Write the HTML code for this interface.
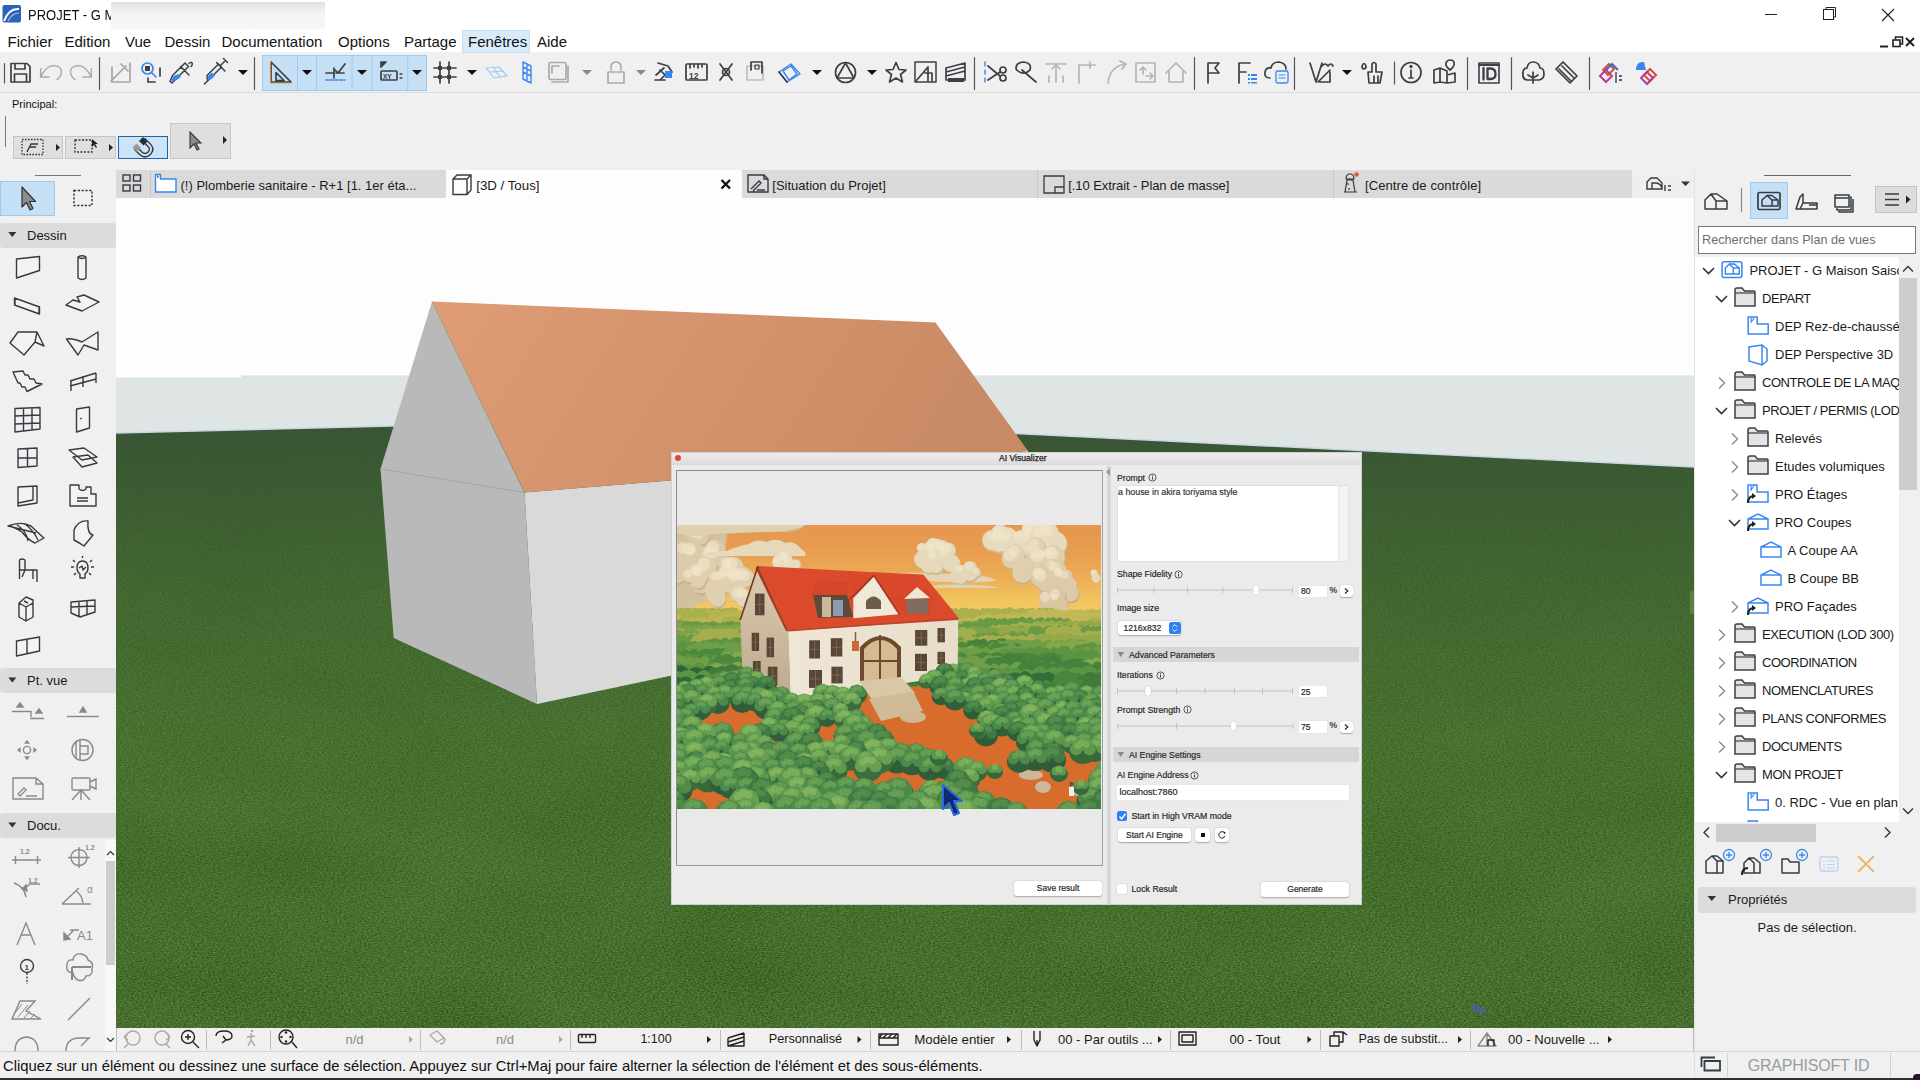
<!DOCTYPE html>
<html><head><meta charset="utf-8">
<style>
*{box-sizing:border-box}
html,body{margin:0;padding:0;width:1920px;height:1080px;overflow:hidden;background:#f0f0f0;font-family:"Liberation Sans",sans-serif;color:#1a1a1a}
.a{position:absolute}
.t{position:absolute;white-space:nowrap;line-height:1}
svg{position:absolute;overflow:visible}
#dialog .t{-webkit-text-stroke:0.18px currentColor}
</style></head><body>

<!-- title + menu -->
<div class="a" style="left:0;top:0;width:1920px;height:52px;background:#fff"></div>
<svg style="left:0;top:0" width="30" height="28"><rect x="2.5" y="5" width="18.5" height="17.5" rx="2" fill="#2d62b8"/><path d="M4 21 Q9 8 19 9" stroke="#fff" stroke-width="2" fill="none"/><path d="M8 21 Q12 13 19 13" stroke="#9cc3f0" stroke-width="1.2" fill="none"/></svg>
<div class="t" style="left:27.5px;top:7px;font-size:15.5px;color:#111;transform:scaleX(0.84);transform-origin:0 0">PROJET - G M</div>
<div class="a" style="left:111px;top:2px;width:214px;height:27px;background:linear-gradient(#e2e2e2,#f3f3f3 40%,#f6f6f6)"></div>

<div id="menu" style="font-size:15px;color:#111">
<svg style="left:1763px;top:8px" width="140" height="14"><path d="M2 6.5 H14" stroke="#222" stroke-width="1"/><rect x="60.5" y="1.5" width="10" height="10" fill="none" stroke="#222" stroke-width="1"/><path d="M63 1.5 V-0.5 H72.5 V9 H70.5" fill="none" stroke="#222" stroke-width="1"/><path d="M119 1 L131 13 M131 1 L119 13" stroke="#222" stroke-width="1.1"/></svg>
<div class="a" style="left:461.5px;top:29.5px;width:68px;height:23px;background:#d9ebf9;border:1px solid #c4e0f7"></div>
<div class="t" style="left:7.5px;top:34px">Fichier</div>
<div class="t" style="left:64.5px;top:34px">Edition</div>
<div class="t" style="left:125px;top:34px">Vue</div>
<div class="t" style="left:164.5px;top:34px">Dessin</div>
<div class="t" style="left:221.5px;top:34px">Documentation</div>
<div class="t" style="left:338px;top:34px">Options</div>
<div class="t" style="left:404px;top:34px">Partage</div>
<div class="t" style="left:468px;top:34px">Fenêtres</div>
<div class="t" style="left:537px;top:34px">Aide</div>
<svg style="left:1876px;top:34px" width="44" height="16"><path d="M4 12.5 H12" stroke="#222" stroke-width="2"/><rect x="17" y="6" width="7" height="6.5" fill="none" stroke="#222" stroke-width="1.6"/><path d="M19.5 5.5 V3 H26.5 V10 H24" fill="none" stroke="#222" stroke-width="1.6"/><path d="M30 4 L38 12 M38 4 L30 12" stroke="#222" stroke-width="2"/></svg>
</div>

<!-- toolbar -->
<div class="a" style="left:0;top:92px;width:1920px;height:1px;background:#dcdcdc"></div>
<div id="toolbar">
<div class="a" style="left:262px;top:55px;width:165px;height:35.5px;background:#c5dff5;border:1px solid #99cbf3"></div>
<svg style="left:0;top:52px" width="1920" height="41" viewBox="0 52 1920 41">
<g stroke="#3b4045" stroke-width="1.7" fill="none" stroke-linejoin="round" stroke-linecap="round">
<!-- separators -->
<path d="M4.5 63.5 V83 M99.5 57.5 V89.5 M254.5 57.5 V89.5 M974.5 57.5 V89.5 M1194.5 57.5 V89.5 M1294.5 57.5 V89.5 M1394.5 62 V84 M1467.5 57.5 V89.5 M1511.5 57.5 V89.5 M1589.5 57.5 V89.5" stroke="#555" stroke-width="1.2"/>
<!-- save -->
<path d="M11 63.5 H27 L30 66.5 V82 H11 Z M15 63.5 V69 H25 V63.5 M14.5 82 V74 H26.5 V82"/>
<!-- undo redo (gray) -->
<g stroke="#a4aaad" stroke-width="1.4" stroke-linecap="butt" stroke-linejoin="miter"><path d="M40.6 68 V77 H49.6 M41 76.5 Q46 66 53.6 65.6 Q61.5 65.8 61.5 72 Q61 77.5 56.3 79.8"/><path d="M91.4 68 V77 H82.4 M91 76.5 Q86 66 78.4 65.6 Q70.5 65.8 70.5 72 Q71 77.5 75.7 79.8"/></g>
<!-- gray select icon -->
<g stroke="#a5a5a5"><path d="M112 67 V82 H130 V63 M111 81 L126 66 M121 64 L128 71"/></g>
<!-- magnifier select -->
<circle cx="147.5" cy="68.5" r="5.5" stroke="#3a86f0"/><path d="M151.5 72.5 L156 77" stroke="#3a86f0"/><rect x="145" y="66" width="5" height="5" fill="#3b4045" stroke="none"/><path d="M160 68 V76 M148 82 H155 M148 78 V82"/>
<!-- pipette -->
<path d="M172 83 L176 79 L188.5 66.5 L185 63 L172.5 75.5 L170 81.5 Z M189 63.5 Q191 61.5 192 63 Q193 64.5 191 66.5 M180.5 66.5 L189 75" stroke-width="1.5"/><path d="M171.3 81.5 L173 76.5 L178 74 L181 77 L176 80.5 Z" fill="#3a86f0" stroke="none"/>
<!-- syringe -->
<path d="M204.5 84 L208 80.5 M207.5 81 L210 78.5 L221.5 67 L218.5 64 L207 75.5 Z M216.5 62.5 L225 71 M220 66 L225.5 60.5 M223.5 58.5 L227.5 62.5" stroke-width="1.5"/><path d="M207.5 80 L208 76 L212 72.5 L215 75.5 L211 79.5 Z" fill="#3a86f0" stroke="none"/>
<!-- dropdown -->
<path d="M238 70 H248 L243 75 Z" fill="#111" stroke="none"/>
<!-- group 1: triangle ruler -->
<path d="M271 62 L291 82 H271 Z M276 72.5 L284 80.5 H276 Z"/>
<path d="M270.5 62 V83 H291" stroke="#e68a2e" stroke-width="1.2" stroke-dasharray="2 1.5"/>
<path d="M302 70 H312 L307 75 Z" fill="#111" stroke="none"/>
<path d="M297.5 56 V90 M316.7 56 V90 M352 56 V90 M372 56 V90 M407.7 56 V90" stroke="#9ecaf0" stroke-width="1"/>
<!-- group 2: guide -->
<path d="M326 73 H333 M334 68 V78 M336 73 H344 M335 70 L338 73 L345 64"/><path d="M326 80 H345" stroke="#3a86f0" stroke-width="1.4" stroke-dasharray="3 1.5"/>
<path d="M357 70 H367 L362 75 Z" fill="#111" stroke="none"/>
<!-- group 3: XY -->
<rect x="381" y="71" width="16" height="9" rx="1"/><path d="M381 62 L381 67 M381 62 L386 62 L381 67 Z" fill="#3b4045"/><text x="383" y="78.5" font-size="6.5" font-weight="bold" fill="#3b4045" stroke="none" font-family="Liberation Sans">XY</text><path d="M400 74 H402 M400 78 H402" stroke-width="1.3"/>
<path d="M412 70 H422 L417 75 Z" fill="#111" stroke="none"/>
<!-- grid -->
<path d="M434 68 H456 M434 77 H456 M440 62 V83 M449 62 V83"/><g fill="#3b4045" stroke="none"><rect x="438" y="66" width="4" height="4"/><rect x="447" y="66" width="4" height="4"/><rect x="438" y="75" width="4" height="4"/><rect x="447" y="75" width="4" height="4"/></g>
<path d="M467 70 H477 L472 75 Z" fill="#111" stroke="none"/>
<!-- light plane -->
<path d="M486 68 L499 67 L507 76 L494 78 Z M490 72 L503 71 M493 67 L500 77" stroke="#9ccaf5" stroke-width="1.2"/>
<!-- blue grid -->
<path d="M523 62 L531 66 V83 L523 79 Z M523 67 L531 71 M523 72 L531 76 M527 64 V81" stroke="#3a86f0" stroke-width="1.4"/>
<!-- gray square -->
<g stroke="#aaa"><rect x="549" y="62.5" width="17" height="17" rx="1.5"/><path d="M568 66 V82 H552"/><path d="M552 73 V66 H559"/></g>
<path d="M582 70 H592 L587 75 Z" fill="#888" stroke="none"/>
<!-- clip -->
<g stroke="#aaa"><path d="M611 70 Q610 62 616 62 Q622 62 621 70 M608 72 H624 V83 H608 Z"/></g>
<path d="M636 70 H646 L641 75 Z" fill="#888" stroke="none"/>
<!-- hammer tool -->
<path d="M655 80 H665 M656 75 L664 68 M658 63 L668 66 L672 72 L666 76 L660 70 M660 80 L668 72"/><rect x="665" y="71" width="7" height="7" fill="#3a86f0" stroke="none"/>
<!-- 12 ruler -->
<rect x="686" y="64" width="21" height="16" rx="1"/><path d="M690 64 V68 M694 64 V67 M698 64 V68 M702 64 V67"/><text x="689" y="78.5" font-size="8.5" font-weight="bold" fill="#3b4045" stroke="none" font-family="Liberation Sans">12</text>
<!-- X -->
<path d="M720 64 L732 80 M732 64 L720 80"/><circle cx="726" cy="72" r="3.5"/>
<!-- dashed square -->
<g stroke="#aaa" stroke-width="1.2"><rect x="747" y="66" width="16" height="14"/></g><path d="M751 62 H762 V73 M751 62 V70"/><rect x="755" y="65" width="4" height="4" stroke-width="1.2"/>
<!-- blue diamond -->
<path d="M779 72 L791 64 L800 74 L787 82 Z M783 71 L791 66 L797 74 L789 80 Z" stroke="#3a86f0" stroke-width="1.4"/><path d="M779 72 L787 82" stroke="#3b4045"/>
<path d="M812 70 H822 L817 75 Z" fill="#111" stroke="none"/>
<!-- circle triangle -->
<circle cx="845.5" cy="72.5" r="10"/><path d="M845.5 63 L837 78 H854 Z"/>
<path d="M867 70 H877 L872 75 Z" fill="#111" stroke="none"/>
<!-- star -->
<path d="M896 62.5 L899 69.5 L906 70 L900.5 74.5 L902.5 82 L896 78 L889.5 82 L891.5 74.5 L886 70 L893 69.5 Z"/>
<!-- doc -->
<rect x="915" y="62" width="21" height="20" stroke-width="1.5"/><path d="M916 81 L928 67 V81 M925 73 H932 V81"/>
<!-- layers -->
<path d="M946 68 L965 63 M946 72 L965 67 M946 76 L965 71 M946 68 V80 H965 V63"/><rect x="948" y="78" width="16" height="4" fill="#3b4045" stroke="none"/>
<!-- scissors -->
<path d="M985 62 V66 M985 70 V74 M985 78 V82" stroke="#3a86f0" stroke-width="1.4"/><circle cx="1003" cy="70" r="3"/><circle cx="1003" cy="78" r="3"/><path d="M988 66 L1000 76 M988 80 L1000 72"/>
<!-- magic wand -->
<path d="M1022 70 L1036 82 M1016 69 Q1016 62 1024 62 Q1032 63 1030 70 L1026 73 Q1020 74 1016 69 Z"/>
<!-- gray tools -->
<g stroke="#b5b5b5"><path d="M1046 64 H1066 M1056 65 V82 M1052 69 L1056 65 L1060 69 M1049 76 V82 M1063 76 V82"/>
<path d="M1079 83 V65 H1095 M1090 62 V68"/>
<path d="M1108 83 Q1110 66 1126 64 M1120 61 L1126 64 L1122 69"/>
<rect x="1136" y="63" width="19" height="19"/><path d="M1140 70 L1143 67 L1146 70 M1143 67 V74 M1146 76 H1152 M1150 73 L1153 76 L1150 79"/>
<path d="M1166 73 L1176 63 L1186 73 M1169 71 V82 H1183 V71"/></g>
<!-- flag -->
<path d="M1208 83 V63 H1219 L1215 68 L1219 73 H1208"/>
<!-- F list -->
<path d="M1239 83 V63 H1250 M1239 72 H1246"/><g fill="#3a86f0" stroke="none"><rect x="1248" y="74" width="2" height="2"/><rect x="1251" y="74" width="6" height="2"/><rect x="1248" y="78" width="2" height="2"/><rect x="1251" y="78" width="6" height="2"/><rect x="1248" y="82" width="2" height="1.5"/><rect x="1251" y="82" width="6" height="1.5"/></g>
<!-- cloud -->
<path d="M1270 78 Q1264 78 1265 72 Q1266 67 1271 68 Q1272 62 1279 62 Q1286 63 1286 69"/><rect x="1276" y="71" width="12" height="12" rx="1.5" stroke="#3a86f0" stroke-width="1.3"/><path d="M1279 75 H1285 M1279 78 H1285" stroke="#3a86f0" stroke-width="1.2"/>
<!-- V check -->
<path d="M1310 63 L1316 82 L1322 63 M1318 82 L1330 70 M1320 82 H1330 V72 M1322 66 Q1325 62 1328 66 Q1331 62 1333 66"/>
<path d="M1342 70 H1352 L1347 75 Z" fill="#111" stroke="none"/>
<!-- brush -->
<path d="M1362 66 Q1364 61 1366 66 Q1366 69 1364 69 Q1362 69 1362 66 Z M1369 83 H1380 L1382 72 L1376 72 V64 Q1374 61 1372 64 V72 H1368 Z M1374 76 V83 M1378 76 V83"/>
<!-- info -->
<circle cx="1411" cy="72.5" r="10"/><path d="M1411 70 V78 M1409 78 H1413"/><circle cx="1411" cy="66.5" r="0.8" fill="#3b4045"/>
<!-- map -->
<path d="M1434 70 L1440 68 V82 L1434 83 Z M1440 68 L1447 71 V83 L1440 82 M1447 75 L1455 73 V82 L1447 83"/><path d="M1450 70 Q1445 66 1446 63 Q1447 60 1450 60 Q1454 60 1454 63 Q1455 66 1450 70 Z"/>
<!-- ID -->
<rect x="1479" y="63" width="20" height="20" stroke-width="1.6"/><path d="M1479 65 H1499" stroke-width="2"/><path d="M1483.5 68 V79.5 M1487.5 68.5 H1490.5 Q1495.5 68.5 1495.5 74 Q1495.5 79 1490.5 79 H1487.5 Z" stroke-width="2.3"/>
<!-- tree -->
<path d="M1533 83 V72 M1528 75 L1533 78 L1538 75 M1527 80 Q1522 79 1523 73 Q1523 68 1527 68 Q1528 62 1533 62 Q1539 62 1540 68 Q1544 68 1544 74 Q1544 79 1539 80 Z"/>
<!-- tag -->
<path d="M1558 67 L1563 62 L1577 76 L1570 83 L1556 69 Z M1562 66 L1574 78 M1559 69 L1571 81"/>
</g>
<!-- colorful icons -->
<g fill="none" stroke-width="2">
<path d="M1603 70 L1609 64 L1614 69 L1608 75 Z" stroke="#d9502f"/><path d="M1600 76 L1606 70 L1612 76 L1606 82 Z" stroke="#b43d9a"/><path d="M1606 70 L1612 64 L1618 70" stroke="#3a6ac8"/><path d="M1616 72 V83 M1619 76 H1622 M1619 80 H1622" stroke="#333" stroke-width="1.3"/>
<path d="M1636 70 Q1636 61 1644 62 L1646 70 Z" fill="#3a86f0" stroke="none"/><path d="M1644 75 L1650 69 L1656 75 L1650 81 Z" stroke="#d9502f"/><path d="M1641 78 L1647 72 L1653 78 L1647 84 Z" stroke="#b43d9a"/>
</g>
</svg>
</div>

<!-- info box -->
<div class="t" style="left:12px;top:99px;font-size:11px;color:#111">Principal:</div>
<div id="infobox">
<div class="a" style="left:5px;top:116px;width:1px;height:31px;background:#777"></div>
<div class="a" style="left:13px;top:136px;width:50px;height:23px;background:#dfdfdf;border:1px solid #c6c6c6"></div>
<div class="a" style="left:65px;top:136px;width:51px;height:23px;background:#dfdfdf;border:1px solid #c6c6c6"></div>
<div class="a" style="left:118px;top:136px;width:50px;height:23px;background:#cce4f7;border:1.5px solid #1f63b0"></div>
<div class="a" style="left:170px;top:123px;width:61px;height:36px;background:#dfdfdf;border:1px solid #c6c6c6"></div>
<svg style="left:0;top:120px" width="240" height="42" viewBox="0 120 240 42">
<g fill="none" stroke="#333" stroke-width="1.3">
<rect x="22" y="139.5" width="21" height="15" stroke-dasharray="1.6 1.4"/><path d="M27 152 L31 144 H38 M30 147 H36"/>
<rect x="75" y="140" width="17" height="12" stroke-dasharray="2 1.5"/>
<g transform="translate(-1,-2.5)"><path d="M144.5 142 L150.5 148 Q154 152 150 156 Q146 159.5 142 156 L136.5 150.5" stroke="#2e3438" stroke-width="4.6" stroke-linecap="butt"/><path d="M144.5 142 L150.5 148 Q154 152 150 156 Q146 159.5 142 156 L136.5 150.5" stroke="#cce4f7" stroke-width="2" stroke-linecap="butt"/></g>
</g>
<path d="M56 144 L60 147.5 L56 151 Z M109 144 L113 147.5 L109 151 Z M223 136 L227 140 L223 144 Z" fill="#222"/>
<path d="M92 139 L92 147 L94 145 L96 148 L97 147 L95 144 L98 144 Z" fill="#222"/>
<g transform="translate(-1,-0.5)"><path d="M144 137.5 L148.5 142 L144.5 146 L140 141.5 Z" fill="#2a2f33"/><path d="M137.5 144 L142 148.5 L138 152.5 L133.5 148 Z" fill="#9a9a9a"/></g>
<path d="M190 132 L190 148 L194 144 L197 150 L199 149 L196 143 L201 143 Z" fill="#8a8a8a" stroke="#333" stroke-width="1.1"/>
</svg>
</div>

<!-- left toolbox -->
<div id="left">
<div class="a" style="left:35px;top:175px;width:46px;height:1px;background:#777"></div>
<div class="a" style="left:0;top:181px;width:55px;height:35px;background:#c5dff5;border:1px solid #99cbf3"></div>
<div class="a" style="left:0;top:223px;width:116px;height:25px;background:#dcdcdc;border-radius:3px"></div>
<div class="t" style="left:27px;top:229px;font-size:13px;color:#1a1a1a">Dessin</div>
<div class="a" style="left:0;top:668.3px;width:116px;height:24.4px;background:#dcdcdc;border-radius:3px"></div>
<div class="t" style="left:27px;top:674px;font-size:13px;color:#1a1a1a">Pt. vue</div>
<div class="a" style="left:0;top:813.3px;width:116px;height:24.4px;background:#dcdcdc;border-radius:3px"></div>
<div class="t" style="left:27px;top:819px;font-size:13px;color:#1a1a1a">Docu.</div>
<div class="a" style="left:105px;top:840px;width:11px;height:211px;background:#f7f7f7"></div>
<div class="a" style="left:106px;top:860.6px;width:9px;height:104.5px;background:#cdcdcd"></div>
<svg style="left:0;top:170px" width="116" height="881" viewBox="0 170 116 881">
<path d="M8.3 232 H16.3 L12.3 237 Z M8.3 677.5 H16.3 L12.3 682.5 Z M8.3 822.5 H16.3 L12.3 827.5 Z" fill="#333"/>
<path d="M22 187 L22 207 L26.5 202.5 L30 210 L33 208.5 L29.5 201.5 L35.5 201.5 Z" fill="#8c8c8c" stroke="#333" stroke-width="1.2" stroke-linejoin="round"/>
<rect x="74" y="190.5" width="18" height="15" fill="none" stroke="#333" stroke-width="1.4" stroke-dasharray="2.2 1.6"/>
<path d="M107 855 L110.5 851.5 L114 855 M107 1038 L110.5 1041.5 L114 1038" fill="none" stroke="#333" stroke-width="1.2"/>
<g fill="#f3f3f3" stroke="#353b40" stroke-width="1.4" stroke-linejoin="round">
<!-- row1 wall, column -->
<path d="M16.5 259 L39.5 256.5 V270.5 L16.5 278 Z"/>
<path d="M78 257 Q82 254.5 86 257 V278 Q82 281 78 278 Z M78 257 Q82 260 86 257" />
<!-- row2 beam, slab -->
<path d="M14.5 298 L39.5 307 V314 L14.5 305 Z M15 298 V305 M39 307 V314"/>
<path d="M66 305 L73 300 L80 302 L77 297 L84 295 L99 302 L82 311 Z"/>
<!-- row3 roof, shell -->
<path d="M10 343 L18 332 H37 L44 346 L35 342 L24 355 Z M37 332 L35 342"/>
<path d="M66.5 339 L78 355 L84 345 L98 350 L98 332 L82 342 Q72 338 66.5 339 Z"/>
<!-- row4 stair, railing -->
<path d="M13 372 L23 371 L25 375 L28 375 L30 379 L34 379 L36 383 L42 384 L27 391.5 L25 387 L22 387 L20 383 L18 383 Z"/>
<path d="M70 381 L96 373 M70 386 L96 379 M71 391 V381 M83 387 V376 M96 383 V373" fill="none"/>
<!-- row5 curtain wall, door -->
<path d="M15 408.5 L40 407.5 V429 L15 432 Z M15 416 L40 415 M15 424 L40 423 M23.5 408 V431 M32 408 V430" fill="none"/>
<path d="M76.5 409 L89.5 407 V428 L76.5 432 Z"/><path d="M80 419 L82 418" stroke-width="1.2"/>
<!-- row6 window, skylight -->
<path d="M18 449 L37 448 V466 L18 467.5 Z M18 458 H37 M27.5 448.5 V467" fill="none"/>
<path d="M69 450 L84 448 L97 457 L82 460 Z M73 457 L88 455 L97 463 L82 467 Z"/>
<!-- row7 corner window, object-ish -->
<path d="M18 487 L37 486 V503 L18 506 Z M33 486 V500 L18 503"/>
<path d="M70 485 H79 V489 Q83 492 86 489 V487 H91 V494 H96 V506 H70 Z M77 498 H88 M77 501 H88" />
<!-- row8 mesh, morph -->
<path d="M8 526 Q18 522 25 524 L31 526 Q37 532 44 538 L35 543 Q28 540 22 532 Q15 527 8 526 Z M17 525 Q26 530 28 541 M25 524 Q33 530 38 540 M12 527 L36 533" fill="none"/>
<path d="M74 530 Q78 520 88 521 Q87 534 93 535 L84 546 Q78 542 74 540 Z"/>
<!-- row9 chair, lamp -->
<path d="M19.5 579 V560 Q22 558 25 560 V570 H37 V582 M19.5 570 L37 570 M25 570 L22 577 M33 570 V579" fill="none"/>
<path d="M77 568 Q77 561 82.5 561 Q88 561 88 568 Q88 572 85 574 V578 H80 V574 Q77 572 77 568 Z M79 568 L82 566 L83 570 L86 567"/><path d="M82.5 556 V558 M73 560 L75 562 M92 560 L90 562 M71 567 H74 M91 567 H94 M74 575 L76 573 M91 575 L89 573" fill="none"/>
<!-- row10 object, curtain wall2 -->
<path d="M19 603 L26 597 L33 600 V617 L26 621 L19 617 Z M19 603 L26 607 L33 603 M26 607 V621 M24 601 L28 603"/>
<path d="M71 602 L95 600 V612 L80 617 L71 613 Z M71 607 L95 606 M79 602 V617 M87 601 V614" fill="none"/>
<!-- row11 opening -->
<path d="M16.5 641 L39.5 637 V651 L16.5 656 Z M27 639 V654" />
</g>
<!-- Pt. vue icons (gray) -->
<g fill="none" stroke="#848b8d" stroke-width="1.4">
<path d="M12 711.5 H31 V717 M30 718.5 H44"/><path d="M17 707 L20 703 L23 707 Z M36 713 L39 709 L42 713 Z" fill="#848b8d"/>
<path d="M67 716.5 H99"/><path d="M80 712 L83 707 L86 712 Z" fill="#848b8d"/>
<circle cx="27" cy="750" r="3.6"/><path d="M25.5 743 L27 741 L28.5 743 Z M25.5 757 L27 759 L28.5 757 Z M20 748.5 L18 750 L20 751.5 Z M34 748.5 L36 750 L34 751.5 Z" fill="#848b8d"/>
<circle cx="82.5" cy="750" r="10.5"/><path d="M76 741 V759 M80 740 V760 M80 746 H88 V754 H80"/>
<path d="M13 778 H36 L43 784 V799 H13 Z M36 778 V784 H43 M18 794 L24 788 L26 790 L20 796 Z M26 796 H37"/>
<rect x="72" y="778" width="18" height="12" rx="1"/><path d="M90 782 L96 779 V789 L90 786 M81 790 V800 M81 790 L72 800 M81 790 L90 800"/>
</g>
<!-- Docu icons -->
<g fill="none" stroke="#848b8d" stroke-width="1.4">
<path d="M12 860 H41 M15.5 856 V864 M37.5 856 V864"/><text x="20" y="854" font-size="7" font-weight="bold" fill="#848b8d" stroke="none" font-family="Liberation Sans">1.2</text>
<circle cx="79" cy="857.5" r="8"/><path d="M79 847 V868 M68 857.5 H90"/><text x="85" y="850" font-size="7" font-weight="bold" fill="#848b8d" stroke="none" font-family="Liberation Sans">1.2</text>
<path d="M14 883 Q24 886 26 897 M23 890 L30 884 H40"/><path d="M22 889 L26 885 L27 891 Z" fill="#848b8d"/><text x="28" y="883" font-size="7" font-weight="bold" fill="#848b8d" stroke="none" font-family="Liberation Sans">1.2</text>
<path d="M62 904 L79 888 M62 904 H91 M76 891 Q82 895 83 903"/><text x="87" y="893" font-size="10" fill="#848b8d" stroke="none" font-family="Liberation Sans">α</text>
<path d="M17 945 L26 923 L35 945 M21 935 H31"/>
<path d="M65 939 L73 931 M79 930 H70"/><path d="M64 940 L64 933 L70 939 Z" fill="#848b8d"/><text x="77" y="940" font-size="13" fill="#848b8d" stroke="none" font-family="Liberation Sans">A1</text>
<circle cx="27" cy="966" r="6.5" stroke="#3a4045"/><path d="M27 973 V984" stroke="#3a4045" stroke-dasharray="2 1.5"/><text x="24.5" y="969.5" font-size="8" font-weight="bold" fill="#3a4045" stroke="none" font-family="Liberation Sans">1</text>
<path d="M73 973 Q65 972 67 965 Q67 959 73 960 Q74 953 81 954 Q87 955 88 960 Q94 962 92 969 Q93 976 86 976 Q84 982 78 980 Q74 978 73 973 Z"/><path d="M72 967 H91 M72 967 V980" stroke-width="2"/>
<path d="M12 1019 L20 1001 H35 L26 1011 L41 1019 Z"/><path d="M15 1013 L22 1004 M18 1017 L28 1005 M24 1018 L30 1011 M31 1018 L35 1014" stroke-width="1"/>
<path d="M68 1020 L90 998"/>
<path d="M15 1051 Q15 1038 26.5 1037 Q38 1038 38 1051"/>
<path d="M66 1051 Q66 1039 78 1038 H89 L81 1046"/>
</g>
</svg>
</div>

<!-- tabs -->
<div id="tabs" style="font-size:13px;color:#1a1a1a">
<div class="a" style="left:116px;top:169.8px;width:1516px;height:28.2px;background:#dadada"></div>
<div class="a" style="left:1631.7px;top:169.8px;width:62.3px;height:28.2px;background:#efefef"></div>
<div class="a" style="left:445.8px;top:169.8px;width:296px;height:28.2px;background:#fdfdfd"></div>
<div class="a" style="left:149.5px;top:170px;width:1px;height:28px;background:#c8c8c8"></div>
<div class="a" style="left:1037px;top:170px;width:1px;height:28px;background:#c8c8c8"></div>
<div class="a" style="left:1333px;top:170px;width:1px;height:28px;background:#c8c8c8"></div>
<div class="t" style="left:180.5px;top:178.5px">(!) Plomberie sanitaire - R+1 [1. 1er éta...</div>
<div class="t" style="left:476.2px;top:178.5px;font-size:13.3px">[3D / Tous]</div>
<div class="t" style="left:772.3px;top:178.5px">[Situation du Projet]</div>
<div class="t" style="left:1068.3px;top:178.5px;letter-spacing:-0.08px">[.10 Extrait - Plan de masse]</div>
<div class="t" style="left:1365px;top:178.5px;letter-spacing:0.1px">[Centre de contrôle]</div>
<svg style="left:116px;top:170px" width="1578" height="28" viewBox="116 170 1578 28">
<g fill="none" stroke="#353b40" stroke-width="1.4">
<rect x="123" y="175" width="7" height="6"/><rect x="133.5" y="175" width="7" height="6"/><rect x="123" y="185" width="7" height="6"/><rect x="133.5" y="185" width="7" height="6"/>
<path d="M155.5 174.5 H160.5 V179 H163 V179 H176 V192 H155.5 Z" stroke="#3a86f0" fill="#fff"/><path d="M157.5 175 V178 L159 176" stroke="#3a86f0" stroke-width="1"/>
<path d="M453 179 L457 175 H471 V190 L467 194.5 H453 Z M453 179 H467 V194.5 M467 179 L471 175"/>
<path d="M748 175 H764 L768 179 V192 H748 Z M764 175 V179 H768 M751 189 L759 181 L761 183 L753 191 M757 190 H765"/>
<path d="M1044 176 H1064 V193 H1044 Z M1055 193 V187 H1064" stroke-width="1.3"/>
<path d="M1345 192 L1347 180 H1353 L1355 192 Z M1344 192 H1357 M1346 179 H1354 Q1354 174 1350 174 Q1346 174 1346 179 M1348 183 V185 M1349 188 V190" stroke-width="1.2"/>
<path d="M1647 189 V182 L1651 178 H1657 L1662 183 V189 Z M1652 189 V183 H1657 Q1662 185 1662 189 M1665 185 V191 M1668 186 H1671 M1668 190 H1671"/>
</g>
<circle cx="1356.5" cy="174.5" r="2.3" fill="#e05a30"/>
<path d="M721.5 180 L730 188.5 M730 180 L721.5 188.5" stroke="#111" stroke-width="2.4"/>
<path d="M1681 181.5 H1690 L1685.5 186 Z" fill="#333"/>
</svg>
</div>

<!-- 3D view -->
<div id="view">
<svg style="left:116px;top:198px" width="1578" height="830" viewBox="116 198 1578 830">
<defs>
<linearGradient id="grass" x1="0" y1="0" x2="0" y2="1">
<stop offset="0" stop-color="#395436"/><stop offset="0.1" stop-color="#3c5b33"/><stop offset="0.3" stop-color="#436831"/><stop offset="0.54" stop-color="#487130"/><stop offset="1" stop-color="#466d2d"/>
</linearGradient>
<linearGradient id="roof" x1="0" y1="0" x2="1" y2="0.2">
<stop offset="0" stop-color="#df9c76"/><stop offset="1" stop-color="#c88a64"/>
</linearGradient>
<filter id="noise" x="0" y="0" width="100%" height="100%" color-interpolation-filters="sRGB">
<feTurbulence type="fractalNoise" baseFrequency="0.45 0.8" numOctaves="2" seed="3" result="n"/>
<feColorMatrix in="n" type="matrix" values="1 0 0 0 0  1 0 0 0 0  1 0 0 0 0  0 0 0 0 1" result="g"/>
<feTurbulence type="fractalNoise" baseFrequency="0.006 0.012" numOctaves="2" seed="7" result="n2"/>
<feColorMatrix in="n2" type="matrix" values="1 0 0 0 0  1 0 0 0 0  1 0 0 0 0  0 0 0 0 1" result="g2"/>
<feComposite in="SourceGraphic" in2="g" operator="arithmetic" k1="0" k2="1" k3="0.32" k4="-0.16" result="s1"/>
<feComposite in="s1" in2="g2" operator="arithmetic" k1="0" k2="1" k3="0.07" k4="-0.035" result="s2"/>
<feComposite in="s2" in2="SourceGraphic" operator="in"/>
</filter>
<linearGradient id="gm" x1="0" y1="0" x2="0" y2="1"><stop offset="0" stop-color="#000"/><stop offset="0.3" stop-color="#555"/><stop offset="1" stop-color="#fff"/></linearGradient>
<mask id="gmask" maskUnits="userSpaceOnUse" x="116" y="418" width="1578" height="610"><rect x="116" y="418" width="1578" height="610" fill="url(#gm)"/></mask>
</defs>
<rect x="116" y="198" width="1578" height="830" fill="#fdfdfd"/>
<rect x="116" y="377.5" width="125" height="60" fill="#dfe5e4"/>
<rect x="241" y="375.3" width="1453" height="100" fill="#dfe5e4"/>
<polygon points="116,433 700,418 1694,467 1694,1028 116,1028" fill="url(#grass)"/>
<g filter="url(#noise)" mask="url(#gmask)">
<polygon points="116,433 700,418 1694,467 1694,1028 116,1028" fill="url(#grass)"/>
</g>
<rect x="1690" y="591" width="5" height="23" rx="2" fill="#5f8a48" opacity=".8"/>
<rect x="1471" y="1006" width="14" height="6" rx="1" fill="#4a5fa0" transform="rotate(20 1478 1009)" opacity=".8"/>
<polyline points="116,433 700,418 1694,467" stroke="#c9d6e6" stroke-width="1.5" fill="none"/>
<!-- house -->
<polygon points="524.5,492.5 1028,451 1028,600 537,704" fill="#d9d9d9"/>
<polygon points="432,301.5 380.5,469 393.7,638 537,704 524.5,492.5" fill="#b9b9b9"/>
<line x1="380.5" y1="469" x2="524.5" y2="492.5" stroke="#9fa7a7" stroke-width="1"/>
<polygon points="432,301.5 935.5,322.5 1028,451 524.5,492.5" fill="url(#roof)"/>
<polyline points="432,301.5 524.5,492.5" stroke="#8f9a6a" stroke-width="0.8" fill="none"/>
</svg>
</div>

<!-- dialog -->
<div id="dialog" style="font-size:8.7px;color:#262626">
<div class="a" style="left:671px;top:452px;width:691px;height:453px;background:#ebebeb;border:1px solid #d0d0d0"></div>
<div class="a" style="left:672px;top:453px;width:689px;height:12px;background:linear-gradient(#ececec,#dcdcdc)"></div>
<div class="a" style="left:674.5px;top:454.7px;width:6.6px;height:6.6px;border-radius:50%;background:#e4472e"></div>
<div class="t" style="left:999px;top:454px;font-size:8.6px;color:#1a1a1a;-webkit-text-stroke:0.25px #1a1a1a">AI Visualizer</div>
<div class="a" style="left:676px;top:470px;width:427px;height:396px;background:#e9e9e9;border:1.5px solid #8c8c8c;border-right-color:#a0a0a0;border-bottom-color:#9a9a9a"></div>
<svg style="left:677px;top:525px;overflow:hidden" width="424" height="284" viewBox="0 0 424 284">
<defs>
<linearGradient id="sky" x1="0" y1="0" x2="0" y2="1"><stop offset="0" stop-color="#e6964f"/><stop offset="0.08" stop-color="#e89c50"/><stop offset="0.18" stop-color="#ecac55"/><stop offset="0.26" stop-color="#f2c25d"/><stop offset="0.32" stop-color="#f4cc66"/><stop offset="1" stop-color="#f5cf68"/></linearGradient>
<linearGradient id="forest" x1="0" y1="0" x2="0" y2="1"><stop offset="0" stop-color="#b8b250"/><stop offset="0.08" stop-color="#98aa48"/><stop offset="0.25" stop-color="#6a9a42"/><stop offset="0.5" stop-color="#4c883d"/><stop offset="1" stop-color="#3a753a"/></linearGradient>
<linearGradient id="wallL" x1="0" y1="0" x2="0" y2="1"><stop offset="0" stop-color="#dccbb0"/><stop offset="1" stop-color="#bda98c"/></linearGradient>
<linearGradient id="wallF" x1="0" y1="0" x2="1" y2="0"><stop offset="0" stop-color="#efe6d6"/><stop offset="1" stop-color="#e7ddca"/></linearGradient>
<linearGradient id="cl" x1="0" y1="0" x2="0" y2="1"><stop offset="0" stop-color="#eadfc3"/><stop offset="1" stop-color="#cdbb98"/></linearGradient>
<filter id="bl" x="-5%" y="-5%" width="110%" height="110%"><feGaussianBlur stdDeviation="0.7"/></filter><filter id="bl2" x="-5%" y="-5%" width="110%" height="110%"><feGaussianBlur stdDeviation="0.5"/></filter><filter id="bl3" x="-5%" y="-5%" width="110%" height="110%"><feGaussianBlur stdDeviation="2"/></filter>
</defs>
<rect width="424" height="284" fill="url(#sky)"/>
<g filter="url(#bl)">
<path d="M0 0 H128 Q126 5 110 7 Q80 6 50 9 L45 60 Q30 82 0 86 Z" fill="#d3c09c"/>
<circle cx="28" cy="53" r="9.8" fill="#c7b28e"/>
<circle cx="10" cy="34" r="10.8" fill="#c7b28e"/>
<circle cx="24" cy="13" r="9.0" fill="#c7b28e"/>
<circle cx="19" cy="33" r="8.2" fill="#c7b28e"/>
<circle cx="15" cy="29" r="10.8" fill="#c7b28e"/>
<circle cx="20" cy="44" r="6.3" fill="#c7b28e"/>
<circle cx="37" cy="32" r="11.3" fill="#c7b28e"/>
<circle cx="17" cy="29" r="8.0" fill="#c7b28e"/>
<circle cx="13" cy="32" r="11.7" fill="#c7b28e"/>
<circle cx="14" cy="39" r="10.9" fill="#c7b28e"/>
<circle cx="34" cy="52" r="8.7" fill="#c7b28e"/>
<circle cx="8" cy="27" r="8.9" fill="#c7b28e"/>
<circle cx="20" cy="36" r="11.2" fill="#c7b28e"/>
<circle cx="21" cy="58" r="7.3" fill="#c7b28e"/>
<circle cx="39" cy="27" r="10.5" fill="#c7b28e"/>
<circle cx="20" cy="10" r="10.4" fill="#c7b28e"/>
<circle cx="29" cy="45" r="11.0" fill="#c7b28e"/>
<circle cx="25" cy="59" r="11.3" fill="#c7b28e"/>
<circle cx="9" cy="41" r="8.7" fill="#c7b28e"/>
<circle cx="2" cy="52" r="8.3" fill="#c7b28e"/>
<circle cx="24" cy="33" r="10.3" fill="#c7b28e"/>
<circle cx="33" cy="31" r="8.9" fill="#c7b28e"/>
<circle cx="27" cy="51" r="9.8" fill="#dccbaa"/>
<circle cx="9" cy="32" r="10.8" fill="#dccbaa"/>
<circle cx="23" cy="11" r="9.0" fill="#dccbaa"/>
<circle cx="18" cy="31" r="8.2" fill="#dccbaa"/>
<circle cx="14" cy="27" r="10.8" fill="#dccbaa"/>
<circle cx="19" cy="42" r="6.3" fill="#dccbaa"/>
<circle cx="36" cy="30" r="11.3" fill="#dccbaa"/>
<circle cx="16" cy="27" r="8.0" fill="#dccbaa"/>
<circle cx="12" cy="30" r="11.7" fill="#dccbaa"/>
<circle cx="13" cy="37" r="10.9" fill="#dccbaa"/>
<circle cx="33" cy="50" r="8.7" fill="#dccbaa"/>
<circle cx="7" cy="25" r="8.9" fill="#dccbaa"/>
<circle cx="19" cy="34" r="11.2" fill="#dccbaa"/>
<circle cx="20" cy="56" r="7.3" fill="#dccbaa"/>
<circle cx="38" cy="25" r="10.5" fill="#dccbaa"/>
<circle cx="19" cy="8" r="10.4" fill="#dccbaa"/>
<circle cx="28" cy="43" r="11.0" fill="#dccbaa"/>
<circle cx="24" cy="57" r="11.3" fill="#dccbaa"/>
<circle cx="8" cy="39" r="8.7" fill="#dccbaa"/>
<circle cx="1" cy="50" r="8.3" fill="#dccbaa"/>
<circle cx="23" cy="31" r="10.3" fill="#dccbaa"/>
<circle cx="32" cy="29" r="8.9" fill="#dccbaa"/>
<circle cx="21" cy="9" r="5.4" fill="#f0e6cc" opacity=".6"/>
<circle cx="12" cy="24" r="6.5" fill="#f0e6cc" opacity=".6"/>
<circle cx="34" cy="27" r="6.8" fill="#f0e6cc" opacity=".6"/>
<circle cx="14" cy="25" r="4.8" fill="#f0e6cc" opacity=".6"/>
<circle cx="5" cy="23" r="5.3" fill="#f0e6cc" opacity=".6"/>
<circle cx="36" cy="22" r="6.3" fill="#f0e6cc" opacity=".6"/>
<circle cx="17" cy="6" r="6.2" fill="#f0e6cc" opacity=".6"/>
<circle cx="31" cy="27" r="5.4" fill="#f0e6cc" opacity=".6"/>
<circle cx="13" cy="52" r="7.1" fill="#c9b592"/>
<circle cx="22" cy="49" r="9.1" fill="#c9b592"/>
<circle cx="46" cy="63" r="7.7" fill="#c9b592"/>
<circle cx="58" cy="53" r="9.0" fill="#c9b592"/>
<circle cx="38" cy="61" r="6.3" fill="#c9b592"/>
<circle cx="53" cy="43" r="7.9" fill="#c9b592"/>
<circle cx="30" cy="44" r="10.5" fill="#c9b592"/>
<circle cx="61" cy="54" r="10.9" fill="#c9b592"/>
<circle cx="66" cy="54" r="10.4" fill="#c9b592"/>
<circle cx="22" cy="58" r="7.2" fill="#c9b592"/>
<circle cx="49" cy="53" r="6.3" fill="#c9b592"/>
<circle cx="51" cy="42" r="8.4" fill="#c9b592"/>
<circle cx="44" cy="54" r="7.3" fill="#c9b592"/>
<circle cx="36" cy="67" r="6.9" fill="#c9b592"/>
<circle cx="58" cy="61" r="10.5" fill="#c9b592"/>
<circle cx="70" cy="55" r="8.4" fill="#c9b592"/>
<circle cx="41" cy="75" r="8.6" fill="#c9b592"/>
<circle cx="40" cy="55" r="7.1" fill="#c9b592"/>
<circle cx="57" cy="44" r="10.4" fill="#c9b592"/>
<circle cx="24" cy="51" r="8.9" fill="#c9b592"/>
<circle cx="51" cy="50" r="8.7" fill="#c9b592"/>
<circle cx="36" cy="72" r="6.1" fill="#c9b592"/>
<circle cx="12" cy="50" r="7.1" fill="#e0d0b0"/>
<circle cx="21" cy="47" r="9.1" fill="#e0d0b0"/>
<circle cx="45" cy="61" r="7.7" fill="#e0d0b0"/>
<circle cx="57" cy="51" r="9.0" fill="#e0d0b0"/>
<circle cx="37" cy="59" r="6.3" fill="#e0d0b0"/>
<circle cx="52" cy="41" r="7.9" fill="#e0d0b0"/>
<circle cx="29" cy="42" r="10.5" fill="#e0d0b0"/>
<circle cx="60" cy="52" r="10.9" fill="#e0d0b0"/>
<circle cx="65" cy="52" r="10.4" fill="#e0d0b0"/>
<circle cx="21" cy="56" r="7.2" fill="#e0d0b0"/>
<circle cx="48" cy="51" r="6.3" fill="#e0d0b0"/>
<circle cx="50" cy="40" r="8.4" fill="#e0d0b0"/>
<circle cx="43" cy="52" r="7.3" fill="#e0d0b0"/>
<circle cx="35" cy="65" r="6.9" fill="#e0d0b0"/>
<circle cx="57" cy="59" r="10.5" fill="#e0d0b0"/>
<circle cx="69" cy="53" r="8.4" fill="#e0d0b0"/>
<circle cx="40" cy="73" r="8.6" fill="#e0d0b0"/>
<circle cx="39" cy="53" r="7.1" fill="#e0d0b0"/>
<circle cx="56" cy="42" r="10.4" fill="#e0d0b0"/>
<circle cx="23" cy="49" r="8.9" fill="#e0d0b0"/>
<circle cx="50" cy="48" r="8.7" fill="#e0d0b0"/>
<circle cx="35" cy="70" r="6.1" fill="#e0d0b0"/>
<circle cx="11" cy="49" r="4.3" fill="#f0e6cc" opacity=".6"/>
<circle cx="19" cy="45" r="5.5" fill="#f0e6cc" opacity=".6"/>
<circle cx="55" cy="49" r="5.4" fill="#f0e6cc" opacity=".6"/>
<circle cx="50" cy="39" r="4.7" fill="#f0e6cc" opacity=".6"/>
<circle cx="27" cy="39" r="6.3" fill="#f0e6cc" opacity=".6"/>
<circle cx="58" cy="50" r="6.6" fill="#f0e6cc" opacity=".6"/>
<circle cx="63" cy="49" r="6.2" fill="#f0e6cc" opacity=".6"/>
<circle cx="47" cy="49" r="3.8" fill="#f0e6cc" opacity=".6"/>
<circle cx="49" cy="38" r="5.0" fill="#f0e6cc" opacity=".6"/>
<circle cx="42" cy="51" r="4.4" fill="#f0e6cc" opacity=".6"/>
<circle cx="68" cy="51" r="5.0" fill="#f0e6cc" opacity=".6"/>
<circle cx="38" cy="51" r="4.2" fill="#f0e6cc" opacity=".6"/>
<circle cx="54" cy="39" r="6.2" fill="#f0e6cc" opacity=".6"/>
<circle cx="21" cy="46" r="5.3" fill="#f0e6cc" opacity=".6"/>
<circle cx="48" cy="46" r="5.2" fill="#f0e6cc" opacity=".6"/>
<circle cx="66" cy="69" r="5.1" fill="#cdb995"/>
<circle cx="62" cy="71" r="7.6" fill="#cdb995"/>
<circle cx="66" cy="73" r="6.2" fill="#cdb995"/>
<circle cx="84" cy="73" r="5.4" fill="#cdb995"/>
<circle cx="74" cy="75" r="5.1" fill="#cdb995"/>
<circle cx="67" cy="75" r="7.6" fill="#cdb995"/>
<circle cx="69" cy="73" r="6.6" fill="#cdb995"/>
<circle cx="67" cy="78" r="5.7" fill="#cdb995"/>
<circle cx="65" cy="67" r="5.1" fill="#e4d5b6"/>
<circle cx="61" cy="69" r="7.6" fill="#e4d5b6"/>
<circle cx="65" cy="71" r="6.2" fill="#e4d5b6"/>
<circle cx="83" cy="71" r="5.4" fill="#e4d5b6"/>
<circle cx="73" cy="73" r="5.1" fill="#e4d5b6"/>
<circle cx="66" cy="73" r="7.6" fill="#e4d5b6"/>
<circle cx="68" cy="71" r="6.6" fill="#e4d5b6"/>
<circle cx="66" cy="76" r="5.7" fill="#e4d5b6"/>
<circle cx="64" cy="65" r="3.0" fill="#f0e6cc" opacity=".6"/>
<circle cx="60" cy="68" r="4.5" fill="#f0e6cc" opacity=".6"/>
<circle cx="63" cy="69" r="3.7" fill="#f0e6cc" opacity=".6"/>
<circle cx="82" cy="69" r="3.2" fill="#f0e6cc" opacity=".6"/>
<circle cx="66" cy="69" r="4.0" fill="#f0e6cc" opacity=".6"/>
<path d="M23 31 H128 Q130 27 124 24 Q118 15 108 18 Q100 12 90 17 Q80 13 72 19 Q58 22 50 26 Q30 26 23 31 Z" fill="#e6d9bb"/>
<circle cx="113" cy="41" r="5.1" fill="#cdbb98"/>
<circle cx="109" cy="35" r="4.1" fill="#cdbb98"/>
<circle cx="108" cy="34" r="6.3" fill="#cdbb98"/>
<circle cx="111" cy="39" r="5.4" fill="#cdbb98"/>
<circle cx="120" cy="41" r="4.5" fill="#cdbb98"/>
<circle cx="110" cy="36" r="6.1" fill="#cdbb98"/>
<circle cx="110" cy="40" r="5.2" fill="#cdbb98"/>
<circle cx="107" cy="44" r="4.9" fill="#cdbb98"/>
<circle cx="103" cy="39" r="6.8" fill="#cdbb98"/>
<circle cx="118" cy="42" r="5.5" fill="#cdbb98"/>
<circle cx="112" cy="39" r="5.1" fill="#e8dcbf"/>
<circle cx="108" cy="33" r="4.1" fill="#e8dcbf"/>
<circle cx="107" cy="32" r="6.3" fill="#e8dcbf"/>
<circle cx="110" cy="37" r="5.4" fill="#e8dcbf"/>
<circle cx="119" cy="39" r="4.5" fill="#e8dcbf"/>
<circle cx="109" cy="34" r="6.1" fill="#e8dcbf"/>
<circle cx="109" cy="38" r="5.2" fill="#e8dcbf"/>
<circle cx="106" cy="42" r="4.9" fill="#e8dcbf"/>
<circle cx="102" cy="37" r="6.8" fill="#e8dcbf"/>
<circle cx="117" cy="40" r="5.5" fill="#e8dcbf"/>
<circle cx="107" cy="32" r="2.5" fill="#f0e6cc" opacity=".6"/>
<circle cx="106" cy="30" r="3.8" fill="#f0e6cc" opacity=".6"/>
<circle cx="109" cy="35" r="3.2" fill="#f0e6cc" opacity=".6"/>
<circle cx="108" cy="33" r="3.7" fill="#f0e6cc" opacity=".6"/>
<circle cx="100" cy="35" r="4.1" fill="#f0e6cc" opacity=".6"/>
<path d="M0 0 H128 Q118 6 90 7 Q50 7 30 10 Q10 12 0 8 Z" fill="#dfd1b0"/>
<path d="M211 49 Q230 47 250 48 L300 50 Q315 52 320 56 Q300 58 270 57 Q235 56 211 49 Z" fill="#e2d4b4"/>
<circle cx="257" cy="21" r="6.2" fill="#cdbb98"/>
<circle cx="255" cy="26" r="7.2" fill="#cdbb98"/>
<circle cx="275" cy="40" r="8.9" fill="#cdbb98"/>
<circle cx="253" cy="41" r="9.0" fill="#cdbb98"/>
<circle cx="262" cy="37" r="5.3" fill="#cdbb98"/>
<circle cx="266" cy="24" r="6.8" fill="#cdbb98"/>
<circle cx="258" cy="34" r="7.6" fill="#cdbb98"/>
<circle cx="246" cy="38" r="6.6" fill="#cdbb98"/>
<circle cx="252" cy="38" r="5.2" fill="#cdbb98"/>
<circle cx="251" cy="37" r="7.8" fill="#cdbb98"/>
<circle cx="266" cy="24" r="6.8" fill="#cdbb98"/>
<circle cx="260" cy="43" r="6.9" fill="#cdbb98"/>
<circle cx="246" cy="25" r="5.3" fill="#cdbb98"/>
<circle cx="246" cy="36" r="7.9" fill="#cdbb98"/>
<circle cx="272" cy="27" r="7.5" fill="#cdbb98"/>
<circle cx="260" cy="24" r="8.4" fill="#cdbb98"/>
<circle cx="254" cy="24" r="6.0" fill="#cdbb98"/>
<circle cx="269" cy="31" r="7.5" fill="#cdbb98"/>
<circle cx="256" cy="19" r="6.2" fill="#e6d9bb"/>
<circle cx="254" cy="24" r="7.2" fill="#e6d9bb"/>
<circle cx="274" cy="38" r="8.9" fill="#e6d9bb"/>
<circle cx="252" cy="39" r="9.0" fill="#e6d9bb"/>
<circle cx="261" cy="35" r="5.3" fill="#e6d9bb"/>
<circle cx="265" cy="22" r="6.8" fill="#e6d9bb"/>
<circle cx="257" cy="32" r="7.6" fill="#e6d9bb"/>
<circle cx="245" cy="36" r="6.6" fill="#e6d9bb"/>
<circle cx="251" cy="36" r="5.2" fill="#e6d9bb"/>
<circle cx="250" cy="35" r="7.8" fill="#e6d9bb"/>
<circle cx="265" cy="22" r="6.8" fill="#e6d9bb"/>
<circle cx="259" cy="41" r="6.9" fill="#e6d9bb"/>
<circle cx="245" cy="23" r="5.3" fill="#e6d9bb"/>
<circle cx="245" cy="34" r="7.9" fill="#e6d9bb"/>
<circle cx="271" cy="25" r="7.5" fill="#e6d9bb"/>
<circle cx="259" cy="22" r="8.4" fill="#e6d9bb"/>
<circle cx="253" cy="22" r="6.0" fill="#e6d9bb"/>
<circle cx="268" cy="29" r="7.5" fill="#e6d9bb"/>
<circle cx="255" cy="18" r="3.7" fill="#f0e6cc" opacity=".6"/>
<circle cx="252" cy="22" r="4.3" fill="#f0e6cc" opacity=".6"/>
<circle cx="263" cy="20" r="4.1" fill="#f0e6cc" opacity=".6"/>
<circle cx="255" cy="30" r="4.5" fill="#f0e6cc" opacity=".6"/>
<circle cx="263" cy="21" r="4.1" fill="#f0e6cc" opacity=".6"/>
<circle cx="244" cy="22" r="3.2" fill="#f0e6cc" opacity=".6"/>
<circle cx="270" cy="23" r="4.5" fill="#f0e6cc" opacity=".6"/>
<circle cx="257" cy="20" r="5.1" fill="#f0e6cc" opacity=".6"/>
<circle cx="252" cy="21" r="3.6" fill="#f0e6cc" opacity=".6"/>
<circle cx="266" cy="27" r="4.5" fill="#f0e6cc" opacity=".6"/>
<circle cx="294" cy="45" r="7.0" fill="#ccb995"/>
<circle cx="295" cy="50" r="4.9" fill="#ccb995"/>
<circle cx="282" cy="51" r="5.7" fill="#ccb995"/>
<circle cx="294" cy="51" r="6.8" fill="#ccb995"/>
<circle cx="285" cy="46" r="4.3" fill="#ccb995"/>
<circle cx="300" cy="49" r="4.6" fill="#ccb995"/>
<circle cx="279" cy="54" r="6.0" fill="#ccb995"/>
<circle cx="285" cy="56" r="5.0" fill="#ccb995"/>
<circle cx="286" cy="55" r="4.5" fill="#ccb995"/>
<circle cx="283" cy="48" r="5.8" fill="#ccb995"/>
<circle cx="293" cy="43" r="7.0" fill="#e4d6b8"/>
<circle cx="294" cy="48" r="4.9" fill="#e4d6b8"/>
<circle cx="281" cy="49" r="5.7" fill="#e4d6b8"/>
<circle cx="293" cy="49" r="6.8" fill="#e4d6b8"/>
<circle cx="284" cy="44" r="4.3" fill="#e4d6b8"/>
<circle cx="299" cy="47" r="4.6" fill="#e4d6b8"/>
<circle cx="278" cy="52" r="6.0" fill="#e4d6b8"/>
<circle cx="284" cy="54" r="5.0" fill="#e4d6b8"/>
<circle cx="285" cy="53" r="4.5" fill="#e4d6b8"/>
<circle cx="282" cy="46" r="5.8" fill="#e4d6b8"/>
<circle cx="292" cy="41" r="4.2" fill="#f0e6cc" opacity=".6"/>
<circle cx="284" cy="43" r="2.6" fill="#f0e6cc" opacity=".6"/>
<circle cx="298" cy="46" r="2.8" fill="#f0e6cc" opacity=".6"/>
<circle cx="281" cy="44" r="3.5" fill="#f0e6cc" opacity=".6"/>
<path d="M232 63 Q260 58 300 60 Q318 61 322 63 Z" fill="#e0d1b0"/>
<circle cx="342" cy="25" r="11.6" fill="#cebd9b"/>
<circle cx="323" cy="19" r="9.7" fill="#cebd9b"/>
<circle cx="343" cy="22" r="8.3" fill="#cebd9b"/>
<circle cx="344" cy="22" r="11.8" fill="#cebd9b"/>
<circle cx="379" cy="20" r="11.6" fill="#cebd9b"/>
<circle cx="345" cy="16" r="9.0" fill="#cebd9b"/>
<circle cx="373" cy="20" r="10.2" fill="#cebd9b"/>
<circle cx="346" cy="18" r="9.3" fill="#cebd9b"/>
<circle cx="362" cy="21" r="8.7" fill="#cebd9b"/>
<circle cx="362" cy="12" r="6.8" fill="#cebd9b"/>
<circle cx="355" cy="5" r="9.2" fill="#cebd9b"/>
<circle cx="359" cy="19" r="8.4" fill="#cebd9b"/>
<circle cx="331" cy="15" r="10.8" fill="#cebd9b"/>
<circle cx="366" cy="6" r="11.3" fill="#cebd9b"/>
<circle cx="373" cy="18" r="6.5" fill="#cebd9b"/>
<circle cx="372" cy="10" r="10.6" fill="#cebd9b"/>
<circle cx="349" cy="19" r="10.9" fill="#cebd9b"/>
<circle cx="324" cy="10" r="8.8" fill="#cebd9b"/>
<circle cx="352" cy="10" r="7.6" fill="#cebd9b"/>
<circle cx="335" cy="22" r="9.8" fill="#cebd9b"/>
<circle cx="352" cy="15" r="6.4" fill="#cebd9b"/>
<circle cx="316" cy="16" r="7.1" fill="#cebd9b"/>
<circle cx="345" cy="20" r="6.2" fill="#cebd9b"/>
<circle cx="316" cy="17" r="9.9" fill="#cebd9b"/>
<circle cx="351" cy="20" r="11.6" fill="#cebd9b"/>
<circle cx="324" cy="15" r="10.1" fill="#cebd9b"/>
<circle cx="341" cy="23" r="11.6" fill="#e7dabd"/>
<circle cx="322" cy="17" r="9.7" fill="#e7dabd"/>
<circle cx="342" cy="20" r="8.3" fill="#e7dabd"/>
<circle cx="343" cy="20" r="11.8" fill="#e7dabd"/>
<circle cx="378" cy="18" r="11.6" fill="#e7dabd"/>
<circle cx="344" cy="14" r="9.0" fill="#e7dabd"/>
<circle cx="372" cy="18" r="10.2" fill="#e7dabd"/>
<circle cx="345" cy="16" r="9.3" fill="#e7dabd"/>
<circle cx="361" cy="19" r="8.7" fill="#e7dabd"/>
<circle cx="361" cy="10" r="6.8" fill="#e7dabd"/>
<circle cx="354" cy="3" r="9.2" fill="#e7dabd"/>
<circle cx="358" cy="17" r="8.4" fill="#e7dabd"/>
<circle cx="330" cy="13" r="10.8" fill="#e7dabd"/>
<circle cx="365" cy="4" r="11.3" fill="#e7dabd"/>
<circle cx="372" cy="16" r="6.5" fill="#e7dabd"/>
<circle cx="371" cy="8" r="10.6" fill="#e7dabd"/>
<circle cx="348" cy="17" r="10.9" fill="#e7dabd"/>
<circle cx="323" cy="8" r="8.8" fill="#e7dabd"/>
<circle cx="351" cy="8" r="7.6" fill="#e7dabd"/>
<circle cx="334" cy="20" r="9.8" fill="#e7dabd"/>
<circle cx="351" cy="13" r="6.4" fill="#e7dabd"/>
<circle cx="315" cy="14" r="7.1" fill="#e7dabd"/>
<circle cx="344" cy="18" r="6.2" fill="#e7dabd"/>
<circle cx="315" cy="15" r="9.9" fill="#e7dabd"/>
<circle cx="350" cy="18" r="11.6" fill="#e7dabd"/>
<circle cx="323" cy="13" r="10.1" fill="#e7dabd"/>
<circle cx="342" cy="12" r="5.4" fill="#f0e6cc" opacity=".6"/>
<circle cx="360" cy="9" r="4.1" fill="#f0e6cc" opacity=".6"/>
<circle cx="352" cy="1" r="5.5" fill="#f0e6cc" opacity=".6"/>
<circle cx="328" cy="10" r="6.5" fill="#f0e6cc" opacity=".6"/>
<circle cx="363" cy="1" r="6.8" fill="#f0e6cc" opacity=".6"/>
<circle cx="369" cy="5" r="6.3" fill="#f0e6cc" opacity=".6"/>
<circle cx="321" cy="6" r="5.3" fill="#f0e6cc" opacity=".6"/>
<circle cx="350" cy="6" r="4.6" fill="#f0e6cc" opacity=".6"/>
<circle cx="350" cy="12" r="3.8" fill="#f0e6cc" opacity=".6"/>
<circle cx="314" cy="12" r="4.3" fill="#f0e6cc" opacity=".6"/>
<circle cx="321" cy="11" r="6.1" fill="#f0e6cc" opacity=".6"/>
<circle cx="354" cy="28" r="6.5" fill="#c6b390"/>
<circle cx="361" cy="34" r="6.2" fill="#c6b390"/>
<circle cx="346" cy="50" r="9.8" fill="#c6b390"/>
<circle cx="365" cy="53" r="9.0" fill="#c6b390"/>
<circle cx="368" cy="54" r="10.8" fill="#c6b390"/>
<circle cx="372" cy="32" r="7.3" fill="#c6b390"/>
<circle cx="360" cy="23" r="9.2" fill="#c6b390"/>
<circle cx="377" cy="30" r="8.3" fill="#c6b390"/>
<circle cx="378" cy="34" r="10.8" fill="#c6b390"/>
<circle cx="369" cy="41" r="9.7" fill="#c6b390"/>
<circle cx="339" cy="31" r="9.9" fill="#c6b390"/>
<circle cx="369" cy="55" r="9.2" fill="#c6b390"/>
<circle cx="363" cy="35" r="12.0" fill="#c6b390"/>
<circle cx="336" cy="35" r="10.4" fill="#c6b390"/>
<circle cx="366" cy="33" r="6.5" fill="#c6b390"/>
<circle cx="349" cy="44" r="9.2" fill="#c6b390"/>
<circle cx="353" cy="26" r="6.5" fill="#dfcfae"/>
<circle cx="360" cy="32" r="6.2" fill="#dfcfae"/>
<circle cx="345" cy="48" r="9.8" fill="#dfcfae"/>
<circle cx="364" cy="51" r="9.0" fill="#dfcfae"/>
<circle cx="367" cy="52" r="10.8" fill="#dfcfae"/>
<circle cx="371" cy="30" r="7.3" fill="#dfcfae"/>
<circle cx="359" cy="21" r="9.2" fill="#dfcfae"/>
<circle cx="376" cy="28" r="8.3" fill="#dfcfae"/>
<circle cx="377" cy="32" r="10.8" fill="#dfcfae"/>
<circle cx="368" cy="39" r="9.7" fill="#dfcfae"/>
<circle cx="338" cy="29" r="9.9" fill="#dfcfae"/>
<circle cx="368" cy="53" r="9.2" fill="#dfcfae"/>
<circle cx="362" cy="33" r="12.0" fill="#dfcfae"/>
<circle cx="335" cy="33" r="10.4" fill="#dfcfae"/>
<circle cx="365" cy="31" r="6.5" fill="#dfcfae"/>
<circle cx="348" cy="42" r="9.2" fill="#dfcfae"/>
<circle cx="351" cy="24" r="3.9" fill="#f0e6cc" opacity=".6"/>
<circle cx="358" cy="30" r="3.7" fill="#f0e6cc" opacity=".6"/>
<circle cx="370" cy="28" r="4.4" fill="#f0e6cc" opacity=".6"/>
<circle cx="357" cy="19" r="5.5" fill="#f0e6cc" opacity=".6"/>
<circle cx="374" cy="26" r="5.0" fill="#f0e6cc" opacity=".6"/>
<circle cx="375" cy="29" r="6.5" fill="#f0e6cc" opacity=".6"/>
<circle cx="337" cy="26" r="5.9" fill="#f0e6cc" opacity=".6"/>
<circle cx="360" cy="30" r="7.2" fill="#f0e6cc" opacity=".6"/>
<circle cx="333" cy="30" r="6.3" fill="#f0e6cc" opacity=".6"/>
<circle cx="364" cy="30" r="3.9" fill="#f0e6cc" opacity=".6"/>
<circle cx="383" cy="52" r="6.7" fill="#c4b08c"/>
<circle cx="391" cy="62" r="8.9" fill="#c4b08c"/>
<circle cx="394" cy="62" r="7.1" fill="#c4b08c"/>
<circle cx="394" cy="70" r="8.6" fill="#c4b08c"/>
<circle cx="390" cy="53" r="6.6" fill="#c4b08c"/>
<circle cx="380" cy="70" r="9.2" fill="#c4b08c"/>
<circle cx="381" cy="47" r="9.3" fill="#c4b08c"/>
<circle cx="379" cy="70" r="7.9" fill="#c4b08c"/>
<circle cx="370" cy="60" r="8.7" fill="#c4b08c"/>
<circle cx="376" cy="61" r="10.1" fill="#c4b08c"/>
<circle cx="364" cy="53" r="9.7" fill="#c4b08c"/>
<circle cx="377" cy="44" r="7.9" fill="#c4b08c"/>
<circle cx="378" cy="60" r="9.3" fill="#c4b08c"/>
<circle cx="366" cy="54" r="11.0" fill="#c4b08c"/>
<circle cx="382" cy="66" r="9.7" fill="#c4b08c"/>
<circle cx="384" cy="50" r="6.3" fill="#c4b08c"/>
<circle cx="382" cy="50" r="6.7" fill="#dccaa8"/>
<circle cx="390" cy="60" r="8.9" fill="#dccaa8"/>
<circle cx="393" cy="60" r="7.1" fill="#dccaa8"/>
<circle cx="393" cy="68" r="8.6" fill="#dccaa8"/>
<circle cx="389" cy="51" r="6.6" fill="#dccaa8"/>
<circle cx="379" cy="68" r="9.2" fill="#dccaa8"/>
<circle cx="380" cy="45" r="9.3" fill="#dccaa8"/>
<circle cx="378" cy="68" r="7.9" fill="#dccaa8"/>
<circle cx="369" cy="58" r="8.7" fill="#dccaa8"/>
<circle cx="375" cy="59" r="10.1" fill="#dccaa8"/>
<circle cx="363" cy="51" r="9.7" fill="#dccaa8"/>
<circle cx="376" cy="42" r="7.9" fill="#dccaa8"/>
<circle cx="377" cy="58" r="9.3" fill="#dccaa8"/>
<circle cx="365" cy="52" r="11.0" fill="#dccaa8"/>
<circle cx="381" cy="64" r="9.7" fill="#dccaa8"/>
<circle cx="383" cy="48" r="6.3" fill="#dccaa8"/>
<circle cx="381" cy="48" r="4.0" fill="#f0e6cc" opacity=".6"/>
<circle cx="387" cy="50" r="4.0" fill="#f0e6cc" opacity=".6"/>
<circle cx="378" cy="42" r="5.6" fill="#f0e6cc" opacity=".6"/>
<circle cx="361" cy="48" r="5.8" fill="#f0e6cc" opacity=".6"/>
<circle cx="374" cy="40" r="4.7" fill="#f0e6cc" opacity=".6"/>
<circle cx="363" cy="50" r="6.6" fill="#f0e6cc" opacity=".6"/>
<circle cx="382" cy="47" r="3.8" fill="#f0e6cc" opacity=".6"/>
<circle cx="372" cy="85" r="7.0" fill="#c2ad88"/>
<circle cx="372" cy="81" r="7.5" fill="#c2ad88"/>
<circle cx="371" cy="76" r="8.5" fill="#c2ad88"/>
<circle cx="379" cy="76" r="6.0" fill="#c2ad88"/>
<circle cx="381" cy="73" r="8.7" fill="#c2ad88"/>
<circle cx="382" cy="87" r="8.6" fill="#c2ad88"/>
<circle cx="384" cy="82" r="7.5" fill="#c2ad88"/>
<circle cx="386" cy="86" r="6.1" fill="#c2ad88"/>
<circle cx="371" cy="83" r="7.0" fill="#d9c6a3"/>
<circle cx="371" cy="79" r="7.5" fill="#d9c6a3"/>
<circle cx="370" cy="74" r="8.5" fill="#d9c6a3"/>
<circle cx="378" cy="74" r="6.0" fill="#d9c6a3"/>
<circle cx="380" cy="71" r="8.7" fill="#d9c6a3"/>
<circle cx="381" cy="85" r="8.6" fill="#d9c6a3"/>
<circle cx="383" cy="80" r="7.5" fill="#d9c6a3"/>
<circle cx="385" cy="84" r="6.1" fill="#d9c6a3"/>
<circle cx="368" cy="72" r="5.1" fill="#f0e6cc" opacity=".6"/>
<circle cx="377" cy="72" r="3.6" fill="#f0e6cc" opacity=".6"/>
<circle cx="378" cy="69" r="5.2" fill="#f0e6cc" opacity=".6"/>
<circle cx="417" cy="48" r="3.4" fill="#e6d9bb"/>
<circle cx="419" cy="53" r="4.4" fill="#e6d9bb"/>
<circle cx="419" cy="54" r="3.7" fill="#e6d9bb"/>
<circle cx="416" cy="47" r="2.1" fill="#f0e6cc" opacity=".6"/>
</g>
<g filter="url(#bl2)">
<path d="M0 84 Q30 82 64 86 L281 89 Q310 84 340 86 Q380 86 424 91 V210 H0 Z" fill="url(#forest)"/>
<path d="M-20.0 90.3 Q-16.8 81.7 -13.6 83.6 Q-10.5 82.3 -7.3 84.5 Q-4.6 81.6 -1.9 85.0 Q0.0 81.9 2.0 84.0 Q4.6 81.6 7.2 83.9 Q8.7 82.1 10.2 83.3 Q12.5 82.1 14.9 84.3 Q17.8 81.2 20.7 83.9 Q22.7 81.7 24.7 84.8 Q27.8 80.5 31.0 84.8 Q34.0 81.7 37.0 83.3 Q38.6 82.9 40.1 84.4 Q42.2 81.4 44.3 84.0 Q46.2 83.1 48.1 83.4 Q49.9 82.3 51.7 83.4 Q54.5 81.2 57.3 83.3 Q59.0 82.2 60.8 83.5 L60.8 96.5 H-20.0 Z" fill="#aab04e"/>
<path d="M24.6 92.6 Q26.3 85.3 28.0 86.6 Q31.1 83.5 34.3 86.7 Q35.8 85.3 37.3 86.0 Q40.6 83.8 44.0 87.0 Q45.5 85.0 47.1 87.2 Q50.1 83.5 53.2 85.8 Q56.5 84.5 59.9 87.3 Q62.9 83.1 66.0 86.5 Q67.8 85.0 69.6 86.7 Q72.5 84.1 75.3 87.0 Q76.9 85.2 78.5 85.6 Q80.6 84.0 82.8 86.9 Q84.6 85.1 86.4 85.6 Q89.2 84.0 92.0 85.9 Q94.3 83.7 96.5 86.2 Q99.4 83.5 102.3 86.3 Q104.9 84.3 107.5 85.8 Q110.0 84.5 112.5 86.1 Q114.4 84.1 116.2 86.2 L116.2 98.9 H24.6 Z" fill="#bab452"/>
<path d="M81.2 90.9 Q84.6 82.9 88.1 85.2 Q91.3 80.6 94.5 84.2 Q96.7 82.1 98.9 84.0 Q101.8 81.1 104.7 84.0 Q106.9 83.3 109.2 84.4 L109.2 97.2 H81.2 Z" fill="#bab452"/>
<path d="M105.2 93.0 Q108.2 83.5 111.3 87.6 Q114.5 84.4 117.8 87.7 Q120.0 85.0 122.1 87.7 Q124.0 85.2 125.8 87.0 Q127.8 85.3 129.9 87.3 Q132.6 83.7 135.3 87.3 Q138.6 82.8 141.8 87.4 Q145.3 83.6 148.7 87.1 Q151.3 83.5 153.8 87.0 Q156.1 84.3 158.5 86.3 Q160.3 85.3 162.0 86.0 Q163.5 85.9 165.0 86.6 Q168.1 85.1 171.1 87.0 Q172.8 85.2 174.5 86.3 Q176.9 84.2 179.3 86.5 Q181.6 84.2 183.9 85.9 Q186.1 84.4 188.3 87.4 L188.3 99.2 H105.2 Z" fill="#aab04e"/>
<path d="M177.0 93.9 Q180.3 85.3 183.5 87.3 Q186.1 85.0 188.6 87.9 Q190.5 86.4 192.5 86.8 Q195.5 85.7 198.6 88.6 Q200.2 85.8 201.8 88.0 Q204.3 86.3 206.8 86.7 Q209.0 85.4 211.1 87.1 Q212.9 86.3 214.6 88.1 Q217.4 85.8 220.1 87.0 Q223.0 85.2 226.0 87.3 L226.0 100.1 H177.0 Z" fill="#c2b856"/>
<path d="M214.7 93.2 Q217.6 84.9 220.6 86.6 Q222.7 85.2 224.8 87.7 Q228.3 85.0 231.8 87.9 Q235.1 84.1 238.5 87.4 Q241.5 85.0 244.6 87.2 Q248.1 82.8 251.5 87.8 Q253.2 85.2 254.9 87.0 Q258.2 84.9 261.5 87.1 Q263.3 85.0 265.0 87.4 Q266.6 85.8 268.1 86.3 Q270.9 84.2 273.7 86.1 L273.7 99.5 H214.7 Z" fill="#aab04e"/>
<path d="M265.6 90.6 Q267.9 81.4 270.2 85.1 Q273.3 81.6 276.4 83.9 Q279.0 81.7 281.6 85.3 Q283.7 81.7 285.8 83.6 Q289.2 80.9 292.5 84.5 Q295.5 81.9 298.6 84.8 Q300.8 82.3 303.0 85.2 Q305.8 81.0 308.6 84.3 Q311.1 82.1 313.5 83.8 Q316.1 82.5 318.7 83.7 Q321.4 82.4 324.0 84.5 Q326.5 82.3 328.9 83.8 Q332.2 80.4 335.5 83.8 Q337.4 82.6 339.2 85.3 Q341.1 82.1 342.9 83.7 Q346.1 81.6 349.2 84.6 Q351.3 82.5 353.3 83.5 Q356.0 81.2 358.7 85.2 Q361.9 81.3 365.1 83.5 Q368.6 82.1 372.1 83.4 Q375.1 81.6 378.2 85.0 L378.2 96.9 H265.6 Z" fill="#aab04e"/>
<path d="M348.3 91.9 Q351.2 82.7 354.1 85.2 Q356.9 83.2 359.8 84.7 Q361.9 84.0 364.0 85.1 Q366.8 82.0 369.7 86.5 Q372.4 82.4 375.2 85.7 Q377.9 82.4 380.5 84.8 Q382.8 83.9 385.0 85.4 Q387.3 84.4 389.7 86.0 Q393.1 83.3 396.5 85.1 Q398.7 83.2 400.9 85.1 Q403.9 83.7 407.0 85.9 Q409.9 82.6 412.8 84.8 Q416.2 81.7 419.7 85.6 Q422.9 82.5 426.1 85.0 Q428.4 83.0 430.7 85.6 L430.7 98.2 H348.3 Z" fill="#c2b856"/>
<path d="M393.2 94.0 Q395.4 85.5 397.7 87.1 Q400.8 85.2 403.9 87.0 Q406.7 84.9 409.6 88.4 Q411.3 85.6 413.0 86.8 Q416.4 83.8 419.8 87.4 Q422.2 85.2 424.5 87.3 Q427.6 83.9 430.7 86.9 Q433.7 84.0 436.8 87.9 L436.8 100.2 H393.2 Z" fill="#bab452"/>
<path d="M416.7 91.5 Q418.4 83.9 420.1 85.6 Q423.2 81.8 426.4 86.0 Q429.5 82.7 432.6 85.6 Q434.2 83.5 435.8 85.7 Q437.8 83.5 439.8 84.8 Q442.9 82.7 446.0 85.8 Q449.4 81.5 452.7 85.0 Q454.9 82.5 457.1 86.1 Q459.0 83.8 460.8 85.9 Q463.9 83.1 466.9 85.2 Q470.3 83.3 473.7 84.8 Q476.5 81.8 479.4 86.2 Q481.8 82.5 484.3 86.2 Q486.4 83.8 488.6 84.8 L488.6 97.8 H416.7 Z" fill="#bab452"/>
<path d="M-20.0 96.9 Q-18.2 88.8 -16.5 90.0 Q-13.7 86.7 -10.9 90.0 Q-9.1 88.5 -7.3 91.1 Q-5.5 88.4 -3.7 91.2 Q-0.6 86.3 2.6 89.5 Q5.9 87.9 9.2 90.9 Q10.8 88.5 12.4 89.6 Q14.8 88.3 17.1 90.6 L17.1 103.2 H-20.0 Z" fill="#c2b856"/>
<path d="M2.8 95.0 Q4.6 86.6 6.4 87.8 Q10.1 83.7 13.8 88.7 Q17.2 86.0 20.6 88.3 Q23.0 86.4 25.4 88.1 Q28.1 85.6 30.7 87.3 Q33.4 86.7 36.2 89.3 Q39.0 85.6 41.7 87.9 L41.7 101.3 H2.8 Z" fill="#aab04e"/>
<path d="M30.3 96.2 Q32.4 87.3 34.6 88.6 Q37.8 87.1 41.0 90.0 Q42.9 87.7 44.7 88.8 Q46.4 88.3 48.1 90.3 Q50.5 87.3 53.0 90.1 Q56.7 86.9 60.3 89.9 Q63.6 85.8 66.9 89.2 Q69.5 86.6 72.1 89.0 Q74.7 86.9 77.4 90.3 Q79.5 87.3 81.6 88.9 Q83.6 87.8 85.5 89.8 Q88.5 85.8 91.4 88.8 Q94.2 87.1 96.9 89.0 Q100.4 87.3 104.0 89.0 Q105.7 87.8 107.4 89.9 Q109.5 87.0 111.5 89.8 Q113.6 87.0 115.6 90.3 Q117.9 86.8 120.1 88.7 L120.1 102.5 H30.3 Z" fill="#bab452"/>
<path d="M87.6 95.1 Q90.0 86.8 92.4 89.1 Q94.4 86.0 96.4 88.1 Q99.2 85.1 102.0 87.9 Q104.7 85.6 107.4 88.6 Q109.9 85.9 112.4 88.0 Q114.3 87.4 116.2 88.6 Q119.1 85.2 121.9 87.7 Q124.9 85.8 128.0 88.4 Q131.3 85.3 134.7 88.3 Q137.7 86.6 140.7 89.2 Q143.4 87.0 146.1 88.4 Q149.7 83.8 153.3 88.2 L153.3 101.4 H87.6 Z" fill="#aab04e"/>
<path d="M126.5 97.5 Q128.7 89.2 130.9 91.5 Q132.9 89.3 134.9 90.7 Q137.8 88.3 140.8 91.8 Q144.2 88.1 147.6 91.5 Q149.7 88.7 151.8 90.1 Q154.7 88.8 157.6 91.0 Q161.0 88.9 164.4 90.1 Q166.8 89.3 169.1 90.7 Q172.0 88.7 174.8 91.7 Q178.2 88.0 181.7 90.4 Q183.7 89.3 185.7 91.0 Q187.8 89.7 189.9 90.4 Q192.1 88.7 194.4 90.4 Q197.3 88.9 200.3 91.3 Q202.7 88.7 205.1 91.4 Q208.5 87.2 211.9 91.3 Q213.6 89.6 215.2 91.2 Q217.7 87.6 220.3 91.2 Q222.2 89.5 224.1 90.7 Q227.0 87.6 229.8 91.2 Q232.2 89.5 234.7 90.8 L234.7 103.8 H126.5 Z" fill="#aab04e"/>
<path d="M199.8 97.0 Q203.2 85.9 206.7 90.5 Q209.6 88.0 212.6 90.9 Q214.9 88.1 217.1 90.6 Q220.8 86.1 224.6 89.5 Q226.5 88.8 228.5 90.1 Q231.6 88.1 234.8 90.4 Q237.3 88.4 239.9 90.6 Q242.4 87.1 245.0 89.5 Q248.5 86.8 252.0 90.2 Q253.8 88.5 255.5 91.0 Q257.9 87.8 260.2 90.4 Q262.0 88.2 263.8 89.9 Q266.4 87.4 269.1 91.1 Q272.5 87.6 275.9 91.1 L275.9 103.3 H199.8 Z" fill="#bab452"/>
<path d="M245.2 93.9 Q248.7 83.6 252.2 86.5 Q254.5 85.9 256.8 87.0 Q258.7 86.2 260.6 86.5 Q262.6 85.5 264.6 87.6 Q267.9 84.3 271.2 86.8 Q274.0 85.5 276.8 86.3 Q280.1 85.4 283.4 86.4 Q286.7 83.9 290.0 88.1 Q293.3 85.1 296.6 86.7 Q299.2 83.9 301.9 86.6 Q304.1 84.7 306.3 86.6 Q309.8 85.1 313.3 87.5 Q314.9 85.3 316.6 87.9 Q318.8 85.5 320.9 87.0 L320.9 100.3 H245.2 Z" fill="#aab04e"/>
<path d="M295.8 97.0 Q299.5 87.8 303.2 91.3 Q305.7 88.4 308.3 90.3 Q311.9 85.9 315.4 91.0 Q317.7 89.0 319.9 89.7 Q322.9 87.2 326.0 89.5 Q327.6 88.3 329.2 90.0 Q330.9 88.9 332.6 89.5 Q335.9 87.3 339.3 90.6 L339.3 103.4 H295.8 Z" fill="#c2b856"/>
<path d="M329.4 95.1 Q333.1 84.3 336.7 87.3 Q339.8 85.2 343.0 89.2 Q345.6 85.2 348.1 89.4 Q350.7 85.1 353.2 89.3 Q355.9 85.2 358.6 89.1 Q360.6 86.1 362.6 87.9 Q366.2 86.2 369.7 87.9 L369.7 101.4 H329.4 Z" fill="#bab452"/>
<path d="M350.9 94.6 Q353.3 85.7 355.7 88.8 Q358.9 86.0 362.1 87.4 Q365.0 86.3 367.8 87.1 Q369.7 86.3 371.7 88.8 Q374.5 84.7 377.4 88.3 Q380.0 86.4 382.7 87.0 Q384.4 86.2 386.0 88.0 Q389.6 86.1 393.2 88.6 Q395.2 85.8 397.2 87.5 Q400.1 84.8 402.9 88.8 L402.9 100.9 H350.9 Z" fill="#c2b856"/>
<path d="M391.0 95.0 Q394.0 85.0 397.0 87.2 Q398.7 86.5 400.3 89.2 Q403.4 85.6 406.5 87.5 Q409.2 86.7 411.9 87.9 Q413.6 86.8 415.3 88.2 Q417.5 86.8 419.7 87.4 Q421.4 87.3 423.0 89.3 Q424.7 86.5 426.4 88.2 Q429.2 86.2 432.1 89.3 Q435.4 85.6 438.7 88.2 Q442.3 86.1 445.8 89.1 Q448.8 85.5 451.7 88.4 Q454.6 86.7 457.4 87.8 Q459.8 86.7 462.1 87.4 Q465.2 85.7 468.4 88.8 Q470.8 85.3 473.2 87.8 Q475.9 86.0 478.6 88.9 Q480.5 86.5 482.4 88.2 Q485.3 86.3 488.3 88.4 L488.3 101.3 H391.0 Z" fill="#c2b856"/>
<path d="M-20.0 101.5 Q-17.3 92.9 -14.6 94.4 Q-10.7 92.5 -6.8 95.0 Q-3.3 92.3 0.2 94.6 Q2.2 93.2 4.3 94.4 Q6.7 92.0 9.0 94.5 Q11.3 91.6 13.5 93.3 Q17.0 91.8 20.6 95.3 L20.6 107.9 H-20.0 Z" fill="#aab04e"/>
<path d="M5.7 100.3 Q8.9 90.1 12.1 93.4 Q14.6 90.3 17.1 94.0 Q20.7 90.7 24.3 93.2 Q27.5 90.2 30.6 93.2 Q32.4 91.0 34.2 92.4 Q37.3 90.4 40.3 94.0 Q42.7 91.3 45.1 93.3 Q48.1 91.6 51.0 93.4 Q53.6 90.1 56.2 93.5 Q59.0 91.0 61.9 93.9 Q64.9 91.3 67.9 92.5 Q70.5 90.4 73.1 93.0 L73.1 106.8 H5.7 Z" fill="#bab452"/>
<path d="M42.8 100.1 Q46.4 88.8 50.0 92.8 Q52.7 89.8 55.5 92.4 Q57.9 90.1 60.3 93.8 Q63.8 90.2 67.4 92.6 Q69.4 90.7 71.3 91.9 Q73.4 91.9 75.6 92.9 Q79.5 90.7 83.5 92.4 Q85.8 90.5 88.1 92.6 Q90.2 90.7 92.3 93.9 Q94.4 91.8 96.5 92.7 Q100.3 90.9 104.2 92.1 Q107.3 89.4 110.5 92.8 Q112.3 91.3 114.1 92.0 Q116.0 91.9 117.9 94.0 Q119.8 91.3 121.7 93.7 L121.7 106.5 H42.8 Z" fill="#aab04e"/>
<path d="M91.3 99.9 Q93.4 90.8 95.6 93.9 Q99.1 88.3 102.7 91.7 Q104.5 91.1 106.4 91.7 Q110.3 89.9 114.2 92.9 Q117.9 89.7 121.6 93.4 Q123.6 91.0 125.7 93.3 Q128.4 91.0 131.2 93.6 Q133.7 89.7 136.3 92.4 Q139.8 90.6 143.4 93.2 Q147.3 88.9 151.2 92.6 L151.2 106.3 H91.3 Z" fill="#c2b856"/>
<path d="M143.2 98.5 Q145.1 89.5 147.0 90.6 Q148.9 89.7 150.7 92.4 Q153.0 88.7 155.4 92.5 Q159.2 89.3 163.0 90.6 Q166.9 86.5 170.8 90.7 Q172.9 89.2 175.0 90.5 Q177.0 90.2 178.9 91.6 Q181.5 88.4 184.0 90.6 Q187.8 87.2 191.5 91.1 Q194.6 88.2 197.7 90.6 Q201.5 88.2 205.3 91.5 Q209.0 89.5 212.6 90.9 Q214.4 89.5 216.2 90.8 Q219.5 87.8 222.8 92.6 Q224.9 89.7 227.1 92.1 Q229.8 89.7 232.5 91.8 Q236.0 88.4 239.5 91.2 Q241.5 89.8 243.5 92.2 Q246.0 88.3 248.6 91.1 Q251.3 88.3 254.1 92.4 L254.1 105.0 H143.2 Z" fill="#bab452"/>
<path d="M233.8 99.0 Q236.0 89.5 238.2 92.1 Q240.1 90.6 242.0 92.6 Q245.7 88.1 249.4 91.3 Q252.9 87.7 256.4 91.3 Q259.8 88.2 263.2 92.1 Q266.3 90.2 269.4 92.9 Q273.1 88.7 276.8 91.1 Q279.0 89.3 281.2 91.3 Q283.6 90.6 286.1 92.9 Q288.4 89.7 290.6 92.5 Q293.8 89.2 297.0 91.4 L297.0 105.4 H233.8 Z" fill="#aab04e"/>
<path d="M280.3 100.7 Q282.4 91.8 284.4 94.5 Q286.4 91.1 288.3 94.3 Q292.1 91.1 295.9 94.2 Q298.6 92.1 301.2 94.5 Q303.0 91.9 304.7 93.7 Q307.0 91.1 309.3 93.5 Q313.2 88.5 317.1 93.0 Q320.9 90.1 324.6 93.2 Q327.3 91.1 330.0 94.1 L330.0 107.1 H280.3 Z" fill="#c2b856"/>
<path d="M319.8 97.7 Q323.0 86.9 326.2 91.5 Q329.7 86.3 333.1 91.3 Q335.9 89.1 338.7 89.8 Q340.5 88.3 342.3 91.3 Q346.1 86.4 349.8 90.5 Q352.8 89.0 355.8 89.8 Q358.4 89.2 361.0 90.2 Q363.9 88.8 366.8 89.8 Q368.7 88.9 370.6 91.3 Q373.3 87.7 376.1 91.1 Q379.6 86.6 383.1 90.6 Q384.9 89.4 386.7 90.1 Q389.2 88.2 391.7 90.6 Q394.0 89.1 396.4 91.1 Q400.4 86.4 404.3 89.8 Q407.6 86.8 410.9 90.7 Q414.1 86.8 417.2 90.5 Q420.5 88.5 423.8 91.3 Q426.8 88.6 429.8 90.9 L429.8 104.1 H319.8 Z" fill="#c2b856"/>
<path d="M408.7 100.4 Q410.6 91.8 412.4 94.3 Q415.0 90.7 417.7 92.7 Q420.0 90.8 422.3 93.8 Q424.3 92.0 426.3 93.3 Q428.3 91.8 430.3 92.2 Q433.1 90.1 435.9 93.5 Q439.6 91.2 443.2 93.9 Q446.0 90.7 448.7 92.6 Q451.0 90.4 453.4 93.3 Q455.3 91.5 457.2 92.5 Q459.6 91.3 462.0 94.1 Q464.3 90.8 466.5 92.4 Q468.8 91.8 471.0 93.1 Q473.6 91.5 476.3 93.0 L476.3 106.8 H408.7 Z" fill="#aab04e"/>
<path d="M-20.0 104.4 Q-16.3 92.6 -12.7 96.3 Q-10.2 94.3 -7.7 98.0 Q-4.2 94.2 -0.7 96.0 Q3.3 93.4 7.3 96.7 Q9.4 95.1 11.5 96.6 Q14.1 95.2 16.8 96.8 L16.8 110.9 H-20.0 Z" fill="#7ea246"/>
<path d="M2.1 105.5 Q5.6 94.1 9.0 97.0 Q12.5 95.6 16.0 97.9 Q18.9 94.3 21.8 96.9 Q23.6 96.1 25.5 98.0 Q28.8 96.0 32.2 97.6 Q35.8 94.4 39.3 97.4 Q41.1 96.9 43.0 98.8 Q45.5 96.5 47.9 97.4 Q50.3 95.7 52.6 96.8 Q55.7 94.7 58.8 98.0 Q62.1 95.6 65.3 97.6 Q69.0 95.3 72.6 98.7 Q74.9 95.9 77.1 98.9 Q80.6 95.4 84.0 97.6 Q86.5 95.1 89.0 97.6 Q92.8 93.8 96.7 98.7 Q99.8 95.6 102.9 98.3 L102.9 112.0 H2.1 Z" fill="#6a9a44"/>
<path d="M69.2 104.5 Q73.2 93.9 77.2 97.6 Q80.1 93.6 83.1 98.0 Q85.1 95.2 87.1 96.5 Q90.7 92.5 94.2 98.1 Q98.0 93.7 101.7 96.1 L101.7 111.0 H69.2 Z" fill="#6a9a44"/>
<path d="M95.3 103.9 Q98.7 91.8 102.2 97.4 Q105.2 94.7 108.1 95.6 Q111.6 92.1 115.1 95.7 Q117.6 94.9 120.1 96.0 Q124.1 93.4 128.1 96.5 L128.1 110.4 H95.3 Z" fill="#94aa4a"/>
<path d="M111.3 104.0 Q115.5 92.9 119.6 95.5 Q121.7 95.2 123.7 96.4 Q125.8 94.3 127.8 95.7 Q129.7 94.4 131.6 96.4 Q135.3 92.9 138.9 96.2 Q140.9 94.1 142.9 96.9 Q145.3 95.1 147.8 96.8 Q151.9 92.0 155.9 97.5 Q160.1 93.9 164.4 95.7 Q167.3 94.7 170.3 96.4 Q174.0 93.8 177.8 97.2 Q180.3 93.6 182.7 95.4 Q184.8 95.3 186.9 96.6 Q188.8 94.5 190.6 96.2 Q194.6 93.2 198.6 97.2 L198.6 110.5 H111.3 Z" fill="#6a9a44"/>
<path d="M182.0 103.3 Q184.2 93.7 186.3 95.8 Q189.2 92.0 192.1 94.9 Q196.1 91.9 200.1 94.7 Q203.3 93.6 206.5 95.7 Q209.4 92.4 212.4 96.7 Q214.4 93.3 216.4 96.8 Q218.6 94.5 220.7 95.6 Q222.6 94.6 224.5 95.7 Q226.9 93.4 229.2 95.0 Q232.6 92.3 236.0 94.7 Q239.5 91.4 243.0 96.9 L243.0 109.8 H182.0 Z" fill="#a4ae4e"/>
<path d="M214.1 104.5 Q217.1 94.1 220.2 97.1 Q222.9 94.6 225.6 96.6 Q228.7 93.0 231.9 96.6 Q235.6 92.4 239.4 96.3 Q242.1 95.1 244.7 96.4 Q248.1 94.0 251.5 96.8 Q255.2 92.8 258.9 96.6 Q260.9 95.5 262.9 97.4 Q265.8 95.0 268.8 97.4 Q271.2 94.2 273.6 97.6 Q276.6 94.7 279.6 98.0 Q281.8 95.1 284.0 97.3 Q286.3 95.3 288.6 98.0 Q291.4 93.6 294.2 97.7 Q297.5 93.2 300.8 97.5 L300.8 111.0 H214.1 Z" fill="#a4ae4e"/>
<path d="M280.9 104.2 Q285.0 92.5 289.2 96.2 Q293.0 94.5 296.8 97.4 Q298.7 94.2 300.7 97.3 Q304.9 92.9 309.1 97.0 L309.1 110.7 H280.9 Z" fill="#7ea246"/>
<path d="M298.8 101.6 Q300.8 92.3 302.8 93.8 Q304.6 92.7 306.5 95.2 Q309.3 91.4 312.1 93.2 Q314.0 91.8 315.9 93.7 Q318.2 91.2 320.6 95.2 Q322.6 91.6 324.6 94.5 Q327.6 90.2 330.6 95.0 Q333.3 92.1 335.9 93.6 Q339.0 92.3 342.0 93.2 Q345.7 89.5 349.4 94.1 Q353.2 89.3 357.1 95.2 Q359.2 92.2 361.4 93.3 Q364.8 90.7 368.3 94.7 Q370.6 91.1 373.0 93.7 Q376.2 90.0 379.5 93.9 Q383.1 90.8 386.8 94.7 Q390.2 92.1 393.7 94.8 L393.7 108.1 H298.8 Z" fill="#6a9a44"/>
<path d="M351.5 104.4 Q354.2 95.3 356.9 97.6 Q360.0 93.7 363.1 97.1 Q367.3 93.7 371.5 97.0 Q375.1 93.0 378.7 97.8 Q380.6 94.6 382.5 95.7 Q385.1 94.8 387.7 97.5 Q391.6 93.1 395.6 96.9 Q399.0 95.0 402.5 96.5 Q405.4 95.2 408.3 96.3 Q410.8 95.3 413.3 96.1 Q416.0 94.0 418.7 97.7 Q421.3 93.9 423.8 97.3 Q425.9 95.4 428.0 97.7 Q430.1 94.7 432.3 97.0 Q436.1 92.6 439.8 97.6 Q442.0 94.5 444.1 97.8 Q447.5 92.5 451.0 95.8 Q453.9 93.1 456.8 96.3 Q459.5 94.9 462.1 96.5 L462.1 110.9 H351.5 Z" fill="#94aa4a"/>
<path d="M426.6 105.5 Q430.0 96.2 433.3 97.6 Q436.0 96.5 438.8 98.0 Q442.1 96.0 445.5 97.1 Q449.1 94.8 452.8 99.1 Q454.7 96.6 456.7 99.0 Q460.5 95.7 464.3 97.8 Q467.1 94.7 470.0 97.1 Q472.1 96.8 474.2 97.9 Q478.1 93.2 482.0 97.6 Q484.9 94.4 487.8 99.0 Q491.4 94.1 495.0 96.8 L495.0 112.0 H426.6 Z" fill="#a4ae4e"/>
<path d="M-20.0 109.4 Q-15.9 97.8 -11.8 102.0 Q-9.1 98.1 -6.5 100.1 Q-3.1 97.6 0.3 102.4 Q3.6 98.3 6.9 101.6 Q10.8 98.3 14.7 101.7 Q17.3 99.9 19.9 100.3 Q22.2 99.4 24.6 100.4 Q28.6 97.2 32.5 101.1 Q34.9 99.4 37.3 102.3 Q41.4 97.1 45.4 101.1 Q49.5 97.7 53.6 101.0 Q57.8 97.0 62.1 100.2 Q64.2 99.5 66.3 102.1 Q69.4 98.5 72.4 100.4 Q75.9 98.5 79.4 101.0 Q81.8 99.0 84.3 102.2 L84.3 116.0 H-20.0 Z" fill="#7ea246"/>
<path d="M56.5 108.5 Q60.2 98.6 63.9 101.7 Q67.1 98.7 70.3 101.0 Q74.2 97.4 78.1 100.7 Q80.1 98.3 82.1 100.9 Q86.1 96.9 90.1 101.5 Q93.1 99.0 96.1 99.4 Q98.9 98.6 101.7 99.8 Q103.8 98.3 106.0 101.5 Q110.3 97.1 114.6 100.5 Q117.9 97.2 121.2 101.1 Q124.2 98.9 127.3 100.0 Q129.2 98.4 131.2 101.7 Q134.6 96.9 138.0 100.6 L138.0 115.1 H56.5 Z" fill="#94aa4a"/>
<path d="M124.6 108.4 Q129.0 97.2 133.4 99.6 Q136.5 98.1 139.7 99.5 Q142.3 97.7 144.8 99.1 Q148.7 96.9 152.6 100.1 Q155.1 97.9 157.6 100.3 Q161.4 98.3 165.2 101.5 L165.2 115.0 H124.6 Z" fill="#a4ae4e"/>
<path d="M152.8 106.5 Q157.0 94.3 161.3 99.7 Q165.7 94.9 170.2 98.3 Q173.6 94.6 177.0 97.3 Q180.9 93.4 184.8 98.7 L184.8 113.1 H152.8 Z" fill="#94aa4a"/>
<path d="M171.2 108.7 Q174.3 97.9 177.4 99.8 Q180.8 96.7 184.1 101.0 Q187.6 97.7 191.0 101.9 Q195.2 96.9 199.3 101.1 Q203.3 97.8 207.3 101.0 Q209.9 97.7 212.6 100.2 Q217.0 96.0 221.4 100.7 Q224.8 97.4 228.2 100.1 Q230.2 98.9 232.2 100.1 Q235.3 98.6 238.5 99.9 Q242.9 97.1 247.4 101.3 Q249.6 99.4 251.9 101.2 Q255.0 97.2 258.0 99.4 Q261.2 97.5 264.4 99.9 Q268.2 98.2 272.0 99.7 Q274.3 99.4 276.6 100.4 Q280.6 98.1 284.5 100.1 L284.5 115.3 H171.2 Z" fill="#6a9a44"/>
<path d="M241.9 106.1 Q245.5 93.7 249.1 96.9 Q252.1 96.6 255.1 97.6 Q257.3 96.2 259.6 97.3 Q263.4 95.0 267.2 97.0 Q270.5 95.2 273.9 98.7 Q277.7 95.4 281.6 97.8 Q285.4 93.3 289.1 98.2 L289.1 112.7 H241.9 Z" fill="#a4ae4e"/>
<path d="M275.3 106.4 Q279.5 93.7 283.7 99.6 Q286.2 96.0 288.8 97.4 Q291.4 96.0 293.9 97.7 Q297.4 96.1 301.0 97.5 Q304.2 95.0 307.4 99.5 Q310.3 94.8 313.2 98.1 Q316.1 95.9 319.1 98.7 Q322.0 94.7 324.9 98.7 Q328.4 95.7 332.0 97.6 L332.0 113.0 H275.3 Z" fill="#6a9a44"/>
<path d="M310.9 108.7 Q314.8 96.0 318.7 101.4 Q321.7 97.5 324.7 100.3 Q328.6 98.5 332.5 101.0 Q334.5 98.8 336.5 101.5 Q339.0 99.4 341.5 100.2 L341.5 115.4 H310.9 Z" fill="#a4ae4e"/>
<path d="M330.8 107.6 Q333.4 96.9 335.9 98.9 Q337.9 98.5 339.9 99.0 Q343.7 94.8 347.5 98.4 Q350.9 96.5 354.3 99.5 Q357.8 97.7 361.3 98.3 Q364.4 97.6 367.5 100.3 Q370.6 97.5 373.6 99.3 Q376.0 97.9 378.3 100.1 Q380.4 96.8 382.6 98.7 Q385.0 98.3 387.4 100.7 Q391.1 97.1 394.9 100.2 Q398.1 96.8 401.4 98.3 L401.4 114.2 H330.8 Z" fill="#a4ae4e"/>
<path d="M369.1 109.2 Q371.9 98.8 374.6 102.1 Q377.0 99.2 379.3 102.4 Q382.3 98.7 385.2 101.0 Q388.4 97.6 391.5 100.2 Q394.7 98.6 397.8 102.4 Q401.9 98.1 406.0 100.7 Q410.5 98.9 415.0 101.7 Q416.9 99.7 418.9 101.5 Q422.6 97.5 426.3 100.5 Q429.2 97.7 432.2 100.6 Q435.5 98.0 438.8 102.1 Q442.8 96.6 446.8 100.8 Q450.6 96.5 454.4 100.1 Q458.2 97.9 462.0 100.9 L462.0 115.8 H369.1 Z" fill="#6a9a44"/>
<path d="M-20.0 113.7 Q-15.6 101.1 -11.2 105.7 Q-6.7 100.7 -2.1 104.0 Q1.0 101.8 4.2 103.8 Q6.5 102.4 8.9 105.6 Q11.0 102.8 13.1 105.4 Q16.1 102.0 19.2 104.0 Q21.7 102.6 24.1 105.6 Q27.8 102.0 31.6 104.3 Q34.0 102.1 36.4 104.6 Q39.5 102.2 42.7 103.8 Q45.6 103.2 48.6 104.0 Q53.2 102.2 57.7 104.6 Q60.5 102.0 63.3 106.1 Q67.1 101.3 70.9 105.4 Q73.0 102.9 75.1 106.4 L75.1 120.4 H-20.0 Z" fill="#a4ae4e"/>
<path d="M60.5 110.5 Q62.8 99.9 65.2 101.8 Q70.0 96.3 74.7 101.2 Q76.9 100.8 79.0 101.6 Q83.4 97.6 87.9 100.7 Q91.2 99.1 94.6 101.1 Q98.5 98.3 102.5 100.9 Q105.9 99.9 109.3 101.9 Q113.4 98.6 117.5 102.8 Q120.0 100.2 122.5 101.9 Q125.6 98.5 128.7 102.6 Q130.8 99.7 132.9 103.0 Q135.5 99.7 138.2 103.3 Q142.7 97.9 147.3 101.3 Q151.5 97.0 155.8 100.7 Q158.1 99.3 160.4 103.1 Q165.0 99.4 169.5 102.5 L169.5 117.2 H60.5 Z" fill="#7ea246"/>
<path d="M147.2 112.2 Q150.1 101.4 152.9 102.6 Q156.1 100.7 159.2 102.6 Q161.4 101.4 163.6 104.0 Q167.8 100.0 171.9 102.5 Q175.4 101.1 178.9 104.7 Q181.5 100.6 184.2 104.0 Q187.0 100.8 189.9 102.4 Q192.7 100.7 195.4 102.4 Q199.0 99.3 202.6 104.9 Q206.7 98.8 210.9 103.1 Q213.9 101.5 216.9 102.4 Q219.2 102.4 221.5 102.9 Q224.4 101.3 227.4 103.6 Q231.7 100.2 236.1 103.5 Q240.3 100.0 244.5 104.2 L244.5 118.9 H147.2 Z" fill="#94aa4a"/>
<path d="M228.9 112.8 Q232.2 101.4 235.4 103.0 Q239.3 101.0 243.2 103.4 Q245.8 102.4 248.4 104.7 Q250.5 102.2 252.6 105.0 Q255.2 101.6 257.9 103.0 Q261.7 100.2 265.5 103.7 Q269.2 101.4 272.9 104.5 Q276.9 101.1 281.0 105.2 Q285.2 98.9 289.4 104.0 Q293.5 100.1 297.6 104.5 Q301.2 100.5 304.7 104.9 Q308.3 102.0 312.0 103.6 Q314.4 102.9 316.8 104.6 Q319.0 102.3 321.2 103.8 Q325.6 100.7 330.1 105.0 Q333.8 101.7 337.5 104.9 L337.5 119.5 H228.9 Z" fill="#a4ae4e"/>
<path d="M288.3 111.4 Q290.7 100.7 293.2 102.3 Q297.0 99.8 300.9 103.2 Q304.5 99.3 308.2 102.6 Q311.4 100.9 314.5 103.2 Q317.5 100.7 320.4 103.9 Q323.6 101.0 326.8 103.2 Q329.9 100.3 333.0 103.1 Q336.5 98.7 339.9 102.3 Q344.2 97.8 348.4 102.2 L348.4 118.1 H288.3 Z" fill="#7ea246"/>
<path d="M319.5 111.8 Q322.2 100.6 324.9 104.1 Q329.4 98.9 334.0 102.4 Q337.6 100.1 341.1 102.5 Q343.5 100.5 345.8 102.7 Q350.2 99.0 354.6 101.9 Q359.1 97.5 363.7 102.4 L363.7 118.5 H319.5 Z" fill="#94aa4a"/>
<path d="M349.7 110.5 Q353.5 97.9 357.2 102.2 Q361.7 99.1 366.1 103.3 Q369.9 99.7 373.8 100.7 Q376.4 100.4 379.0 101.6 L379.0 117.2 H349.7 Z" fill="#6a9a44"/>
<path d="M366.7 110.1 Q370.0 99.6 373.4 102.2 Q377.4 97.8 381.5 102.8 Q384.4 99.3 387.4 101.2 Q390.4 97.9 393.5 102.6 Q395.8 99.5 398.0 101.0 Q401.2 99.2 404.3 102.2 Q407.7 97.4 411.0 102.3 Q413.4 99.2 415.8 102.2 Q420.5 97.4 425.2 100.9 L425.2 116.8 H366.7 Z" fill="#a4ae4e"/>
<path d="M401.4 110.5 Q404.9 99.4 408.4 100.9 Q411.1 99.9 413.8 102.6 Q416.0 100.0 418.1 102.2 Q422.5 99.3 426.9 102.7 Q429.8 100.2 432.8 102.4 Q436.8 96.8 440.8 101.3 Q444.8 97.0 448.7 102.1 Q452.7 99.6 456.6 101.4 Q459.7 99.9 462.9 100.9 Q465.9 98.9 469.0 102.0 Q472.4 98.8 475.9 102.7 Q479.9 98.9 484.0 100.9 Q486.4 100.1 488.8 101.8 L488.8 117.2 H401.4 Z" fill="#6a9a44"/>
<path d="M-20.0 114.9 Q-15.2 101.5 -10.3 106.9 Q-7.0 102.0 -3.6 105.4 Q1.1 102.3 5.9 106.8 Q9.1 101.9 12.2 106.0 Q17.1 101.3 21.9 106.8 L21.9 121.7 H-20.0 Z" fill="#7ea246"/>
<path d="M6.8 118.1 Q10.3 106.0 13.8 110.2 Q17.2 105.8 20.7 109.7 Q24.6 106.3 28.5 109.3 Q32.5 105.6 36.5 110.0 Q39.7 105.5 43.0 110.2 Q46.7 107.0 50.4 108.9 Q55.0 103.6 59.7 110.3 Q62.1 107.2 64.6 108.7 Q67.0 107.0 69.5 109.2 Q72.7 106.3 75.9 108.9 Q78.3 107.5 80.6 108.0 Q84.3 106.4 88.1 107.8 Q90.7 106.2 93.3 107.9 L93.3 124.9 H6.8 Z" fill="#a4ae4e"/>
<path d="M80.4 117.7 Q84.1 104.7 87.8 109.5 Q90.6 107.2 93.4 109.2 Q96.1 107.1 98.7 107.5 Q103.5 102.9 108.2 108.6 Q112.5 105.5 116.8 107.5 L116.8 124.5 H80.4 Z" fill="#6a9a44"/>
<path d="M106.2 116.4 Q111.1 104.8 115.9 106.6 Q118.6 105.3 121.2 108.4 Q126.2 102.7 131.2 106.1 Q134.5 105.1 137.9 107.5 Q140.3 104.3 142.7 108.5 Q146.9 103.8 151.1 106.5 Q154.7 103.7 158.3 107.0 L158.3 123.2 H106.2 Z" fill="#94aa4a"/>
<path d="M142.0 116.7 Q147.1 101.6 152.1 106.5 Q156.9 104.9 161.8 106.3 Q166.8 102.6 171.7 107.1 Q174.4 106.0 177.1 108.7 Q181.8 104.3 186.5 107.0 Q190.1 105.8 193.8 108.1 Q196.3 106.3 198.8 107.2 Q202.1 105.6 205.5 108.9 Q210.5 104.0 215.5 107.8 Q218.3 106.1 221.1 109.0 Q225.2 105.0 229.2 108.0 Q231.7 104.8 234.1 107.8 L234.1 123.5 H142.0 Z" fill="#7ea246"/>
<path d="M197.5 117.5 Q201.4 104.1 205.4 109.1 Q209.6 104.1 213.9 108.3 Q217.0 104.8 220.2 107.9 Q223.1 105.6 226.1 108.0 Q229.1 105.2 232.2 109.5 Q236.4 105.0 240.6 109.9 Q242.8 105.9 245.1 108.8 Q247.9 106.5 250.6 109.6 Q255.0 103.3 259.4 108.2 Q262.6 105.6 265.9 108.2 Q269.7 105.4 273.4 109.2 Q276.5 105.6 279.5 108.0 Q283.0 106.2 286.5 107.9 Q289.7 104.3 292.9 107.2 Q297.5 102.6 302.1 109.4 L302.1 124.3 H197.5 Z" fill="#94aa4a"/>
<path d="M256.1 115.2 Q260.5 102.2 264.9 104.9 Q269.4 101.9 273.8 105.0 Q278.9 100.2 284.0 106.5 Q286.4 103.3 288.8 104.8 Q293.7 100.6 298.7 107.0 L298.7 122.0 H256.1 Z" fill="#a4ae4e"/>
<path d="M292.3 118.2 Q295.0 106.6 297.7 110.5 Q300.5 106.7 303.2 109.6 Q307.6 106.1 311.9 110.1 Q316.0 104.4 320.1 108.7 Q322.8 107.7 325.4 110.5 Q328.6 106.8 331.8 108.4 Q336.3 103.6 340.9 108.7 Q345.3 103.6 349.7 109.4 Q352.5 107.2 355.3 108.3 Q358.9 105.1 362.5 110.6 Q366.0 104.6 369.6 109.6 Q373.0 105.3 376.3 108.8 L376.3 125.0 H292.3 Z" fill="#6a9a44"/>
<path d="M363.8 116.4 Q367.9 103.5 372.0 108.1 Q376.7 102.1 381.3 107.1 Q385.3 103.4 389.4 107.9 Q393.8 102.2 398.2 107.2 Q402.6 103.5 407.1 108.3 Q410.5 103.2 414.0 106.2 Q418.9 104.6 423.8 108.7 L423.8 123.2 H363.8 Z" fill="#a4ae4e"/>
<path d="M410.7 115.9 Q414.8 102.0 418.8 107.2 Q422.7 104.7 426.6 105.7 Q429.9 103.7 433.2 107.0 Q435.7 104.3 438.1 105.7 Q440.6 103.9 443.2 105.6 Q446.3 104.4 449.4 107.8 L449.4 122.7 H410.7 Z" fill="#a4ae4e"/>
<path d="M-20.0 120.6 Q-16.5 107.7 -13.1 112.0 Q-9.0 108.5 -4.9 109.7 Q-0.5 107.3 3.9 111.0 Q6.5 109.2 9.2 112.3 Q14.4 107.0 19.7 110.8 L19.7 127.5 H-20.0 Z" fill="#6a9a44"/>
<path d="M11.4 120.0 Q16.2 107.4 20.9 111.4 Q24.9 106.4 28.9 109.2 Q33.9 107.0 38.8 110.2 Q44.2 103.7 49.5 109.0 Q53.2 107.0 56.9 111.5 Q62.2 105.1 67.5 109.7 Q71.8 106.6 76.1 111.5 Q80.7 106.1 85.3 109.5 Q88.4 107.5 91.4 110.6 Q96.2 104.6 100.9 109.2 Q105.8 104.7 110.8 110.9 L110.8 127.0 H11.4 Z" fill="#a4ae4e"/>
<path d="M86.1 120.5 Q88.7 108.8 91.3 110.5 Q95.8 105.7 100.3 109.7 Q104.2 107.3 108.1 110.6 Q111.8 106.3 115.4 110.6 L115.4 127.4 H86.1 Z" fill="#6a9a44"/>
<path d="M104.6 119.6 Q108.5 106.2 112.3 111.5 Q115.7 105.8 119.1 109.8 Q123.0 106.7 126.9 110.9 Q130.5 107.3 134.2 111.4 Q138.1 106.0 142.1 109.1 Q144.8 107.5 147.6 109.4 Q151.3 106.3 155.0 109.2 Q158.1 108.5 161.2 111.5 Q166.4 106.0 171.7 110.4 Q176.4 104.0 181.2 110.7 L181.2 126.5 H104.6 Z" fill="#a4ae4e"/>
<path d="M152.8 120.8 Q157.2 106.2 161.5 111.8 Q165.4 108.9 169.2 110.4 Q173.2 107.6 177.2 110.6 Q182.5 105.4 187.8 112.5 Q190.8 107.5 193.8 112.6 Q197.7 106.3 201.6 112.7 Q206.8 107.7 211.9 110.3 Q214.4 108.3 216.9 110.1 Q220.7 109.2 224.6 112.1 Q229.5 105.1 234.5 110.5 Q237.4 108.2 240.3 111.3 Q242.9 108.6 245.6 110.9 L245.6 127.7 H152.8 Z" fill="#94aa4a"/>
<path d="M223.2 122.0 Q227.7 109.7 232.3 113.0 Q236.0 108.0 239.7 111.6 Q242.7 110.3 245.6 112.8 Q250.2 108.7 254.8 111.2 Q260.0 107.4 265.2 113.8 Q269.1 109.3 273.1 111.0 Q277.5 109.0 282.0 112.0 Q286.6 107.9 291.3 113.1 Q293.8 109.7 296.3 111.7 Q298.8 110.5 301.3 113.8 Q305.7 108.4 310.0 112.8 L310.0 128.9 H223.2 Z" fill="#a4ae4e"/>
<path d="M298.1 120.5 Q301.9 108.0 305.7 111.6 Q308.8 108.2 311.9 110.9 Q315.6 108.8 319.2 111.8 Q322.4 108.6 325.5 111.8 Q330.4 106.0 335.4 112.0 Q337.8 109.5 340.3 112.1 Q344.8 107.6 349.3 112.3 Q353.9 105.4 358.5 110.5 Q363.3 108.3 368.0 110.6 L368.0 127.4 H298.1 Z" fill="#a4ae4e"/>
<path d="M355.9 120.2 Q358.4 109.4 360.9 110.7 Q364.3 106.4 367.7 110.6 Q372.4 106.4 377.0 110.7 Q382.3 104.4 387.7 110.4 Q391.5 106.6 395.4 110.0 Q400.4 107.6 405.4 112.2 Q408.1 107.4 410.8 111.1 Q415.5 106.7 420.3 109.5 Q424.5 108.4 428.7 111.4 Q431.9 108.4 435.1 110.0 Q437.9 108.6 440.8 111.4 Q444.8 105.7 448.8 109.3 Q453.3 107.0 457.8 110.0 Q462.9 106.3 467.9 110.3 L467.9 127.1 H355.9 Z" fill="#94aa4a"/>
<path d="M423.5 120.5 Q426.8 107.1 430.1 109.7 Q433.1 107.3 436.2 110.3 Q440.4 106.8 444.7 111.5 Q447.6 108.7 450.6 110.5 Q455.8 107.7 461.0 111.5 Q465.7 104.9 470.4 109.8 Q473.1 108.4 475.8 111.8 Q480.0 106.4 484.3 110.7 Q489.3 106.4 494.3 111.3 L494.3 127.4 H423.5 Z" fill="#7ea246"/>
<path d="M-20.0 127.3 Q-15.3 111.1 -10.6 116.1 Q-6.8 114.2 -3.1 118.0 Q-0.6 114.1 1.8 118.1 Q5.5 113.6 9.2 118.1 Q12.2 115.7 15.2 116.9 Q18.7 114.5 22.1 118.5 Q26.8 112.4 31.6 117.8 Q34.5 115.1 37.5 118.4 Q40.9 113.1 44.3 117.5 Q49.0 112.4 53.7 116.2 Q57.5 112.5 61.3 118.6 L61.3 134.4 H-20.0 Z" fill="#5c9442"/>
<path d="M25.4 124.8 Q29.1 111.5 32.8 114.9 Q38.2 111.5 43.6 114.9 Q48.1 110.4 52.6 115.2 Q58.0 110.0 63.4 113.1 Q67.5 111.2 71.7 113.3 Q76.8 110.5 81.9 113.1 Q86.3 110.7 90.6 114.0 L90.6 131.9 H25.4 Z" fill="#5c9442"/>
<path d="M75.3 124.7 Q79.2 111.1 83.0 114.3 Q87.3 110.3 91.6 115.6 Q95.2 110.6 98.8 114.2 Q102.7 112.6 106.5 114.3 Q111.3 109.1 116.1 114.7 Q121.5 109.3 126.9 114.6 Q130.9 110.6 134.8 114.1 L134.8 131.8 H75.3 Z" fill="#6e9e46"/>
<path d="M108.2 127.4 Q112.9 112.4 117.6 115.9 Q120.8 114.3 124.1 118.3 Q128.3 112.5 132.5 118.1 Q135.2 114.2 137.9 115.9 Q140.7 115.6 143.5 117.5 Q148.8 111.8 154.1 117.6 Q157.4 113.9 160.6 117.4 Q165.2 113.3 169.7 116.7 Q173.8 113.6 177.9 118.1 Q182.8 111.5 187.7 116.7 Q191.6 114.7 195.5 117.2 Q198.8 114.4 202.1 117.2 L202.1 134.4 H108.2 Z" fill="#4d883e"/>
<path d="M173.4 127.7 Q177.6 112.5 181.9 116.9 Q186.4 112.8 190.9 117.9 Q196.3 114.1 201.6 118.7 Q205.2 113.8 208.8 117.9 Q211.5 114.6 214.2 116.8 L214.2 134.7 H173.4 Z" fill="#4d883e"/>
<path d="M199.2 124.4 Q204.5 110.6 209.8 115.1 Q213.7 110.7 217.7 115.3 Q221.5 111.8 225.3 113.7 Q230.6 110.8 235.9 113.2 Q239.1 112.4 242.2 114.9 Q245.2 111.9 248.1 113.4 Q251.8 111.7 255.4 115.7 Q258.8 109.9 262.3 114.0 Q267.3 108.9 272.3 112.6 Q275.4 112.4 278.6 115.5 Q282.7 109.4 286.8 113.4 L286.8 131.4 H199.2 Z" fill="#6e9e46"/>
<path d="M268.0 126.2 Q271.5 112.5 275.1 115.4 Q278.0 113.3 281.0 116.6 Q284.5 113.2 288.1 116.1 Q293.4 113.2 298.8 117.1 Q302.5 111.6 306.2 117.3 L306.2 133.3 H268.0 Z" fill="#86a84a"/>
<path d="M286.2 125.5 Q290.5 112.3 294.8 116.1 Q299.4 112.6 303.9 115.1 Q307.5 111.9 311.0 116.9 Q314.5 113.5 318.1 115.5 Q323.4 112.3 328.8 113.8 L328.8 132.5 H286.2 Z" fill="#45823c"/>
<path d="M308.5 126.7 Q313.4 113.2 318.4 117.9 Q322.3 112.7 326.1 116.8 Q331.7 113.1 337.2 115.0 Q340.4 112.6 343.7 115.0 Q348.1 114.1 352.6 116.0 Q355.2 113.7 357.9 115.5 Q362.0 111.8 366.2 117.8 Q371.3 111.6 376.4 117.6 Q379.2 113.3 382.0 116.3 Q385.6 113.0 389.1 116.7 Q394.2 112.0 399.3 115.0 Q404.1 113.9 408.9 115.6 L408.9 133.7 H308.5 Z" fill="#6e9e46"/>
<path d="M366.7 127.4 Q369.7 114.6 372.8 118.2 Q375.4 114.7 378.0 118.2 Q380.8 114.0 383.5 117.7 Q387.2 112.7 390.8 117.6 Q396.1 111.0 401.5 116.5 Q404.4 115.7 407.4 116.0 Q410.1 114.2 412.8 116.3 Q417.4 114.9 421.9 116.1 Q424.6 115.5 427.4 117.2 Q431.4 114.5 435.4 118.7 Q440.6 114.1 445.7 117.6 Q449.3 113.3 453.0 116.3 Q456.4 115.1 459.7 117.5 Q463.5 114.1 467.3 118.3 L467.3 134.4 H366.7 Z" fill="#86a84a"/>
<path d="M-20.0 132.1 Q-15.9 118.6 -11.8 121.0 Q-8.5 119.6 -5.2 119.7 Q-1.9 117.3 1.5 123.0 Q4.7 118.3 8.0 123.0 Q11.6 117.4 15.1 120.2 L15.1 139.3 H-20.0 Z" fill="#5c9442"/>
<path d="M6.1 130.0 Q10.4 116.6 14.6 119.4 Q19.7 115.7 24.7 118.2 Q30.1 115.2 35.5 118.8 Q40.1 114.0 44.7 120.5 Q49.5 113.6 54.3 117.9 Q57.9 115.2 61.5 118.8 Q65.1 114.7 68.8 118.8 Q72.3 117.4 75.9 119.2 Q79.1 115.2 82.3 120.6 Q86.6 115.6 90.8 118.4 Q96.6 116.4 102.4 117.7 Q105.3 117.3 108.2 118.4 L108.2 137.2 H6.1 Z" fill="#6e9e46"/>
<path d="M91.8 131.8 Q94.4 117.8 97.1 120.9 Q99.9 117.8 102.8 121.6 Q106.6 116.9 110.4 120.8 Q114.7 117.2 119.1 122.0 Q124.5 116.8 129.9 122.4 Q135.3 115.3 140.7 121.7 L140.7 138.9 H91.8 Z" fill="#6e9e46"/>
<path d="M122.1 130.6 Q124.8 117.4 127.4 119.3 Q131.1 117.0 134.8 119.8 Q139.2 114.9 143.5 120.7 Q147.4 115.1 151.4 119.1 Q156.1 114.8 160.9 119.6 Q165.9 113.7 171.0 120.6 Q175.0 117.5 179.0 120.6 Q183.7 115.6 188.3 118.3 Q191.0 118.3 193.7 118.4 Q199.7 114.9 205.7 121.2 L205.7 137.8 H122.1 Z" fill="#86a84a"/>
<path d="M173.9 128.9 Q179.7 113.7 185.5 116.7 Q189.9 113.0 194.3 118.6 Q197.0 115.2 199.8 117.5 Q204.3 114.5 208.7 118.5 Q212.9 115.1 217.2 118.2 Q220.4 115.9 223.6 118.3 Q227.6 115.9 231.6 117.1 Q234.7 115.2 237.8 116.9 Q241.3 115.3 244.8 116.8 Q248.6 113.6 252.3 119.0 Q256.5 115.8 260.7 117.4 Q265.4 114.6 270.0 116.5 Q275.6 114.0 281.3 119.8 L281.3 136.0 H173.9 Z" fill="#5c9442"/>
<path d="M229.0 129.4 Q233.3 115.6 237.7 117.4 Q240.8 117.0 244.0 117.9 Q248.0 114.7 252.0 117.2 Q257.5 112.5 262.9 119.5 Q267.0 116.3 271.2 117.6 L271.2 136.6 H229.0 Z" fill="#4d883e"/>
<path d="M254.9 131.2 Q259.2 117.0 263.6 121.1 Q268.5 118.0 273.3 118.8 Q276.2 117.4 279.1 119.3 Q284.9 113.5 290.6 120.4 Q295.8 117.9 301.0 119.9 Q306.9 117.3 312.8 121.2 Q318.3 113.9 323.8 118.9 Q328.8 117.7 333.9 121.0 Q338.7 116.4 343.6 119.4 L343.6 138.3 H254.9 Z" fill="#4d883e"/>
<path d="M321.0 132.6 Q325.1 118.0 329.2 121.3 Q334.9 115.5 340.6 122.3 Q344.1 118.2 347.7 123.1 Q351.9 119.5 356.1 121.3 Q359.8 119.9 363.5 120.6 Q367.1 118.0 370.8 123.5 Q376.7 116.4 382.6 123.3 L382.6 139.7 H321.0 Z" fill="#6e9e46"/>
<path d="M365.1 130.9 Q370.5 116.6 375.9 121.5 Q380.6 114.2 385.3 119.1 Q387.9 117.0 390.6 121.6 Q394.0 116.3 397.4 120.2 Q402.2 117.5 406.9 121.6 Q412.3 115.9 417.7 121.2 L417.7 138.1 H365.1 Z" fill="#86a84a"/>
<path d="M391.8 131.2 Q397.5 117.4 403.2 120.3 Q406.8 117.3 410.4 119.0 Q415.6 115.0 420.7 120.7 Q423.5 118.9 426.2 119.7 Q429.0 118.5 431.8 120.8 Q437.6 117.3 443.3 119.3 Q447.4 116.0 451.5 119.3 Q455.5 118.1 459.6 122.1 Q463.7 116.7 467.9 119.3 Q471.2 117.3 474.6 119.4 Q477.7 118.8 480.9 119.3 Q485.5 116.8 490.0 119.7 Q493.9 118.3 497.7 119.7 L497.7 138.3 H391.8 Z" fill="#5c9442"/>
<path d="M-20.0 136.9 Q-15.9 122.0 -11.9 124.2 Q-7.8 121.5 -3.8 125.5 Q0.3 123.5 4.4 127.2 Q8.4 122.2 12.4 126.6 Q16.9 120.2 21.3 126.7 Q27.6 122.3 34.0 124.6 Q39.1 122.0 44.2 123.9 Q47.6 121.5 50.9 125.1 L50.9 144.1 H-20.0 Z" fill="#4d883e"/>
<path d="M40.5 136.6 Q46.1 120.9 51.6 124.1 Q55.9 121.7 60.3 124.6 Q65.2 120.8 70.2 124.1 Q76.2 118.7 82.2 125.8 Q85.1 122.4 88.0 127.0 Q91.1 121.3 94.2 123.9 Q98.8 122.4 103.3 126.7 Q107.4 120.3 111.6 125.1 Q114.6 122.5 117.6 124.0 Q121.5 122.3 125.5 124.0 Q129.4 120.9 133.3 124.7 Q139.6 117.4 145.8 123.6 L145.8 143.9 H40.5 Z" fill="#6e9e46"/>
<path d="M118.1 134.1 Q123.7 115.8 129.2 121.4 Q135.3 116.5 141.3 122.8 Q147.2 117.0 153.0 121.2 Q156.2 119.5 159.3 123.5 Q165.2 116.1 171.1 124.2 Q175.4 119.5 179.8 122.4 Q184.7 120.2 189.6 124.4 Q194.9 119.7 200.2 121.4 Q204.5 119.0 208.8 122.2 L208.8 141.4 H118.1 Z" fill="#4d883e"/>
<path d="M173.1 137.9 Q178.6 119.5 184.2 127.3 Q188.4 123.6 192.5 126.7 Q198.7 121.9 204.9 125.4 Q211.1 120.2 217.4 127.5 Q222.3 120.5 227.1 124.8 L227.1 145.2 H173.1 Z" fill="#6e9e46"/>
<path d="M207.2 134.8 Q211.2 121.4 215.1 123.8 Q217.9 121.9 220.8 123.2 Q223.9 121.6 227.0 121.7 Q229.9 121.7 232.8 123.5 Q238.9 116.8 244.9 122.3 Q249.3 119.8 253.6 124.5 Q256.5 120.2 259.4 122.7 Q262.7 121.7 266.0 124.3 Q271.1 119.3 276.2 124.2 Q282.1 119.5 288.1 125.2 Q293.0 118.1 298.0 122.0 Q301.1 120.9 304.2 124.3 Q307.9 121.6 311.6 123.8 L311.6 142.0 H207.2 Z" fill="#86a84a"/>
<path d="M274.7 136.1 Q278.1 121.9 281.5 125.3 Q287.1 119.2 292.7 124.2 Q298.6 118.8 304.6 124.3 Q309.0 119.5 313.4 124.8 Q317.8 122.2 322.1 122.9 Q326.1 120.4 330.0 124.1 L330.0 143.3 H274.7 Z" fill="#6e9e46"/>
<path d="M319.1 136.2 Q323.0 121.5 326.9 124.2 Q329.8 122.6 332.7 126.3 Q335.8 121.5 338.8 123.7 Q343.9 121.8 349.0 124.6 Q353.0 120.8 357.0 123.4 Q362.1 119.5 367.2 123.9 Q370.1 121.2 373.0 124.7 Q376.9 120.5 380.8 123.7 Q387.0 118.1 393.2 123.2 L393.2 143.4 H319.1 Z" fill="#5c9442"/>
<path d="M356.4 137.8 Q359.4 124.4 362.4 124.9 Q368.2 122.0 374.0 127.2 Q377.9 123.2 381.9 126.2 Q388.1 122.1 394.2 125.7 Q397.1 123.9 399.9 125.5 Q406.2 118.5 412.6 127.8 Q415.3 124.5 418.1 124.7 L418.1 145.1 H356.4 Z" fill="#5c9442"/>
<path d="M391.0 135.3 Q394.0 120.5 397.1 124.7 Q400.8 122.2 404.4 124.4 Q409.6 118.2 414.8 125.1 Q419.0 118.8 423.2 122.7 Q428.2 120.8 433.3 125.5 Q436.6 120.0 439.8 125.0 Q443.0 120.7 446.2 125.0 Q451.6 118.8 456.9 122.3 Q462.7 119.9 468.5 122.9 L468.5 142.6 H391.0 Z" fill="#6e9e46"/>
<path d="M-20.0 142.4 Q-16.3 127.4 -12.6 129.3 Q-9.7 128.5 -6.8 130.6 Q-0.1 122.2 6.6 131.5 Q11.4 126.2 16.2 130.4 Q20.2 127.7 24.1 131.6 Q30.0 127.2 35.8 130.3 L35.8 149.8 H-20.0 Z" fill="#5c9442"/>
<path d="M11.8 143.2 Q16.5 127.9 21.1 130.8 Q24.6 128.1 28.1 132.2 Q31.4 128.6 34.8 130.9 Q38.7 128.6 42.6 131.7 Q46.4 129.1 50.1 132.9 Q55.7 124.4 61.3 129.5 L61.3 150.6 H11.8 Z" fill="#4d883e"/>
<path d="M42.0 139.7 Q48.0 122.1 54.0 129.6 Q58.7 125.3 63.5 127.2 Q69.3 122.8 75.1 127.9 Q80.1 123.2 85.1 126.2 Q88.7 123.4 92.3 128.2 Q96.7 125.2 101.0 129.0 Q104.2 125.7 107.4 128.4 Q111.5 124.8 115.6 127.0 L115.6 147.1 H42.0 Z" fill="#86a84a"/>
<path d="M89.4 143.5 Q93.9 129.1 98.3 131.4 Q102.7 127.4 107.1 132.0 Q113.2 126.2 119.4 129.9 Q124.6 125.5 129.8 130.2 Q134.7 126.2 139.6 130.3 Q144.2 127.5 148.8 131.0 Q152.2 129.3 155.5 131.7 Q159.0 129.6 162.4 133.4 Q168.0 127.9 173.5 132.9 Q179.5 124.3 185.5 133.1 Q190.4 128.3 195.2 131.6 Q199.5 127.3 203.9 131.0 L203.9 150.9 H89.4 Z" fill="#5c9442"/>
<path d="M175.4 142.7 Q180.2 126.9 185.1 129.1 Q191.2 126.2 197.4 130.7 Q202.6 124.6 207.7 130.1 Q211.7 125.9 215.6 129.3 Q220.4 125.7 225.2 132.1 Q229.6 125.4 234.0 129.6 Q237.8 126.2 241.5 131.1 Q247.9 125.6 254.2 131.5 L254.2 150.1 H175.4 Z" fill="#4d883e"/>
<path d="M225.2 139.7 Q231.3 124.4 237.5 128.0 Q240.5 124.5 243.5 127.0 Q247.3 124.9 251.1 127.3 Q257.2 120.4 263.4 126.6 Q267.2 123.2 271.1 128.2 Q274.3 125.0 277.4 125.9 Q281.3 125.2 285.2 126.7 L285.2 147.1 H225.2 Z" fill="#6e9e46"/>
<path d="M257.8 142.4 Q262.4 124.8 267.0 131.4 Q270.3 126.7 273.6 130.8 Q276.6 127.6 279.6 129.7 Q285.4 124.0 291.2 132.2 Q296.6 127.6 302.0 128.8 Q307.6 124.1 313.1 129.6 Q318.9 125.1 324.6 131.3 L324.6 149.8 H257.8 Z" fill="#4d883e"/>
<path d="M301.5 142.1 Q307.5 124.0 313.5 130.8 Q319.6 123.4 325.7 130.2 Q330.7 125.3 335.7 128.7 Q339.6 128.0 343.4 128.8 Q348.4 127.1 353.3 129.3 Q357.6 127.6 361.9 130.8 Q368.4 124.8 374.9 129.4 L374.9 149.5 H301.5 Z" fill="#45823c"/>
<path d="M341.4 142.9 Q347.1 128.0 352.7 130.6 Q356.9 127.9 361.1 132.4 Q366.6 124.7 372.2 129.5 Q377.1 125.1 382.0 130.5 Q387.1 128.2 392.2 131.3 Q396.7 126.5 401.3 131.5 L401.3 150.3 H341.4 Z" fill="#4d883e"/>
<path d="M383.1 139.6 Q386.1 125.8 389.1 126.4 Q393.5 124.0 397.9 126.4 Q404.3 121.3 410.6 126.4 Q416.9 121.7 423.2 129.1 Q426.9 123.8 430.7 127.0 Q436.4 120.6 442.0 129.5 Q447.1 124.7 452.1 128.8 L452.1 147.0 H383.1 Z" fill="#5c9442"/>
<path d="M-20.0 146.1 Q-15.1 129.4 -10.3 134.8 Q-6.8 131.4 -3.3 134.3 Q2.6 126.5 8.5 133.9 Q11.9 130.0 15.2 133.5 Q19.0 130.4 22.8 133.9 Q28.1 127.7 33.3 134.5 Q39.7 125.8 46.0 132.3 L46.0 153.6 H-20.0 Z" fill="#6e9e46"/>
<path d="M29.5 145.5 Q32.5 130.0 35.5 134.7 Q40.4 126.8 45.2 131.0 Q51.4 125.6 57.6 132.9 Q61.1 129.6 64.6 133.1 Q70.8 129.1 77.0 131.6 Q83.3 127.6 89.5 134.8 Q92.7 130.1 95.8 133.3 Q101.4 126.4 107.0 132.0 Q113.8 129.1 120.5 133.5 Q125.2 127.8 129.8 133.0 L129.8 153.1 H29.5 Z" fill="#4d883e"/>
<path d="M92.2 147.7 Q96.5 130.9 100.7 135.7 Q103.8 132.9 106.8 133.6 Q111.2 130.7 115.7 134.0 Q122.2 130.6 128.8 133.7 Q135.7 128.3 142.5 136.6 Q148.9 130.0 155.3 135.5 Q162.1 127.9 168.8 133.5 Q172.4 131.5 175.9 134.4 Q181.3 131.9 186.7 133.5 L186.7 155.2 H92.2 Z" fill="#4d883e"/>
<path d="M142.1 148.2 Q148.5 129.8 154.9 136.1 Q159.9 132.8 165.0 134.5 Q170.8 128.2 176.6 136.8 Q180.7 131.5 184.8 134.0 Q189.2 133.2 193.6 137.2 Q197.2 132.8 200.9 137.4 Q205.3 132.7 209.8 135.5 Q214.7 132.5 219.6 136.6 L219.6 155.7 H142.1 Z" fill="#45823c"/>
<path d="M187.4 148.1 Q192.3 132.1 197.2 137.1 Q201.7 130.4 206.3 136.7 Q210.4 132.4 214.5 133.9 Q220.6 128.8 226.7 135.6 L226.7 155.6 H187.4 Z" fill="#45823c"/>
<path d="M208.1 145.5 Q211.5 129.4 214.8 133.8 Q218.1 129.8 221.4 131.4 Q225.0 129.4 228.6 133.2 Q235.1 128.8 241.6 133.7 Q245.7 128.1 249.8 132.7 Q254.6 130.1 259.3 134.8 Q264.3 128.4 269.2 132.1 Q274.1 129.6 279.1 132.7 Q283.4 129.8 287.6 133.7 Q290.7 129.9 293.8 130.9 Q299.0 128.5 304.2 134.4 Q310.2 127.7 316.1 131.4 Q321.2 129.1 326.4 132.7 L326.4 153.0 H208.1 Z" fill="#6e9e46"/>
<path d="M303.6 146.7 Q308.8 130.9 314.1 133.3 Q319.1 131.2 324.1 132.3 Q327.9 130.5 331.7 132.3 Q336.1 130.7 340.5 133.1 Q345.7 129.0 350.9 134.7 Q357.7 129.9 364.5 132.7 Q368.2 129.4 371.9 132.6 Q377.2 127.1 382.5 133.5 L382.5 154.2 H303.6 Z" fill="#45823c"/>
<path d="M356.1 148.5 Q360.7 131.5 365.3 135.2 Q370.0 132.2 374.6 137.1 Q380.9 132.2 387.1 136.5 Q393.8 131.6 400.4 134.5 Q404.3 131.8 408.2 136.8 Q412.5 132.3 416.8 137.1 Q421.5 130.1 426.2 134.8 L426.2 156.1 H356.1 Z" fill="#45823c"/>
<path d="M396.8 148.8 Q402.2 133.2 407.6 136.1 Q411.0 132.8 414.4 135.0 Q421.0 128.2 427.7 137.6 Q432.6 131.2 437.5 135.7 Q441.1 131.8 444.7 137.3 L444.7 156.3 H396.8 Z" fill="#86a84a"/>
<path d="M-20.0 153.3 Q-13.4 134.4 -6.8 138.2 Q0.1 135.0 7.1 141.1 Q11.8 137.0 16.4 141.5 Q22.4 132.9 28.3 141.9 Q35.6 132.1 42.8 140.8 Q47.8 134.5 52.7 141.5 L52.7 160.9 H-20.0 Z" fill="#5c9442"/>
<path d="M23.2 154.4 Q29.7 136.9 36.3 139.5 Q41.4 136.2 46.4 140.8 Q50.3 139.0 54.2 139.2 Q59.9 134.3 65.6 139.0 Q70.6 136.6 75.6 141.2 Q79.6 137.1 83.6 139.9 L83.6 162.0 H23.2 Z" fill="#86a84a"/>
<path d="M58.4 151.3 Q62.7 134.9 67.0 139.2 Q73.8 130.0 80.6 139.8 Q85.1 132.6 89.5 138.7 L89.5 159.0 H58.4 Z" fill="#6e9e46"/>
<path d="M84.0 154.1 Q88.2 137.7 92.4 140.8 Q98.9 135.6 105.4 142.0 Q111.3 136.9 117.3 140.5 Q122.3 136.0 127.4 139.1 Q132.0 138.4 136.7 138.7 Q141.1 136.8 145.5 141.7 L145.5 161.7 H84.0 Z" fill="#45823c"/>
<path d="M115.7 153.9 Q119.6 137.1 123.6 138.9 Q128.7 134.9 133.8 141.4 Q140.2 133.2 146.6 140.9 Q150.4 135.8 154.2 140.1 Q157.8 138.3 161.5 138.8 Q166.5 134.7 171.6 142.3 L171.6 161.5 H115.7 Z" fill="#45823c"/>
<path d="M157.0 153.1 Q161.9 136.6 166.9 138.2 Q172.7 135.6 178.5 139.0 Q183.0 134.4 187.5 141.4 Q192.3 135.5 197.0 138.6 Q203.1 133.7 209.3 137.8 Q216.3 134.2 223.2 138.4 Q227.5 134.5 231.8 140.3 Q236.3 135.5 240.7 141.0 L240.7 160.7 H157.0 Z" fill="#86a84a"/>
<path d="M214.0 153.1 Q220.7 133.2 227.4 140.9 Q232.8 132.9 238.3 138.5 Q242.3 136.3 246.2 140.3 Q250.0 137.4 253.9 140.8 Q261.2 131.2 268.6 141.6 Q273.6 136.0 278.5 140.6 Q282.3 135.4 286.2 139.3 Q293.2 134.7 300.3 141.2 L300.3 160.8 H214.0 Z" fill="#4d883e"/>
<path d="M283.1 153.4 Q287.6 135.9 292.1 138.3 Q297.3 134.4 302.6 141.8 Q307.8 134.6 313.1 141.0 Q317.1 135.6 321.1 141.1 Q327.0 134.5 333.0 141.6 Q340.4 131.7 347.7 141.6 Q352.4 137.4 357.2 141.4 Q363.4 132.7 369.7 138.7 Q376.6 135.0 383.4 140.5 L383.4 161.0 H283.1 Z" fill="#6e9e46"/>
<path d="M335.2 152.3 Q342.3 133.8 349.5 140.0 Q356.9 133.7 364.3 136.9 Q370.1 135.0 376.0 139.1 Q381.8 135.6 387.7 140.5 Q391.5 134.3 395.4 139.1 Q401.6 131.3 407.8 138.3 L407.8 160.0 H335.2 Z" fill="#45823c"/>
<path d="M384.1 153.1 Q389.5 135.6 394.9 138.2 Q398.5 135.5 402.0 141.0 Q408.2 132.9 414.4 140.2 Q420.4 132.8 426.5 140.7 Q430.8 135.0 435.1 140.8 Q439.5 136.0 443.8 139.8 Q450.8 132.5 457.7 141.0 Q462.1 134.2 466.5 141.3 Q472.4 133.3 478.3 141.3 L478.3 160.8 H384.1 Z" fill="#45823c"/>
<path d="M-20.0 157.6 Q-16.6 140.4 -13.2 141.9 Q-7.2 136.1 -1.2 141.8 Q5.3 137.6 11.9 145.2 Q18.8 138.9 25.6 144.6 Q32.5 136.5 39.3 145.0 Q44.0 139.9 48.7 145.7 L48.7 165.4 H-20.0 Z" fill="#2f6636"/>
<path d="M25.5 157.9 Q32.7 138.1 39.8 143.0 Q43.9 139.6 48.0 141.7 Q54.8 136.1 61.7 142.0 Q66.0 139.3 70.2 143.5 L70.2 165.7 H25.5 Z" fill="#3f7b3a"/>
<path d="M50.8 158.8 Q54.7 142.7 58.7 145.7 Q66.1 141.0 73.5 144.7 Q78.5 141.1 83.4 143.1 Q90.6 138.4 97.7 145.9 Q105.5 139.0 113.2 147.0 Q119.8 137.3 126.4 146.0 Q131.9 140.0 137.3 145.7 Q141.9 141.1 146.5 146.5 Q150.6 141.2 154.7 144.2 L154.7 166.6 H50.8 Z" fill="#68a048"/>
<path d="M114.1 159.8 Q120.9 141.9 127.7 146.0 Q132.8 141.5 138.0 144.1 Q144.9 139.7 151.8 147.7 Q157.6 142.5 163.4 147.1 Q171.1 139.2 178.8 145.0 Q185.0 139.1 191.1 146.2 Q195.3 143.4 199.5 144.9 Q205.3 142.4 211.2 146.1 Q215.0 141.9 218.8 144.4 L218.8 167.6 H114.1 Z" fill="#4a873e"/>
<path d="M173.5 159.4 Q181.2 136.3 188.8 147.5 Q196.0 136.7 203.2 144.2 Q208.1 139.1 213.0 146.4 Q216.4 143.2 219.8 146.3 Q224.8 140.5 229.8 146.0 Q235.4 138.5 241.0 143.8 Q246.7 141.6 252.3 145.7 Q256.9 142.2 261.6 146.6 Q265.9 142.6 270.3 145.2 L270.3 167.2 H173.5 Z" fill="#5a9444"/>
<path d="M229.2 160.5 Q235.2 138.8 241.2 144.8 Q248.2 138.5 255.2 147.1 Q260.5 141.4 265.8 144.3 L265.8 168.3 H229.2 Z" fill="#68a048"/>
<path d="M245.8 161.1 Q252.6 142.2 259.4 147.1 Q264.0 142.3 268.6 148.1 Q273.1 142.6 277.6 144.8 Q281.2 144.0 284.8 148.2 Q289.7 143.8 294.6 148.4 Q301.8 142.7 308.9 147.8 Q316.2 137.6 323.5 149.1 Q329.5 143.3 335.4 147.4 L335.4 168.9 H245.8 Z" fill="#336e38"/>
<path d="M289.0 159.3 Q294.2 138.8 299.3 144.7 Q306.9 140.7 314.5 145.6 Q320.1 142.3 325.8 143.7 Q330.4 140.9 334.9 143.7 Q339.2 141.9 343.4 145.4 Q349.4 141.7 355.4 146.4 Q362.7 137.2 370.0 144.6 Q374.4 141.7 378.8 143.1 L378.8 167.1 H289.0 Z" fill="#5a9444"/>
<path d="M348.2 158.9 Q352.0 141.0 355.8 146.4 Q363.2 135.9 370.5 146.5 Q375.2 139.0 379.8 143.1 Q385.1 139.5 390.5 145.1 Q398.0 140.4 405.6 143.0 Q413.0 137.7 420.3 145.4 Q426.7 140.8 433.1 146.9 Q439.9 138.9 446.6 144.8 Q453.9 137.3 461.2 146.7 L461.2 166.7 H348.2 Z" fill="#5a9444"/>
<path d="M418.2 157.8 Q425.5 139.1 432.7 143.2 Q437.7 138.0 442.7 143.9 Q447.7 138.5 452.6 143.3 Q456.7 140.6 460.8 142.3 Q466.6 139.1 472.3 145.6 Q480.1 135.8 487.9 143.1 L487.9 165.6 H418.2 Z" fill="#336e38"/>
<path d="M-20.0 164.2 Q-14.2 143.4 -8.3 148.1 Q-2.2 143.8 4.0 147.3 Q12.2 141.9 20.3 148.9 Q27.6 140.1 35.0 150.8 Q40.5 144.6 46.0 149.7 Q53.0 142.3 60.0 150.2 Q66.1 142.2 72.3 149.7 L72.3 172.2 H-20.0 Z" fill="#5a9444"/>
<path d="M47.8 167.5 Q53.2 148.7 58.5 151.7 Q66.0 144.9 73.5 154.8 Q77.8 149.2 82.0 152.2 Q87.8 148.4 93.6 154.5 Q97.6 148.8 101.6 154.8 Q109.0 143.6 116.4 152.0 L116.4 175.5 H47.8 Z" fill="#3f7b3a"/>
<path d="M100.8 167.2 Q106.8 147.5 112.8 152.0 Q116.7 148.5 120.6 150.6 Q126.8 148.2 133.1 152.2 Q140.5 145.7 147.9 151.5 L147.9 175.2 H100.8 Z" fill="#5a9444"/>
<path d="M126.1 167.7 Q130.3 148.8 134.4 151.6 Q138.5 148.8 142.6 155.2 Q150.7 148.6 158.8 153.0 Q163.3 148.5 167.8 153.2 Q175.2 143.3 182.7 152.1 Q186.4 148.3 190.1 152.8 Q194.2 148.3 198.4 152.2 Q202.5 149.8 206.6 150.8 L206.6 175.6 H126.1 Z" fill="#4a873e"/>
<path d="M178.4 164.0 Q183.4 144.2 188.5 147.0 Q196.1 139.4 203.7 150.1 Q211.2 143.9 218.8 148.0 Q225.4 143.4 232.0 150.9 Q238.8 144.3 245.6 150.3 L245.6 172.0 H178.4 Z" fill="#336e38"/>
<path d="M218.9 164.9 Q227.0 144.5 235.2 147.9 Q239.6 146.6 244.0 149.7 Q247.6 146.5 251.3 150.5 Q256.3 146.4 261.4 151.6 Q269.0 145.0 276.6 149.2 Q281.3 146.5 286.0 150.5 Q292.1 146.7 298.2 150.8 Q304.3 146.6 310.4 150.1 Q315.2 144.0 320.1 149.1 Q325.2 145.8 330.2 150.9 L330.2 172.8 H218.9 Z" fill="#336e38"/>
<path d="M285.6 165.4 Q289.5 147.8 293.3 150.5 Q300.1 145.0 306.8 148.3 Q310.6 147.3 314.3 148.9 Q320.1 145.0 325.8 151.3 L325.8 173.3 H285.6 Z" fill="#3f7b3a"/>
<path d="M321.1 164.4 Q324.8 146.0 328.5 150.8 Q335.9 145.9 343.2 148.5 Q348.7 143.0 354.2 150.1 Q360.3 146.2 366.3 148.6 Q372.7 144.3 379.1 151.6 Q383.0 147.4 386.8 152.0 Q392.9 145.4 398.9 150.1 L398.9 172.4 H321.1 Z" fill="#336e38"/>
<path d="M373.2 164.2 Q378.3 145.3 383.4 147.5 Q390.2 142.4 397.1 149.8 Q401.6 144.8 406.1 151.5 L406.1 172.1 H373.2 Z" fill="#4a873e"/>
<path d="M397.3 165.1 Q401.1 146.9 404.8 151.0 Q411.6 144.7 418.3 148.5 Q424.2 145.6 430.1 150.1 Q434.2 145.3 438.4 149.1 Q446.4 141.7 454.5 150.8 Q460.4 147.4 466.2 149.5 Q471.3 144.3 476.3 151.9 L476.3 173.0 H397.3 Z" fill="#3f7b3a"/>
<path d="M-20.0 170.5 Q-13.9 148.2 -7.8 154.4 Q-1.9 148.5 3.9 153.3 Q9.9 148.9 16.0 155.2 Q23.6 145.0 31.2 154.3 Q37.5 148.5 43.9 156.9 Q48.4 152.4 52.8 156.9 L52.8 178.6 H-20.0 Z" fill="#2f6636"/>
<path d="M35.1 172.0 Q41.5 150.7 47.8 155.6 Q53.5 153.1 59.2 154.3 Q66.2 147.6 73.2 157.7 L73.2 180.1 H35.1 Z" fill="#2f6636"/>
<path d="M60.0 171.2 Q63.7 152.8 67.5 157.9 Q74.9 151.3 82.3 157.8 Q88.0 149.2 93.7 154.3 Q98.1 153.1 102.6 156.2 Q107.7 149.5 112.8 153.7 Q119.6 148.2 126.4 155.4 L126.4 179.3 H60.0 Z" fill="#336e38"/>
<path d="M115.9 174.2 Q124.4 152.7 133.0 158.7 Q141.5 150.2 150.0 157.8 Q154.3 153.2 158.6 156.6 Q164.1 152.2 169.7 160.9 Q177.7 152.0 185.7 159.5 Q194.3 149.2 202.9 157.7 Q208.3 152.8 213.6 159.2 L213.6 182.3 H115.9 Z" fill="#336e38"/>
<path d="M189.2 173.2 Q197.0 152.5 204.9 159.5 Q210.8 154.5 216.8 159.6 Q221.5 153.2 226.2 157.8 L226.2 181.4 H189.2 Z" fill="#68a048"/>
<path d="M206.0 170.5 Q210.9 149.8 215.8 154.2 Q219.8 152.9 223.7 155.6 Q229.5 148.2 235.3 157.4 Q242.1 147.1 248.8 156.9 Q257.2 147.7 265.7 155.6 L265.7 178.7 H206.0 Z" fill="#3f7b3a"/>
<path d="M249.0 173.3 Q257.3 150.9 265.6 159.4 Q272.3 152.7 279.0 155.6 Q286.4 153.5 293.8 157.6 Q299.8 154.4 305.7 159.9 Q311.4 150.8 317.0 159.8 Q321.1 154.6 325.2 158.3 Q331.4 150.7 337.5 157.0 Q342.1 152.4 346.6 156.8 Q351.2 155.4 355.8 155.5 L355.8 181.4 H249.0 Z" fill="#336e38"/>
<path d="M318.4 173.9 Q322.3 154.4 326.2 158.2 Q332.3 151.6 338.4 156.7 Q344.7 153.3 351.1 158.9 Q358.2 153.3 365.3 156.7 Q371.3 152.6 377.2 160.3 Q382.3 154.0 387.5 160.1 Q392.5 151.9 397.5 157.6 Q403.3 151.2 409.1 158.3 Q417.1 152.9 425.1 157.0 L425.1 182.0 H318.4 Z" fill="#4a873e"/>
<path d="M399.2 171.2 Q405.8 152.2 412.4 156.0 Q420.4 149.2 428.4 153.4 Q434.1 150.1 439.7 157.3 L439.7 179.3 H399.2 Z" fill="#3f7b3a"/>
<path d="M420.1 172.9 Q426.0 150.5 431.8 156.8 Q437.4 152.3 443.0 156.7 Q448.5 151.1 454.0 158.6 Q461.3 151.4 468.6 159.0 Q476.1 151.3 483.7 156.5 Q490.1 151.0 496.5 159.8 Q500.9 154.6 505.2 159.7 Q510.2 152.0 515.1 156.2 L515.1 181.0 H420.1 Z" fill="#4a873e"/>
<path d="M-20.0 178.9 Q-12.0 155.9 -4.0 164.1 Q4.4 155.3 12.7 163.6 L12.7 187.2 H-20.0 Z" fill="#2f6636"/>
<path d="M2.6 177.9 Q7.3 158.0 12.1 161.9 Q17.2 156.4 22.2 160.6 Q26.6 157.4 31.0 159.6 L31.0 186.1 H2.6 Z" fill="#3f7b3a"/>
<path d="M19.8 179.3 Q24.3 160.3 28.8 161.0 Q34.9 158.5 41.0 164.7 Q48.5 157.0 55.9 163.9 Q60.0 160.1 64.1 163.7 Q68.5 159.8 73.0 160.9 Q81.9 157.9 90.8 164.2 Q97.9 156.8 105.1 162.9 Q112.0 156.1 119.0 162.6 Q125.5 156.1 132.0 162.3 L132.0 187.6 H19.8 Z" fill="#68a048"/>
<path d="M91.1 178.4 Q97.6 155.9 104.1 162.7 Q112.7 155.6 121.4 162.3 Q126.6 159.4 131.9 161.4 Q136.6 156.0 141.3 161.2 Q145.9 158.8 150.5 162.7 Q155.1 159.7 159.6 160.2 Q165.4 157.6 171.3 160.1 Q175.7 157.9 180.2 163.3 Q184.7 158.7 189.2 161.5 L189.2 186.6 H91.1 Z" fill="#3f7b3a"/>
<path d="M142.8 180.3 Q148.5 156.8 154.2 164.1 Q162.5 153.7 170.8 163.7 Q175.2 159.7 179.6 164.6 Q187.4 155.4 195.1 162.7 Q202.1 156.4 209.1 161.4 Q217.9 153.7 226.6 165.0 Q230.6 161.7 234.6 164.1 Q239.4 161.5 244.2 162.1 L244.2 188.6 H142.8 Z" fill="#68a048"/>
<path d="M217.7 177.7 Q223.0 156.2 228.3 161.7 Q232.2 156.6 236.1 163.7 Q240.2 159.1 244.3 160.2 Q250.3 154.8 256.2 160.7 Q262.1 156.3 268.0 163.8 Q273.9 154.9 279.7 161.2 Q288.4 155.4 297.1 163.6 L297.1 186.0 H217.7 Z" fill="#5a9444"/>
<path d="M263.0 180.0 Q267.1 160.1 271.3 161.0 Q276.3 157.9 281.3 162.3 Q289.5 154.0 297.7 165.9 Q304.2 156.6 310.8 163.3 Q318.6 159.3 326.4 162.7 Q335.3 155.2 344.2 165.3 L344.2 188.2 H263.0 Z" fill="#5a9444"/>
<path d="M310.7 181.0 Q315.9 160.5 321.2 163.0 Q330.0 158.1 338.8 162.5 Q343.5 158.7 348.2 164.6 L348.2 189.2 H310.7 Z" fill="#4a873e"/>
<path d="M330.2 177.6 Q336.9 152.8 343.6 163.3 Q350.5 154.7 357.4 160.5 Q363.5 155.7 369.7 159.5 Q375.1 157.1 380.5 162.1 Q387.3 154.0 394.2 162.9 Q398.7 156.5 403.2 159.8 Q411.9 153.8 420.5 158.8 Q426.6 155.8 432.7 163.0 L432.7 185.8 H330.2 Z" fill="#3f7b3a"/>
<path d="M387.9 180.8 Q395.4 156.0 402.8 167.0 Q410.4 160.4 418.0 166.4 Q424.0 159.3 430.0 165.6 Q437.2 159.6 444.5 164.7 L444.5 189.0 H387.9 Z" fill="#5a9444"/>
<path d="M426.8 180.9 Q432.6 161.4 438.4 167.0 Q446.6 158.0 454.8 165.7 Q460.0 161.1 465.2 166.4 Q472.5 155.7 479.8 163.4 Q486.6 160.1 493.4 164.6 Q499.5 160.6 505.7 163.6 Q511.1 159.1 516.5 165.6 Q521.8 158.1 527.2 162.8 Q534.6 155.4 542.0 166.0 L542.0 189.2 H426.8 Z" fill="#2f6636"/>
<path d="M-20.0 188.6 Q-15.1 165.2 -10.2 171.2 Q-3.4 163.5 3.4 171.6 Q11.8 162.2 20.2 169.7 Q26.5 165.9 32.8 172.9 Q41.2 163.4 49.5 171.8 Q57.0 165.5 64.5 170.8 L64.5 197.1 H-20.0 Z" fill="#336e38"/>
<path d="M25.1 186.2 Q32.5 160.6 39.8 169.6 Q46.1 163.5 52.4 170.0 Q58.6 164.9 64.8 169.2 Q73.0 162.2 81.3 170.0 L81.3 194.6 H25.1 Z" fill="#68a048"/>
<path d="M68.0 185.2 Q74.0 161.5 80.0 167.0 Q88.2 160.5 96.5 165.8 Q104.3 161.5 112.2 170.5 Q120.9 158.8 129.6 167.4 Q138.3 160.9 147.0 168.5 L147.0 193.6 H68.0 Z" fill="#5a9444"/>
<path d="M131.0 186.1 Q138.0 161.9 145.0 170.8 Q153.9 159.7 162.8 171.4 Q170.0 162.8 177.1 169.5 Q182.4 165.4 187.6 169.4 Q194.2 165.2 200.9 170.5 Q207.9 163.8 214.9 167.4 Q222.2 162.8 229.5 170.5 L229.5 194.6 H131.0 Z" fill="#68a048"/>
<path d="M211.7 186.2 Q216.6 164.0 221.4 169.9 Q228.1 160.8 234.7 167.6 Q239.4 165.3 244.1 167.5 Q249.4 165.4 254.6 166.9 Q260.2 161.7 265.9 168.8 Q274.9 157.8 283.8 169.8 L283.8 194.7 H211.7 Z" fill="#3f7b3a"/>
<path d="M261.5 187.4 Q266.0 165.1 270.6 167.5 Q276.8 167.0 282.9 171.8 Q288.9 163.2 294.9 171.5 Q303.8 159.5 312.8 169.8 Q318.2 166.9 323.7 171.6 Q333.2 159.4 342.8 171.9 L342.8 195.8 H261.5 Z" fill="#4a873e"/>
<path d="M310.8 185.4 Q315.3 165.8 319.8 166.9 Q326.6 160.6 333.3 169.7 Q338.1 162.7 342.9 170.1 Q347.1 164.6 351.3 170.0 Q360.9 158.1 370.4 169.0 Q376.2 164.6 382.0 166.3 Q387.3 163.3 392.6 169.7 Q398.2 162.1 403.9 168.7 Q413.0 162.2 422.1 167.4 L422.1 193.8 H310.8 Z" fill="#3f7b3a"/>
<path d="M374.4 188.4 Q379.2 166.1 384.0 168.6 Q391.7 164.5 399.4 173.4 Q404.3 165.0 409.3 171.6 Q413.7 168.3 418.1 169.2 Q423.9 164.5 429.6 171.7 Q435.9 164.7 442.2 168.4 Q446.8 167.4 451.4 171.8 Q458.9 166.6 466.3 170.0 Q471.0 166.4 475.7 170.2 L475.7 196.8 H374.4 Z" fill="#2f6636"/>
<path d="M-20.0 192.3 Q-13.6 170.5 -7.3 175.9 Q2.1 163.7 11.5 176.2 Q16.8 171.3 22.2 173.1 Q29.0 168.6 35.8 175.2 Q42.8 170.8 49.8 175.2 Q57.2 169.1 64.5 174.2 Q71.8 166.4 79.0 175.7 L79.0 201.0 H-20.0 Z" fill="#2f6636"/>
<path d="M36.4 193.4 Q42.4 171.2 48.4 177.5 Q55.3 171.5 62.3 176.2 Q69.5 169.4 76.8 173.9 Q86.2 169.4 95.7 173.7 Q102.0 170.7 108.2 173.7 Q116.5 170.6 124.8 176.5 Q130.3 169.7 135.8 173.2 Q143.5 167.4 151.1 173.6 L151.1 202.0 H36.4 Z" fill="#5a9444"/>
<path d="M124.6 193.8 Q129.8 170.7 135.1 174.2 Q140.0 170.1 144.9 173.8 Q154.4 163.6 163.9 175.2 Q171.2 171.2 178.5 173.1 Q185.8 168.6 193.1 175.1 Q199.1 171.3 205.1 176.0 Q210.9 169.3 216.7 173.2 Q226.2 170.7 235.7 173.2 L235.7 202.4 H124.6 Z" fill="#4a873e"/>
<path d="M216.1 193.7 Q221.2 170.0 226.2 173.5 Q236.1 167.3 245.9 175.2 Q250.3 172.9 254.8 175.0 Q261.8 167.8 268.8 173.2 Q273.3 173.1 277.9 176.6 Q283.1 171.0 288.4 173.2 Q296.1 170.0 303.9 175.0 L303.9 202.4 H216.1 Z" fill="#5a9444"/>
<path d="M269.5 194.4 Q276.9 168.9 284.3 177.3 Q289.8 173.5 295.2 179.1 Q305.0 166.3 314.8 175.1 L314.8 203.0 H269.5 Z" fill="#2f6636"/>
<path d="M293.9 195.9 Q301.4 169.1 309.0 175.9 Q317.4 173.6 325.9 177.0 Q335.2 172.8 344.6 175.6 Q354.5 172.0 364.5 178.9 Q374.1 171.3 383.7 180.0 L383.7 204.5 H293.9 Z" fill="#5a9444"/>
<path d="M338.6 192.9 Q347.3 168.9 355.9 176.6 Q364.6 165.2 373.4 176.7 Q378.4 172.0 383.5 173.9 Q392.7 167.7 401.8 174.6 L401.8 201.5 H338.6 Z" fill="#336e38"/>
<path d="M391.9 192.9 Q397.9 169.6 403.9 175.7 Q412.7 164.2 421.4 172.2 Q430.7 163.2 440.0 174.4 Q446.4 167.4 452.8 174.5 Q461.4 164.1 470.0 176.5 Q477.2 169.7 484.4 172.2 L484.4 201.5 H391.9 Z" fill="#5a9444"/>
<path d="M-20.0 202.9 Q-10.5 179.2 -1.1 186.2 Q7.9 174.7 16.8 181.6 Q27.1 172.1 37.4 186.4 Q43.4 176.8 49.3 182.9 Q56.2 176.7 63.1 181.6 Q71.6 174.8 80.1 183.2 Q89.7 172.9 99.2 183.3 L99.2 211.7 H-20.0 Z" fill="#5a9444"/>
<path d="M41.0 202.0 Q47.5 175.3 54.0 180.1 Q63.4 172.3 72.7 184.2 Q77.9 177.7 83.0 182.6 Q93.6 172.0 104.1 182.7 Q112.3 172.6 120.5 185.0 Q129.5 173.7 138.4 184.0 Q148.4 172.5 158.5 183.2 L158.5 210.8 H41.0 Z" fill="#2f6636"/>
<path d="M128.5 203.0 Q137.6 172.0 146.8 186.6 Q153.0 178.9 159.2 183.4 Q165.2 179.6 171.2 184.2 Q176.7 179.8 182.2 186.0 Q187.0 180.6 191.8 183.0 L191.8 211.8 H128.5 Z" fill="#5a9444"/>
<path d="M167.0 203.8 Q176.0 176.6 185.0 184.3 Q194.8 174.7 204.6 182.0 Q211.9 175.8 219.1 185.3 Q228.8 172.6 238.5 187.3 L238.5 212.6 H167.0 Z" fill="#2f6636"/>
<path d="M213.5 203.7 Q219.0 180.5 224.4 185.0 Q230.8 177.5 237.1 183.4 Q245.6 176.5 254.2 185.0 L254.2 212.5 H213.5 Z" fill="#3f7b3a"/>
<path d="M232.1 203.0 Q237.0 180.1 241.9 185.2 Q248.5 177.6 255.1 181.7 Q264.4 174.6 273.7 181.5 Q283.3 173.8 293.0 185.9 L293.0 211.8 H232.1 Z" fill="#68a048"/>
<path d="M277.8 203.6 Q285.0 177.4 292.2 185.1 Q299.2 180.1 306.2 181.6 Q313.6 180.3 321.0 182.7 Q326.4 179.4 331.8 184.5 Q340.0 174.4 348.3 187.5 Q357.6 172.6 367.0 186.2 Q374.3 176.2 381.7 187.0 Q387.5 181.3 393.3 184.5 L393.3 212.4 H277.8 Z" fill="#336e38"/>
<path d="M351.9 203.9 Q356.5 180.0 361.1 184.1 Q366.5 177.8 372.0 183.7 Q377.8 179.0 383.7 181.9 Q392.4 178.3 401.1 182.0 Q411.0 178.4 420.9 186.9 Q429.4 176.4 437.9 185.9 Q444.3 178.3 450.7 185.3 Q455.4 181.4 460.1 182.3 L460.1 212.7 H351.9 Z" fill="#5a9444"/>
<path d="M-20.0 209.6 Q-15.1 186.3 -10.3 187.6 Q0.6 181.6 11.5 186.7 Q20.9 178.5 30.3 186.7 L30.3 218.6 H-20.0 Z" fill="#5a9444"/>
<path d="M2.6 211.2 Q13.6 183.6 24.5 189.9 Q30.7 186.1 37.0 192.0 Q43.4 184.3 49.9 192.4 Q59.6 183.8 69.3 189.6 Q80.2 182.5 91.0 193.0 L91.0 220.2 H2.6 Z" fill="#4a873e"/>
<path d="M50.9 210.8 Q58.2 186.4 65.4 190.0 Q76.0 179.5 86.5 190.4 Q94.8 185.0 103.1 191.6 Q108.8 185.8 114.5 188.1 Q121.3 187.1 128.1 189.0 Q135.2 185.7 142.3 192.3 Q151.8 181.1 161.3 190.4 L161.3 219.8 H50.9 Z" fill="#3f7b3a"/>
<path d="M134.5 211.6 Q140.2 185.3 145.9 188.7 Q154.1 186.7 162.3 192.3 Q167.7 188.7 173.1 193.8 Q183.6 178.5 194.1 192.7 Q198.9 185.9 203.7 189.2 Q212.2 185.7 220.7 189.3 L220.7 220.6 H134.5 Z" fill="#336e38"/>
<path d="M186.2 209.1 Q197.3 181.4 208.3 191.6 Q214.1 184.1 219.8 186.1 Q230.2 183.5 240.6 187.9 Q248.9 182.2 257.2 186.8 Q262.1 185.9 267.1 187.2 Q274.6 180.4 282.1 187.2 L282.1 218.1 H186.2 Z" fill="#2f6636"/>
<path d="M245.8 210.3 Q255.5 181.9 265.2 190.7 Q275.8 182.7 286.4 191.8 Q293.8 184.1 301.2 188.4 Q308.1 186.4 314.9 191.4 Q320.2 187.3 325.4 191.1 L325.4 219.3 H245.8 Z" fill="#68a048"/>
<path d="M297.5 209.2 Q305.0 184.5 312.4 191.9 Q319.1 185.6 325.7 190.9 Q330.8 186.4 335.9 186.2 Q343.1 185.0 350.2 186.0 Q360.5 179.6 370.7 189.0 Q378.9 178.8 387.0 189.0 Q394.4 183.0 401.8 189.7 L401.8 218.2 H297.5 Z" fill="#336e38"/>
<path d="M381.7 209.9 Q386.6 184.0 391.6 191.7 Q402.7 182.3 413.7 189.2 Q422.0 184.4 430.2 189.9 Q437.0 185.6 443.8 192.2 Q451.5 181.6 459.3 188.8 Q467.5 180.7 475.8 189.2 Q480.8 186.1 485.7 189.0 L485.7 218.9 H381.7 Z" fill="#3f7b3a"/>
<path d="M-20.0 220.0 Q-13.9 191.8 -7.9 197.8 Q-1.6 194.9 4.6 196.5 Q13.6 193.2 22.7 201.1 Q27.9 192.6 33.0 201.8 Q44.7 189.1 56.4 198.8 L56.4 229.2 H-20.0 Z" fill="#68a048"/>
<path d="M32.6 217.0 Q39.3 189.3 45.9 192.9 Q56.4 187.7 66.9 198.2 Q75.8 187.7 84.7 198.7 Q95.6 189.7 106.5 199.0 Q117.0 187.3 127.4 195.5 L127.4 226.2 H32.6 Z" fill="#2f6636"/>
<path d="M93.5 220.6 Q105.2 188.0 116.9 201.2 Q123.4 191.7 129.9 199.7 Q137.3 193.0 144.8 198.5 Q150.8 193.7 156.7 200.0 Q166.8 191.6 177.0 197.4 Q182.2 193.9 187.5 198.5 Q195.8 190.0 204.1 203.0 L204.1 229.8 H93.5 Z" fill="#4a873e"/>
<path d="M177.2 220.8 Q188.7 192.1 200.2 199.0 Q206.5 194.7 212.8 201.4 Q222.5 190.0 232.3 197.6 Q239.8 192.4 247.4 198.3 Q256.8 192.0 266.2 202.4 L266.2 230.0 H177.2 Z" fill="#5a9444"/>
<path d="M235.2 217.6 Q241.7 190.7 248.3 198.4 Q256.0 187.5 263.8 193.9 Q274.6 186.2 285.4 196.2 Q294.7 185.7 304.1 199.7 Q314.6 189.4 325.1 197.2 L325.1 226.8 H235.2 Z" fill="#3f7b3a"/>
<path d="M296.2 218.2 Q304.6 187.8 312.9 198.3 Q322.7 185.7 332.4 195.9 Q341.8 187.1 351.2 194.2 Q356.3 193.2 361.5 194.3 Q372.2 190.7 382.9 199.5 L382.9 227.4 H296.2 Z" fill="#336e38"/>
<path d="M352.0 217.8 Q360.0 187.7 368.0 195.9 Q376.4 190.7 384.7 198.8 L384.7 227.0 H352.0 Z" fill="#68a048"/>
<path d="M370.2 218.8 Q380.5 186.9 390.8 196.2 Q396.3 192.2 401.8 196.0 Q411.8 189.0 421.8 200.8 Q429.7 190.5 437.5 195.1 Q449.1 192.0 460.7 197.7 L460.7 228.0 H370.2 Z" fill="#3f7b3a"/>
<path d="M-20.0 229.2 Q-10.0 199.1 0.0 210.2 Q6.3 201.9 12.5 208.4 Q20.4 199.8 28.2 204.4 Q37.4 195.4 46.5 206.3 L46.5 238.6 H-20.0 Z" fill="#68a048"/>
<path d="M11.2 226.4 Q18.2 197.1 25.2 207.2 Q35.8 196.7 46.4 206.6 Q54.9 198.5 63.3 207.3 L63.3 235.8 H11.2 Z" fill="#4a873e"/>
<path d="M43.4 226.0 Q52.3 192.7 61.2 201.6 Q71.0 198.2 80.9 206.4 Q88.5 194.6 96.1 206.8 L96.1 235.4 H43.4 Z" fill="#3f7b3a"/>
<path d="M68.9 229.0 Q80.3 194.4 91.6 207.3 Q100.2 199.9 108.8 206.0 Q120.6 197.7 132.4 210.5 Q140.0 200.2 147.6 203.6 Q154.1 203.6 160.6 204.4 Q168.6 200.6 176.6 204.2 L176.6 238.4 H68.9 Z" fill="#68a048"/>
<path d="M135.0 229.8 Q141.5 201.6 148.0 210.0 Q155.2 201.1 162.4 209.5 Q171.3 199.0 180.1 207.1 Q186.7 201.6 193.3 204.5 Q201.2 202.7 209.0 210.5 Q214.5 202.3 220.1 205.4 L220.1 239.2 H135.0 Z" fill="#68a048"/>
<path d="M183.9 226.1 Q194.5 198.0 205.0 201.2 Q211.2 196.1 217.5 206.7 Q225.7 196.4 233.9 207.5 Q243.9 197.7 253.9 201.9 Q260.9 195.0 268.0 201.3 Q276.3 195.3 284.6 201.4 L284.6 235.5 H183.9 Z" fill="#68a048"/>
<path d="M257.6 227.3 Q265.7 201.1 273.9 202.3 Q281.1 197.2 288.4 204.4 Q297.6 193.5 306.8 204.6 Q316.0 193.4 325.3 203.9 L325.3 236.6 H257.6 Z" fill="#68a048"/>
<path d="M307.7 228.8 Q319.4 195.9 331.2 204.7 Q341.4 194.5 351.7 207.3 L351.7 238.2 H307.7 Z" fill="#336e38"/>
<path d="M335.4 226.3 Q345.7 194.3 356.0 207.5 Q364.4 194.2 372.9 201.0 Q383.0 192.1 393.1 206.3 Q399.9 198.1 406.7 204.7 Q418.1 191.2 429.4 202.7 L429.4 235.7 H335.4 Z" fill="#5a9444"/>
<path d="M416.0 229.8 Q427.5 200.8 439.1 207.3 Q448.8 200.9 458.5 210.0 Q469.7 201.2 480.9 207.5 Q488.7 203.4 496.5 210.3 Q504.4 200.0 512.4 204.7 L512.4 239.2 H416.0 Z" fill="#68a048"/>
</g>
<path d="M0 176 L65 158 L113.6 180 L280 155 L424 180 V284 H0 Z" fill="#d76c2c"/>
<polygon points="81,41 63.3,95 65.7,152.2 113.6,176.1 111.2,105.8" fill="url(#wallL)"/>
<polygon points="111.2,105.8 281.3,93.3 280.6,150 113.6,176.1" fill="url(#wallF)"/>
<polygon points="81,41 188,46.7 246.3,49.6 281.3,92.5 281.3,95 111.2,105.8" fill="#dc4a2c"/>
<polygon points="81,41 111.2,105.8 109,106 78.5,43" fill="#a5391f"/>
<polyline points="81,41 63.3,95" stroke="#6d3a20" stroke-width="1.6" fill="none"/>
<polyline points="111.2,105.8 281.3,93.3" stroke="#b0472a" stroke-width="1.2" fill="none"/>
<polygon points="171,49 197,50 246,50 221,89 176.3,93.3 176.3,73" fill="#d9482b"/>
<polygon points="176.3,73.3 196.75,51.7 221.3,89.2 176.3,93.3" fill="#f0e8d8"/>
<polyline points="170,77 196.75,50.5 223,90" stroke="#8a3a20" stroke-width="1.2" fill="none"/>
<path d="M189 84 V76 Q196.5 67 204 76 V84 Z" fill="#6e5c4a"/>
<polygon points="136,70 170,70 176,92 141,93" fill="#5e4a3a"/>
<rect x="145" y="72" width="9" height="20" fill="#c9b89a"/><rect x="156" y="75" width="10" height="16" fill="#8a9ab0"/>
<polygon points="134,70 139,58 170,57 171,70" fill="#d5452a"/>
<polygon points="216,73 250,64 256,74 252,90 228,90" fill="#d5452a"/>
<rect x="229.7" y="74.2" width="21.6" height="14.1" fill="#7e6e60"/>
<polygon points="240,62 253,73 227,74" fill="#eee6d6"/>
<rect x="78" y="68.6" width="9.5" height="21.7" fill="#5a4636"/>
<path d="M82.8 69.6 V89.3 M79 79.4 H86.5" stroke="#8a7664" stroke-width="0.7"/>
<rect x="74.7" y="107.8" width="7.4" height="18.2" fill="#5a4636"/>
<path d="M78.4 108.8 V125 M75.7 116.9 H81.1" stroke="#8a7664" stroke-width="0.7"/>
<rect x="89.6" y="112.6" width="7.4" height="19.6" fill="#5a4636"/>
<path d="M93.3 113.6 V131.2 M90.6 122.4 H96" stroke="#8a7664" stroke-width="0.7"/>
<rect x="75.9" y="136" width="7.8" height="16.8" fill="#5a4636"/>
<path d="M79.8 137 V151.8 M76.9 144.4 H82.7" stroke="#8a7664" stroke-width="0.7"/>
<rect x="90.8" y="141.7" width="9.6" height="18.9" fill="#5a4636"/>
<path d="M95.6 142.7 V159.6 M91.8 151.1 H99.4" stroke="#8a7664" stroke-width="0.7"/>
<rect x="132.2" y="115.3" width="10.8" height="18.2" fill="#5a4636"/>
<path d="M137.6 116.3 V132.5 M133.2 124.4 H142" stroke="#8a7664" stroke-width="0.7"/>
<rect x="153.8" y="113.2" width="11.5" height="18.3" fill="#5a4636"/>
<path d="M159.6 114.2 V130.5 M154.8 122.3 H164.3" stroke="#8a7664" stroke-width="0.7"/>
<rect x="132" y="145" width="13.0" height="17.9" fill="#5a4636"/>
<path d="M138.5 146 V161.9 M133 153.9 H144" stroke="#8a7664" stroke-width="0.7"/>
<rect x="154.4" y="141.7" width="11.3" height="16.7" fill="#5a4636"/>
<path d="M160.1 142.7 V157.4 M155.4 150.1 H164.7" stroke="#8a7664" stroke-width="0.7"/>
<rect x="238.1" y="105" width="12.2" height="15.7" fill="#5a4636"/>
<path d="M244.2 106 V119.7 M239.1 112.8 H249.3" stroke="#8a7664" stroke-width="0.7"/>
<rect x="260.5" y="103" width="7.4" height="14.3" fill="#5a4636"/>
<path d="M264.2 104 V116.3 M261.5 110.2 H266.9" stroke="#8a7664" stroke-width="0.7"/>
<rect x="238" y="128.8" width="12.0" height="17.2" fill="#5a4636"/>
<path d="M244.0 129.8 V145 M239 137.4 H249" stroke="#8a7664" stroke-width="0.7"/>
<rect x="260.5" y="126.8" width="7.5" height="12.2" fill="#5a4636"/>
<path d="M264.2 127.8 V138 M261.5 132.9 H267" stroke="#8a7664" stroke-width="0.7"/>
<path d="M183 157 V122 Q203.5 100 224 122 V153 Z" fill="#6b4a2e"/>
<path d="M187 156 V124 Q203.5 106 220 124 V153 Z" fill="#d4bb94"/>
<path d="M203 110 V155 M187 136 H220" stroke="#6b4a2e" stroke-width="2"/>
<rect x="175" y="116" width="7" height="10" fill="#c96a30"/><path d="M178.5 107 V116" stroke="#7a6050" stroke-width="1.5"/>
<polygon points="182,156 224,152 238,168 196,176" fill="#dac7a6"/>
<polygon points="192,174 236,166 246,186 204,196" fill="#d0bb98"/>
<ellipse cx="236" cy="192" rx="13" ry="6" fill="#cdb893"/>
<ellipse cx="354" cy="250" rx="12" ry="5" fill="#cbb79a"/>
<ellipse cx="366" cy="262" rx="8" ry="6" fill="#cbb79a"/>
<ellipse cx="402" cy="265" rx="9" ry="6" fill="#cbb79a"/>
<ellipse cx="410" cy="278" rx="9" ry="5" fill="#cbb79a"/>
<g filter="url(#bl2)">
<ellipse cx="276" cy="147" rx="7.5" ry="6.6" fill="#3c6c3c"/>
<circle cx="272.4" cy="144.5" r="3.4" fill="#68a052"/>
<circle cx="273.6" cy="142.6" r="3.4" fill="#68a052"/>
<circle cx="276.1" cy="141.9" r="3.4" fill="#68a052"/>
<circle cx="278.5" cy="142.6" r="3.4" fill="#68a052"/>
<circle cx="279.8" cy="144.5" r="3.4" fill="#68a052"/>
<circle cx="273.3" cy="142.3" r="1.9" fill="#8cb862" opacity=".7"/>
<circle cx="275.5" cy="140.8" r="1.9" fill="#8cb862" opacity=".7"/>
<circle cx="278.0" cy="141.5" r="1.9" fill="#8cb862" opacity=".7"/>
<ellipse cx="290" cy="148" rx="9.8" ry="8.6" fill="#335f3a"/>
<circle cx="285.0" cy="145.2" r="4.4" fill="#4c8a4a"/>
<circle cx="286.6" cy="142.7" r="4.4" fill="#4c8a4a"/>
<circle cx="289.8" cy="141.7" r="4.4" fill="#4c8a4a"/>
<circle cx="293.0" cy="142.7" r="4.4" fill="#4c8a4a"/>
<circle cx="294.7" cy="145.2" r="4.4" fill="#4c8a4a"/>
<circle cx="286.3" cy="142.4" r="2.5" fill="#6ea458" opacity=".7"/>
<circle cx="289.1" cy="140.5" r="2.5" fill="#6ea458" opacity=".7"/>
<circle cx="292.4" cy="141.4" r="2.5" fill="#6ea458" opacity=".7"/>
<ellipse cx="268" cy="148" rx="9.5" ry="8.4" fill="#2f5b38"/>
<circle cx="263.0" cy="145.4" r="4.3" fill="#3f7a42"/>
<circle cx="264.6" cy="143.0" r="4.3" fill="#3f7a42"/>
<circle cx="267.7" cy="142.0" r="4.3" fill="#3f7a42"/>
<circle cx="270.8" cy="143.0" r="4.3" fill="#3f7a42"/>
<circle cx="272.4" cy="145.4" r="4.3" fill="#3f7a42"/>
<circle cx="264.2" cy="142.7" r="2.5" fill="#5a924e" opacity=".7"/>
<circle cx="267.0" cy="140.8" r="2.5" fill="#5a924e" opacity=".7"/>
<circle cx="270.2" cy="141.7" r="2.5" fill="#5a924e" opacity=".7"/>
<ellipse cx="297" cy="150" rx="7.7" ry="6.8" fill="#3c6c3c"/>
<circle cx="293.1" cy="147.3" r="3.5" fill="#68a052"/>
<circle cx="294.4" cy="145.4" r="3.5" fill="#68a052"/>
<circle cx="296.9" cy="144.6" r="3.5" fill="#68a052"/>
<circle cx="299.4" cy="145.4" r="3.5" fill="#68a052"/>
<circle cx="300.7" cy="147.3" r="3.5" fill="#68a052"/>
<circle cx="294.1" cy="145.1" r="2.0" fill="#8cb862" opacity=".7"/>
<circle cx="296.3" cy="143.5" r="2.0" fill="#8cb862" opacity=".7"/>
<circle cx="298.9" cy="144.2" r="2.0" fill="#8cb862" opacity=".7"/>
<ellipse cx="69" cy="151" rx="8.8" ry="7.7" fill="#305c38"/>
<circle cx="65.1" cy="148.6" r="4.0" fill="#508c4a"/>
<circle cx="66.6" cy="146.3" r="4.0" fill="#508c4a"/>
<circle cx="69.5" cy="145.5" r="4.0" fill="#508c4a"/>
<circle cx="72.3" cy="146.3" r="4.0" fill="#508c4a"/>
<circle cx="73.8" cy="148.6" r="4.0" fill="#508c4a"/>
<circle cx="66.3" cy="146.1" r="2.3" fill="#72a85a" opacity=".7"/>
<circle cx="68.9" cy="144.3" r="2.3" fill="#72a85a" opacity=".7"/>
<circle cx="71.8" cy="145.1" r="2.3" fill="#72a85a" opacity=".7"/>
<ellipse cx="318" cy="154" rx="9.4" ry="8.2" fill="#305c38"/>
<circle cx="313.0" cy="151.3" r="4.2" fill="#508c4a"/>
<circle cx="314.6" cy="148.9" r="4.2" fill="#508c4a"/>
<circle cx="317.7" cy="148.0" r="4.2" fill="#508c4a"/>
<circle cx="320.7" cy="148.9" r="4.2" fill="#508c4a"/>
<circle cx="322.3" cy="151.3" r="4.2" fill="#508c4a"/>
<circle cx="314.2" cy="148.6" r="2.4" fill="#72a85a" opacity=".7"/>
<circle cx="317.0" cy="146.8" r="2.4" fill="#72a85a" opacity=".7"/>
<circle cx="320.1" cy="147.6" r="2.4" fill="#72a85a" opacity=".7"/>
<ellipse cx="47" cy="154" rx="7.5" ry="6.6" fill="#305c38"/>
<circle cx="43.5" cy="151.8" r="3.4" fill="#508c4a"/>
<circle cx="44.7" cy="149.9" r="3.4" fill="#508c4a"/>
<circle cx="47.1" cy="149.1" r="3.4" fill="#508c4a"/>
<circle cx="49.6" cy="149.9" r="3.4" fill="#508c4a"/>
<circle cx="50.8" cy="151.8" r="3.4" fill="#508c4a"/>
<circle cx="44.4" cy="149.6" r="1.9" fill="#72a85a" opacity=".7"/>
<circle cx="46.6" cy="148.1" r="1.9" fill="#72a85a" opacity=".7"/>
<circle cx="49.1" cy="148.7" r="1.9" fill="#72a85a" opacity=".7"/>
<ellipse cx="257" cy="155" rx="9.6" ry="8.5" fill="#376839"/>
<circle cx="252.7" cy="152.1" r="4.3" fill="#5c984e"/>
<circle cx="254.3" cy="149.7" r="4.3" fill="#5c984e"/>
<circle cx="257.4" cy="148.7" r="4.3" fill="#5c984e"/>
<circle cx="260.6" cy="149.7" r="4.3" fill="#5c984e"/>
<circle cx="262.2" cy="152.1" r="4.3" fill="#5c984e"/>
<circle cx="253.9" cy="149.4" r="2.5" fill="#82b45e" opacity=".7"/>
<circle cx="256.8" cy="147.5" r="2.5" fill="#82b45e" opacity=".7"/>
<circle cx="260.0" cy="148.4" r="2.5" fill="#82b45e" opacity=".7"/>
<ellipse cx="285" cy="155" rx="8.0" ry="7.1" fill="#2f5b38"/>
<circle cx="281.5" cy="152.3" r="3.6" fill="#3f7a42"/>
<circle cx="282.8" cy="150.2" r="3.6" fill="#3f7a42"/>
<circle cx="285.4" cy="149.4" r="3.6" fill="#3f7a42"/>
<circle cx="288.0" cy="150.2" r="3.6" fill="#3f7a42"/>
<circle cx="289.4" cy="152.3" r="3.6" fill="#3f7a42"/>
<circle cx="282.5" cy="149.9" r="2.1" fill="#5a924e" opacity=".7"/>
<circle cx="284.9" cy="148.3" r="2.1" fill="#5a924e" opacity=".7"/>
<circle cx="287.6" cy="149.1" r="2.1" fill="#5a924e" opacity=".7"/>
<ellipse cx="274" cy="156" rx="9.5" ry="8.3" fill="#305c38"/>
<circle cx="269.4" cy="153.2" r="4.3" fill="#508c4a"/>
<circle cx="271.0" cy="150.8" r="4.3" fill="#508c4a"/>
<circle cx="274.1" cy="149.9" r="4.3" fill="#508c4a"/>
<circle cx="277.2" cy="150.8" r="4.3" fill="#508c4a"/>
<circle cx="278.8" cy="153.2" r="4.3" fill="#508c4a"/>
<circle cx="270.7" cy="150.6" r="2.5" fill="#72a85a" opacity=".7"/>
<circle cx="273.4" cy="148.7" r="2.5" fill="#72a85a" opacity=".7"/>
<circle cx="276.6" cy="149.5" r="2.5" fill="#72a85a" opacity=".7"/>
<ellipse cx="296" cy="156" rx="7.9" ry="6.9" fill="#3c6c3c"/>
<circle cx="292.5" cy="153.5" r="3.5" fill="#68a052"/>
<circle cx="293.8" cy="151.5" r="3.5" fill="#68a052"/>
<circle cx="296.4" cy="150.7" r="3.5" fill="#68a052"/>
<circle cx="298.9" cy="151.5" r="3.5" fill="#68a052"/>
<circle cx="300.3" cy="153.5" r="3.5" fill="#68a052"/>
<circle cx="293.5" cy="151.2" r="2.0" fill="#8cb862" opacity=".7"/>
<circle cx="295.8" cy="149.6" r="2.0" fill="#8cb862" opacity=".7"/>
<circle cx="298.5" cy="150.3" r="2.0" fill="#8cb862" opacity=".7"/>
<ellipse cx="79" cy="157" rx="10.3" ry="9.1" fill="#376839"/>
<circle cx="73.7" cy="154.0" r="4.6" fill="#5c984e"/>
<circle cx="75.4" cy="151.4" r="4.6" fill="#5c984e"/>
<circle cx="78.8" cy="150.3" r="4.6" fill="#5c984e"/>
<circle cx="82.1" cy="151.4" r="4.6" fill="#5c984e"/>
<circle cx="83.9" cy="154.0" r="4.6" fill="#5c984e"/>
<circle cx="75.0" cy="151.1" r="2.7" fill="#82b45e" opacity=".7"/>
<circle cx="78.1" cy="149.1" r="2.7" fill="#82b45e" opacity=".7"/>
<circle cx="81.5" cy="150.0" r="2.7" fill="#82b45e" opacity=".7"/>
<ellipse cx="249" cy="157" rx="7.5" ry="6.6" fill="#3c6c3c"/>
<circle cx="245.7" cy="154.7" r="3.4" fill="#68a052"/>
<circle cx="247.0" cy="152.8" r="3.4" fill="#68a052"/>
<circle cx="249.4" cy="152.0" r="3.4" fill="#68a052"/>
<circle cx="251.9" cy="152.8" r="3.4" fill="#68a052"/>
<circle cx="253.1" cy="154.7" r="3.4" fill="#68a052"/>
<circle cx="246.7" cy="152.5" r="1.9" fill="#8cb862" opacity=".7"/>
<circle cx="248.9" cy="151.0" r="1.9" fill="#8cb862" opacity=".7"/>
<circle cx="251.4" cy="151.6" r="1.9" fill="#8cb862" opacity=".7"/>
<ellipse cx="68" cy="157" rx="9.2" ry="8.1" fill="#335f3a"/>
<circle cx="63.6" cy="154.6" r="4.2" fill="#4c8a4a"/>
<circle cx="65.2" cy="152.3" r="4.2" fill="#4c8a4a"/>
<circle cx="68.2" cy="151.3" r="4.2" fill="#4c8a4a"/>
<circle cx="71.2" cy="152.3" r="4.2" fill="#4c8a4a"/>
<circle cx="72.7" cy="154.6" r="4.2" fill="#4c8a4a"/>
<circle cx="64.8" cy="152.0" r="2.4" fill="#6ea458" opacity=".7"/>
<circle cx="67.5" cy="150.1" r="2.4" fill="#6ea458" opacity=".7"/>
<circle cx="70.6" cy="151.0" r="2.4" fill="#6ea458" opacity=".7"/>
<ellipse cx="55" cy="158" rx="9.6" ry="8.4" fill="#2f5b38"/>
<circle cx="50.1" cy="155.0" r="4.3" fill="#3f7a42"/>
<circle cx="51.8" cy="152.6" r="4.3" fill="#3f7a42"/>
<circle cx="54.9" cy="151.6" r="4.3" fill="#3f7a42"/>
<circle cx="58.0" cy="152.6" r="4.3" fill="#3f7a42"/>
<circle cx="59.6" cy="155.0" r="4.3" fill="#3f7a42"/>
<circle cx="51.4" cy="152.3" r="2.5" fill="#5a924e" opacity=".7"/>
<circle cx="54.2" cy="150.4" r="2.5" fill="#5a924e" opacity=".7"/>
<circle cx="57.4" cy="151.2" r="2.5" fill="#5a924e" opacity=".7"/>
<ellipse cx="308" cy="158" rx="9.5" ry="8.3" fill="#305c38"/>
<circle cx="303.5" cy="155.1" r="4.3" fill="#508c4a"/>
<circle cx="305.1" cy="152.7" r="4.3" fill="#508c4a"/>
<circle cx="308.2" cy="151.7" r="4.3" fill="#508c4a"/>
<circle cx="311.3" cy="152.7" r="4.3" fill="#508c4a"/>
<circle cx="312.9" cy="155.1" r="4.3" fill="#508c4a"/>
<circle cx="304.8" cy="152.4" r="2.5" fill="#72a85a" opacity=".7"/>
<circle cx="307.5" cy="150.5" r="2.5" fill="#72a85a" opacity=".7"/>
<circle cx="310.7" cy="151.4" r="2.5" fill="#72a85a" opacity=".7"/>
<ellipse cx="331" cy="158" rx="7.7" ry="6.7" fill="#2f5b38"/>
<circle cx="326.8" cy="155.3" r="3.5" fill="#3f7a42"/>
<circle cx="328.1" cy="153.3" r="3.5" fill="#3f7a42"/>
<circle cx="330.6" cy="152.5" r="3.5" fill="#3f7a42"/>
<circle cx="333.0" cy="153.3" r="3.5" fill="#3f7a42"/>
<circle cx="334.3" cy="155.3" r="3.5" fill="#3f7a42"/>
<circle cx="327.8" cy="153.0" r="2.0" fill="#5a924e" opacity=".7"/>
<circle cx="330.0" cy="151.5" r="2.0" fill="#5a924e" opacity=".7"/>
<circle cx="332.6" cy="152.2" r="2.0" fill="#5a924e" opacity=".7"/>
<ellipse cx="76" cy="160" rx="8.4" ry="7.4" fill="#2f5b38"/>
<circle cx="71.6" cy="157.8" r="3.8" fill="#3f7a42"/>
<circle cx="73.0" cy="155.7" r="3.8" fill="#3f7a42"/>
<circle cx="75.7" cy="154.9" r="3.8" fill="#3f7a42"/>
<circle cx="78.4" cy="155.7" r="3.8" fill="#3f7a42"/>
<circle cx="79.8" cy="157.8" r="3.8" fill="#3f7a42"/>
<circle cx="72.7" cy="155.4" r="2.2" fill="#5a924e" opacity=".7"/>
<circle cx="75.1" cy="153.8" r="2.2" fill="#5a924e" opacity=".7"/>
<circle cx="77.9" cy="154.5" r="2.2" fill="#5a924e" opacity=".7"/>
<ellipse cx="347" cy="161" rx="10.2" ry="9.0" fill="#3c6c3c"/>
<circle cx="342.3" cy="158.0" r="4.6" fill="#68a052"/>
<circle cx="344.0" cy="155.4" r="4.6" fill="#68a052"/>
<circle cx="347.3" cy="154.4" r="4.6" fill="#68a052"/>
<circle cx="350.6" cy="155.4" r="4.6" fill="#68a052"/>
<circle cx="352.4" cy="158.0" r="4.6" fill="#68a052"/>
<circle cx="343.6" cy="155.2" r="2.6" fill="#8cb862" opacity=".7"/>
<circle cx="346.6" cy="153.1" r="2.6" fill="#8cb862" opacity=".7"/>
<circle cx="350.0" cy="154.0" r="2.6" fill="#8cb862" opacity=".7"/>
<ellipse cx="42" cy="161" rx="9.5" ry="8.3" fill="#335f3a"/>
<circle cx="37.0" cy="158.1" r="4.3" fill="#4c8a4a"/>
<circle cx="38.6" cy="155.7" r="4.3" fill="#4c8a4a"/>
<circle cx="41.7" cy="154.7" r="4.3" fill="#4c8a4a"/>
<circle cx="44.7" cy="155.7" r="4.3" fill="#4c8a4a"/>
<circle cx="46.3" cy="158.1" r="4.3" fill="#4c8a4a"/>
<circle cx="38.2" cy="155.4" r="2.5" fill="#6ea458" opacity=".7"/>
<circle cx="41.0" cy="153.5" r="2.5" fill="#6ea458" opacity=".7"/>
<circle cx="44.2" cy="154.4" r="2.5" fill="#6ea458" opacity=".7"/>
<ellipse cx="90" cy="161" rx="9.4" ry="8.3" fill="#2f5b38"/>
<circle cx="85.2" cy="158.2" r="4.2" fill="#3f7a42"/>
<circle cx="86.8" cy="155.8" r="4.2" fill="#3f7a42"/>
<circle cx="89.9" cy="154.9" r="4.2" fill="#3f7a42"/>
<circle cx="93.0" cy="155.8" r="4.2" fill="#3f7a42"/>
<circle cx="94.5" cy="158.2" r="4.2" fill="#3f7a42"/>
<circle cx="86.4" cy="155.6" r="2.5" fill="#5a924e" opacity=".7"/>
<circle cx="89.2" cy="153.7" r="2.5" fill="#5a924e" opacity=".7"/>
<circle cx="92.4" cy="154.5" r="2.5" fill="#5a924e" opacity=".7"/>
<ellipse cx="29" cy="161" rx="8.8" ry="7.8" fill="#3c6c3c"/>
<circle cx="24.9" cy="158.7" r="4.0" fill="#68a052"/>
<circle cx="26.4" cy="156.5" r="4.0" fill="#68a052"/>
<circle cx="29.3" cy="155.6" r="4.0" fill="#68a052"/>
<circle cx="32.2" cy="156.5" r="4.0" fill="#68a052"/>
<circle cx="33.7" cy="158.7" r="4.0" fill="#68a052"/>
<circle cx="26.1" cy="156.2" r="2.3" fill="#8cb862" opacity=".7"/>
<circle cx="28.7" cy="154.4" r="2.3" fill="#8cb862" opacity=".7"/>
<circle cx="31.6" cy="155.2" r="2.3" fill="#8cb862" opacity=".7"/>
<ellipse cx="263" cy="162" rx="10.5" ry="9.2" fill="#2f5b38"/>
<circle cx="257.8" cy="159.3" r="4.7" fill="#3f7a42"/>
<circle cx="259.6" cy="156.6" r="4.7" fill="#3f7a42"/>
<circle cx="263.0" cy="155.6" r="4.7" fill="#3f7a42"/>
<circle cx="266.4" cy="156.6" r="4.7" fill="#3f7a42"/>
<circle cx="268.2" cy="159.3" r="4.7" fill="#3f7a42"/>
<circle cx="259.2" cy="156.4" r="2.7" fill="#5a924e" opacity=".7"/>
<circle cx="262.3" cy="154.3" r="2.7" fill="#5a924e" opacity=".7"/>
<circle cx="265.8" cy="155.3" r="2.7" fill="#5a924e" opacity=".7"/>
<ellipse cx="290" cy="162" rx="8.5" ry="7.5" fill="#3c6c3c"/>
<circle cx="286.3" cy="159.6" r="3.8" fill="#68a052"/>
<circle cx="287.7" cy="157.4" r="3.8" fill="#68a052"/>
<circle cx="290.5" cy="156.5" r="3.8" fill="#68a052"/>
<circle cx="293.2" cy="157.4" r="3.8" fill="#68a052"/>
<circle cx="294.7" cy="159.6" r="3.8" fill="#68a052"/>
<circle cx="287.4" cy="157.1" r="2.2" fill="#8cb862" opacity=".7"/>
<circle cx="289.9" cy="155.4" r="2.2" fill="#8cb862" opacity=".7"/>
<circle cx="292.7" cy="156.2" r="2.2" fill="#8cb862" opacity=".7"/>
<ellipse cx="68" cy="162" rx="8.9" ry="7.8" fill="#335f3a"/>
<circle cx="63.8" cy="159.6" r="4.0" fill="#4c8a4a"/>
<circle cx="65.3" cy="157.3" r="4.0" fill="#4c8a4a"/>
<circle cx="68.1" cy="156.4" r="4.0" fill="#4c8a4a"/>
<circle cx="71.0" cy="157.3" r="4.0" fill="#4c8a4a"/>
<circle cx="72.5" cy="159.6" r="4.0" fill="#4c8a4a"/>
<circle cx="64.9" cy="157.1" r="2.3" fill="#6ea458" opacity=".7"/>
<circle cx="67.5" cy="155.3" r="2.3" fill="#6ea458" opacity=".7"/>
<circle cx="70.5" cy="156.1" r="2.3" fill="#6ea458" opacity=".7"/>
<ellipse cx="278" cy="162" rx="9.7" ry="8.5" fill="#305c38"/>
<circle cx="273.4" cy="159.8" r="4.4" fill="#508c4a"/>
<circle cx="275.0" cy="157.3" r="4.4" fill="#508c4a"/>
<circle cx="278.2" cy="156.3" r="4.4" fill="#508c4a"/>
<circle cx="281.3" cy="157.3" r="4.4" fill="#508c4a"/>
<circle cx="283.0" cy="159.8" r="4.4" fill="#508c4a"/>
<circle cx="274.6" cy="157.1" r="2.5" fill="#72a85a" opacity=".7"/>
<circle cx="277.5" cy="155.1" r="2.5" fill="#72a85a" opacity=".7"/>
<circle cx="280.7" cy="156.0" r="2.5" fill="#72a85a" opacity=".7"/>
<ellipse cx="311" cy="162" rx="10.2" ry="8.9" fill="#2f5b38"/>
<circle cx="306.0" cy="159.7" r="4.6" fill="#3f7a42"/>
<circle cx="307.7" cy="157.2" r="4.6" fill="#3f7a42"/>
<circle cx="311.0" cy="156.2" r="4.6" fill="#3f7a42"/>
<circle cx="314.3" cy="157.2" r="4.6" fill="#3f7a42"/>
<circle cx="316.0" cy="159.7" r="4.6" fill="#3f7a42"/>
<circle cx="307.3" cy="156.9" r="2.6" fill="#5a924e" opacity=".7"/>
<circle cx="310.3" cy="154.9" r="2.6" fill="#5a924e" opacity=".7"/>
<circle cx="313.7" cy="155.8" r="2.6" fill="#5a924e" opacity=".7"/>
<ellipse cx="298" cy="163" rx="10.3" ry="9.0" fill="#2f5b38"/>
<circle cx="292.7" cy="160.5" r="4.6" fill="#3f7a42"/>
<circle cx="294.5" cy="157.9" r="4.6" fill="#3f7a42"/>
<circle cx="297.8" cy="156.8" r="4.6" fill="#3f7a42"/>
<circle cx="301.1" cy="157.9" r="4.6" fill="#3f7a42"/>
<circle cx="302.9" cy="160.5" r="4.6" fill="#3f7a42"/>
<circle cx="294.1" cy="157.6" r="2.7" fill="#5a924e" opacity=".7"/>
<circle cx="297.1" cy="155.6" r="2.7" fill="#5a924e" opacity=".7"/>
<circle cx="300.5" cy="156.5" r="2.7" fill="#5a924e" opacity=".7"/>
<ellipse cx="20" cy="163" rx="8.9" ry="7.9" fill="#376839"/>
<circle cx="15.3" cy="160.8" r="4.0" fill="#5c984e"/>
<circle cx="16.9" cy="158.6" r="4.0" fill="#5c984e"/>
<circle cx="19.8" cy="157.7" r="4.0" fill="#5c984e"/>
<circle cx="22.7" cy="158.6" r="4.0" fill="#5c984e"/>
<circle cx="24.2" cy="160.8" r="4.0" fill="#5c984e"/>
<circle cx="16.5" cy="158.3" r="2.3" fill="#82b45e" opacity=".7"/>
<circle cx="19.1" cy="156.5" r="2.3" fill="#82b45e" opacity=".7"/>
<circle cx="22.1" cy="157.3" r="2.3" fill="#82b45e" opacity=".7"/>
<ellipse cx="324" cy="164" rx="10.4" ry="9.1" fill="#3c6c3c"/>
<circle cx="318.4" cy="160.9" r="4.7" fill="#68a052"/>
<circle cx="320.2" cy="158.2" r="4.7" fill="#68a052"/>
<circle cx="323.5" cy="157.2" r="4.7" fill="#68a052"/>
<circle cx="326.9" cy="158.2" r="4.7" fill="#68a052"/>
<circle cx="328.6" cy="160.9" r="4.7" fill="#68a052"/>
<circle cx="319.8" cy="158.0" r="2.7" fill="#8cb862" opacity=".7"/>
<circle cx="322.8" cy="155.9" r="2.7" fill="#8cb862" opacity=".7"/>
<circle cx="326.3" cy="156.9" r="2.7" fill="#8cb862" opacity=".7"/>
<ellipse cx="361" cy="164" rx="7.8" ry="6.9" fill="#2f5b38"/>
<circle cx="357.4" cy="161.3" r="3.5" fill="#3f7a42"/>
<circle cx="358.7" cy="159.3" r="3.5" fill="#3f7a42"/>
<circle cx="361.3" cy="158.6" r="3.5" fill="#3f7a42"/>
<circle cx="363.8" cy="159.3" r="3.5" fill="#3f7a42"/>
<circle cx="365.1" cy="161.3" r="3.5" fill="#3f7a42"/>
<circle cx="358.4" cy="159.0" r="2.0" fill="#5a924e" opacity=".7"/>
<circle cx="360.7" cy="157.5" r="2.0" fill="#5a924e" opacity=".7"/>
<circle cx="363.3" cy="158.2" r="2.0" fill="#5a924e" opacity=".7"/>
<ellipse cx="8" cy="164" rx="7.7" ry="6.7" fill="#376839"/>
<circle cx="3.9" cy="161.9" r="3.4" fill="#5c984e"/>
<circle cx="5.2" cy="160.0" r="3.4" fill="#5c984e"/>
<circle cx="7.7" cy="159.2" r="3.4" fill="#5c984e"/>
<circle cx="10.2" cy="160.0" r="3.4" fill="#5c984e"/>
<circle cx="11.5" cy="161.9" r="3.4" fill="#5c984e"/>
<circle cx="4.9" cy="159.7" r="2.0" fill="#82b45e" opacity=".7"/>
<circle cx="7.2" cy="158.1" r="2.0" fill="#82b45e" opacity=".7"/>
<circle cx="9.7" cy="158.8" r="2.0" fill="#82b45e" opacity=".7"/>
<ellipse cx="334" cy="165" rx="10.0" ry="8.8" fill="#335f3a"/>
<circle cx="329.4" cy="162.1" r="4.5" fill="#4c8a4a"/>
<circle cx="331.1" cy="159.5" r="4.5" fill="#4c8a4a"/>
<circle cx="334.4" cy="158.5" r="4.5" fill="#4c8a4a"/>
<circle cx="337.6" cy="159.5" r="4.5" fill="#4c8a4a"/>
<circle cx="339.3" cy="162.1" r="4.5" fill="#4c8a4a"/>
<circle cx="330.7" cy="159.3" r="2.6" fill="#6ea458" opacity=".7"/>
<circle cx="333.7" cy="157.3" r="2.6" fill="#6ea458" opacity=".7"/>
<circle cx="337.0" cy="158.2" r="2.6" fill="#6ea458" opacity=".7"/>
<ellipse cx="53" cy="165" rx="9.0" ry="7.9" fill="#2f5b38"/>
<circle cx="48.4" cy="162.1" r="4.0" fill="#3f7a42"/>
<circle cx="50.0" cy="159.9" r="4.0" fill="#3f7a42"/>
<circle cx="52.9" cy="159.0" r="4.0" fill="#3f7a42"/>
<circle cx="55.8" cy="159.9" r="4.0" fill="#3f7a42"/>
<circle cx="57.3" cy="162.1" r="4.0" fill="#3f7a42"/>
<circle cx="49.6" cy="159.6" r="2.3" fill="#5a924e" opacity=".7"/>
<circle cx="52.2" cy="157.8" r="2.3" fill="#5a924e" opacity=".7"/>
<circle cx="55.2" cy="158.6" r="2.3" fill="#5a924e" opacity=".7"/>
<ellipse cx="395" cy="168" rx="10.7" ry="9.4" fill="#335f3a"/>
<circle cx="389.4" cy="165.2" r="4.8" fill="#4c8a4a"/>
<circle cx="391.2" cy="162.5" r="4.8" fill="#4c8a4a"/>
<circle cx="394.7" cy="161.4" r="4.8" fill="#4c8a4a"/>
<circle cx="398.2" cy="162.5" r="4.8" fill="#4c8a4a"/>
<circle cx="400.0" cy="165.2" r="4.8" fill="#4c8a4a"/>
<circle cx="390.8" cy="162.3" r="2.8" fill="#6ea458" opacity=".7"/>
<circle cx="393.9" cy="160.1" r="2.8" fill="#6ea458" opacity=".7"/>
<circle cx="397.5" cy="161.1" r="2.8" fill="#6ea458" opacity=".7"/>
<ellipse cx="359" cy="168" rx="9.5" ry="8.4" fill="#376839"/>
<circle cx="354.8" cy="165.7" r="4.3" fill="#5c984e"/>
<circle cx="356.4" cy="163.3" r="4.3" fill="#5c984e"/>
<circle cx="359.5" cy="162.4" r="4.3" fill="#5c984e"/>
<circle cx="362.6" cy="163.3" r="4.3" fill="#5c984e"/>
<circle cx="364.2" cy="165.7" r="4.3" fill="#5c984e"/>
<circle cx="356.0" cy="163.1" r="2.5" fill="#82b45e" opacity=".7"/>
<circle cx="358.8" cy="161.2" r="2.5" fill="#82b45e" opacity=".7"/>
<circle cx="362.0" cy="162.0" r="2.5" fill="#82b45e" opacity=".7"/>
<ellipse cx="25" cy="169" rx="8.7" ry="7.6" fill="#335f3a"/>
<circle cx="21.0" cy="166.3" r="3.9" fill="#4c8a4a"/>
<circle cx="22.5" cy="164.1" r="3.9" fill="#4c8a4a"/>
<circle cx="25.3" cy="163.2" r="3.9" fill="#4c8a4a"/>
<circle cx="28.1" cy="164.1" r="3.9" fill="#4c8a4a"/>
<circle cx="29.6" cy="166.3" r="3.9" fill="#4c8a4a"/>
<circle cx="22.2" cy="163.8" r="2.3" fill="#6ea458" opacity=".7"/>
<circle cx="24.7" cy="162.1" r="2.3" fill="#6ea458" opacity=".7"/>
<circle cx="27.6" cy="162.8" r="2.3" fill="#6ea458" opacity=".7"/>
<ellipse cx="312" cy="169" rx="9.7" ry="8.5" fill="#335f3a"/>
<circle cx="307.6" cy="166.2" r="4.3" fill="#4c8a4a"/>
<circle cx="309.2" cy="163.8" r="4.3" fill="#4c8a4a"/>
<circle cx="312.3" cy="162.8" r="4.3" fill="#4c8a4a"/>
<circle cx="315.5" cy="163.8" r="4.3" fill="#4c8a4a"/>
<circle cx="317.1" cy="166.2" r="4.3" fill="#4c8a4a"/>
<circle cx="308.8" cy="163.5" r="2.5" fill="#6ea458" opacity=".7"/>
<circle cx="311.6" cy="161.6" r="2.5" fill="#6ea458" opacity=".7"/>
<circle cx="314.9" cy="162.4" r="2.5" fill="#6ea458" opacity=".7"/>
<ellipse cx="274" cy="169" rx="8.5" ry="7.5" fill="#305c38"/>
<circle cx="270.0" cy="166.3" r="3.8" fill="#508c4a"/>
<circle cx="271.5" cy="164.2" r="3.8" fill="#508c4a"/>
<circle cx="274.2" cy="163.3" r="3.8" fill="#508c4a"/>
<circle cx="277.0" cy="164.2" r="3.8" fill="#508c4a"/>
<circle cx="278.4" cy="166.3" r="3.8" fill="#508c4a"/>
<circle cx="271.1" cy="163.9" r="2.2" fill="#72a85a" opacity=".7"/>
<circle cx="273.6" cy="162.2" r="2.2" fill="#72a85a" opacity=".7"/>
<circle cx="276.5" cy="163.0" r="2.2" fill="#72a85a" opacity=".7"/>
<ellipse cx="410" cy="169" rx="7.9" ry="6.9" fill="#3c6c3c"/>
<circle cx="405.7" cy="166.6" r="3.5" fill="#68a052"/>
<circle cx="407.0" cy="164.6" r="3.5" fill="#68a052"/>
<circle cx="409.6" cy="163.8" r="3.5" fill="#68a052"/>
<circle cx="412.2" cy="164.6" r="3.5" fill="#68a052"/>
<circle cx="413.5" cy="166.6" r="3.5" fill="#68a052"/>
<circle cx="406.7" cy="164.3" r="2.0" fill="#8cb862" opacity=".7"/>
<circle cx="409.0" cy="162.7" r="2.0" fill="#8cb862" opacity=".7"/>
<circle cx="411.7" cy="163.4" r="2.0" fill="#8cb862" opacity=".7"/>
<ellipse cx="11" cy="169" rx="10.1" ry="8.9" fill="#2f5b38"/>
<circle cx="6.4" cy="166.6" r="4.5" fill="#3f7a42"/>
<circle cx="8.1" cy="164.0" r="4.5" fill="#3f7a42"/>
<circle cx="11.4" cy="163.0" r="4.5" fill="#3f7a42"/>
<circle cx="14.7" cy="164.0" r="4.5" fill="#3f7a42"/>
<circle cx="16.4" cy="166.6" r="4.5" fill="#3f7a42"/>
<circle cx="7.7" cy="163.8" r="2.6" fill="#5a924e" opacity=".7"/>
<circle cx="10.7" cy="161.8" r="2.6" fill="#5a924e" opacity=".7"/>
<circle cx="14.1" cy="162.7" r="2.6" fill="#5a924e" opacity=".7"/>
<ellipse cx="-2" cy="170" rx="10.1" ry="8.9" fill="#3c6c3c"/>
<circle cx="-6.7" cy="167.0" r="4.5" fill="#68a052"/>
<circle cx="-5.0" cy="164.5" r="4.5" fill="#68a052"/>
<circle cx="-1.7" cy="163.5" r="4.5" fill="#68a052"/>
<circle cx="1.6" cy="164.5" r="4.5" fill="#68a052"/>
<circle cx="3.3" cy="167.0" r="4.5" fill="#68a052"/>
<circle cx="-5.4" cy="164.2" r="2.6" fill="#8cb862" opacity=".7"/>
<circle cx="-2.4" cy="162.2" r="2.6" fill="#8cb862" opacity=".7"/>
<circle cx="1.0" cy="163.1" r="2.6" fill="#8cb862" opacity=".7"/>
<ellipse cx="146" cy="170" rx="10.5" ry="9.2" fill="#376839"/>
<circle cx="140.4" cy="167.2" r="4.7" fill="#5c984e"/>
<circle cx="142.2" cy="164.6" r="4.7" fill="#5c984e"/>
<circle cx="145.6" cy="163.5" r="4.7" fill="#5c984e"/>
<circle cx="149.0" cy="164.6" r="4.7" fill="#5c984e"/>
<circle cx="150.8" cy="167.2" r="4.7" fill="#5c984e"/>
<circle cx="141.8" cy="164.3" r="2.7" fill="#82b45e" opacity=".7"/>
<circle cx="144.9" cy="162.2" r="2.7" fill="#82b45e" opacity=".7"/>
<circle cx="148.4" cy="163.2" r="2.7" fill="#82b45e" opacity=".7"/>
<ellipse cx="382" cy="170" rx="9.0" ry="7.9" fill="#376839"/>
<circle cx="377.9" cy="167.3" r="4.1" fill="#5c984e"/>
<circle cx="379.4" cy="165.1" r="4.1" fill="#5c984e"/>
<circle cx="382.4" cy="164.2" r="4.1" fill="#5c984e"/>
<circle cx="385.3" cy="165.1" r="4.1" fill="#5c984e"/>
<circle cx="386.8" cy="167.3" r="4.1" fill="#5c984e"/>
<circle cx="379.1" cy="164.8" r="2.3" fill="#82b45e" opacity=".7"/>
<circle cx="381.7" cy="163.0" r="2.3" fill="#82b45e" opacity=".7"/>
<circle cx="384.7" cy="163.8" r="2.3" fill="#82b45e" opacity=".7"/>
<ellipse cx="155" cy="170" rx="9.4" ry="8.3" fill="#376839"/>
<circle cx="150.8" cy="167.5" r="4.3" fill="#5c984e"/>
<circle cx="152.4" cy="165.1" r="4.3" fill="#5c984e"/>
<circle cx="155.5" cy="164.2" r="4.3" fill="#5c984e"/>
<circle cx="158.6" cy="165.1" r="4.3" fill="#5c984e"/>
<circle cx="160.2" cy="167.5" r="4.3" fill="#5c984e"/>
<circle cx="152.0" cy="164.8" r="2.5" fill="#82b45e" opacity=".7"/>
<circle cx="154.8" cy="163.0" r="2.5" fill="#82b45e" opacity=".7"/>
<circle cx="158.0" cy="163.8" r="2.5" fill="#82b45e" opacity=".7"/>
<ellipse cx="290" cy="170" rx="8.7" ry="7.7" fill="#2f5b38"/>
<circle cx="285.8" cy="167.7" r="3.9" fill="#3f7a42"/>
<circle cx="287.3" cy="165.5" r="3.9" fill="#3f7a42"/>
<circle cx="290.1" cy="164.6" r="3.9" fill="#3f7a42"/>
<circle cx="293.0" cy="165.5" r="3.9" fill="#3f7a42"/>
<circle cx="294.4" cy="167.7" r="3.9" fill="#3f7a42"/>
<circle cx="287.0" cy="165.2" r="2.3" fill="#5a924e" opacity=".7"/>
<circle cx="289.5" cy="163.5" r="2.3" fill="#5a924e" opacity=".7"/>
<circle cx="292.4" cy="164.3" r="2.3" fill="#5a924e" opacity=".7"/>
<ellipse cx="180" cy="170" rx="10.0" ry="8.8" fill="#335f3a"/>
<circle cx="175.0" cy="167.7" r="4.5" fill="#4c8a4a"/>
<circle cx="176.7" cy="165.1" r="4.5" fill="#4c8a4a"/>
<circle cx="180.0" cy="164.1" r="4.5" fill="#4c8a4a"/>
<circle cx="183.2" cy="165.1" r="4.5" fill="#4c8a4a"/>
<circle cx="184.9" cy="167.7" r="4.5" fill="#4c8a4a"/>
<circle cx="176.3" cy="164.9" r="2.6" fill="#6ea458" opacity=".7"/>
<circle cx="179.3" cy="162.9" r="2.6" fill="#6ea458" opacity=".7"/>
<circle cx="182.6" cy="163.8" r="2.6" fill="#6ea458" opacity=".7"/>
<ellipse cx="61" cy="170" rx="8.6" ry="7.5" fill="#335f3a"/>
<circle cx="56.4" cy="167.9" r="3.9" fill="#4c8a4a"/>
<circle cx="57.9" cy="165.7" r="3.9" fill="#4c8a4a"/>
<circle cx="60.6" cy="164.9" r="3.9" fill="#4c8a4a"/>
<circle cx="63.4" cy="165.7" r="3.9" fill="#4c8a4a"/>
<circle cx="64.9" cy="167.9" r="3.9" fill="#4c8a4a"/>
<circle cx="57.5" cy="165.5" r="2.2" fill="#6ea458" opacity=".7"/>
<circle cx="60.0" cy="163.7" r="2.2" fill="#6ea458" opacity=".7"/>
<circle cx="62.9" cy="164.5" r="2.2" fill="#6ea458" opacity=".7"/>
<ellipse cx="326" cy="171" rx="10.2" ry="9.0" fill="#305c38"/>
<circle cx="320.6" cy="167.9" r="4.6" fill="#508c4a"/>
<circle cx="322.4" cy="165.3" r="4.6" fill="#508c4a"/>
<circle cx="325.7" cy="164.3" r="4.6" fill="#508c4a"/>
<circle cx="329.0" cy="165.3" r="4.6" fill="#508c4a"/>
<circle cx="330.7" cy="167.9" r="4.6" fill="#508c4a"/>
<circle cx="322.0" cy="165.1" r="2.7" fill="#72a85a" opacity=".7"/>
<circle cx="325.0" cy="163.0" r="2.7" fill="#72a85a" opacity=".7"/>
<circle cx="328.4" cy="163.9" r="2.7" fill="#72a85a" opacity=".7"/>
<ellipse cx="47" cy="171" rx="10.2" ry="8.9" fill="#376839"/>
<circle cx="42.2" cy="167.9" r="4.6" fill="#5c984e"/>
<circle cx="43.9" cy="165.4" r="4.6" fill="#5c984e"/>
<circle cx="47.2" cy="164.3" r="4.6" fill="#5c984e"/>
<circle cx="50.5" cy="165.4" r="4.6" fill="#5c984e"/>
<circle cx="52.2" cy="167.9" r="4.6" fill="#5c984e"/>
<circle cx="43.5" cy="165.1" r="2.6" fill="#82b45e" opacity=".7"/>
<circle cx="46.5" cy="163.1" r="2.6" fill="#82b45e" opacity=".7"/>
<circle cx="49.9" cy="164.0" r="2.6" fill="#82b45e" opacity=".7"/>
<ellipse cx="70" cy="171" rx="9.0" ry="7.9" fill="#305c38"/>
<circle cx="65.3" cy="168.2" r="4.1" fill="#508c4a"/>
<circle cx="66.9" cy="165.9" r="4.1" fill="#508c4a"/>
<circle cx="69.8" cy="165.0" r="4.1" fill="#508c4a"/>
<circle cx="72.7" cy="165.9" r="4.1" fill="#508c4a"/>
<circle cx="74.3" cy="168.2" r="4.1" fill="#508c4a"/>
<circle cx="66.5" cy="165.6" r="2.3" fill="#72a85a" opacity=".7"/>
<circle cx="69.2" cy="163.8" r="2.3" fill="#72a85a" opacity=".7"/>
<circle cx="72.2" cy="164.6" r="2.3" fill="#72a85a" opacity=".7"/>
<ellipse cx="37" cy="171" rx="8.7" ry="7.7" fill="#376839"/>
<circle cx="32.9" cy="168.2" r="3.9" fill="#5c984e"/>
<circle cx="34.4" cy="166.0" r="3.9" fill="#5c984e"/>
<circle cx="37.3" cy="165.1" r="3.9" fill="#5c984e"/>
<circle cx="40.1" cy="166.0" r="3.9" fill="#5c984e"/>
<circle cx="41.6" cy="168.2" r="3.9" fill="#5c984e"/>
<circle cx="34.1" cy="165.7" r="2.3" fill="#82b45e" opacity=".7"/>
<circle cx="36.6" cy="164.0" r="2.3" fill="#82b45e" opacity=".7"/>
<circle cx="39.6" cy="164.8" r="2.3" fill="#82b45e" opacity=".7"/>
<ellipse cx="166" cy="171" rx="8.5" ry="7.5" fill="#3c6c3c"/>
<circle cx="161.3" cy="168.2" r="3.8" fill="#68a052"/>
<circle cx="162.8" cy="166.1" r="3.8" fill="#68a052"/>
<circle cx="165.5" cy="165.2" r="3.8" fill="#68a052"/>
<circle cx="168.3" cy="166.1" r="3.8" fill="#68a052"/>
<circle cx="169.7" cy="168.2" r="3.8" fill="#68a052"/>
<circle cx="162.5" cy="165.8" r="2.2" fill="#8cb862" opacity=".7"/>
<circle cx="164.9" cy="164.1" r="2.2" fill="#8cb862" opacity=".7"/>
<circle cx="167.8" cy="164.9" r="2.2" fill="#8cb862" opacity=".7"/>
<ellipse cx="301" cy="171" rx="10.9" ry="9.6" fill="#305c38"/>
<circle cx="295.9" cy="168.2" r="4.9" fill="#508c4a"/>
<circle cx="297.7" cy="165.4" r="4.9" fill="#508c4a"/>
<circle cx="301.3" cy="164.3" r="4.9" fill="#508c4a"/>
<circle cx="304.8" cy="165.4" r="4.9" fill="#508c4a"/>
<circle cx="306.7" cy="168.2" r="4.9" fill="#508c4a"/>
<circle cx="297.3" cy="165.2" r="2.8" fill="#72a85a" opacity=".7"/>
<circle cx="300.5" cy="163.0" r="2.8" fill="#72a85a" opacity=".7"/>
<circle cx="304.2" cy="164.0" r="2.8" fill="#72a85a" opacity=".7"/>
<ellipse cx="374" cy="171" rx="8.4" ry="7.4" fill="#376839"/>
<circle cx="370.2" cy="168.4" r="3.8" fill="#5c984e"/>
<circle cx="371.7" cy="166.2" r="3.8" fill="#5c984e"/>
<circle cx="374.4" cy="165.4" r="3.8" fill="#5c984e"/>
<circle cx="377.1" cy="166.2" r="3.8" fill="#5c984e"/>
<circle cx="378.5" cy="168.4" r="3.8" fill="#5c984e"/>
<circle cx="371.3" cy="166.0" r="2.2" fill="#82b45e" opacity=".7"/>
<circle cx="373.8" cy="164.3" r="2.2" fill="#82b45e" opacity=".7"/>
<circle cx="376.6" cy="165.0" r="2.2" fill="#82b45e" opacity=".7"/>
<ellipse cx="337" cy="171" rx="9.9" ry="8.7" fill="#376839"/>
<circle cx="332.0" cy="168.5" r="4.5" fill="#5c984e"/>
<circle cx="333.7" cy="165.9" r="4.5" fill="#5c984e"/>
<circle cx="336.9" cy="164.9" r="4.5" fill="#5c984e"/>
<circle cx="340.1" cy="165.9" r="4.5" fill="#5c984e"/>
<circle cx="341.8" cy="168.5" r="4.5" fill="#5c984e"/>
<circle cx="333.3" cy="165.7" r="2.6" fill="#82b45e" opacity=".7"/>
<circle cx="336.2" cy="163.7" r="2.6" fill="#82b45e" opacity=".7"/>
<circle cx="339.5" cy="164.6" r="2.6" fill="#82b45e" opacity=".7"/>
<ellipse cx="98" cy="171" rx="8.7" ry="7.7" fill="#2f5b38"/>
<circle cx="93.3" cy="168.5" r="3.9" fill="#3f7a42"/>
<circle cx="94.8" cy="166.3" r="3.9" fill="#3f7a42"/>
<circle cx="97.6" cy="165.4" r="3.9" fill="#3f7a42"/>
<circle cx="100.5" cy="166.3" r="3.9" fill="#3f7a42"/>
<circle cx="101.9" cy="168.5" r="3.9" fill="#3f7a42"/>
<circle cx="94.4" cy="166.0" r="2.3" fill="#5a924e" opacity=".7"/>
<circle cx="97.0" cy="164.3" r="2.3" fill="#5a924e" opacity=".7"/>
<circle cx="99.9" cy="165.1" r="2.3" fill="#5a924e" opacity=".7"/>
<ellipse cx="105" cy="171" rx="8.8" ry="7.7" fill="#305c38"/>
<circle cx="100.6" cy="168.7" r="4.0" fill="#508c4a"/>
<circle cx="102.1" cy="166.5" r="4.0" fill="#508c4a"/>
<circle cx="104.9" cy="165.6" r="4.0" fill="#508c4a"/>
<circle cx="107.8" cy="166.5" r="4.0" fill="#508c4a"/>
<circle cx="109.3" cy="168.7" r="4.0" fill="#508c4a"/>
<circle cx="101.7" cy="166.2" r="2.3" fill="#72a85a" opacity=".7"/>
<circle cx="104.3" cy="164.4" r="2.3" fill="#72a85a" opacity=".7"/>
<circle cx="107.2" cy="165.2" r="2.3" fill="#72a85a" opacity=".7"/>
<ellipse cx="423" cy="171" rx="10.1" ry="8.8" fill="#335f3a"/>
<circle cx="417.9" cy="168.7" r="4.5" fill="#4c8a4a"/>
<circle cx="419.6" cy="166.1" r="4.5" fill="#4c8a4a"/>
<circle cx="422.9" cy="165.1" r="4.5" fill="#4c8a4a"/>
<circle cx="426.1" cy="166.1" r="4.5" fill="#4c8a4a"/>
<circle cx="427.8" cy="168.7" r="4.5" fill="#4c8a4a"/>
<circle cx="419.2" cy="165.9" r="2.6" fill="#6ea458" opacity=".7"/>
<circle cx="422.2" cy="163.9" r="2.6" fill="#6ea458" opacity=".7"/>
<circle cx="425.5" cy="164.8" r="2.6" fill="#6ea458" opacity=".7"/>
<ellipse cx="348" cy="172" rx="9.8" ry="8.6" fill="#2f5b38"/>
<circle cx="343.2" cy="169.2" r="4.4" fill="#3f7a42"/>
<circle cx="344.8" cy="166.8" r="4.4" fill="#3f7a42"/>
<circle cx="348.0" cy="165.8" r="4.4" fill="#3f7a42"/>
<circle cx="351.2" cy="166.8" r="4.4" fill="#3f7a42"/>
<circle cx="352.8" cy="169.2" r="4.4" fill="#3f7a42"/>
<circle cx="344.4" cy="166.5" r="2.5" fill="#5a924e" opacity=".7"/>
<circle cx="347.3" cy="164.6" r="2.5" fill="#5a924e" opacity=".7"/>
<circle cx="350.6" cy="165.4" r="2.5" fill="#5a924e" opacity=".7"/>
<ellipse cx="264" cy="172" rx="9.3" ry="8.2" fill="#305c38"/>
<circle cx="259.5" cy="169.7" r="4.2" fill="#508c4a"/>
<circle cx="261.1" cy="167.4" r="4.2" fill="#508c4a"/>
<circle cx="264.1" cy="166.5" r="4.2" fill="#508c4a"/>
<circle cx="267.1" cy="167.4" r="4.2" fill="#508c4a"/>
<circle cx="268.7" cy="169.7" r="4.2" fill="#508c4a"/>
<circle cx="260.7" cy="167.1" r="2.4" fill="#72a85a" opacity=".7"/>
<circle cx="263.5" cy="165.3" r="2.4" fill="#72a85a" opacity=".7"/>
<circle cx="266.6" cy="166.1" r="2.4" fill="#72a85a" opacity=".7"/>
<ellipse cx="82" cy="173" rx="10.8" ry="9.5" fill="#305c38"/>
<circle cx="76.2" cy="169.9" r="4.8" fill="#508c4a"/>
<circle cx="78.1" cy="167.2" r="4.8" fill="#508c4a"/>
<circle cx="81.6" cy="166.1" r="4.8" fill="#508c4a"/>
<circle cx="85.1" cy="167.2" r="4.8" fill="#508c4a"/>
<circle cx="86.9" cy="169.9" r="4.8" fill="#508c4a"/>
<circle cx="77.6" cy="166.9" r="2.8" fill="#72a85a" opacity=".7"/>
<circle cx="80.8" cy="164.8" r="2.8" fill="#72a85a" opacity=".7"/>
<circle cx="84.4" cy="165.7" r="2.8" fill="#72a85a" opacity=".7"/>
<ellipse cx="403" cy="175" rx="10.3" ry="9.1" fill="#2f5b38"/>
<circle cx="397.5" cy="172.6" r="4.6" fill="#3f7a42"/>
<circle cx="399.2" cy="169.9" r="4.6" fill="#3f7a42"/>
<circle cx="402.6" cy="168.9" r="4.6" fill="#3f7a42"/>
<circle cx="405.9" cy="169.9" r="4.6" fill="#3f7a42"/>
<circle cx="407.6" cy="172.6" r="4.6" fill="#3f7a42"/>
<circle cx="398.8" cy="169.7" r="2.7" fill="#5a924e" opacity=".7"/>
<circle cx="401.8" cy="167.7" r="2.7" fill="#5a924e" opacity=".7"/>
<circle cx="405.3" cy="168.6" r="2.7" fill="#5a924e" opacity=".7"/>
<ellipse cx="100" cy="175" rx="10.2" ry="8.9" fill="#335f3a"/>
<circle cx="95.3" cy="172.8" r="4.6" fill="#4c8a4a"/>
<circle cx="97.0" cy="170.2" r="4.6" fill="#4c8a4a"/>
<circle cx="100.3" cy="169.2" r="4.6" fill="#4c8a4a"/>
<circle cx="103.6" cy="170.2" r="4.6" fill="#4c8a4a"/>
<circle cx="105.3" cy="172.8" r="4.6" fill="#4c8a4a"/>
<circle cx="96.6" cy="170.0" r="2.6" fill="#6ea458" opacity=".7"/>
<circle cx="99.6" cy="168.0" r="2.6" fill="#6ea458" opacity=".7"/>
<circle cx="103.0" cy="168.9" r="2.6" fill="#6ea458" opacity=".7"/>
<ellipse cx="287" cy="176" rx="8.2" ry="7.2" fill="#376839"/>
<circle cx="283.4" cy="173.0" r="3.7" fill="#5c984e"/>
<circle cx="284.8" cy="170.9" r="3.7" fill="#5c984e"/>
<circle cx="287.4" cy="170.1" r="3.7" fill="#5c984e"/>
<circle cx="290.1" cy="170.9" r="3.7" fill="#5c984e"/>
<circle cx="291.5" cy="173.0" r="3.7" fill="#5c984e"/>
<circle cx="284.4" cy="170.7" r="2.1" fill="#82b45e" opacity=".7"/>
<circle cx="286.9" cy="169.0" r="2.1" fill="#82b45e" opacity=".7"/>
<circle cx="289.6" cy="169.7" r="2.1" fill="#82b45e" opacity=".7"/>
<ellipse cx="390" cy="176" rx="11.3" ry="10.0" fill="#305c38"/>
<circle cx="384.8" cy="172.9" r="5.1" fill="#508c4a"/>
<circle cx="386.7" cy="170.0" r="5.1" fill="#508c4a"/>
<circle cx="390.4" cy="168.9" r="5.1" fill="#508c4a"/>
<circle cx="394.1" cy="170.0" r="5.1" fill="#508c4a"/>
<circle cx="396.0" cy="172.9" r="5.1" fill="#508c4a"/>
<circle cx="386.3" cy="169.8" r="2.9" fill="#72a85a" opacity=".7"/>
<circle cx="389.6" cy="167.6" r="2.9" fill="#72a85a" opacity=".7"/>
<circle cx="393.4" cy="168.6" r="2.9" fill="#72a85a" opacity=".7"/>
<ellipse cx="278" cy="176" rx="10.8" ry="9.5" fill="#335f3a"/>
<circle cx="272.5" cy="173.0" r="4.9" fill="#4c8a4a"/>
<circle cx="274.3" cy="170.2" r="4.9" fill="#4c8a4a"/>
<circle cx="277.8" cy="169.1" r="4.9" fill="#4c8a4a"/>
<circle cx="281.3" cy="170.2" r="4.9" fill="#4c8a4a"/>
<circle cx="283.1" cy="173.0" r="4.9" fill="#4c8a4a"/>
<circle cx="273.9" cy="170.0" r="2.8" fill="#6ea458" opacity=".7"/>
<circle cx="277.1" cy="167.8" r="2.8" fill="#6ea458" opacity=".7"/>
<circle cx="280.7" cy="168.8" r="2.8" fill="#6ea458" opacity=".7"/>
<ellipse cx="14" cy="176" rx="10.9" ry="9.6" fill="#376839"/>
<circle cx="8.9" cy="173.2" r="4.9" fill="#5c984e"/>
<circle cx="10.8" cy="170.4" r="4.9" fill="#5c984e"/>
<circle cx="14.3" cy="169.3" r="4.9" fill="#5c984e"/>
<circle cx="17.9" cy="170.4" r="4.9" fill="#5c984e"/>
<circle cx="19.7" cy="173.2" r="4.9" fill="#5c984e"/>
<circle cx="10.3" cy="170.2" r="2.8" fill="#82b45e" opacity=".7"/>
<circle cx="13.5" cy="168.0" r="2.8" fill="#82b45e" opacity=".7"/>
<circle cx="17.2" cy="169.0" r="2.8" fill="#82b45e" opacity=".7"/>
<ellipse cx="89" cy="176" rx="11.4" ry="10.1" fill="#3c6c3c"/>
<circle cx="83.0" cy="173.5" r="5.1" fill="#68a052"/>
<circle cx="84.9" cy="170.6" r="5.1" fill="#68a052"/>
<circle cx="88.6" cy="169.4" r="5.1" fill="#68a052"/>
<circle cx="92.4" cy="170.6" r="5.1" fill="#68a052"/>
<circle cx="94.3" cy="173.5" r="5.1" fill="#68a052"/>
<circle cx="84.5" cy="170.4" r="3.0" fill="#8cb862" opacity=".7"/>
<circle cx="87.8" cy="168.1" r="3.0" fill="#8cb862" opacity=".7"/>
<circle cx="91.7" cy="169.1" r="3.0" fill="#8cb862" opacity=".7"/>
<ellipse cx="166" cy="176" rx="8.8" ry="7.7" fill="#376839"/>
<circle cx="161.5" cy="173.9" r="4.0" fill="#5c984e"/>
<circle cx="162.9" cy="171.7" r="4.0" fill="#5c984e"/>
<circle cx="165.8" cy="170.8" r="4.0" fill="#5c984e"/>
<circle cx="168.7" cy="171.7" r="4.0" fill="#5c984e"/>
<circle cx="170.1" cy="173.9" r="4.0" fill="#5c984e"/>
<circle cx="162.6" cy="171.4" r="2.3" fill="#82b45e" opacity=".7"/>
<circle cx="165.2" cy="169.6" r="2.3" fill="#82b45e" opacity=".7"/>
<circle cx="168.1" cy="170.4" r="2.3" fill="#82b45e" opacity=".7"/>
<ellipse cx="365" cy="176" rx="8.4" ry="7.4" fill="#2f5b38"/>
<circle cx="361.3" cy="173.9" r="3.8" fill="#3f7a42"/>
<circle cx="362.7" cy="171.8" r="3.8" fill="#3f7a42"/>
<circle cx="365.5" cy="171.0" r="3.8" fill="#3f7a42"/>
<circle cx="368.2" cy="171.8" r="3.8" fill="#3f7a42"/>
<circle cx="369.6" cy="173.9" r="3.8" fill="#3f7a42"/>
<circle cx="362.4" cy="171.5" r="2.2" fill="#5a924e" opacity=".7"/>
<circle cx="364.9" cy="169.8" r="2.2" fill="#5a924e" opacity=".7"/>
<circle cx="367.7" cy="170.6" r="2.2" fill="#5a924e" opacity=".7"/>
<ellipse cx="327" cy="177" rx="9.7" ry="8.6" fill="#335f3a"/>
<circle cx="322.1" cy="174.3" r="4.4" fill="#4c8a4a"/>
<circle cx="323.7" cy="171.8" r="4.4" fill="#4c8a4a"/>
<circle cx="326.9" cy="170.8" r="4.4" fill="#4c8a4a"/>
<circle cx="330.1" cy="171.8" r="4.4" fill="#4c8a4a"/>
<circle cx="331.7" cy="174.3" r="4.4" fill="#4c8a4a"/>
<circle cx="323.4" cy="171.5" r="2.5" fill="#6ea458" opacity=".7"/>
<circle cx="326.2" cy="169.6" r="2.5" fill="#6ea458" opacity=".7"/>
<circle cx="329.5" cy="170.5" r="2.5" fill="#6ea458" opacity=".7"/>
<ellipse cx="115" cy="177" rx="8.5" ry="7.5" fill="#376839"/>
<circle cx="110.3" cy="174.5" r="3.8" fill="#5c984e"/>
<circle cx="111.8" cy="172.3" r="3.8" fill="#5c984e"/>
<circle cx="114.5" cy="171.4" r="3.8" fill="#5c984e"/>
<circle cx="117.3" cy="172.3" r="3.8" fill="#5c984e"/>
<circle cx="118.7" cy="174.5" r="3.8" fill="#5c984e"/>
<circle cx="111.4" cy="172.0" r="2.2" fill="#82b45e" opacity=".7"/>
<circle cx="113.9" cy="170.3" r="2.2" fill="#82b45e" opacity=".7"/>
<circle cx="116.8" cy="171.1" r="2.2" fill="#82b45e" opacity=".7"/>
<ellipse cx="350" cy="177" rx="9.6" ry="8.4" fill="#376839"/>
<circle cx="345.0" cy="174.7" r="4.3" fill="#5c984e"/>
<circle cx="346.6" cy="172.3" r="4.3" fill="#5c984e"/>
<circle cx="349.7" cy="171.3" r="4.3" fill="#5c984e"/>
<circle cx="352.8" cy="172.3" r="4.3" fill="#5c984e"/>
<circle cx="354.4" cy="174.7" r="4.3" fill="#5c984e"/>
<circle cx="346.2" cy="172.0" r="2.5" fill="#82b45e" opacity=".7"/>
<circle cx="349.0" cy="170.1" r="2.5" fill="#82b45e" opacity=".7"/>
<circle cx="352.2" cy="171.0" r="2.5" fill="#82b45e" opacity=".7"/>
<ellipse cx="301" cy="177" rx="8.4" ry="7.4" fill="#376839"/>
<circle cx="296.4" cy="174.9" r="3.8" fill="#5c984e"/>
<circle cx="297.8" cy="172.7" r="3.8" fill="#5c984e"/>
<circle cx="300.5" cy="171.9" r="3.8" fill="#5c984e"/>
<circle cx="303.3" cy="172.7" r="3.8" fill="#5c984e"/>
<circle cx="304.7" cy="174.9" r="3.8" fill="#5c984e"/>
<circle cx="297.5" cy="172.4" r="2.2" fill="#82b45e" opacity=".7"/>
<circle cx="300.0" cy="170.7" r="2.2" fill="#82b45e" opacity=".7"/>
<circle cx="302.8" cy="171.5" r="2.2" fill="#82b45e" opacity=".7"/>
<ellipse cx="175" cy="178" rx="9.9" ry="8.7" fill="#3c6c3c"/>
<circle cx="169.9" cy="175.0" r="4.4" fill="#68a052"/>
<circle cx="171.6" cy="172.5" r="4.4" fill="#68a052"/>
<circle cx="174.8" cy="171.5" r="4.4" fill="#68a052"/>
<circle cx="178.0" cy="172.5" r="4.4" fill="#68a052"/>
<circle cx="179.6" cy="175.0" r="4.4" fill="#68a052"/>
<circle cx="171.2" cy="172.3" r="2.6" fill="#8cb862" opacity=".7"/>
<circle cx="174.1" cy="170.3" r="2.6" fill="#8cb862" opacity=".7"/>
<circle cx="177.4" cy="171.2" r="2.6" fill="#8cb862" opacity=".7"/>
<ellipse cx="65" cy="178" rx="11.3" ry="9.9" fill="#305c38"/>
<circle cx="59.9" cy="175.0" r="5.1" fill="#508c4a"/>
<circle cx="61.8" cy="172.2" r="5.1" fill="#508c4a"/>
<circle cx="65.5" cy="171.0" r="5.1" fill="#508c4a"/>
<circle cx="69.1" cy="172.2" r="5.1" fill="#508c4a"/>
<circle cx="71.0" cy="175.0" r="5.1" fill="#508c4a"/>
<circle cx="61.4" cy="172.0" r="2.9" fill="#72a85a" opacity=".7"/>
<circle cx="64.7" cy="169.7" r="2.9" fill="#72a85a" opacity=".7"/>
<circle cx="68.4" cy="170.7" r="2.9" fill="#72a85a" opacity=".7"/>
<ellipse cx="-0" cy="178" rx="9.8" ry="8.6" fill="#305c38"/>
<circle cx="-5.1" cy="175.2" r="4.4" fill="#508c4a"/>
<circle cx="-3.5" cy="172.7" r="4.4" fill="#508c4a"/>
<circle cx="-0.3" cy="171.7" r="4.4" fill="#508c4a"/>
<circle cx="2.9" cy="172.7" r="4.4" fill="#508c4a"/>
<circle cx="4.5" cy="175.2" r="4.4" fill="#508c4a"/>
<circle cx="-3.9" cy="172.4" r="2.5" fill="#72a85a" opacity=".7"/>
<circle cx="-1.0" cy="170.5" r="2.5" fill="#72a85a" opacity=".7"/>
<circle cx="2.3" cy="171.4" r="2.5" fill="#72a85a" opacity=".7"/>
<ellipse cx="78" cy="178" rx="9.7" ry="8.5" fill="#335f3a"/>
<circle cx="73.2" cy="175.4" r="4.4" fill="#4c8a4a"/>
<circle cx="74.8" cy="172.9" r="4.4" fill="#4c8a4a"/>
<circle cx="78.0" cy="172.0" r="4.4" fill="#4c8a4a"/>
<circle cx="81.1" cy="172.9" r="4.4" fill="#4c8a4a"/>
<circle cx="82.8" cy="175.4" r="4.4" fill="#4c8a4a"/>
<circle cx="74.5" cy="172.7" r="2.5" fill="#6ea458" opacity=".7"/>
<circle cx="77.3" cy="170.7" r="2.5" fill="#6ea458" opacity=".7"/>
<circle cx="80.5" cy="171.6" r="2.5" fill="#6ea458" opacity=".7"/>
<ellipse cx="377" cy="178" rx="11.2" ry="9.9" fill="#305c38"/>
<circle cx="371.9" cy="175.3" r="5.0" fill="#508c4a"/>
<circle cx="373.8" cy="172.5" r="5.0" fill="#508c4a"/>
<circle cx="377.4" cy="171.4" r="5.0" fill="#508c4a"/>
<circle cx="381.1" cy="172.5" r="5.0" fill="#508c4a"/>
<circle cx="383.0" cy="175.3" r="5.0" fill="#508c4a"/>
<circle cx="373.4" cy="172.3" r="2.9" fill="#72a85a" opacity=".7"/>
<circle cx="376.7" cy="170.0" r="2.9" fill="#72a85a" opacity=".7"/>
<circle cx="380.4" cy="171.0" r="2.9" fill="#72a85a" opacity=".7"/>
<ellipse cx="150" cy="178" rx="8.9" ry="7.8" fill="#3c6c3c"/>
<circle cx="146.0" cy="175.8" r="4.0" fill="#68a052"/>
<circle cx="147.5" cy="173.5" r="4.0" fill="#68a052"/>
<circle cx="150.4" cy="172.6" r="4.0" fill="#68a052"/>
<circle cx="153.3" cy="173.5" r="4.0" fill="#68a052"/>
<circle cx="154.8" cy="175.8" r="4.0" fill="#68a052"/>
<circle cx="147.2" cy="173.2" r="2.3" fill="#8cb862" opacity=".7"/>
<circle cx="149.8" cy="171.5" r="2.3" fill="#8cb862" opacity=".7"/>
<circle cx="152.7" cy="172.3" r="2.3" fill="#8cb862" opacity=".7"/>
<ellipse cx="141" cy="179" rx="10.0" ry="8.8" fill="#376839"/>
<circle cx="135.7" cy="176.1" r="4.5" fill="#5c984e"/>
<circle cx="137.4" cy="173.5" r="4.5" fill="#5c984e"/>
<circle cx="140.7" cy="172.5" r="4.5" fill="#5c984e"/>
<circle cx="143.9" cy="173.5" r="4.5" fill="#5c984e"/>
<circle cx="145.6" cy="176.1" r="4.5" fill="#5c984e"/>
<circle cx="137.0" cy="173.3" r="2.6" fill="#82b45e" opacity=".7"/>
<circle cx="140.0" cy="171.3" r="2.6" fill="#82b45e" opacity=".7"/>
<circle cx="143.3" cy="172.2" r="2.6" fill="#82b45e" opacity=".7"/>
<ellipse cx="41" cy="179" rx="11.3" ry="10.0" fill="#335f3a"/>
<circle cx="35.4" cy="176.0" r="5.1" fill="#4c8a4a"/>
<circle cx="37.3" cy="173.1" r="5.1" fill="#4c8a4a"/>
<circle cx="41.0" cy="172.0" r="5.1" fill="#4c8a4a"/>
<circle cx="44.7" cy="173.1" r="5.1" fill="#4c8a4a"/>
<circle cx="46.6" cy="176.0" r="5.1" fill="#4c8a4a"/>
<circle cx="36.9" cy="172.9" r="2.9" fill="#6ea458" opacity=".7"/>
<circle cx="40.2" cy="170.7" r="2.9" fill="#6ea458" opacity=".7"/>
<circle cx="44.0" cy="171.7" r="2.9" fill="#6ea458" opacity=".7"/>
<ellipse cx="423" cy="179" rx="9.8" ry="8.6" fill="#3c6c3c"/>
<circle cx="418.6" cy="176.2" r="4.4" fill="#68a052"/>
<circle cx="420.2" cy="173.8" r="4.4" fill="#68a052"/>
<circle cx="423.4" cy="172.8" r="4.4" fill="#68a052"/>
<circle cx="426.6" cy="173.8" r="4.4" fill="#68a052"/>
<circle cx="428.2" cy="176.2" r="4.4" fill="#68a052"/>
<circle cx="419.8" cy="173.5" r="2.5" fill="#8cb862" opacity=".7"/>
<circle cx="422.7" cy="171.6" r="2.5" fill="#8cb862" opacity=".7"/>
<circle cx="426.0" cy="172.4" r="2.5" fill="#8cb862" opacity=".7"/>
<ellipse cx="336" cy="179" rx="9.6" ry="8.4" fill="#335f3a"/>
<circle cx="331.0" cy="176.3" r="4.3" fill="#4c8a4a"/>
<circle cx="332.7" cy="173.9" r="4.3" fill="#4c8a4a"/>
<circle cx="335.8" cy="172.9" r="4.3" fill="#4c8a4a"/>
<circle cx="338.9" cy="173.9" r="4.3" fill="#4c8a4a"/>
<circle cx="340.5" cy="176.3" r="4.3" fill="#4c8a4a"/>
<circle cx="332.3" cy="173.6" r="2.5" fill="#6ea458" opacity=".7"/>
<circle cx="335.1" cy="171.7" r="2.5" fill="#6ea458" opacity=".7"/>
<circle cx="338.3" cy="172.6" r="2.5" fill="#6ea458" opacity=".7"/>
<ellipse cx="127" cy="179" rx="10.0" ry="8.8" fill="#3c6c3c"/>
<circle cx="122.4" cy="176.5" r="4.5" fill="#68a052"/>
<circle cx="124.1" cy="174.0" r="4.5" fill="#68a052"/>
<circle cx="127.3" cy="173.0" r="4.5" fill="#68a052"/>
<circle cx="130.6" cy="174.0" r="4.5" fill="#68a052"/>
<circle cx="132.3" cy="176.5" r="4.5" fill="#68a052"/>
<circle cx="123.7" cy="173.7" r="2.6" fill="#8cb862" opacity=".7"/>
<circle cx="126.6" cy="171.7" r="2.6" fill="#8cb862" opacity=".7"/>
<circle cx="130.0" cy="172.6" r="2.6" fill="#8cb862" opacity=".7"/>
<ellipse cx="315" cy="179" rx="9.6" ry="8.4" fill="#3c6c3c"/>
<circle cx="310.4" cy="176.6" r="4.3" fill="#68a052"/>
<circle cx="312.0" cy="174.1" r="4.3" fill="#68a052"/>
<circle cx="315.1" cy="173.2" r="4.3" fill="#68a052"/>
<circle cx="318.3" cy="174.1" r="4.3" fill="#68a052"/>
<circle cx="319.9" cy="176.6" r="4.3" fill="#68a052"/>
<circle cx="311.7" cy="173.9" r="2.5" fill="#8cb862" opacity=".7"/>
<circle cx="314.5" cy="172.0" r="2.5" fill="#8cb862" opacity=".7"/>
<circle cx="317.7" cy="172.8" r="2.5" fill="#8cb862" opacity=".7"/>
<ellipse cx="414" cy="180" rx="11.2" ry="9.9" fill="#305c38"/>
<circle cx="408.7" cy="176.8" r="5.0" fill="#508c4a"/>
<circle cx="410.6" cy="173.9" r="5.0" fill="#508c4a"/>
<circle cx="414.3" cy="172.8" r="5.0" fill="#508c4a"/>
<circle cx="417.9" cy="173.9" r="5.0" fill="#508c4a"/>
<circle cx="419.8" cy="176.8" r="5.0" fill="#508c4a"/>
<circle cx="410.2" cy="173.7" r="2.9" fill="#72a85a" opacity=".7"/>
<circle cx="413.5" cy="171.5" r="2.9" fill="#72a85a" opacity=".7"/>
<circle cx="417.2" cy="172.5" r="2.9" fill="#72a85a" opacity=".7"/>
<ellipse cx="30" cy="180" rx="10.6" ry="9.3" fill="#3c6c3c"/>
<circle cx="24.5" cy="177.2" r="4.8" fill="#68a052"/>
<circle cx="26.3" cy="174.5" r="4.8" fill="#68a052"/>
<circle cx="29.8" cy="173.4" r="4.8" fill="#68a052"/>
<circle cx="33.2" cy="174.5" r="4.8" fill="#68a052"/>
<circle cx="35.0" cy="177.2" r="4.8" fill="#68a052"/>
<circle cx="25.9" cy="174.3" r="2.8" fill="#8cb862" opacity=".7"/>
<circle cx="29.0" cy="172.1" r="2.8" fill="#8cb862" opacity=".7"/>
<circle cx="32.6" cy="173.1" r="2.8" fill="#8cb862" opacity=".7"/>
<ellipse cx="357" cy="183" rx="10.3" ry="9.1" fill="#305c38"/>
<circle cx="351.8" cy="180.3" r="4.6" fill="#508c4a"/>
<circle cx="353.5" cy="177.7" r="4.6" fill="#508c4a"/>
<circle cx="356.9" cy="176.7" r="4.6" fill="#508c4a"/>
<circle cx="360.2" cy="177.7" r="4.6" fill="#508c4a"/>
<circle cx="361.9" cy="180.3" r="4.6" fill="#508c4a"/>
<circle cx="353.1" cy="177.5" r="2.7" fill="#72a85a" opacity=".7"/>
<circle cx="356.1" cy="175.4" r="2.7" fill="#72a85a" opacity=".7"/>
<circle cx="359.6" cy="176.3" r="2.7" fill="#72a85a" opacity=".7"/>
<ellipse cx="420" cy="183" rx="10.4" ry="9.2" fill="#2f5b38"/>
<circle cx="415.0" cy="180.4" r="4.7" fill="#3f7a42"/>
<circle cx="416.8" cy="177.7" r="4.7" fill="#3f7a42"/>
<circle cx="420.2" cy="176.7" r="4.7" fill="#3f7a42"/>
<circle cx="423.6" cy="177.7" r="4.7" fill="#3f7a42"/>
<circle cx="425.3" cy="180.4" r="4.7" fill="#3f7a42"/>
<circle cx="416.4" cy="177.5" r="2.7" fill="#5a924e" opacity=".7"/>
<circle cx="419.4" cy="175.4" r="2.7" fill="#5a924e" opacity=".7"/>
<circle cx="422.9" cy="176.3" r="2.7" fill="#5a924e" opacity=".7"/>
<ellipse cx="308" cy="183" rx="10.2" ry="9.0" fill="#376839"/>
<circle cx="303.4" cy="180.8" r="4.6" fill="#5c984e"/>
<circle cx="305.1" cy="178.2" r="4.6" fill="#5c984e"/>
<circle cx="308.4" cy="177.2" r="4.6" fill="#5c984e"/>
<circle cx="311.8" cy="178.2" r="4.6" fill="#5c984e"/>
<circle cx="313.5" cy="180.8" r="4.6" fill="#5c984e"/>
<circle cx="304.7" cy="178.0" r="2.7" fill="#82b45e" opacity=".7"/>
<circle cx="307.7" cy="175.9" r="2.7" fill="#82b45e" opacity=".7"/>
<circle cx="311.1" cy="176.8" r="2.7" fill="#82b45e" opacity=".7"/>
<ellipse cx="89" cy="184" rx="11.7" ry="10.3" fill="#305c38"/>
<circle cx="82.7" cy="180.9" r="5.3" fill="#508c4a"/>
<circle cx="84.7" cy="177.9" r="5.3" fill="#508c4a"/>
<circle cx="88.5" cy="176.7" r="5.3" fill="#508c4a"/>
<circle cx="92.3" cy="177.9" r="5.3" fill="#508c4a"/>
<circle cx="94.3" cy="180.9" r="5.3" fill="#508c4a"/>
<circle cx="84.3" cy="177.7" r="3.0" fill="#72a85a" opacity=".7"/>
<circle cx="87.7" cy="175.4" r="3.0" fill="#72a85a" opacity=".7"/>
<circle cx="91.6" cy="176.4" r="3.0" fill="#72a85a" opacity=".7"/>
<ellipse cx="155" cy="184" rx="11.1" ry="9.7" fill="#335f3a"/>
<circle cx="149.3" cy="181.5" r="5.0" fill="#4c8a4a"/>
<circle cx="151.1" cy="178.7" r="5.0" fill="#4c8a4a"/>
<circle cx="154.7" cy="177.6" r="5.0" fill="#4c8a4a"/>
<circle cx="158.3" cy="178.7" r="5.0" fill="#4c8a4a"/>
<circle cx="160.2" cy="181.5" r="5.0" fill="#4c8a4a"/>
<circle cx="150.7" cy="178.5" r="2.9" fill="#6ea458" opacity=".7"/>
<circle cx="154.0" cy="176.3" r="2.9" fill="#6ea458" opacity=".7"/>
<circle cx="157.7" cy="177.2" r="2.9" fill="#6ea458" opacity=".7"/>
<ellipse cx="368" cy="185" rx="11.1" ry="9.8" fill="#305c38"/>
<circle cx="362.9" cy="181.9" r="5.0" fill="#508c4a"/>
<circle cx="364.8" cy="179.1" r="5.0" fill="#508c4a"/>
<circle cx="368.4" cy="178.0" r="5.0" fill="#508c4a"/>
<circle cx="372.0" cy="179.1" r="5.0" fill="#508c4a"/>
<circle cx="373.9" cy="181.9" r="5.0" fill="#508c4a"/>
<circle cx="364.4" cy="178.9" r="2.9" fill="#72a85a" opacity=".7"/>
<circle cx="367.6" cy="176.7" r="2.9" fill="#72a85a" opacity=".7"/>
<circle cx="371.3" cy="177.7" r="2.9" fill="#72a85a" opacity=".7"/>
<ellipse cx="410" cy="185" rx="10.6" ry="9.4" fill="#305c38"/>
<circle cx="404.8" cy="182.2" r="4.8" fill="#508c4a"/>
<circle cx="406.6" cy="179.5" r="4.8" fill="#508c4a"/>
<circle cx="410.0" cy="178.4" r="4.8" fill="#508c4a"/>
<circle cx="413.5" cy="179.5" r="4.8" fill="#508c4a"/>
<circle cx="415.3" cy="182.2" r="4.8" fill="#508c4a"/>
<circle cx="406.1" cy="179.3" r="2.8" fill="#72a85a" opacity=".7"/>
<circle cx="409.3" cy="177.1" r="2.8" fill="#72a85a" opacity=".7"/>
<circle cx="412.8" cy="178.1" r="2.8" fill="#72a85a" opacity=".7"/>
<ellipse cx="139" cy="185" rx="9.6" ry="8.5" fill="#2f5b38"/>
<circle cx="134.6" cy="182.3" r="4.3" fill="#3f7a42"/>
<circle cx="136.2" cy="179.8" r="4.3" fill="#3f7a42"/>
<circle cx="139.3" cy="178.9" r="4.3" fill="#3f7a42"/>
<circle cx="142.4" cy="179.8" r="4.3" fill="#3f7a42"/>
<circle cx="144.1" cy="182.3" r="4.3" fill="#3f7a42"/>
<circle cx="135.8" cy="179.6" r="2.5" fill="#5a924e" opacity=".7"/>
<circle cx="138.6" cy="177.6" r="2.5" fill="#5a924e" opacity=".7"/>
<circle cx="141.8" cy="178.5" r="2.5" fill="#5a924e" opacity=".7"/>
<ellipse cx="1" cy="185" rx="10.9" ry="9.6" fill="#2f5b38"/>
<circle cx="-4.8" cy="182.7" r="4.9" fill="#3f7a42"/>
<circle cx="-3.0" cy="179.9" r="4.9" fill="#3f7a42"/>
<circle cx="0.6" cy="178.8" r="4.9" fill="#3f7a42"/>
<circle cx="4.1" cy="179.9" r="4.9" fill="#3f7a42"/>
<circle cx="6.0" cy="182.7" r="4.9" fill="#3f7a42"/>
<circle cx="-3.4" cy="179.7" r="2.8" fill="#5a924e" opacity=".7"/>
<circle cx="-0.2" cy="177.5" r="2.8" fill="#5a924e" opacity=".7"/>
<circle cx="3.5" cy="178.5" r="2.8" fill="#5a924e" opacity=".7"/>
<ellipse cx="116" cy="186" rx="9.1" ry="8.0" fill="#305c38"/>
<circle cx="111.8" cy="183.3" r="4.1" fill="#508c4a"/>
<circle cx="113.3" cy="181.0" r="4.1" fill="#508c4a"/>
<circle cx="116.3" cy="180.1" r="4.1" fill="#508c4a"/>
<circle cx="119.2" cy="181.0" r="4.1" fill="#508c4a"/>
<circle cx="120.8" cy="183.3" r="4.1" fill="#508c4a"/>
<circle cx="113.0" cy="180.8" r="2.4" fill="#72a85a" opacity=".7"/>
<circle cx="115.6" cy="179.0" r="2.4" fill="#72a85a" opacity=".7"/>
<circle cx="118.7" cy="179.8" r="2.4" fill="#72a85a" opacity=".7"/>
<ellipse cx="296" cy="186" rx="9.7" ry="8.6" fill="#2f5b38"/>
<circle cx="291.6" cy="183.3" r="4.4" fill="#3f7a42"/>
<circle cx="293.3" cy="180.9" r="4.4" fill="#3f7a42"/>
<circle cx="296.4" cy="179.9" r="4.4" fill="#3f7a42"/>
<circle cx="299.6" cy="180.9" r="4.4" fill="#3f7a42"/>
<circle cx="301.2" cy="183.3" r="4.4" fill="#3f7a42"/>
<circle cx="292.9" cy="180.6" r="2.5" fill="#5a924e" opacity=".7"/>
<circle cx="295.8" cy="178.7" r="2.5" fill="#5a924e" opacity=".7"/>
<circle cx="299.0" cy="179.5" r="2.5" fill="#5a924e" opacity=".7"/>
<ellipse cx="386" cy="186" rx="9.7" ry="8.5" fill="#3c6c3c"/>
<circle cx="380.9" cy="183.5" r="4.4" fill="#68a052"/>
<circle cx="382.5" cy="181.0" r="4.4" fill="#68a052"/>
<circle cx="385.6" cy="180.0" r="4.4" fill="#68a052"/>
<circle cx="388.8" cy="181.0" r="4.4" fill="#68a052"/>
<circle cx="390.4" cy="183.5" r="4.4" fill="#68a052"/>
<circle cx="382.1" cy="180.8" r="2.5" fill="#8cb862" opacity=".7"/>
<circle cx="385.0" cy="178.8" r="2.5" fill="#8cb862" opacity=".7"/>
<circle cx="388.2" cy="179.7" r="2.5" fill="#8cb862" opacity=".7"/>
<ellipse cx="23" cy="186" rx="10.6" ry="9.3" fill="#335f3a"/>
<circle cx="18.2" cy="183.6" r="4.8" fill="#4c8a4a"/>
<circle cx="20.0" cy="181.0" r="4.8" fill="#4c8a4a"/>
<circle cx="23.4" cy="179.9" r="4.8" fill="#4c8a4a"/>
<circle cx="26.8" cy="181.0" r="4.8" fill="#4c8a4a"/>
<circle cx="28.6" cy="183.6" r="4.8" fill="#4c8a4a"/>
<circle cx="19.6" cy="180.7" r="2.7" fill="#6ea458" opacity=".7"/>
<circle cx="22.7" cy="178.6" r="2.7" fill="#6ea458" opacity=".7"/>
<circle cx="26.2" cy="179.6" r="2.7" fill="#6ea458" opacity=".7"/>
<ellipse cx="396" cy="187" rx="10.7" ry="9.4" fill="#335f3a"/>
<circle cx="390.8" cy="183.9" r="4.8" fill="#4c8a4a"/>
<circle cx="392.6" cy="181.2" r="4.8" fill="#4c8a4a"/>
<circle cx="396.1" cy="180.1" r="4.8" fill="#4c8a4a"/>
<circle cx="399.6" cy="181.2" r="4.8" fill="#4c8a4a"/>
<circle cx="401.4" cy="183.9" r="4.8" fill="#4c8a4a"/>
<circle cx="392.2" cy="180.9" r="2.8" fill="#6ea458" opacity=".7"/>
<circle cx="395.3" cy="178.8" r="2.8" fill="#6ea458" opacity=".7"/>
<circle cx="398.9" cy="179.7" r="2.8" fill="#6ea458" opacity=".7"/>
<ellipse cx="101" cy="187" rx="10.3" ry="9.1" fill="#376839"/>
<circle cx="95.6" cy="184.0" r="4.6" fill="#5c984e"/>
<circle cx="97.4" cy="181.4" r="4.6" fill="#5c984e"/>
<circle cx="100.7" cy="180.4" r="4.6" fill="#5c984e"/>
<circle cx="104.1" cy="181.4" r="4.6" fill="#5c984e"/>
<circle cx="105.8" cy="184.0" r="4.6" fill="#5c984e"/>
<circle cx="97.0" cy="181.2" r="2.7" fill="#82b45e" opacity=".7"/>
<circle cx="100.0" cy="179.1" r="2.7" fill="#82b45e" opacity=".7"/>
<circle cx="103.4" cy="180.0" r="2.7" fill="#82b45e" opacity=".7"/>
<ellipse cx="163" cy="187" rx="8.3" ry="7.3" fill="#3c6c3c"/>
<circle cx="159.4" cy="184.4" r="3.7" fill="#68a052"/>
<circle cx="160.8" cy="182.2" r="3.7" fill="#68a052"/>
<circle cx="163.5" cy="181.4" r="3.7" fill="#68a052"/>
<circle cx="166.2" cy="182.2" r="3.7" fill="#68a052"/>
<circle cx="167.6" cy="184.4" r="3.7" fill="#68a052"/>
<circle cx="160.5" cy="182.0" r="2.2" fill="#8cb862" opacity=".7"/>
<circle cx="162.9" cy="180.3" r="2.2" fill="#8cb862" opacity=".7"/>
<circle cx="165.7" cy="181.0" r="2.2" fill="#8cb862" opacity=".7"/>
<ellipse cx="345" cy="187" rx="11.6" ry="10.2" fill="#2f5b38"/>
<circle cx="338.9" cy="184.3" r="5.2" fill="#3f7a42"/>
<circle cx="340.8" cy="181.3" r="5.2" fill="#3f7a42"/>
<circle cx="344.6" cy="180.2" r="5.2" fill="#3f7a42"/>
<circle cx="348.4" cy="181.3" r="5.2" fill="#3f7a42"/>
<circle cx="350.4" cy="184.3" r="5.2" fill="#3f7a42"/>
<circle cx="340.4" cy="181.1" r="3.0" fill="#5a924e" opacity=".7"/>
<circle cx="343.8" cy="178.8" r="3.0" fill="#5a924e" opacity=".7"/>
<circle cx="347.7" cy="179.8" r="3.0" fill="#5a924e" opacity=".7"/>
<ellipse cx="130" cy="187" rx="11.2" ry="9.8" fill="#305c38"/>
<circle cx="124.6" cy="184.7" r="5.0" fill="#508c4a"/>
<circle cx="126.5" cy="181.9" r="5.0" fill="#508c4a"/>
<circle cx="130.1" cy="180.7" r="5.0" fill="#508c4a"/>
<circle cx="133.8" cy="181.9" r="5.0" fill="#508c4a"/>
<circle cx="135.7" cy="184.7" r="5.0" fill="#508c4a"/>
<circle cx="126.1" cy="181.6" r="2.9" fill="#72a85a" opacity=".7"/>
<circle cx="129.4" cy="179.4" r="2.9" fill="#72a85a" opacity=".7"/>
<circle cx="133.1" cy="180.4" r="2.9" fill="#72a85a" opacity=".7"/>
<ellipse cx="334" cy="188" rx="10.1" ry="8.9" fill="#2f5b38"/>
<circle cx="329.0" cy="184.9" r="4.5" fill="#3f7a42"/>
<circle cx="330.7" cy="182.4" r="4.5" fill="#3f7a42"/>
<circle cx="333.9" cy="181.3" r="4.5" fill="#3f7a42"/>
<circle cx="337.2" cy="182.4" r="4.5" fill="#3f7a42"/>
<circle cx="338.9" cy="184.9" r="4.5" fill="#3f7a42"/>
<circle cx="330.3" cy="182.1" r="2.6" fill="#5a924e" opacity=".7"/>
<circle cx="333.2" cy="180.1" r="2.6" fill="#5a924e" opacity=".7"/>
<circle cx="336.6" cy="181.0" r="2.6" fill="#5a924e" opacity=".7"/>
<ellipse cx="322" cy="188" rx="9.1" ry="8.0" fill="#305c38"/>
<circle cx="317.9" cy="185.1" r="4.1" fill="#508c4a"/>
<circle cx="319.5" cy="182.8" r="4.1" fill="#508c4a"/>
<circle cx="322.4" cy="181.9" r="4.1" fill="#508c4a"/>
<circle cx="325.3" cy="182.8" r="4.1" fill="#508c4a"/>
<circle cx="326.9" cy="185.1" r="4.1" fill="#508c4a"/>
<circle cx="319.1" cy="182.5" r="2.4" fill="#72a85a" opacity=".7"/>
<circle cx="321.8" cy="180.7" r="2.4" fill="#72a85a" opacity=".7"/>
<circle cx="324.8" cy="181.5" r="2.4" fill="#72a85a" opacity=".7"/>
<ellipse cx="14" cy="188" rx="8.5" ry="7.5" fill="#335f3a"/>
<circle cx="10.2" cy="185.1" r="3.8" fill="#4c8a4a"/>
<circle cx="11.7" cy="183.0" r="3.8" fill="#4c8a4a"/>
<circle cx="14.4" cy="182.1" r="3.8" fill="#4c8a4a"/>
<circle cx="17.2" cy="183.0" r="3.8" fill="#4c8a4a"/>
<circle cx="18.6" cy="185.1" r="3.8" fill="#4c8a4a"/>
<circle cx="11.3" cy="182.7" r="2.2" fill="#6ea458" opacity=".7"/>
<circle cx="13.8" cy="181.0" r="2.2" fill="#6ea458" opacity=".7"/>
<circle cx="16.7" cy="181.8" r="2.2" fill="#6ea458" opacity=".7"/>
<ellipse cx="353" cy="191" rx="11.9" ry="10.4" fill="#3c6c3c"/>
<circle cx="347.5" cy="188.0" r="5.3" fill="#68a052"/>
<circle cx="349.5" cy="184.9" r="5.3" fill="#68a052"/>
<circle cx="353.3" cy="183.8" r="5.3" fill="#68a052"/>
<circle cx="357.2" cy="184.9" r="5.3" fill="#68a052"/>
<circle cx="359.2" cy="188.0" r="5.3" fill="#68a052"/>
<circle cx="349.0" cy="184.8" r="3.1" fill="#8cb862" opacity=".7"/>
<circle cx="352.5" cy="182.4" r="3.1" fill="#8cb862" opacity=".7"/>
<circle cx="356.5" cy="183.4" r="3.1" fill="#8cb862" opacity=".7"/>
<ellipse cx="325" cy="191" rx="9.5" ry="8.4" fill="#2f5b38"/>
<circle cx="320.6" cy="188.4" r="4.3" fill="#3f7a42"/>
<circle cx="322.2" cy="185.9" r="4.3" fill="#3f7a42"/>
<circle cx="325.3" cy="185.0" r="4.3" fill="#3f7a42"/>
<circle cx="328.4" cy="185.9" r="4.3" fill="#3f7a42"/>
<circle cx="330.1" cy="188.4" r="4.3" fill="#3f7a42"/>
<circle cx="321.9" cy="185.7" r="2.5" fill="#5a924e" opacity=".7"/>
<circle cx="324.7" cy="183.8" r="2.5" fill="#5a924e" opacity=".7"/>
<circle cx="327.9" cy="184.6" r="2.5" fill="#5a924e" opacity=".7"/>
<ellipse cx="377" cy="191" rx="9.8" ry="8.6" fill="#376839"/>
<circle cx="372.4" cy="188.7" r="4.4" fill="#5c984e"/>
<circle cx="374.0" cy="186.2" r="4.4" fill="#5c984e"/>
<circle cx="377.2" cy="185.3" r="4.4" fill="#5c984e"/>
<circle cx="380.4" cy="186.2" r="4.4" fill="#5c984e"/>
<circle cx="382.1" cy="188.7" r="4.4" fill="#5c984e"/>
<circle cx="373.6" cy="186.0" r="2.6" fill="#82b45e" opacity=".7"/>
<circle cx="376.5" cy="184.0" r="2.6" fill="#82b45e" opacity=".7"/>
<circle cx="379.8" cy="184.9" r="2.6" fill="#82b45e" opacity=".7"/>
<ellipse cx="124" cy="191" rx="11.8" ry="10.4" fill="#2f5b38"/>
<circle cx="118.0" cy="188.7" r="5.3" fill="#3f7a42"/>
<circle cx="120.0" cy="185.7" r="5.3" fill="#3f7a42"/>
<circle cx="123.8" cy="184.5" r="5.3" fill="#3f7a42"/>
<circle cx="127.6" cy="185.7" r="5.3" fill="#3f7a42"/>
<circle cx="129.6" cy="188.7" r="5.3" fill="#3f7a42"/>
<circle cx="119.5" cy="185.5" r="3.1" fill="#5a924e" opacity=".7"/>
<circle cx="123.0" cy="183.1" r="3.1" fill="#5a924e" opacity=".7"/>
<circle cx="126.9" cy="184.2" r="3.1" fill="#5a924e" opacity=".7"/>
<ellipse cx="418" cy="192" rx="10.6" ry="9.3" fill="#376839"/>
<circle cx="412.5" cy="188.8" r="4.8" fill="#5c984e"/>
<circle cx="414.3" cy="186.1" r="4.8" fill="#5c984e"/>
<circle cx="417.7" cy="185.1" r="4.8" fill="#5c984e"/>
<circle cx="421.2" cy="186.1" r="4.8" fill="#5c984e"/>
<circle cx="423.0" cy="188.8" r="4.8" fill="#5c984e"/>
<circle cx="413.9" cy="185.9" r="2.8" fill="#82b45e" opacity=".7"/>
<circle cx="417.0" cy="183.8" r="2.8" fill="#82b45e" opacity=".7"/>
<circle cx="420.5" cy="184.7" r="2.8" fill="#82b45e" opacity=".7"/>
<ellipse cx="139" cy="192" rx="12.1" ry="10.7" fill="#3c6c3c"/>
<circle cx="133.2" cy="189.6" r="5.5" fill="#68a052"/>
<circle cx="135.3" cy="186.5" r="5.5" fill="#68a052"/>
<circle cx="139.2" cy="185.3" r="5.5" fill="#68a052"/>
<circle cx="143.2" cy="186.5" r="5.5" fill="#68a052"/>
<circle cx="145.2" cy="189.6" r="5.5" fill="#68a052"/>
<circle cx="134.8" cy="186.3" r="3.2" fill="#8cb862" opacity=".7"/>
<circle cx="138.4" cy="183.9" r="3.2" fill="#8cb862" opacity=".7"/>
<circle cx="142.4" cy="184.9" r="3.2" fill="#8cb862" opacity=".7"/>
<ellipse cx="401" cy="193" rx="9.3" ry="8.2" fill="#335f3a"/>
<circle cx="396.4" cy="190.6" r="4.2" fill="#4c8a4a"/>
<circle cx="398.0" cy="188.2" r="4.2" fill="#4c8a4a"/>
<circle cx="401.0" cy="187.3" r="4.2" fill="#4c8a4a"/>
<circle cx="404.0" cy="188.2" r="4.2" fill="#4c8a4a"/>
<circle cx="405.6" cy="190.6" r="4.2" fill="#4c8a4a"/>
<circle cx="397.7" cy="188.0" r="2.4" fill="#6ea458" opacity=".7"/>
<circle cx="400.4" cy="186.1" r="2.4" fill="#6ea458" opacity=".7"/>
<circle cx="403.5" cy="186.9" r="2.4" fill="#6ea458" opacity=".7"/>
<ellipse cx="387" cy="193" rx="9.8" ry="8.6" fill="#305c38"/>
<circle cx="382.2" cy="190.7" r="4.4" fill="#508c4a"/>
<circle cx="383.8" cy="188.2" r="4.4" fill="#508c4a"/>
<circle cx="387.0" cy="187.3" r="4.4" fill="#508c4a"/>
<circle cx="390.2" cy="188.2" r="4.4" fill="#508c4a"/>
<circle cx="391.9" cy="190.7" r="4.4" fill="#508c4a"/>
<circle cx="383.4" cy="188.0" r="2.6" fill="#72a85a" opacity=".7"/>
<circle cx="386.3" cy="186.0" r="2.6" fill="#72a85a" opacity=".7"/>
<circle cx="389.6" cy="186.9" r="2.6" fill="#72a85a" opacity=".7"/>
<ellipse cx="9" cy="193" rx="10.0" ry="8.8" fill="#305c38"/>
<circle cx="3.5" cy="190.8" r="4.5" fill="#508c4a"/>
<circle cx="5.2" cy="188.3" r="4.5" fill="#508c4a"/>
<circle cx="8.5" cy="187.3" r="4.5" fill="#508c4a"/>
<circle cx="11.8" cy="188.3" r="4.5" fill="#508c4a"/>
<circle cx="13.5" cy="190.8" r="4.5" fill="#508c4a"/>
<circle cx="4.9" cy="188.0" r="2.6" fill="#72a85a" opacity=".7"/>
<circle cx="7.8" cy="186.0" r="2.6" fill="#72a85a" opacity=".7"/>
<circle cx="11.2" cy="186.9" r="2.6" fill="#72a85a" opacity=".7"/>
<ellipse cx="180" cy="194" rx="8.9" ry="7.8" fill="#335f3a"/>
<circle cx="175.1" cy="191.2" r="4.0" fill="#4c8a4a"/>
<circle cx="176.6" cy="188.9" r="4.0" fill="#4c8a4a"/>
<circle cx="179.5" cy="188.0" r="4.0" fill="#4c8a4a"/>
<circle cx="182.4" cy="188.9" r="4.0" fill="#4c8a4a"/>
<circle cx="183.9" cy="191.2" r="4.0" fill="#4c8a4a"/>
<circle cx="176.3" cy="188.6" r="2.3" fill="#6ea458" opacity=".7"/>
<circle cx="178.9" cy="186.9" r="2.3" fill="#6ea458" opacity=".7"/>
<circle cx="181.9" cy="187.7" r="2.3" fill="#6ea458" opacity=".7"/>
<ellipse cx="150" cy="194" rx="9.0" ry="7.9" fill="#335f3a"/>
<circle cx="145.9" cy="191.2" r="4.0" fill="#4c8a4a"/>
<circle cx="147.4" cy="188.9" r="4.0" fill="#4c8a4a"/>
<circle cx="150.3" cy="188.0" r="4.0" fill="#4c8a4a"/>
<circle cx="153.3" cy="188.9" r="4.0" fill="#4c8a4a"/>
<circle cx="154.8" cy="191.2" r="4.0" fill="#4c8a4a"/>
<circle cx="147.1" cy="188.6" r="2.3" fill="#6ea458" opacity=".7"/>
<circle cx="149.7" cy="186.8" r="2.3" fill="#6ea458" opacity=".7"/>
<circle cx="152.7" cy="187.7" r="2.3" fill="#6ea458" opacity=".7"/>
<ellipse cx="97" cy="194" rx="10.6" ry="9.4" fill="#305c38"/>
<circle cx="92.2" cy="191.4" r="4.8" fill="#508c4a"/>
<circle cx="94.0" cy="188.7" r="4.8" fill="#508c4a"/>
<circle cx="97.4" cy="187.6" r="4.8" fill="#508c4a"/>
<circle cx="100.9" cy="188.7" r="4.8" fill="#508c4a"/>
<circle cx="102.7" cy="191.4" r="4.8" fill="#508c4a"/>
<circle cx="93.5" cy="188.4" r="2.8" fill="#72a85a" opacity=".7"/>
<circle cx="96.7" cy="186.3" r="2.8" fill="#72a85a" opacity=".7"/>
<circle cx="100.2" cy="187.3" r="2.8" fill="#72a85a" opacity=".7"/>
<ellipse cx="115" cy="194" rx="12.2" ry="10.7" fill="#2f5b38"/>
<circle cx="108.8" cy="191.5" r="5.5" fill="#3f7a42"/>
<circle cx="110.9" cy="188.4" r="5.5" fill="#3f7a42"/>
<circle cx="114.8" cy="187.2" r="5.5" fill="#3f7a42"/>
<circle cx="118.8" cy="188.4" r="5.5" fill="#3f7a42"/>
<circle cx="120.8" cy="191.5" r="5.5" fill="#3f7a42"/>
<circle cx="110.4" cy="188.2" r="3.2" fill="#5a924e" opacity=".7"/>
<circle cx="114.0" cy="185.8" r="3.2" fill="#5a924e" opacity=".7"/>
<circle cx="118.0" cy="186.9" r="3.2" fill="#5a924e" opacity=".7"/>
<ellipse cx="-3" cy="194" rx="11.4" ry="10.0" fill="#376839"/>
<circle cx="-9.1" cy="191.6" r="5.1" fill="#5c984e"/>
<circle cx="-7.2" cy="188.7" r="5.1" fill="#5c984e"/>
<circle cx="-3.5" cy="187.6" r="5.1" fill="#5c984e"/>
<circle cx="0.2" cy="188.7" r="5.1" fill="#5c984e"/>
<circle cx="2.1" cy="191.6" r="5.1" fill="#5c984e"/>
<circle cx="-7.6" cy="188.5" r="3.0" fill="#82b45e" opacity=".7"/>
<circle cx="-4.3" cy="186.3" r="3.0" fill="#82b45e" opacity=".7"/>
<circle cx="-0.5" cy="187.3" r="3.0" fill="#82b45e" opacity=".7"/>
<ellipse cx="427" cy="194" rx="8.8" ry="7.8" fill="#335f3a"/>
<circle cx="422.7" cy="191.9" r="4.0" fill="#4c8a4a"/>
<circle cx="424.2" cy="189.6" r="4.0" fill="#4c8a4a"/>
<circle cx="427.1" cy="188.8" r="4.0" fill="#4c8a4a"/>
<circle cx="430.0" cy="189.6" r="4.0" fill="#4c8a4a"/>
<circle cx="431.5" cy="191.9" r="4.0" fill="#4c8a4a"/>
<circle cx="423.9" cy="189.4" r="2.3" fill="#6ea458" opacity=".7"/>
<circle cx="426.5" cy="187.6" r="2.3" fill="#6ea458" opacity=".7"/>
<circle cx="429.4" cy="188.4" r="2.3" fill="#6ea458" opacity=".7"/>
<ellipse cx="363" cy="195" rx="9.9" ry="8.7" fill="#335f3a"/>
<circle cx="358.2" cy="192.4" r="4.5" fill="#4c8a4a"/>
<circle cx="359.9" cy="189.9" r="4.5" fill="#4c8a4a"/>
<circle cx="363.1" cy="188.9" r="4.5" fill="#4c8a4a"/>
<circle cx="366.3" cy="189.9" r="4.5" fill="#4c8a4a"/>
<circle cx="368.0" cy="192.4" r="4.5" fill="#4c8a4a"/>
<circle cx="359.5" cy="189.7" r="2.6" fill="#6ea458" opacity=".7"/>
<circle cx="362.4" cy="187.7" r="2.6" fill="#6ea458" opacity=".7"/>
<circle cx="365.7" cy="188.6" r="2.6" fill="#6ea458" opacity=".7"/>
<ellipse cx="167" cy="195" rx="10.2" ry="9.0" fill="#3c6c3c"/>
<circle cx="162.0" cy="192.7" r="4.6" fill="#68a052"/>
<circle cx="163.7" cy="190.1" r="4.6" fill="#68a052"/>
<circle cx="167.0" cy="189.1" r="4.6" fill="#68a052"/>
<circle cx="170.3" cy="190.1" r="4.6" fill="#68a052"/>
<circle cx="172.0" cy="192.7" r="4.6" fill="#68a052"/>
<circle cx="163.3" cy="189.9" r="2.7" fill="#8cb862" opacity=".7"/>
<circle cx="166.3" cy="187.8" r="2.7" fill="#8cb862" opacity=".7"/>
<circle cx="169.7" cy="188.7" r="2.7" fill="#8cb862" opacity=".7"/>
<ellipse cx="310" cy="196" rx="9.9" ry="8.7" fill="#3c6c3c"/>
<circle cx="305.0" cy="193.0" r="4.5" fill="#68a052"/>
<circle cx="306.7" cy="190.5" r="4.5" fill="#68a052"/>
<circle cx="309.9" cy="189.5" r="4.5" fill="#68a052"/>
<circle cx="313.1" cy="190.5" r="4.5" fill="#68a052"/>
<circle cx="314.8" cy="193.0" r="4.5" fill="#68a052"/>
<circle cx="306.3" cy="190.3" r="2.6" fill="#8cb862" opacity=".7"/>
<circle cx="309.2" cy="188.3" r="2.6" fill="#8cb862" opacity=".7"/>
<circle cx="312.5" cy="189.2" r="2.6" fill="#8cb862" opacity=".7"/>
<ellipse cx="337" cy="196" rx="8.8" ry="7.8" fill="#335f3a"/>
<circle cx="332.7" cy="193.1" r="4.0" fill="#4c8a4a"/>
<circle cx="334.2" cy="190.9" r="4.0" fill="#4c8a4a"/>
<circle cx="337.1" cy="190.0" r="4.0" fill="#4c8a4a"/>
<circle cx="340.0" cy="190.9" r="4.0" fill="#4c8a4a"/>
<circle cx="341.4" cy="193.1" r="4.0" fill="#4c8a4a"/>
<circle cx="333.9" cy="190.6" r="2.3" fill="#6ea458" opacity=".7"/>
<circle cx="336.5" cy="188.8" r="2.3" fill="#6ea458" opacity=".7"/>
<circle cx="339.4" cy="189.6" r="2.3" fill="#6ea458" opacity=".7"/>
<ellipse cx="368" cy="199" rx="10.8" ry="9.5" fill="#3c6c3c"/>
<circle cx="362.4" cy="196.4" r="4.9" fill="#68a052"/>
<circle cx="364.2" cy="193.7" r="4.9" fill="#68a052"/>
<circle cx="367.8" cy="192.6" r="4.9" fill="#68a052"/>
<circle cx="371.3" cy="193.7" r="4.9" fill="#68a052"/>
<circle cx="373.1" cy="196.4" r="4.9" fill="#68a052"/>
<circle cx="363.8" cy="193.5" r="2.8" fill="#8cb862" opacity=".7"/>
<circle cx="367.0" cy="191.3" r="2.8" fill="#8cb862" opacity=".7"/>
<circle cx="370.6" cy="192.3" r="2.8" fill="#8cb862" opacity=".7"/>
<ellipse cx="314" cy="201" rx="12.4" ry="10.9" fill="#376839"/>
<circle cx="308.3" cy="197.8" r="5.6" fill="#5c984e"/>
<circle cx="310.4" cy="194.7" r="5.6" fill="#5c984e"/>
<circle cx="314.4" cy="193.4" r="5.6" fill="#5c984e"/>
<circle cx="318.5" cy="194.7" r="5.6" fill="#5c984e"/>
<circle cx="320.5" cy="197.8" r="5.6" fill="#5c984e"/>
<circle cx="309.9" cy="194.5" r="3.2" fill="#82b45e" opacity=".7"/>
<circle cx="313.6" cy="192.0" r="3.2" fill="#82b45e" opacity=".7"/>
<circle cx="317.7" cy="193.1" r="3.2" fill="#82b45e" opacity=".7"/>
<ellipse cx="187" cy="201" rx="9.3" ry="8.2" fill="#376839"/>
<circle cx="182.1" cy="198.4" r="4.2" fill="#5c984e"/>
<circle cx="183.7" cy="196.0" r="4.2" fill="#5c984e"/>
<circle cx="186.7" cy="195.1" r="4.2" fill="#5c984e"/>
<circle cx="189.8" cy="196.0" r="4.2" fill="#5c984e"/>
<circle cx="191.3" cy="198.4" r="4.2" fill="#5c984e"/>
<circle cx="183.3" cy="195.7" r="2.4" fill="#82b45e" opacity=".7"/>
<circle cx="186.1" cy="193.9" r="2.4" fill="#82b45e" opacity=".7"/>
<circle cx="189.2" cy="194.7" r="2.4" fill="#82b45e" opacity=".7"/>
<ellipse cx="124" cy="201" rx="11.5" ry="10.1" fill="#376839"/>
<circle cx="118.1" cy="198.4" r="5.2" fill="#5c984e"/>
<circle cx="120.0" cy="195.5" r="5.2" fill="#5c984e"/>
<circle cx="123.8" cy="194.3" r="5.2" fill="#5c984e"/>
<circle cx="127.5" cy="195.5" r="5.2" fill="#5c984e"/>
<circle cx="129.4" cy="198.4" r="5.2" fill="#5c984e"/>
<circle cx="119.6" cy="195.3" r="3.0" fill="#82b45e" opacity=".7"/>
<circle cx="123.0" cy="193.0" r="3.0" fill="#82b45e" opacity=".7"/>
<circle cx="126.8" cy="194.0" r="3.0" fill="#82b45e" opacity=".7"/>
<ellipse cx="177" cy="201" rx="11.9" ry="10.5" fill="#376839"/>
<circle cx="171.4" cy="198.4" r="5.4" fill="#5c984e"/>
<circle cx="173.4" cy="195.3" r="5.4" fill="#5c984e"/>
<circle cx="177.3" cy="194.1" r="5.4" fill="#5c984e"/>
<circle cx="181.2" cy="195.3" r="5.4" fill="#5c984e"/>
<circle cx="183.2" cy="198.4" r="5.4" fill="#5c984e"/>
<circle cx="173.0" cy="195.1" r="3.1" fill="#82b45e" opacity=".7"/>
<circle cx="176.5" cy="192.8" r="3.1" fill="#82b45e" opacity=".7"/>
<circle cx="180.4" cy="193.8" r="3.1" fill="#82b45e" opacity=".7"/>
<ellipse cx="393" cy="201" rx="9.0" ry="7.9" fill="#335f3a"/>
<circle cx="388.6" cy="198.9" r="4.0" fill="#4c8a4a"/>
<circle cx="390.1" cy="196.6" r="4.0" fill="#4c8a4a"/>
<circle cx="393.0" cy="195.7" r="4.0" fill="#4c8a4a"/>
<circle cx="395.9" cy="196.6" r="4.0" fill="#4c8a4a"/>
<circle cx="397.5" cy="198.9" r="4.0" fill="#4c8a4a"/>
<circle cx="389.8" cy="196.3" r="2.3" fill="#6ea458" opacity=".7"/>
<circle cx="392.4" cy="194.5" r="2.3" fill="#6ea458" opacity=".7"/>
<circle cx="395.4" cy="195.3" r="2.3" fill="#6ea458" opacity=".7"/>
<ellipse cx="379" cy="202" rx="11.7" ry="10.3" fill="#2f5b38"/>
<circle cx="373.1" cy="199.0" r="5.3" fill="#3f7a42"/>
<circle cx="375.0" cy="196.0" r="5.3" fill="#3f7a42"/>
<circle cx="378.8" cy="194.9" r="5.3" fill="#3f7a42"/>
<circle cx="382.6" cy="196.0" r="5.3" fill="#3f7a42"/>
<circle cx="384.6" cy="199.0" r="5.3" fill="#3f7a42"/>
<circle cx="374.6" cy="195.8" r="3.0" fill="#5a924e" opacity=".7"/>
<circle cx="378.0" cy="193.5" r="3.0" fill="#5a924e" opacity=".7"/>
<circle cx="381.9" cy="194.5" r="3.0" fill="#5a924e" opacity=".7"/>
<ellipse cx="-2" cy="202" rx="12.6" ry="11.1" fill="#335f3a"/>
<circle cx="-8.3" cy="199.1" r="5.7" fill="#4c8a4a"/>
<circle cx="-6.2" cy="196.0" r="5.7" fill="#4c8a4a"/>
<circle cx="-2.1" cy="194.7" r="5.7" fill="#4c8a4a"/>
<circle cx="2.0" cy="196.0" r="5.7" fill="#4c8a4a"/>
<circle cx="4.1" cy="199.1" r="5.7" fill="#4c8a4a"/>
<circle cx="-6.7" cy="195.8" r="3.3" fill="#6ea458" opacity=".7"/>
<circle cx="-3.0" cy="193.3" r="3.3" fill="#6ea458" opacity=".7"/>
<circle cx="1.2" cy="194.4" r="3.3" fill="#6ea458" opacity=".7"/>
<ellipse cx="342" cy="202" rx="9.3" ry="8.2" fill="#376839"/>
<circle cx="337.6" cy="199.4" r="4.2" fill="#5c984e"/>
<circle cx="339.2" cy="197.0" r="4.2" fill="#5c984e"/>
<circle cx="342.2" cy="196.1" r="4.2" fill="#5c984e"/>
<circle cx="345.2" cy="197.0" r="4.2" fill="#5c984e"/>
<circle cx="346.8" cy="199.4" r="4.2" fill="#5c984e"/>
<circle cx="338.8" cy="196.7" r="2.4" fill="#82b45e" opacity=".7"/>
<circle cx="341.6" cy="194.9" r="2.4" fill="#82b45e" opacity=".7"/>
<circle cx="344.7" cy="195.7" r="2.4" fill="#82b45e" opacity=".7"/>
<ellipse cx="133" cy="202" rx="10.5" ry="9.2" fill="#335f3a"/>
<circle cx="127.6" cy="199.7" r="4.7" fill="#4c8a4a"/>
<circle cx="129.3" cy="197.0" r="4.7" fill="#4c8a4a"/>
<circle cx="132.8" cy="196.0" r="4.7" fill="#4c8a4a"/>
<circle cx="136.2" cy="197.0" r="4.7" fill="#4c8a4a"/>
<circle cx="137.9" cy="199.7" r="4.7" fill="#4c8a4a"/>
<circle cx="128.9" cy="196.8" r="2.7" fill="#6ea458" opacity=".7"/>
<circle cx="132.0" cy="194.7" r="2.7" fill="#6ea458" opacity=".7"/>
<circle cx="135.5" cy="195.6" r="2.7" fill="#6ea458" opacity=".7"/>
<ellipse cx="325" cy="202" rx="10.9" ry="9.6" fill="#335f3a"/>
<circle cx="320.0" cy="199.7" r="4.9" fill="#4c8a4a"/>
<circle cx="321.8" cy="196.9" r="4.9" fill="#4c8a4a"/>
<circle cx="325.4" cy="195.8" r="4.9" fill="#4c8a4a"/>
<circle cx="328.9" cy="196.9" r="4.9" fill="#4c8a4a"/>
<circle cx="330.8" cy="199.7" r="4.9" fill="#4c8a4a"/>
<circle cx="321.4" cy="196.7" r="2.8" fill="#6ea458" opacity=".7"/>
<circle cx="324.6" cy="194.5" r="2.8" fill="#6ea458" opacity=".7"/>
<circle cx="328.3" cy="195.5" r="2.8" fill="#6ea458" opacity=".7"/>
<ellipse cx="409" cy="203" rx="10.4" ry="9.1" fill="#3c6c3c"/>
<circle cx="403.6" cy="199.9" r="4.7" fill="#68a052"/>
<circle cx="405.3" cy="197.3" r="4.7" fill="#68a052"/>
<circle cx="408.7" cy="196.3" r="4.7" fill="#68a052"/>
<circle cx="412.1" cy="197.3" r="4.7" fill="#68a052"/>
<circle cx="413.8" cy="199.9" r="4.7" fill="#68a052"/>
<circle cx="404.9" cy="197.1" r="2.7" fill="#8cb862" opacity=".7"/>
<circle cx="408.0" cy="195.0" r="2.7" fill="#8cb862" opacity=".7"/>
<circle cx="411.4" cy="195.9" r="2.7" fill="#8cb862" opacity=".7"/>
<ellipse cx="418" cy="203" rx="9.8" ry="8.6" fill="#305c38"/>
<circle cx="413.6" cy="200.1" r="4.4" fill="#508c4a"/>
<circle cx="415.3" cy="197.6" r="4.4" fill="#508c4a"/>
<circle cx="418.4" cy="196.6" r="4.4" fill="#508c4a"/>
<circle cx="421.6" cy="197.6" r="4.4" fill="#508c4a"/>
<circle cx="423.3" cy="200.1" r="4.4" fill="#508c4a"/>
<circle cx="414.9" cy="197.3" r="2.6" fill="#72a85a" opacity=".7"/>
<circle cx="417.8" cy="195.4" r="2.6" fill="#72a85a" opacity=".7"/>
<circle cx="421.0" cy="196.2" r="2.6" fill="#72a85a" opacity=".7"/>
<ellipse cx="15" cy="203" rx="12.4" ry="10.9" fill="#376839"/>
<circle cx="8.8" cy="200.3" r="5.6" fill="#5c984e"/>
<circle cx="10.9" cy="197.2" r="5.6" fill="#5c984e"/>
<circle cx="14.9" cy="196.0" r="5.6" fill="#5c984e"/>
<circle cx="18.9" cy="197.2" r="5.6" fill="#5c984e"/>
<circle cx="21.0" cy="200.3" r="5.6" fill="#5c984e"/>
<circle cx="10.4" cy="197.0" r="3.2" fill="#82b45e" opacity=".7"/>
<circle cx="14.0" cy="194.6" r="3.2" fill="#82b45e" opacity=".7"/>
<circle cx="18.2" cy="195.7" r="3.2" fill="#82b45e" opacity=".7"/>
<ellipse cx="351" cy="203" rx="11.6" ry="10.2" fill="#305c38"/>
<circle cx="345.3" cy="200.6" r="5.2" fill="#508c4a"/>
<circle cx="347.3" cy="197.7" r="5.2" fill="#508c4a"/>
<circle cx="351.0" cy="196.5" r="5.2" fill="#508c4a"/>
<circle cx="354.8" cy="197.7" r="5.2" fill="#508c4a"/>
<circle cx="356.7" cy="200.6" r="5.2" fill="#508c4a"/>
<circle cx="346.8" cy="197.5" r="3.0" fill="#72a85a" opacity=".7"/>
<circle cx="350.2" cy="195.2" r="3.0" fill="#72a85a" opacity=".7"/>
<circle cx="354.1" cy="196.2" r="3.0" fill="#72a85a" opacity=".7"/>
<ellipse cx="92" cy="203" rx="10.9" ry="9.6" fill="#3c6c3c"/>
<circle cx="86.8" cy="200.7" r="4.9" fill="#68a052"/>
<circle cx="88.7" cy="197.9" r="4.9" fill="#68a052"/>
<circle cx="92.2" cy="196.8" r="4.9" fill="#68a052"/>
<circle cx="95.8" cy="197.9" r="4.9" fill="#68a052"/>
<circle cx="97.6" cy="200.7" r="4.9" fill="#68a052"/>
<circle cx="88.2" cy="197.7" r="2.8" fill="#8cb862" opacity=".7"/>
<circle cx="91.4" cy="195.5" r="2.8" fill="#8cb862" opacity=".7"/>
<circle cx="95.1" cy="196.5" r="2.8" fill="#8cb862" opacity=".7"/>
<ellipse cx="107" cy="204" rx="8.9" ry="7.8" fill="#335f3a"/>
<circle cx="102.3" cy="201.0" r="4.0" fill="#4c8a4a"/>
<circle cx="103.8" cy="198.8" r="4.0" fill="#4c8a4a"/>
<circle cx="106.7" cy="197.9" r="4.0" fill="#4c8a4a"/>
<circle cx="109.5" cy="198.8" r="4.0" fill="#4c8a4a"/>
<circle cx="111.0" cy="201.0" r="4.0" fill="#4c8a4a"/>
<circle cx="103.4" cy="198.5" r="2.3" fill="#6ea458" opacity=".7"/>
<circle cx="106.0" cy="196.7" r="2.3" fill="#6ea458" opacity=".7"/>
<circle cx="109.0" cy="197.5" r="2.3" fill="#6ea458" opacity=".7"/>
<ellipse cx="341" cy="207" rx="10.8" ry="9.5" fill="#2f5b38"/>
<circle cx="335.8" cy="204.7" r="4.9" fill="#3f7a42"/>
<circle cx="337.6" cy="201.9" r="4.9" fill="#3f7a42"/>
<circle cx="341.1" cy="200.9" r="4.9" fill="#3f7a42"/>
<circle cx="344.6" cy="201.9" r="4.9" fill="#3f7a42"/>
<circle cx="346.4" cy="204.7" r="4.9" fill="#3f7a42"/>
<circle cx="337.2" cy="201.7" r="2.8" fill="#5a924e" opacity=".7"/>
<circle cx="340.4" cy="199.6" r="2.8" fill="#5a924e" opacity=".7"/>
<circle cx="344.0" cy="200.5" r="2.8" fill="#5a924e" opacity=".7"/>
<ellipse cx="116" cy="208" rx="12.3" ry="10.8" fill="#376839"/>
<circle cx="109.5" cy="204.7" r="5.5" fill="#5c984e"/>
<circle cx="111.6" cy="201.6" r="5.5" fill="#5c984e"/>
<circle cx="115.6" cy="200.3" r="5.5" fill="#5c984e"/>
<circle cx="119.6" cy="201.6" r="5.5" fill="#5c984e"/>
<circle cx="121.7" cy="204.7" r="5.5" fill="#5c984e"/>
<circle cx="111.1" cy="201.4" r="3.2" fill="#82b45e" opacity=".7"/>
<circle cx="114.7" cy="198.9" r="3.2" fill="#82b45e" opacity=".7"/>
<circle cx="118.8" cy="200.0" r="3.2" fill="#82b45e" opacity=".7"/>
<ellipse cx="183" cy="208" rx="10.9" ry="9.6" fill="#305c38"/>
<circle cx="178.0" cy="205.6" r="4.9" fill="#508c4a"/>
<circle cx="179.9" cy="202.9" r="4.9" fill="#508c4a"/>
<circle cx="183.4" cy="201.8" r="4.9" fill="#508c4a"/>
<circle cx="186.9" cy="202.9" r="4.9" fill="#508c4a"/>
<circle cx="188.8" cy="205.6" r="4.9" fill="#508c4a"/>
<circle cx="179.4" cy="202.7" r="2.8" fill="#72a85a" opacity=".7"/>
<circle cx="182.6" cy="200.5" r="2.8" fill="#72a85a" opacity=".7"/>
<circle cx="186.3" cy="201.5" r="2.8" fill="#72a85a" opacity=".7"/>
<ellipse cx="102" cy="208" rx="10.2" ry="8.9" fill="#335f3a"/>
<circle cx="96.5" cy="205.8" r="4.6" fill="#4c8a4a"/>
<circle cx="98.2" cy="203.3" r="4.6" fill="#4c8a4a"/>
<circle cx="101.5" cy="202.2" r="4.6" fill="#4c8a4a"/>
<circle cx="104.8" cy="203.3" r="4.6" fill="#4c8a4a"/>
<circle cx="106.5" cy="205.8" r="4.6" fill="#4c8a4a"/>
<circle cx="97.8" cy="203.0" r="2.6" fill="#6ea458" opacity=".7"/>
<circle cx="100.8" cy="201.0" r="2.6" fill="#6ea458" opacity=".7"/>
<circle cx="104.2" cy="201.9" r="2.6" fill="#6ea458" opacity=".7"/>
<ellipse cx="128" cy="209" rx="10.3" ry="9.1" fill="#376839"/>
<circle cx="122.8" cy="206.1" r="4.6" fill="#5c984e"/>
<circle cx="124.5" cy="203.5" r="4.6" fill="#5c984e"/>
<circle cx="127.9" cy="202.4" r="4.6" fill="#5c984e"/>
<circle cx="131.2" cy="203.5" r="4.6" fill="#5c984e"/>
<circle cx="133.0" cy="206.1" r="4.6" fill="#5c984e"/>
<circle cx="124.1" cy="203.2" r="2.7" fill="#82b45e" opacity=".7"/>
<circle cx="127.1" cy="201.2" r="2.7" fill="#82b45e" opacity=".7"/>
<circle cx="130.6" cy="202.1" r="2.7" fill="#82b45e" opacity=".7"/>
<ellipse cx="380" cy="209" rx="11.1" ry="9.8" fill="#2f5b38"/>
<circle cx="374.1" cy="206.6" r="5.0" fill="#3f7a42"/>
<circle cx="376.0" cy="203.7" r="5.0" fill="#3f7a42"/>
<circle cx="379.6" cy="202.6" r="5.0" fill="#3f7a42"/>
<circle cx="383.3" cy="203.7" r="5.0" fill="#3f7a42"/>
<circle cx="385.1" cy="206.6" r="5.0" fill="#3f7a42"/>
<circle cx="375.6" cy="203.5" r="2.9" fill="#5a924e" opacity=".7"/>
<circle cx="378.9" cy="201.3" r="2.9" fill="#5a924e" opacity=".7"/>
<circle cx="382.6" cy="202.3" r="2.9" fill="#5a924e" opacity=".7"/>
<ellipse cx="365" cy="210" rx="10.8" ry="9.5" fill="#305c38"/>
<circle cx="360.0" cy="206.8" r="4.8" fill="#508c4a"/>
<circle cx="361.8" cy="204.1" r="4.8" fill="#508c4a"/>
<circle cx="365.3" cy="203.0" r="4.8" fill="#508c4a"/>
<circle cx="368.8" cy="204.1" r="4.8" fill="#508c4a"/>
<circle cx="370.6" cy="206.8" r="4.8" fill="#508c4a"/>
<circle cx="361.4" cy="203.9" r="2.8" fill="#72a85a" opacity=".7"/>
<circle cx="364.5" cy="201.7" r="2.8" fill="#72a85a" opacity=".7"/>
<circle cx="368.1" cy="202.7" r="2.8" fill="#72a85a" opacity=".7"/>
<ellipse cx="45" cy="210" rx="12.4" ry="10.9" fill="#335f3a"/>
<circle cx="39.2" cy="206.8" r="5.6" fill="#4c8a4a"/>
<circle cx="41.3" cy="203.6" r="5.6" fill="#4c8a4a"/>
<circle cx="45.3" cy="202.4" r="5.6" fill="#4c8a4a"/>
<circle cx="49.3" cy="203.6" r="5.6" fill="#4c8a4a"/>
<circle cx="51.4" cy="206.8" r="5.6" fill="#4c8a4a"/>
<circle cx="40.8" cy="203.4" r="3.2" fill="#6ea458" opacity=".7"/>
<circle cx="44.4" cy="200.9" r="3.2" fill="#6ea458" opacity=".7"/>
<circle cx="48.6" cy="202.0" r="3.2" fill="#6ea458" opacity=".7"/>
<ellipse cx="393" cy="210" rx="11.1" ry="9.8" fill="#2f5b38"/>
<circle cx="387.3" cy="206.9" r="5.0" fill="#3f7a42"/>
<circle cx="389.2" cy="204.1" r="5.0" fill="#3f7a42"/>
<circle cx="392.8" cy="202.9" r="5.0" fill="#3f7a42"/>
<circle cx="396.4" cy="204.1" r="5.0" fill="#3f7a42"/>
<circle cx="398.3" cy="206.9" r="5.0" fill="#3f7a42"/>
<circle cx="388.7" cy="203.8" r="2.9" fill="#5a924e" opacity=".7"/>
<circle cx="392.0" cy="201.6" r="2.9" fill="#5a924e" opacity=".7"/>
<circle cx="395.7" cy="202.6" r="2.9" fill="#5a924e" opacity=".7"/>
<ellipse cx="407" cy="210" rx="12.4" ry="10.9" fill="#335f3a"/>
<circle cx="401.0" cy="206.8" r="5.6" fill="#4c8a4a"/>
<circle cx="403.1" cy="203.7" r="5.6" fill="#4c8a4a"/>
<circle cx="407.1" cy="202.5" r="5.6" fill="#4c8a4a"/>
<circle cx="411.1" cy="203.7" r="5.6" fill="#4c8a4a"/>
<circle cx="413.2" cy="206.8" r="5.6" fill="#4c8a4a"/>
<circle cx="402.6" cy="203.5" r="3.2" fill="#6ea458" opacity=".7"/>
<circle cx="406.2" cy="201.0" r="3.2" fill="#6ea458" opacity=".7"/>
<circle cx="410.3" cy="202.1" r="3.2" fill="#6ea458" opacity=".7"/>
<ellipse cx="200" cy="210" rx="10.9" ry="9.6" fill="#2f5b38"/>
<circle cx="194.9" cy="207.1" r="4.9" fill="#3f7a42"/>
<circle cx="196.7" cy="204.3" r="4.9" fill="#3f7a42"/>
<circle cx="200.3" cy="203.2" r="4.9" fill="#3f7a42"/>
<circle cx="203.8" cy="204.3" r="4.9" fill="#3f7a42"/>
<circle cx="205.7" cy="207.1" r="4.9" fill="#3f7a42"/>
<circle cx="196.3" cy="204.1" r="2.8" fill="#5a924e" opacity=".7"/>
<circle cx="199.5" cy="201.9" r="2.8" fill="#5a924e" opacity=".7"/>
<circle cx="203.2" cy="202.9" r="2.8" fill="#5a924e" opacity=".7"/>
<ellipse cx="83" cy="210" rx="11.8" ry="10.4" fill="#2f5b38"/>
<circle cx="77.2" cy="207.3" r="5.3" fill="#3f7a42"/>
<circle cx="79.2" cy="204.3" r="5.3" fill="#3f7a42"/>
<circle cx="83.1" cy="203.1" r="5.3" fill="#3f7a42"/>
<circle cx="86.9" cy="204.3" r="5.3" fill="#3f7a42"/>
<circle cx="88.9" cy="207.3" r="5.3" fill="#3f7a42"/>
<circle cx="78.8" cy="204.1" r="3.1" fill="#5a924e" opacity=".7"/>
<circle cx="82.2" cy="201.8" r="3.1" fill="#5a924e" opacity=".7"/>
<circle cx="86.2" cy="202.8" r="3.1" fill="#5a924e" opacity=".7"/>
<ellipse cx="28" cy="210" rx="12.3" ry="10.9" fill="#3c6c3c"/>
<circle cx="22.1" cy="207.6" r="5.6" fill="#68a052"/>
<circle cx="24.2" cy="204.5" r="5.6" fill="#68a052"/>
<circle cx="28.2" cy="203.2" r="5.6" fill="#68a052"/>
<circle cx="32.3" cy="204.5" r="5.6" fill="#68a052"/>
<circle cx="34.3" cy="207.6" r="5.6" fill="#68a052"/>
<circle cx="23.8" cy="204.3" r="3.2" fill="#8cb862" opacity=".7"/>
<circle cx="27.4" cy="201.8" r="3.2" fill="#8cb862" opacity=".7"/>
<circle cx="31.5" cy="202.9" r="3.2" fill="#8cb862" opacity=".7"/>
<ellipse cx="422" cy="211" rx="12.8" ry="11.3" fill="#305c38"/>
<circle cx="415.5" cy="207.9" r="5.8" fill="#508c4a"/>
<circle cx="417.6" cy="204.7" r="5.8" fill="#508c4a"/>
<circle cx="421.8" cy="203.4" r="5.8" fill="#508c4a"/>
<circle cx="426.0" cy="204.7" r="5.8" fill="#508c4a"/>
<circle cx="428.1" cy="207.9" r="5.8" fill="#508c4a"/>
<circle cx="417.1" cy="204.5" r="3.3" fill="#72a85a" opacity=".7"/>
<circle cx="420.9" cy="201.9" r="3.3" fill="#72a85a" opacity=".7"/>
<circle cx="425.2" cy="203.1" r="3.3" fill="#72a85a" opacity=".7"/>
<ellipse cx="309" cy="211" rx="11.8" ry="10.4" fill="#2f5b38"/>
<circle cx="302.8" cy="208.5" r="5.3" fill="#3f7a42"/>
<circle cx="304.8" cy="205.5" r="5.3" fill="#3f7a42"/>
<circle cx="308.7" cy="204.3" r="5.3" fill="#3f7a42"/>
<circle cx="312.5" cy="205.5" r="5.3" fill="#3f7a42"/>
<circle cx="314.5" cy="208.5" r="5.3" fill="#3f7a42"/>
<circle cx="304.4" cy="205.3" r="3.1" fill="#5a924e" opacity=".7"/>
<circle cx="307.8" cy="202.9" r="3.1" fill="#5a924e" opacity=".7"/>
<circle cx="311.8" cy="204.0" r="3.1" fill="#5a924e" opacity=".7"/>
<ellipse cx="13" cy="211" rx="11.2" ry="9.8" fill="#2f5b38"/>
<circle cx="7.2" cy="208.6" r="5.0" fill="#3f7a42"/>
<circle cx="9.1" cy="205.8" r="5.0" fill="#3f7a42"/>
<circle cx="12.8" cy="204.7" r="5.0" fill="#3f7a42"/>
<circle cx="16.4" cy="205.8" r="5.0" fill="#3f7a42"/>
<circle cx="18.3" cy="208.6" r="5.0" fill="#3f7a42"/>
<circle cx="8.7" cy="205.6" r="2.9" fill="#5a924e" opacity=".7"/>
<circle cx="12.0" cy="203.3" r="2.9" fill="#5a924e" opacity=".7"/>
<circle cx="15.7" cy="204.3" r="2.9" fill="#5a924e" opacity=".7"/>
<ellipse cx="73" cy="211" rx="12.3" ry="10.8" fill="#3c6c3c"/>
<circle cx="66.9" cy="208.7" r="5.5" fill="#68a052"/>
<circle cx="69.0" cy="205.5" r="5.5" fill="#68a052"/>
<circle cx="73.0" cy="204.3" r="5.5" fill="#68a052"/>
<circle cx="77.0" cy="205.5" r="5.5" fill="#68a052"/>
<circle cx="79.1" cy="208.7" r="5.5" fill="#68a052"/>
<circle cx="68.5" cy="205.4" r="3.2" fill="#8cb862" opacity=".7"/>
<circle cx="72.1" cy="202.9" r="3.2" fill="#8cb862" opacity=".7"/>
<circle cx="76.2" cy="204.0" r="3.2" fill="#8cb862" opacity=".7"/>
<ellipse cx="168" cy="211" rx="11.4" ry="10.0" fill="#305c38"/>
<circle cx="162.0" cy="208.7" r="5.1" fill="#508c4a"/>
<circle cx="164.0" cy="205.8" r="5.1" fill="#508c4a"/>
<circle cx="167.7" cy="204.7" r="5.1" fill="#508c4a"/>
<circle cx="171.4" cy="205.8" r="5.1" fill="#508c4a"/>
<circle cx="173.3" cy="208.7" r="5.1" fill="#508c4a"/>
<circle cx="163.5" cy="205.6" r="3.0" fill="#72a85a" opacity=".7"/>
<circle cx="166.9" cy="203.3" r="3.0" fill="#72a85a" opacity=".7"/>
<circle cx="170.7" cy="204.4" r="3.0" fill="#72a85a" opacity=".7"/>
<ellipse cx="3" cy="212" rx="9.3" ry="8.2" fill="#3c6c3c"/>
<circle cx="-2.0" cy="209.3" r="4.2" fill="#68a052"/>
<circle cx="-0.4" cy="206.9" r="4.2" fill="#68a052"/>
<circle cx="2.6" cy="206.0" r="4.2" fill="#68a052"/>
<circle cx="5.6" cy="206.9" r="4.2" fill="#68a052"/>
<circle cx="7.2" cy="209.3" r="4.2" fill="#68a052"/>
<circle cx="-0.8" cy="206.6" r="2.4" fill="#8cb862" opacity=".7"/>
<circle cx="2.0" cy="204.8" r="2.4" fill="#8cb862" opacity=".7"/>
<circle cx="5.1" cy="205.6" r="2.4" fill="#8cb862" opacity=".7"/>
<ellipse cx="355" cy="212" rx="12.9" ry="11.3" fill="#376839"/>
<circle cx="348.4" cy="209.4" r="5.8" fill="#5c984e"/>
<circle cx="350.5" cy="206.1" r="5.8" fill="#5c984e"/>
<circle cx="354.7" cy="204.8" r="5.8" fill="#5c984e"/>
<circle cx="358.9" cy="206.1" r="5.8" fill="#5c984e"/>
<circle cx="361.1" cy="209.4" r="5.8" fill="#5c984e"/>
<circle cx="350.0" cy="205.9" r="3.3" fill="#82b45e" opacity=".7"/>
<circle cx="353.8" cy="203.4" r="3.3" fill="#82b45e" opacity=".7"/>
<circle cx="358.1" cy="204.5" r="3.3" fill="#82b45e" opacity=".7"/>
<ellipse cx="363" cy="216" rx="10.3" ry="9.1" fill="#305c38"/>
<circle cx="357.8" cy="213.8" r="4.7" fill="#508c4a"/>
<circle cx="359.5" cy="211.2" r="4.7" fill="#508c4a"/>
<circle cx="362.9" cy="210.1" r="4.7" fill="#508c4a"/>
<circle cx="366.2" cy="211.2" r="4.7" fill="#508c4a"/>
<circle cx="368.0" cy="213.8" r="4.7" fill="#508c4a"/>
<circle cx="359.1" cy="210.9" r="2.7" fill="#72a85a" opacity=".7"/>
<circle cx="362.1" cy="208.9" r="2.7" fill="#72a85a" opacity=".7"/>
<circle cx="365.6" cy="209.8" r="2.7" fill="#72a85a" opacity=".7"/>
<ellipse cx="351" cy="217" rx="12.1" ry="10.6" fill="#335f3a"/>
<circle cx="345.0" cy="213.7" r="5.4" fill="#4c8a4a"/>
<circle cx="347.1" cy="210.7" r="5.4" fill="#4c8a4a"/>
<circle cx="351.0" cy="209.4" r="5.4" fill="#4c8a4a"/>
<circle cx="354.9" cy="210.7" r="5.4" fill="#4c8a4a"/>
<circle cx="357.0" cy="213.7" r="5.4" fill="#4c8a4a"/>
<circle cx="346.6" cy="210.5" r="3.1" fill="#6ea458" opacity=".7"/>
<circle cx="350.1" cy="208.0" r="3.1" fill="#6ea458" opacity=".7"/>
<circle cx="354.2" cy="209.1" r="3.1" fill="#6ea458" opacity=".7"/>
<ellipse cx="5" cy="217" rx="11.2" ry="9.8" fill="#335f3a"/>
<circle cx="-1.0" cy="214.2" r="5.0" fill="#4c8a4a"/>
<circle cx="0.9" cy="211.4" r="5.0" fill="#4c8a4a"/>
<circle cx="4.6" cy="210.3" r="5.0" fill="#4c8a4a"/>
<circle cx="8.2" cy="211.4" r="5.0" fill="#4c8a4a"/>
<circle cx="10.1" cy="214.2" r="5.0" fill="#4c8a4a"/>
<circle cx="0.5" cy="211.2" r="2.9" fill="#6ea458" opacity=".7"/>
<circle cx="3.8" cy="209.0" r="2.9" fill="#6ea458" opacity=".7"/>
<circle cx="7.5" cy="209.9" r="2.9" fill="#6ea458" opacity=".7"/>
<ellipse cx="18" cy="217" rx="13.3" ry="11.7" fill="#376839"/>
<circle cx="11.2" cy="214.2" r="6.0" fill="#5c984e"/>
<circle cx="13.4" cy="210.8" r="6.0" fill="#5c984e"/>
<circle cx="17.8" cy="209.4" r="6.0" fill="#5c984e"/>
<circle cx="22.1" cy="210.8" r="6.0" fill="#5c984e"/>
<circle cx="24.4" cy="214.2" r="6.0" fill="#5c984e"/>
<circle cx="12.9" cy="210.6" r="3.5" fill="#82b45e" opacity=".7"/>
<circle cx="16.8" cy="208.0" r="3.5" fill="#82b45e" opacity=".7"/>
<circle cx="21.3" cy="209.1" r="3.5" fill="#82b45e" opacity=".7"/>
<ellipse cx="377" cy="217" rx="12.2" ry="10.8" fill="#376839"/>
<circle cx="371.0" cy="214.3" r="5.5" fill="#5c984e"/>
<circle cx="373.1" cy="211.1" r="5.5" fill="#5c984e"/>
<circle cx="377.1" cy="209.9" r="5.5" fill="#5c984e"/>
<circle cx="381.1" cy="211.1" r="5.5" fill="#5c984e"/>
<circle cx="383.1" cy="214.3" r="5.5" fill="#5c984e"/>
<circle cx="372.6" cy="211.0" r="3.2" fill="#82b45e" opacity=".7"/>
<circle cx="376.2" cy="208.5" r="3.2" fill="#82b45e" opacity=".7"/>
<circle cx="380.3" cy="209.6" r="3.2" fill="#82b45e" opacity=".7"/>
<ellipse cx="47" cy="217" rx="9.6" ry="8.4" fill="#3c6c3c"/>
<circle cx="42.3" cy="214.6" r="4.3" fill="#68a052"/>
<circle cx="44.0" cy="212.1" r="4.3" fill="#68a052"/>
<circle cx="47.1" cy="211.2" r="4.3" fill="#68a052"/>
<circle cx="50.2" cy="212.1" r="4.3" fill="#68a052"/>
<circle cx="51.8" cy="214.6" r="4.3" fill="#68a052"/>
<circle cx="43.6" cy="211.9" r="2.5" fill="#8cb862" opacity=".7"/>
<circle cx="46.4" cy="210.0" r="2.5" fill="#8cb862" opacity=".7"/>
<circle cx="49.6" cy="210.8" r="2.5" fill="#8cb862" opacity=".7"/>
<ellipse cx="205" cy="217" rx="12.7" ry="11.2" fill="#2f5b38"/>
<circle cx="198.9" cy="214.4" r="5.7" fill="#3f7a42"/>
<circle cx="201.1" cy="211.2" r="5.7" fill="#3f7a42"/>
<circle cx="205.2" cy="209.9" r="5.7" fill="#3f7a42"/>
<circle cx="209.4" cy="211.2" r="5.7" fill="#3f7a42"/>
<circle cx="211.5" cy="214.4" r="5.7" fill="#3f7a42"/>
<circle cx="200.6" cy="211.0" r="3.3" fill="#5a924e" opacity=".7"/>
<circle cx="204.3" cy="208.5" r="3.3" fill="#5a924e" opacity=".7"/>
<circle cx="208.6" cy="209.6" r="3.3" fill="#5a924e" opacity=".7"/>
<ellipse cx="177" cy="218" rx="11.1" ry="9.8" fill="#2f5b38"/>
<circle cx="171.4" cy="214.8" r="5.0" fill="#3f7a42"/>
<circle cx="173.2" cy="212.0" r="5.0" fill="#3f7a42"/>
<circle cx="176.8" cy="210.9" r="5.0" fill="#3f7a42"/>
<circle cx="180.4" cy="212.0" r="5.0" fill="#3f7a42"/>
<circle cx="182.3" cy="214.8" r="5.0" fill="#3f7a42"/>
<circle cx="172.8" cy="211.8" r="2.9" fill="#5a924e" opacity=".7"/>
<circle cx="176.1" cy="209.6" r="2.9" fill="#5a924e" opacity=".7"/>
<circle cx="179.8" cy="210.6" r="2.9" fill="#5a924e" opacity=".7"/>
<ellipse cx="62" cy="218" rx="9.5" ry="8.3" fill="#335f3a"/>
<circle cx="57.7" cy="215.7" r="4.3" fill="#4c8a4a"/>
<circle cx="59.3" cy="213.3" r="4.3" fill="#4c8a4a"/>
<circle cx="62.4" cy="212.3" r="4.3" fill="#4c8a4a"/>
<circle cx="65.4" cy="213.3" r="4.3" fill="#4c8a4a"/>
<circle cx="67.0" cy="215.7" r="4.3" fill="#4c8a4a"/>
<circle cx="58.9" cy="213.0" r="2.5" fill="#6ea458" opacity=".7"/>
<circle cx="61.7" cy="211.1" r="2.5" fill="#6ea458" opacity=".7"/>
<circle cx="64.9" cy="212.0" r="2.5" fill="#6ea458" opacity=".7"/>
<ellipse cx="77" cy="219" rx="9.5" ry="8.4" fill="#376839"/>
<circle cx="72.7" cy="215.9" r="4.3" fill="#5c984e"/>
<circle cx="74.3" cy="213.5" r="4.3" fill="#5c984e"/>
<circle cx="77.4" cy="212.5" r="4.3" fill="#5c984e"/>
<circle cx="80.5" cy="213.5" r="4.3" fill="#5c984e"/>
<circle cx="82.1" cy="215.9" r="4.3" fill="#5c984e"/>
<circle cx="73.9" cy="213.2" r="2.5" fill="#82b45e" opacity=".7"/>
<circle cx="76.7" cy="211.3" r="2.5" fill="#82b45e" opacity=".7"/>
<circle cx="79.9" cy="212.1" r="2.5" fill="#82b45e" opacity=".7"/>
<ellipse cx="190" cy="219" rx="13.3" ry="11.7" fill="#335f3a"/>
<circle cx="183.2" cy="215.7" r="6.0" fill="#4c8a4a"/>
<circle cx="185.4" cy="212.4" r="6.0" fill="#4c8a4a"/>
<circle cx="189.7" cy="211.0" r="6.0" fill="#4c8a4a"/>
<circle cx="194.0" cy="212.4" r="6.0" fill="#4c8a4a"/>
<circle cx="196.3" cy="215.7" r="6.0" fill="#4c8a4a"/>
<circle cx="184.9" cy="212.2" r="3.5" fill="#6ea458" opacity=".7"/>
<circle cx="188.8" cy="209.6" r="3.5" fill="#6ea458" opacity=".7"/>
<circle cx="193.2" cy="210.7" r="3.5" fill="#6ea458" opacity=".7"/>
<ellipse cx="423" cy="219" rx="10.3" ry="9.1" fill="#376839"/>
<circle cx="418.3" cy="216.7" r="4.6" fill="#5c984e"/>
<circle cx="420.0" cy="214.1" r="4.6" fill="#5c984e"/>
<circle cx="423.3" cy="213.1" r="4.6" fill="#5c984e"/>
<circle cx="426.7" cy="214.1" r="4.6" fill="#5c984e"/>
<circle cx="428.4" cy="216.7" r="4.6" fill="#5c984e"/>
<circle cx="419.6" cy="213.9" r="2.7" fill="#82b45e" opacity=".7"/>
<circle cx="422.6" cy="211.8" r="2.7" fill="#82b45e" opacity=".7"/>
<circle cx="426.1" cy="212.7" r="2.7" fill="#82b45e" opacity=".7"/>
<ellipse cx="118" cy="220" rx="12.0" ry="10.5" fill="#305c38"/>
<circle cx="112.3" cy="216.8" r="5.4" fill="#508c4a"/>
<circle cx="114.4" cy="213.8" r="5.4" fill="#508c4a"/>
<circle cx="118.2" cy="212.6" r="5.4" fill="#508c4a"/>
<circle cx="122.1" cy="213.8" r="5.4" fill="#508c4a"/>
<circle cx="124.1" cy="216.8" r="5.4" fill="#508c4a"/>
<circle cx="113.9" cy="213.6" r="3.1" fill="#72a85a" opacity=".7"/>
<circle cx="117.4" cy="211.2" r="3.1" fill="#72a85a" opacity=".7"/>
<circle cx="121.4" cy="212.2" r="3.1" fill="#72a85a" opacity=".7"/>
<ellipse cx="407" cy="220" rx="11.8" ry="10.4" fill="#305c38"/>
<circle cx="400.7" cy="217.2" r="5.3" fill="#508c4a"/>
<circle cx="402.7" cy="214.2" r="5.3" fill="#508c4a"/>
<circle cx="406.6" cy="213.1" r="5.3" fill="#508c4a"/>
<circle cx="410.4" cy="214.2" r="5.3" fill="#508c4a"/>
<circle cx="412.4" cy="217.2" r="5.3" fill="#508c4a"/>
<circle cx="402.3" cy="214.0" r="3.1" fill="#72a85a" opacity=".7"/>
<circle cx="405.7" cy="211.7" r="3.1" fill="#72a85a" opacity=".7"/>
<circle cx="409.7" cy="212.7" r="3.1" fill="#72a85a" opacity=".7"/>
<ellipse cx="164" cy="220" rx="9.9" ry="8.7" fill="#376839"/>
<circle cx="159.5" cy="217.5" r="4.5" fill="#5c984e"/>
<circle cx="161.2" cy="215.0" r="4.5" fill="#5c984e"/>
<circle cx="164.4" cy="214.0" r="4.5" fill="#5c984e"/>
<circle cx="167.6" cy="215.0" r="4.5" fill="#5c984e"/>
<circle cx="169.3" cy="217.5" r="4.5" fill="#5c984e"/>
<circle cx="160.8" cy="214.7" r="2.6" fill="#82b45e" opacity=".7"/>
<circle cx="163.7" cy="212.7" r="2.6" fill="#82b45e" opacity=".7"/>
<circle cx="167.0" cy="213.6" r="2.6" fill="#82b45e" opacity=".7"/>
<ellipse cx="395" cy="220" rx="10.2" ry="8.9" fill="#376839"/>
<circle cx="389.7" cy="217.8" r="4.6" fill="#5c984e"/>
<circle cx="391.4" cy="215.2" r="4.6" fill="#5c984e"/>
<circle cx="394.7" cy="214.2" r="4.6" fill="#5c984e"/>
<circle cx="398.0" cy="215.2" r="4.6" fill="#5c984e"/>
<circle cx="399.7" cy="217.8" r="4.6" fill="#5c984e"/>
<circle cx="391.0" cy="214.9" r="2.6" fill="#82b45e" opacity=".7"/>
<circle cx="394.0" cy="212.9" r="2.6" fill="#82b45e" opacity=".7"/>
<circle cx="397.4" cy="213.8" r="2.6" fill="#82b45e" opacity=".7"/>
<ellipse cx="87" cy="221" rx="9.9" ry="8.7" fill="#376839"/>
<circle cx="82.6" cy="217.9" r="4.4" fill="#5c984e"/>
<circle cx="84.2" cy="215.4" r="4.4" fill="#5c984e"/>
<circle cx="87.4" cy="214.4" r="4.4" fill="#5c984e"/>
<circle cx="90.6" cy="215.4" r="4.4" fill="#5c984e"/>
<circle cx="92.3" cy="217.9" r="4.4" fill="#5c984e"/>
<circle cx="83.8" cy="215.1" r="2.6" fill="#82b45e" opacity=".7"/>
<circle cx="86.7" cy="213.2" r="2.6" fill="#82b45e" opacity=".7"/>
<circle cx="90.0" cy="214.0" r="2.6" fill="#82b45e" opacity=".7"/>
<ellipse cx="134" cy="221" rx="13.3" ry="11.7" fill="#2f5b38"/>
<circle cx="127.6" cy="217.7" r="6.0" fill="#3f7a42"/>
<circle cx="129.9" cy="214.4" r="6.0" fill="#3f7a42"/>
<circle cx="134.2" cy="213.0" r="6.0" fill="#3f7a42"/>
<circle cx="138.5" cy="214.4" r="6.0" fill="#3f7a42"/>
<circle cx="140.7" cy="217.7" r="6.0" fill="#3f7a42"/>
<circle cx="129.3" cy="214.2" r="3.5" fill="#5a924e" opacity=".7"/>
<circle cx="133.2" cy="211.5" r="3.5" fill="#5a924e" opacity=".7"/>
<circle cx="137.7" cy="212.7" r="3.5" fill="#5a924e" opacity=".7"/>
<ellipse cx="33" cy="221" rx="9.9" ry="8.7" fill="#2f5b38"/>
<circle cx="27.8" cy="218.0" r="4.4" fill="#3f7a42"/>
<circle cx="29.4" cy="215.5" r="4.4" fill="#3f7a42"/>
<circle cx="32.6" cy="214.5" r="4.4" fill="#3f7a42"/>
<circle cx="35.8" cy="215.5" r="4.4" fill="#3f7a42"/>
<circle cx="37.5" cy="218.0" r="4.4" fill="#3f7a42"/>
<circle cx="29.0" cy="215.3" r="2.6" fill="#5a924e" opacity=".7"/>
<circle cx="31.9" cy="213.3" r="2.6" fill="#5a924e" opacity=".7"/>
<circle cx="35.2" cy="214.2" r="2.6" fill="#5a924e" opacity=".7"/>
<ellipse cx="33" cy="225" rx="11.7" ry="10.3" fill="#335f3a"/>
<circle cx="26.9" cy="222.6" r="5.3" fill="#4c8a4a"/>
<circle cx="28.9" cy="219.7" r="5.3" fill="#4c8a4a"/>
<circle cx="32.7" cy="218.5" r="5.3" fill="#4c8a4a"/>
<circle cx="36.5" cy="219.7" r="5.3" fill="#4c8a4a"/>
<circle cx="38.5" cy="222.6" r="5.3" fill="#4c8a4a"/>
<circle cx="28.4" cy="219.5" r="3.1" fill="#6ea458" opacity=".7"/>
<circle cx="31.8" cy="217.1" r="3.1" fill="#6ea458" opacity=".7"/>
<circle cx="35.8" cy="218.2" r="3.1" fill="#6ea458" opacity=".7"/>
<ellipse cx="418" cy="226" rx="12.3" ry="10.9" fill="#376839"/>
<circle cx="412.3" cy="223.1" r="5.6" fill="#5c984e"/>
<circle cx="414.4" cy="220.0" r="5.6" fill="#5c984e"/>
<circle cx="418.4" cy="218.7" r="5.6" fill="#5c984e"/>
<circle cx="422.4" cy="220.0" r="5.6" fill="#5c984e"/>
<circle cx="424.5" cy="223.1" r="5.6" fill="#5c984e"/>
<circle cx="413.9" cy="219.8" r="3.2" fill="#82b45e" opacity=".7"/>
<circle cx="417.5" cy="217.3" r="3.2" fill="#82b45e" opacity=".7"/>
<circle cx="421.6" cy="218.4" r="3.2" fill="#82b45e" opacity=".7"/>
<ellipse cx="44" cy="226" rx="10.1" ry="8.9" fill="#335f3a"/>
<circle cx="39.4" cy="223.3" r="4.5" fill="#4c8a4a"/>
<circle cx="41.2" cy="220.7" r="4.5" fill="#4c8a4a"/>
<circle cx="44.4" cy="219.7" r="4.5" fill="#4c8a4a"/>
<circle cx="47.7" cy="220.7" r="4.5" fill="#4c8a4a"/>
<circle cx="49.4" cy="223.3" r="4.5" fill="#4c8a4a"/>
<circle cx="40.8" cy="220.5" r="2.6" fill="#6ea458" opacity=".7"/>
<circle cx="43.7" cy="218.4" r="2.6" fill="#6ea458" opacity=".7"/>
<circle cx="47.1" cy="219.3" r="2.6" fill="#6ea458" opacity=".7"/>
<ellipse cx="211" cy="226" rx="13.4" ry="11.8" fill="#376839"/>
<circle cx="204.3" cy="223.1" r="6.0" fill="#5c984e"/>
<circle cx="206.6" cy="219.7" r="6.0" fill="#5c984e"/>
<circle cx="210.9" cy="218.4" r="6.0" fill="#5c984e"/>
<circle cx="215.3" cy="219.7" r="6.0" fill="#5c984e"/>
<circle cx="217.6" cy="223.1" r="6.0" fill="#5c984e"/>
<circle cx="206.1" cy="219.6" r="3.5" fill="#82b45e" opacity=".7"/>
<circle cx="210.0" cy="216.9" r="3.5" fill="#82b45e" opacity=".7"/>
<circle cx="214.5" cy="218.1" r="3.5" fill="#82b45e" opacity=".7"/>
<ellipse cx="359" cy="226" rx="11.1" ry="9.7" fill="#335f3a"/>
<circle cx="353.6" cy="223.3" r="5.0" fill="#4c8a4a"/>
<circle cx="355.4" cy="220.5" r="5.0" fill="#4c8a4a"/>
<circle cx="359.0" cy="219.4" r="5.0" fill="#4c8a4a"/>
<circle cx="362.6" cy="220.5" r="5.0" fill="#4c8a4a"/>
<circle cx="364.5" cy="223.3" r="5.0" fill="#4c8a4a"/>
<circle cx="355.0" cy="220.3" r="2.9" fill="#6ea458" opacity=".7"/>
<circle cx="358.3" cy="218.1" r="2.9" fill="#6ea458" opacity=".7"/>
<circle cx="362.0" cy="219.1" r="2.9" fill="#6ea458" opacity=".7"/>
<ellipse cx="196" cy="226" rx="13.0" ry="11.4" fill="#3c6c3c"/>
<circle cx="189.6" cy="223.6" r="5.8" fill="#68a052"/>
<circle cx="191.8" cy="220.3" r="5.8" fill="#68a052"/>
<circle cx="196.0" cy="219.0" r="5.8" fill="#68a052"/>
<circle cx="200.2" cy="220.3" r="5.8" fill="#68a052"/>
<circle cx="202.4" cy="223.6" r="5.8" fill="#68a052"/>
<circle cx="191.3" cy="220.1" r="3.4" fill="#8cb862" opacity=".7"/>
<circle cx="195.1" cy="217.5" r="3.4" fill="#8cb862" opacity=".7"/>
<circle cx="199.5" cy="218.7" r="3.4" fill="#8cb862" opacity=".7"/>
<ellipse cx="151" cy="227" rx="11.7" ry="10.3" fill="#3c6c3c"/>
<circle cx="145.0" cy="224.0" r="5.2" fill="#68a052"/>
<circle cx="147.0" cy="221.1" r="5.2" fill="#68a052"/>
<circle cx="150.8" cy="219.9" r="5.2" fill="#68a052"/>
<circle cx="154.6" cy="221.1" r="5.2" fill="#68a052"/>
<circle cx="156.5" cy="224.0" r="5.2" fill="#68a052"/>
<circle cx="146.5" cy="220.9" r="3.0" fill="#8cb862" opacity=".7"/>
<circle cx="150.0" cy="218.6" r="3.0" fill="#8cb862" opacity=".7"/>
<circle cx="153.9" cy="219.6" r="3.0" fill="#8cb862" opacity=".7"/>
<ellipse cx="406" cy="227" rx="13.7" ry="12.1" fill="#376839"/>
<circle cx="399.1" cy="224.2" r="6.2" fill="#5c984e"/>
<circle cx="401.4" cy="220.7" r="6.2" fill="#5c984e"/>
<circle cx="405.9" cy="219.4" r="6.2" fill="#5c984e"/>
<circle cx="410.3" cy="220.7" r="6.2" fill="#5c984e"/>
<circle cx="412.6" cy="224.2" r="6.2" fill="#5c984e"/>
<circle cx="400.9" cy="220.6" r="3.6" fill="#82b45e" opacity=".7"/>
<circle cx="404.9" cy="217.8" r="3.6" fill="#82b45e" opacity=".7"/>
<circle cx="409.5" cy="219.1" r="3.6" fill="#82b45e" opacity=".7"/>
<ellipse cx="91" cy="228" rx="11.0" ry="9.7" fill="#2f5b38"/>
<circle cx="86.1" cy="225.1" r="4.9" fill="#3f7a42"/>
<circle cx="87.9" cy="222.3" r="4.9" fill="#3f7a42"/>
<circle cx="91.5" cy="221.2" r="4.9" fill="#3f7a42"/>
<circle cx="95.0" cy="222.3" r="4.9" fill="#3f7a42"/>
<circle cx="96.9" cy="225.1" r="4.9" fill="#3f7a42"/>
<circle cx="87.5" cy="222.1" r="2.9" fill="#5a924e" opacity=".7"/>
<circle cx="90.7" cy="219.9" r="2.9" fill="#5a924e" opacity=".7"/>
<circle cx="94.4" cy="220.9" r="2.9" fill="#5a924e" opacity=".7"/>
<ellipse cx="179" cy="228" rx="11.3" ry="9.9" fill="#2f5b38"/>
<circle cx="173.3" cy="225.1" r="5.1" fill="#3f7a42"/>
<circle cx="175.2" cy="222.2" r="5.1" fill="#3f7a42"/>
<circle cx="178.9" cy="221.1" r="5.1" fill="#3f7a42"/>
<circle cx="182.5" cy="222.2" r="5.1" fill="#3f7a42"/>
<circle cx="184.4" cy="225.1" r="5.1" fill="#3f7a42"/>
<circle cx="174.8" cy="222.0" r="2.9" fill="#5a924e" opacity=".7"/>
<circle cx="178.1" cy="219.8" r="2.9" fill="#5a924e" opacity=".7"/>
<circle cx="181.8" cy="220.8" r="2.9" fill="#5a924e" opacity=".7"/>
<ellipse cx="74" cy="228" rx="11.7" ry="10.3" fill="#376839"/>
<circle cx="68.1" cy="225.4" r="5.3" fill="#5c984e"/>
<circle cx="70.0" cy="222.4" r="5.3" fill="#5c984e"/>
<circle cx="73.8" cy="221.3" r="5.3" fill="#5c984e"/>
<circle cx="77.6" cy="222.4" r="5.3" fill="#5c984e"/>
<circle cx="79.6" cy="225.4" r="5.3" fill="#5c984e"/>
<circle cx="69.6" cy="222.2" r="3.0" fill="#82b45e" opacity=".7"/>
<circle cx="73.0" cy="219.9" r="3.0" fill="#82b45e" opacity=".7"/>
<circle cx="76.9" cy="220.9" r="3.0" fill="#82b45e" opacity=".7"/>
<ellipse cx="2" cy="229" rx="10.3" ry="9.1" fill="#305c38"/>
<circle cx="-2.7" cy="225.9" r="4.6" fill="#508c4a"/>
<circle cx="-1.0" cy="223.3" r="4.6" fill="#508c4a"/>
<circle cx="2.4" cy="222.3" r="4.6" fill="#508c4a"/>
<circle cx="5.7" cy="223.3" r="4.6" fill="#508c4a"/>
<circle cx="7.4" cy="225.9" r="4.6" fill="#508c4a"/>
<circle cx="-1.4" cy="223.1" r="2.7" fill="#72a85a" opacity=".7"/>
<circle cx="1.6" cy="221.0" r="2.7" fill="#72a85a" opacity=".7"/>
<circle cx="5.1" cy="221.9" r="2.7" fill="#72a85a" opacity=".7"/>
<ellipse cx="139" cy="229" rx="11.7" ry="10.3" fill="#3c6c3c"/>
<circle cx="133.0" cy="226.0" r="5.3" fill="#68a052"/>
<circle cx="134.9" cy="223.0" r="5.3" fill="#68a052"/>
<circle cx="138.7" cy="221.9" r="5.3" fill="#68a052"/>
<circle cx="142.5" cy="223.0" r="5.3" fill="#68a052"/>
<circle cx="144.5" cy="226.0" r="5.3" fill="#68a052"/>
<circle cx="134.5" cy="222.8" r="3.0" fill="#8cb862" opacity=".7"/>
<circle cx="137.9" cy="220.5" r="3.0" fill="#8cb862" opacity=".7"/>
<circle cx="141.8" cy="221.5" r="3.0" fill="#8cb862" opacity=".7"/>
<ellipse cx="104" cy="229" rx="12.5" ry="11.0" fill="#335f3a"/>
<circle cx="97.4" cy="226.1" r="5.6" fill="#4c8a4a"/>
<circle cx="99.5" cy="223.0" r="5.6" fill="#4c8a4a"/>
<circle cx="103.6" cy="221.7" r="5.6" fill="#4c8a4a"/>
<circle cx="107.6" cy="223.0" r="5.6" fill="#4c8a4a"/>
<circle cx="109.7" cy="226.1" r="5.6" fill="#4c8a4a"/>
<circle cx="99.0" cy="222.8" r="3.2" fill="#6ea458" opacity=".7"/>
<circle cx="102.7" cy="220.3" r="3.2" fill="#6ea458" opacity=".7"/>
<circle cx="106.9" cy="221.4" r="3.2" fill="#6ea458" opacity=".7"/>
<ellipse cx="239" cy="229" rx="10.4" ry="9.2" fill="#305c38"/>
<circle cx="234.0" cy="226.4" r="4.7" fill="#508c4a"/>
<circle cx="235.7" cy="223.7" r="4.7" fill="#508c4a"/>
<circle cx="239.1" cy="222.7" r="4.7" fill="#508c4a"/>
<circle cx="242.5" cy="223.7" r="4.7" fill="#508c4a"/>
<circle cx="244.3" cy="226.4" r="4.7" fill="#508c4a"/>
<circle cx="235.3" cy="223.5" r="2.7" fill="#72a85a" opacity=".7"/>
<circle cx="238.4" cy="221.4" r="2.7" fill="#72a85a" opacity=".7"/>
<circle cx="241.9" cy="222.3" r="2.7" fill="#72a85a" opacity=".7"/>
<ellipse cx="18" cy="229" rx="12.5" ry="11.0" fill="#3c6c3c"/>
<circle cx="11.5" cy="226.4" r="5.6" fill="#68a052"/>
<circle cx="13.6" cy="223.2" r="5.6" fill="#68a052"/>
<circle cx="17.6" cy="221.9" r="5.6" fill="#68a052"/>
<circle cx="21.7" cy="223.2" r="5.6" fill="#68a052"/>
<circle cx="23.8" cy="226.4" r="5.6" fill="#68a052"/>
<circle cx="13.1" cy="223.0" r="3.3" fill="#8cb862" opacity=".7"/>
<circle cx="16.8" cy="220.5" r="3.3" fill="#8cb862" opacity=".7"/>
<circle cx="21.0" cy="221.6" r="3.3" fill="#8cb862" opacity=".7"/>
<ellipse cx="64" cy="229" rx="13.2" ry="11.6" fill="#376839"/>
<circle cx="57.3" cy="226.3" r="6.0" fill="#5c984e"/>
<circle cx="59.5" cy="223.0" r="6.0" fill="#5c984e"/>
<circle cx="63.8" cy="221.6" r="6.0" fill="#5c984e"/>
<circle cx="68.1" cy="223.0" r="6.0" fill="#5c984e"/>
<circle cx="70.4" cy="226.3" r="6.0" fill="#5c984e"/>
<circle cx="59.0" cy="222.8" r="3.4" fill="#82b45e" opacity=".7"/>
<circle cx="62.9" cy="220.2" r="3.4" fill="#82b45e" opacity=".7"/>
<circle cx="67.3" cy="221.3" r="3.4" fill="#82b45e" opacity=".7"/>
<ellipse cx="225" cy="229" rx="10.7" ry="9.4" fill="#335f3a"/>
<circle cx="219.5" cy="226.5" r="4.8" fill="#4c8a4a"/>
<circle cx="221.3" cy="223.8" r="4.8" fill="#4c8a4a"/>
<circle cx="224.8" cy="222.7" r="4.8" fill="#4c8a4a"/>
<circle cx="228.3" cy="223.8" r="4.8" fill="#4c8a4a"/>
<circle cx="230.1" cy="226.5" r="4.8" fill="#4c8a4a"/>
<circle cx="220.9" cy="223.6" r="2.8" fill="#6ea458" opacity=".7"/>
<circle cx="224.0" cy="221.4" r="2.8" fill="#6ea458" opacity=".7"/>
<circle cx="227.6" cy="222.4" r="2.8" fill="#6ea458" opacity=".7"/>
<ellipse cx="375" cy="229" rx="12.0" ry="10.6" fill="#2f5b38"/>
<circle cx="369.4" cy="226.5" r="5.4" fill="#3f7a42"/>
<circle cx="371.5" cy="223.4" r="5.4" fill="#3f7a42"/>
<circle cx="375.4" cy="222.2" r="5.4" fill="#3f7a42"/>
<circle cx="379.3" cy="223.4" r="5.4" fill="#3f7a42"/>
<circle cx="381.3" cy="226.5" r="5.4" fill="#3f7a42"/>
<circle cx="371.0" cy="223.2" r="3.1" fill="#5a924e" opacity=".7"/>
<circle cx="374.5" cy="220.8" r="3.1" fill="#5a924e" opacity=".7"/>
<circle cx="378.5" cy="221.9" r="3.1" fill="#5a924e" opacity=".7"/>
<ellipse cx="165" cy="230" rx="10.7" ry="9.4" fill="#3c6c3c"/>
<circle cx="159.7" cy="226.9" r="4.8" fill="#68a052"/>
<circle cx="161.5" cy="224.2" r="4.8" fill="#68a052"/>
<circle cx="164.9" cy="223.1" r="4.8" fill="#68a052"/>
<circle cx="168.4" cy="224.2" r="4.8" fill="#68a052"/>
<circle cx="170.2" cy="226.9" r="4.8" fill="#68a052"/>
<circle cx="161.0" cy="224.0" r="2.8" fill="#8cb862" opacity=".7"/>
<circle cx="164.2" cy="221.8" r="2.8" fill="#8cb862" opacity=".7"/>
<circle cx="167.8" cy="222.8" r="2.8" fill="#8cb862" opacity=".7"/>
<ellipse cx="122" cy="230" rx="11.7" ry="10.3" fill="#305c38"/>
<circle cx="116.0" cy="227.2" r="5.2" fill="#508c4a"/>
<circle cx="118.0" cy="224.3" r="5.2" fill="#508c4a"/>
<circle cx="121.8" cy="223.1" r="5.2" fill="#508c4a"/>
<circle cx="125.6" cy="224.3" r="5.2" fill="#508c4a"/>
<circle cx="127.5" cy="227.2" r="5.2" fill="#508c4a"/>
<circle cx="117.5" cy="224.1" r="3.0" fill="#72a85a" opacity=".7"/>
<circle cx="121.0" cy="221.7" r="3.0" fill="#72a85a" opacity=".7"/>
<circle cx="124.9" cy="222.8" r="3.0" fill="#72a85a" opacity=".7"/>
<ellipse cx="174" cy="234" rx="13.3" ry="11.7" fill="#376839"/>
<circle cx="167.8" cy="231.5" r="6.0" fill="#5c984e"/>
<circle cx="170.0" cy="228.1" r="6.0" fill="#5c984e"/>
<circle cx="174.4" cy="226.7" r="6.0" fill="#5c984e"/>
<circle cx="178.7" cy="228.1" r="6.0" fill="#5c984e"/>
<circle cx="181.0" cy="231.5" r="6.0" fill="#5c984e"/>
<circle cx="169.5" cy="227.9" r="3.5" fill="#82b45e" opacity=".7"/>
<circle cx="173.4" cy="225.2" r="3.5" fill="#82b45e" opacity=".7"/>
<circle cx="177.9" cy="226.4" r="3.5" fill="#82b45e" opacity=".7"/>
<ellipse cx="250" cy="234" rx="11.2" ry="9.9" fill="#335f3a"/>
<circle cx="244.5" cy="231.8" r="5.0" fill="#4c8a4a"/>
<circle cx="246.4" cy="228.9" r="5.0" fill="#4c8a4a"/>
<circle cx="250.0" cy="227.8" r="5.0" fill="#4c8a4a"/>
<circle cx="253.7" cy="228.9" r="5.0" fill="#4c8a4a"/>
<circle cx="255.6" cy="231.8" r="5.0" fill="#4c8a4a"/>
<circle cx="245.9" cy="228.7" r="2.9" fill="#6ea458" opacity=".7"/>
<circle cx="249.2" cy="226.5" r="2.9" fill="#6ea458" opacity=".7"/>
<circle cx="253.0" cy="227.5" r="2.9" fill="#6ea458" opacity=".7"/>
<ellipse cx="93" cy="235" rx="11.2" ry="9.9" fill="#305c38"/>
<circle cx="87.1" cy="232.0" r="5.1" fill="#508c4a"/>
<circle cx="89.0" cy="229.2" r="5.1" fill="#508c4a"/>
<circle cx="92.6" cy="228.0" r="5.1" fill="#508c4a"/>
<circle cx="96.2" cy="229.2" r="5.1" fill="#508c4a"/>
<circle cx="98.1" cy="232.0" r="5.1" fill="#508c4a"/>
<circle cx="88.5" cy="229.0" r="2.9" fill="#72a85a" opacity=".7"/>
<circle cx="91.8" cy="226.7" r="2.9" fill="#72a85a" opacity=".7"/>
<circle cx="95.6" cy="227.7" r="2.9" fill="#72a85a" opacity=".7"/>
<ellipse cx="375" cy="235" rx="14.1" ry="12.4" fill="#2f5b38"/>
<circle cx="368.1" cy="231.9" r="6.3" fill="#3f7a42"/>
<circle cx="370.5" cy="228.4" r="6.3" fill="#3f7a42"/>
<circle cx="375.1" cy="227.0" r="6.3" fill="#3f7a42"/>
<circle cx="379.6" cy="228.4" r="6.3" fill="#3f7a42"/>
<circle cx="382.0" cy="231.9" r="6.3" fill="#3f7a42"/>
<circle cx="369.9" cy="228.2" r="3.7" fill="#5a924e" opacity=".7"/>
<circle cx="374.1" cy="225.4" r="3.7" fill="#5a924e" opacity=".7"/>
<circle cx="378.8" cy="226.7" r="3.7" fill="#5a924e" opacity=".7"/>
<ellipse cx="358" cy="235" rx="12.4" ry="10.9" fill="#305c38"/>
<circle cx="352.1" cy="232.5" r="5.6" fill="#508c4a"/>
<circle cx="354.2" cy="229.4" r="5.6" fill="#508c4a"/>
<circle cx="358.3" cy="228.1" r="5.6" fill="#508c4a"/>
<circle cx="362.3" cy="229.4" r="5.6" fill="#508c4a"/>
<circle cx="364.4" cy="232.5" r="5.6" fill="#508c4a"/>
<circle cx="353.7" cy="229.2" r="3.2" fill="#72a85a" opacity=".7"/>
<circle cx="357.4" cy="226.7" r="3.2" fill="#72a85a" opacity=".7"/>
<circle cx="361.5" cy="227.8" r="3.2" fill="#72a85a" opacity=".7"/>
<ellipse cx="142" cy="235" rx="11.1" ry="9.8" fill="#376839"/>
<circle cx="136.4" cy="232.7" r="5.0" fill="#5c984e"/>
<circle cx="138.3" cy="229.9" r="5.0" fill="#5c984e"/>
<circle cx="141.9" cy="228.8" r="5.0" fill="#5c984e"/>
<circle cx="145.5" cy="229.9" r="5.0" fill="#5c984e"/>
<circle cx="147.4" cy="232.7" r="5.0" fill="#5c984e"/>
<circle cx="137.8" cy="229.7" r="2.9" fill="#82b45e" opacity=".7"/>
<circle cx="141.1" cy="227.5" r="2.9" fill="#82b45e" opacity=".7"/>
<circle cx="144.8" cy="228.5" r="2.9" fill="#82b45e" opacity=".7"/>
<ellipse cx="80" cy="236" rx="13.6" ry="12.0" fill="#3c6c3c"/>
<circle cx="73.0" cy="232.9" r="6.1" fill="#68a052"/>
<circle cx="75.3" cy="229.4" r="6.1" fill="#68a052"/>
<circle cx="79.7" cy="228.1" r="6.1" fill="#68a052"/>
<circle cx="84.2" cy="229.4" r="6.1" fill="#68a052"/>
<circle cx="86.5" cy="232.9" r="6.1" fill="#68a052"/>
<circle cx="74.8" cy="229.3" r="3.5" fill="#8cb862" opacity=".7"/>
<circle cx="78.8" cy="226.6" r="3.5" fill="#8cb862" opacity=".7"/>
<circle cx="83.3" cy="227.8" r="3.5" fill="#8cb862" opacity=".7"/>
<ellipse cx="220" cy="236" rx="14.2" ry="12.5" fill="#305c38"/>
<circle cx="213.0" cy="233.1" r="6.4" fill="#508c4a"/>
<circle cx="215.4" cy="229.5" r="6.4" fill="#508c4a"/>
<circle cx="220.0" cy="228.1" r="6.4" fill="#508c4a"/>
<circle cx="224.7" cy="229.5" r="6.4" fill="#508c4a"/>
<circle cx="227.1" cy="233.1" r="6.4" fill="#508c4a"/>
<circle cx="214.9" cy="229.4" r="3.7" fill="#72a85a" opacity=".7"/>
<circle cx="219.0" cy="226.6" r="3.7" fill="#72a85a" opacity=".7"/>
<circle cx="223.8" cy="227.8" r="3.7" fill="#72a85a" opacity=".7"/>
<ellipse cx="202" cy="236" rx="14.3" ry="12.6" fill="#3c6c3c"/>
<circle cx="195.0" cy="233.3" r="6.4" fill="#68a052"/>
<circle cx="197.4" cy="229.7" r="6.4" fill="#68a052"/>
<circle cx="202.1" cy="228.3" r="6.4" fill="#68a052"/>
<circle cx="206.7" cy="229.7" r="6.4" fill="#68a052"/>
<circle cx="209.1" cy="233.3" r="6.4" fill="#68a052"/>
<circle cx="196.9" cy="229.6" r="3.7" fill="#8cb862" opacity=".7"/>
<circle cx="201.1" cy="226.7" r="3.7" fill="#8cb862" opacity=".7"/>
<circle cx="205.9" cy="228.0" r="3.7" fill="#8cb862" opacity=".7"/>
<ellipse cx="0" cy="236" rx="13.1" ry="11.5" fill="#305c38"/>
<circle cx="-6.1" cy="233.6" r="5.9" fill="#508c4a"/>
<circle cx="-3.9" cy="230.2" r="5.9" fill="#508c4a"/>
<circle cx="0.3" cy="228.9" r="5.9" fill="#508c4a"/>
<circle cx="4.6" cy="230.2" r="5.9" fill="#508c4a"/>
<circle cx="6.8" cy="233.6" r="5.9" fill="#508c4a"/>
<circle cx="-4.4" cy="230.1" r="3.4" fill="#72a85a" opacity=".7"/>
<circle cx="-0.6" cy="227.4" r="3.4" fill="#72a85a" opacity=".7"/>
<circle cx="3.8" cy="228.6" r="3.4" fill="#72a85a" opacity=".7"/>
<ellipse cx="342" cy="237" rx="12.1" ry="10.6" fill="#335f3a"/>
<circle cx="336.1" cy="234.1" r="5.4" fill="#4c8a4a"/>
<circle cx="338.1" cy="231.0" r="5.4" fill="#4c8a4a"/>
<circle cx="342.1" cy="229.8" r="5.4" fill="#4c8a4a"/>
<circle cx="346.0" cy="231.0" r="5.4" fill="#4c8a4a"/>
<circle cx="348.0" cy="234.1" r="5.4" fill="#4c8a4a"/>
<circle cx="337.6" cy="230.8" r="3.1" fill="#6ea458" opacity=".7"/>
<circle cx="341.2" cy="228.4" r="3.1" fill="#6ea458" opacity=".7"/>
<circle cx="345.3" cy="229.5" r="3.1" fill="#6ea458" opacity=".7"/>
<ellipse cx="64" cy="237" rx="10.2" ry="9.0" fill="#305c38"/>
<circle cx="58.5" cy="234.3" r="4.6" fill="#508c4a"/>
<circle cx="60.2" cy="231.8" r="4.6" fill="#508c4a"/>
<circle cx="63.5" cy="230.7" r="4.6" fill="#508c4a"/>
<circle cx="66.8" cy="231.8" r="4.6" fill="#508c4a"/>
<circle cx="68.6" cy="234.3" r="4.6" fill="#508c4a"/>
<circle cx="59.8" cy="231.5" r="2.7" fill="#72a85a" opacity=".7"/>
<circle cx="62.8" cy="229.5" r="2.7" fill="#72a85a" opacity=".7"/>
<circle cx="66.2" cy="230.4" r="2.7" fill="#72a85a" opacity=".7"/>
<ellipse cx="189" cy="237" rx="11.2" ry="9.9" fill="#376839"/>
<circle cx="183.3" cy="234.6" r="5.0" fill="#5c984e"/>
<circle cx="185.2" cy="231.8" r="5.0" fill="#5c984e"/>
<circle cx="188.8" cy="230.7" r="5.0" fill="#5c984e"/>
<circle cx="192.5" cy="231.8" r="5.0" fill="#5c984e"/>
<circle cx="194.4" cy="234.6" r="5.0" fill="#5c984e"/>
<circle cx="184.7" cy="231.6" r="2.9" fill="#82b45e" opacity=".7"/>
<circle cx="188.0" cy="229.4" r="2.9" fill="#82b45e" opacity=".7"/>
<circle cx="191.8" cy="230.4" r="2.9" fill="#82b45e" opacity=".7"/>
<ellipse cx="47" cy="239" rx="10.5" ry="9.2" fill="#3c6c3c"/>
<circle cx="41.5" cy="235.9" r="4.7" fill="#68a052"/>
<circle cx="43.3" cy="233.2" r="4.7" fill="#68a052"/>
<circle cx="46.7" cy="232.1" r="4.7" fill="#68a052"/>
<circle cx="50.1" cy="233.2" r="4.7" fill="#68a052"/>
<circle cx="51.9" cy="235.9" r="4.7" fill="#68a052"/>
<circle cx="42.9" cy="233.0" r="2.7" fill="#8cb862" opacity=".7"/>
<circle cx="46.0" cy="230.9" r="2.7" fill="#8cb862" opacity=".7"/>
<circle cx="49.5" cy="231.8" r="2.7" fill="#8cb862" opacity=".7"/>
<ellipse cx="19" cy="239" rx="12.7" ry="11.2" fill="#2f5b38"/>
<circle cx="13.1" cy="236.1" r="5.7" fill="#3f7a42"/>
<circle cx="15.3" cy="232.9" r="5.7" fill="#3f7a42"/>
<circle cx="19.4" cy="231.6" r="5.7" fill="#3f7a42"/>
<circle cx="23.5" cy="232.9" r="5.7" fill="#3f7a42"/>
<circle cx="25.7" cy="236.1" r="5.7" fill="#3f7a42"/>
<circle cx="14.8" cy="232.7" r="3.3" fill="#5a924e" opacity=".7"/>
<circle cx="18.5" cy="230.2" r="3.3" fill="#5a924e" opacity=".7"/>
<circle cx="22.8" cy="231.3" r="3.3" fill="#5a924e" opacity=".7"/>
<ellipse cx="111" cy="239" rx="13.9" ry="12.2" fill="#2f5b38"/>
<circle cx="104.4" cy="236.1" r="6.2" fill="#3f7a42"/>
<circle cx="106.8" cy="232.6" r="6.2" fill="#3f7a42"/>
<circle cx="111.3" cy="231.2" r="6.2" fill="#3f7a42"/>
<circle cx="115.8" cy="232.6" r="6.2" fill="#3f7a42"/>
<circle cx="118.1" cy="236.1" r="6.2" fill="#3f7a42"/>
<circle cx="106.2" cy="232.4" r="3.6" fill="#5a924e" opacity=".7"/>
<circle cx="110.3" cy="229.6" r="3.6" fill="#5a924e" opacity=".7"/>
<circle cx="114.9" cy="230.9" r="3.6" fill="#5a924e" opacity=".7"/>
<ellipse cx="157" cy="239" rx="10.7" ry="9.5" fill="#305c38"/>
<circle cx="151.6" cy="236.4" r="4.8" fill="#508c4a"/>
<circle cx="153.4" cy="233.7" r="4.8" fill="#508c4a"/>
<circle cx="156.9" cy="232.6" r="4.8" fill="#508c4a"/>
<circle cx="160.4" cy="233.7" r="4.8" fill="#508c4a"/>
<circle cx="162.2" cy="236.4" r="4.8" fill="#508c4a"/>
<circle cx="153.0" cy="233.4" r="2.8" fill="#72a85a" opacity=".7"/>
<circle cx="156.2" cy="231.3" r="2.8" fill="#72a85a" opacity=".7"/>
<circle cx="159.8" cy="232.2" r="2.8" fill="#72a85a" opacity=".7"/>
<ellipse cx="35" cy="239" rx="14.0" ry="12.3" fill="#376839"/>
<circle cx="28.2" cy="236.2" r="6.3" fill="#5c984e"/>
<circle cx="30.6" cy="232.7" r="6.3" fill="#5c984e"/>
<circle cx="35.1" cy="231.3" r="6.3" fill="#5c984e"/>
<circle cx="39.6" cy="232.7" r="6.3" fill="#5c984e"/>
<circle cx="42.0" cy="236.2" r="6.3" fill="#5c984e"/>
<circle cx="30.0" cy="232.5" r="3.6" fill="#82b45e" opacity=".7"/>
<circle cx="34.1" cy="229.7" r="3.6" fill="#82b45e" opacity=".7"/>
<circle cx="38.8" cy="231.0" r="3.6" fill="#82b45e" opacity=".7"/>
<ellipse cx="235" cy="239" rx="12.7" ry="11.2" fill="#335f3a"/>
<circle cx="229.1" cy="236.4" r="5.7" fill="#4c8a4a"/>
<circle cx="231.2" cy="233.2" r="5.7" fill="#4c8a4a"/>
<circle cx="235.3" cy="231.9" r="5.7" fill="#4c8a4a"/>
<circle cx="239.5" cy="233.2" r="5.7" fill="#4c8a4a"/>
<circle cx="241.6" cy="236.4" r="5.7" fill="#4c8a4a"/>
<circle cx="230.7" cy="233.0" r="3.3" fill="#6ea458" opacity=".7"/>
<circle cx="234.5" cy="230.5" r="3.3" fill="#6ea458" opacity=".7"/>
<circle cx="238.7" cy="231.6" r="3.3" fill="#6ea458" opacity=".7"/>
<ellipse cx="128" cy="239" rx="11.3" ry="9.9" fill="#3c6c3c"/>
<circle cx="122.1" cy="236.6" r="5.1" fill="#68a052"/>
<circle cx="124.0" cy="233.7" r="5.1" fill="#68a052"/>
<circle cx="127.7" cy="232.6" r="5.1" fill="#68a052"/>
<circle cx="131.3" cy="233.7" r="5.1" fill="#68a052"/>
<circle cx="133.2" cy="236.6" r="5.1" fill="#68a052"/>
<circle cx="123.6" cy="233.5" r="2.9" fill="#8cb862" opacity=".7"/>
<circle cx="126.9" cy="231.2" r="2.9" fill="#8cb862" opacity=".7"/>
<circle cx="130.7" cy="232.2" r="2.9" fill="#8cb862" opacity=".7"/>
<ellipse cx="191" cy="244" rx="14.3" ry="12.6" fill="#3c6c3c"/>
<circle cx="184.2" cy="240.9" r="6.4" fill="#68a052"/>
<circle cx="186.6" cy="237.3" r="6.4" fill="#68a052"/>
<circle cx="191.2" cy="235.8" r="6.4" fill="#68a052"/>
<circle cx="195.9" cy="237.3" r="6.4" fill="#68a052"/>
<circle cx="198.3" cy="240.9" r="6.4" fill="#68a052"/>
<circle cx="186.0" cy="237.1" r="3.7" fill="#8cb862" opacity=".7"/>
<circle cx="190.2" cy="234.3" r="3.7" fill="#8cb862" opacity=".7"/>
<circle cx="195.0" cy="235.6" r="3.7" fill="#8cb862" opacity=".7"/>
<ellipse cx="126" cy="244" rx="13.5" ry="11.9" fill="#2f5b38"/>
<circle cx="119.7" cy="241.3" r="6.1" fill="#3f7a42"/>
<circle cx="122.0" cy="237.9" r="6.1" fill="#3f7a42"/>
<circle cx="126.4" cy="236.5" r="6.1" fill="#3f7a42"/>
<circle cx="130.8" cy="237.9" r="6.1" fill="#3f7a42"/>
<circle cx="133.1" cy="241.3" r="6.1" fill="#3f7a42"/>
<circle cx="121.5" cy="237.7" r="3.5" fill="#5a924e" opacity=".7"/>
<circle cx="125.4" cy="235.0" r="3.5" fill="#5a924e" opacity=".7"/>
<circle cx="130.0" cy="236.2" r="3.5" fill="#5a924e" opacity=".7"/>
<ellipse cx="267" cy="244" rx="11.3" ry="9.9" fill="#2f5b38"/>
<circle cx="261.6" cy="241.7" r="5.1" fill="#3f7a42"/>
<circle cx="263.6" cy="238.8" r="5.1" fill="#3f7a42"/>
<circle cx="267.2" cy="237.7" r="5.1" fill="#3f7a42"/>
<circle cx="270.9" cy="238.8" r="5.1" fill="#3f7a42"/>
<circle cx="272.8" cy="241.7" r="5.1" fill="#3f7a42"/>
<circle cx="263.1" cy="238.6" r="2.9" fill="#5a924e" opacity=".7"/>
<circle cx="266.4" cy="236.3" r="2.9" fill="#5a924e" opacity=".7"/>
<circle cx="270.2" cy="237.4" r="2.9" fill="#5a924e" opacity=".7"/>
<ellipse cx="253" cy="245" rx="12.2" ry="10.7" fill="#305c38"/>
<circle cx="247.2" cy="241.8" r="5.5" fill="#508c4a"/>
<circle cx="249.2" cy="238.7" r="5.5" fill="#508c4a"/>
<circle cx="253.2" cy="237.5" r="5.5" fill="#508c4a"/>
<circle cx="257.1" cy="238.7" r="5.5" fill="#508c4a"/>
<circle cx="259.2" cy="241.8" r="5.5" fill="#508c4a"/>
<circle cx="248.7" cy="238.5" r="3.2" fill="#72a85a" opacity=".7"/>
<circle cx="252.3" cy="236.1" r="3.2" fill="#72a85a" opacity=".7"/>
<circle cx="256.4" cy="237.2" r="3.2" fill="#72a85a" opacity=".7"/>
<ellipse cx="289" cy="245" rx="12.8" ry="11.3" fill="#376839"/>
<circle cx="282.3" cy="241.9" r="5.8" fill="#5c984e"/>
<circle cx="284.4" cy="238.7" r="5.8" fill="#5c984e"/>
<circle cx="288.6" cy="237.4" r="5.8" fill="#5c984e"/>
<circle cx="292.7" cy="238.7" r="5.8" fill="#5c984e"/>
<circle cx="294.9" cy="241.9" r="5.8" fill="#5c984e"/>
<circle cx="283.9" cy="238.5" r="3.3" fill="#82b45e" opacity=".7"/>
<circle cx="287.7" cy="236.0" r="3.3" fill="#82b45e" opacity=".7"/>
<circle cx="292.0" cy="237.1" r="3.3" fill="#82b45e" opacity=".7"/>
<ellipse cx="16" cy="245" rx="14.1" ry="12.4" fill="#376839"/>
<circle cx="9.5" cy="241.9" r="6.4" fill="#5c984e"/>
<circle cx="11.9" cy="238.3" r="6.4" fill="#5c984e"/>
<circle cx="16.5" cy="236.9" r="6.4" fill="#5c984e"/>
<circle cx="21.1" cy="238.3" r="6.4" fill="#5c984e"/>
<circle cx="23.5" cy="241.9" r="6.4" fill="#5c984e"/>
<circle cx="11.3" cy="238.1" r="3.7" fill="#82b45e" opacity=".7"/>
<circle cx="15.5" cy="235.3" r="3.7" fill="#82b45e" opacity=".7"/>
<circle cx="20.2" cy="236.6" r="3.7" fill="#82b45e" opacity=".7"/>
<ellipse cx="111" cy="245" rx="11.7" ry="10.3" fill="#305c38"/>
<circle cx="104.8" cy="242.1" r="5.3" fill="#508c4a"/>
<circle cx="106.8" cy="239.1" r="5.3" fill="#508c4a"/>
<circle cx="110.6" cy="237.9" r="5.3" fill="#508c4a"/>
<circle cx="114.4" cy="239.1" r="5.3" fill="#508c4a"/>
<circle cx="116.4" cy="242.1" r="5.3" fill="#508c4a"/>
<circle cx="106.3" cy="238.9" r="3.0" fill="#72a85a" opacity=".7"/>
<circle cx="109.7" cy="236.6" r="3.0" fill="#72a85a" opacity=".7"/>
<circle cx="113.7" cy="237.6" r="3.0" fill="#72a85a" opacity=".7"/>
<ellipse cx="95" cy="245" rx="11.1" ry="9.7" fill="#335f3a"/>
<circle cx="89.4" cy="242.2" r="5.0" fill="#4c8a4a"/>
<circle cx="91.3" cy="239.4" r="5.0" fill="#4c8a4a"/>
<circle cx="94.8" cy="238.3" r="5.0" fill="#4c8a4a"/>
<circle cx="98.4" cy="239.4" r="5.0" fill="#4c8a4a"/>
<circle cx="100.3" cy="242.2" r="5.0" fill="#4c8a4a"/>
<circle cx="90.8" cy="239.2" r="2.9" fill="#6ea458" opacity=".7"/>
<circle cx="94.1" cy="236.9" r="2.9" fill="#6ea458" opacity=".7"/>
<circle cx="97.8" cy="237.9" r="2.9" fill="#6ea458" opacity=".7"/>
<ellipse cx="79" cy="245" rx="11.3" ry="9.9" fill="#305c38"/>
<circle cx="73.7" cy="242.3" r="5.1" fill="#508c4a"/>
<circle cx="75.6" cy="239.4" r="5.1" fill="#508c4a"/>
<circle cx="79.2" cy="238.3" r="5.1" fill="#508c4a"/>
<circle cx="82.9" cy="239.4" r="5.1" fill="#508c4a"/>
<circle cx="84.8" cy="242.3" r="5.1" fill="#508c4a"/>
<circle cx="75.1" cy="239.2" r="2.9" fill="#72a85a" opacity=".7"/>
<circle cx="78.4" cy="236.9" r="2.9" fill="#72a85a" opacity=".7"/>
<circle cx="82.2" cy="238.0" r="2.9" fill="#72a85a" opacity=".7"/>
<ellipse cx="48" cy="245" rx="14.1" ry="12.4" fill="#335f3a"/>
<circle cx="41.1" cy="242.3" r="6.3" fill="#4c8a4a"/>
<circle cx="43.5" cy="238.7" r="6.3" fill="#4c8a4a"/>
<circle cx="48.1" cy="237.3" r="6.3" fill="#4c8a4a"/>
<circle cx="52.6" cy="238.7" r="6.3" fill="#4c8a4a"/>
<circle cx="55.0" cy="242.3" r="6.3" fill="#4c8a4a"/>
<circle cx="42.9" cy="238.6" r="3.7" fill="#6ea458" opacity=".7"/>
<circle cx="47.1" cy="235.7" r="3.7" fill="#6ea458" opacity=".7"/>
<circle cx="51.8" cy="237.0" r="3.7" fill="#6ea458" opacity=".7"/>
<ellipse cx="430" cy="246" rx="11.7" ry="10.3" fill="#376839"/>
<circle cx="424.3" cy="242.8" r="5.3" fill="#5c984e"/>
<circle cx="426.3" cy="239.8" r="5.3" fill="#5c984e"/>
<circle cx="430.1" cy="238.6" r="5.3" fill="#5c984e"/>
<circle cx="433.9" cy="239.8" r="5.3" fill="#5c984e"/>
<circle cx="435.9" cy="242.8" r="5.3" fill="#5c984e"/>
<circle cx="425.8" cy="239.6" r="3.0" fill="#82b45e" opacity=".7"/>
<circle cx="429.3" cy="237.3" r="3.0" fill="#82b45e" opacity=".7"/>
<circle cx="433.2" cy="238.3" r="3.0" fill="#82b45e" opacity=".7"/>
<ellipse cx="157" cy="246" rx="13.5" ry="11.9" fill="#376839"/>
<circle cx="150.3" cy="242.7" r="6.1" fill="#5c984e"/>
<circle cx="152.6" cy="239.3" r="6.1" fill="#5c984e"/>
<circle cx="157.0" cy="237.9" r="6.1" fill="#5c984e"/>
<circle cx="161.4" cy="239.3" r="6.1" fill="#5c984e"/>
<circle cx="163.7" cy="242.7" r="6.1" fill="#5c984e"/>
<circle cx="152.1" cy="239.1" r="3.5" fill="#82b45e" opacity=".7"/>
<circle cx="156.0" cy="236.4" r="3.5" fill="#82b45e" opacity=".7"/>
<circle cx="160.6" cy="237.6" r="3.5" fill="#82b45e" opacity=".7"/>
<ellipse cx="30" cy="246" rx="12.6" ry="11.1" fill="#335f3a"/>
<circle cx="23.3" cy="243.2" r="5.7" fill="#4c8a4a"/>
<circle cx="25.4" cy="240.0" r="5.7" fill="#4c8a4a"/>
<circle cx="29.5" cy="238.7" r="5.7" fill="#4c8a4a"/>
<circle cx="33.6" cy="240.0" r="5.7" fill="#4c8a4a"/>
<circle cx="35.8" cy="243.2" r="5.7" fill="#4c8a4a"/>
<circle cx="25.0" cy="239.8" r="3.3" fill="#6ea458" opacity=".7"/>
<circle cx="28.7" cy="237.3" r="3.3" fill="#6ea458" opacity=".7"/>
<circle cx="32.9" cy="238.4" r="3.3" fill="#6ea458" opacity=".7"/>
<ellipse cx="142" cy="247" rx="10.5" ry="9.2" fill="#2f5b38"/>
<circle cx="136.8" cy="244.0" r="4.7" fill="#3f7a42"/>
<circle cx="138.6" cy="241.3" r="4.7" fill="#3f7a42"/>
<circle cx="142.0" cy="240.2" r="4.7" fill="#3f7a42"/>
<circle cx="145.4" cy="241.3" r="4.7" fill="#3f7a42"/>
<circle cx="147.1" cy="244.0" r="4.7" fill="#3f7a42"/>
<circle cx="138.1" cy="241.1" r="2.7" fill="#5a924e" opacity=".7"/>
<circle cx="141.2" cy="239.0" r="2.7" fill="#5a924e" opacity=".7"/>
<circle cx="144.7" cy="239.9" r="2.7" fill="#5a924e" opacity=".7"/>
<ellipse cx="300" cy="247" rx="10.4" ry="9.2" fill="#376839"/>
<circle cx="294.8" cy="244.4" r="4.7" fill="#5c984e"/>
<circle cx="296.5" cy="241.8" r="4.7" fill="#5c984e"/>
<circle cx="299.9" cy="240.7" r="4.7" fill="#5c984e"/>
<circle cx="303.3" cy="241.8" r="4.7" fill="#5c984e"/>
<circle cx="305.0" cy="244.4" r="4.7" fill="#5c984e"/>
<circle cx="296.1" cy="241.6" r="2.7" fill="#82b45e" opacity=".7"/>
<circle cx="299.2" cy="239.5" r="2.7" fill="#82b45e" opacity=".7"/>
<circle cx="302.7" cy="240.4" r="2.7" fill="#82b45e" opacity=".7"/>
<ellipse cx="1" cy="247" rx="11.8" ry="10.4" fill="#376839"/>
<circle cx="-4.7" cy="244.6" r="5.3" fill="#5c984e"/>
<circle cx="-2.7" cy="241.6" r="5.3" fill="#5c984e"/>
<circle cx="1.1" cy="240.4" r="5.3" fill="#5c984e"/>
<circle cx="4.9" cy="241.6" r="5.3" fill="#5c984e"/>
<circle cx="6.9" cy="244.6" r="5.3" fill="#5c984e"/>
<circle cx="-3.2" cy="241.4" r="3.1" fill="#82b45e" opacity=".7"/>
<circle cx="0.3" cy="239.1" r="3.1" fill="#82b45e" opacity=".7"/>
<circle cx="4.2" cy="240.1" r="3.1" fill="#82b45e" opacity=".7"/>
<ellipse cx="66" cy="248" rx="13.4" ry="11.8" fill="#3c6c3c"/>
<circle cx="59.1" cy="244.7" r="6.0" fill="#68a052"/>
<circle cx="61.3" cy="241.3" r="6.0" fill="#68a052"/>
<circle cx="65.7" cy="239.9" r="6.0" fill="#68a052"/>
<circle cx="70.0" cy="241.3" r="6.0" fill="#68a052"/>
<circle cx="72.3" cy="244.7" r="6.0" fill="#68a052"/>
<circle cx="60.8" cy="241.1" r="3.5" fill="#8cb862" opacity=".7"/>
<circle cx="64.7" cy="238.5" r="3.5" fill="#8cb862" opacity=".7"/>
<circle cx="69.2" cy="239.7" r="3.5" fill="#8cb862" opacity=".7"/>
<ellipse cx="100" cy="254" rx="12.2" ry="10.8" fill="#3c6c3c"/>
<circle cx="93.7" cy="251.3" r="5.5" fill="#68a052"/>
<circle cx="95.8" cy="248.2" r="5.5" fill="#68a052"/>
<circle cx="99.8" cy="247.0" r="5.5" fill="#68a052"/>
<circle cx="103.8" cy="248.2" r="5.5" fill="#68a052"/>
<circle cx="105.8" cy="251.3" r="5.5" fill="#68a052"/>
<circle cx="95.3" cy="248.0" r="3.2" fill="#8cb862" opacity=".7"/>
<circle cx="98.9" cy="245.5" r="3.2" fill="#8cb862" opacity=".7"/>
<circle cx="103.0" cy="246.6" r="3.2" fill="#8cb862" opacity=".7"/>
<ellipse cx="292" cy="255" rx="11.0" ry="9.6" fill="#3c6c3c"/>
<circle cx="286.5" cy="251.8" r="4.9" fill="#68a052"/>
<circle cx="288.4" cy="249.0" r="4.9" fill="#68a052"/>
<circle cx="291.9" cy="247.9" r="4.9" fill="#68a052"/>
<circle cx="295.5" cy="249.0" r="4.9" fill="#68a052"/>
<circle cx="297.3" cy="251.8" r="4.9" fill="#68a052"/>
<circle cx="287.9" cy="248.8" r="2.8" fill="#8cb862" opacity=".7"/>
<circle cx="291.1" cy="246.6" r="2.8" fill="#8cb862" opacity=".7"/>
<circle cx="294.8" cy="247.6" r="2.8" fill="#8cb862" opacity=".7"/>
<ellipse cx="130" cy="255" rx="12.7" ry="11.2" fill="#376839"/>
<circle cx="123.4" cy="251.8" r="5.7" fill="#5c984e"/>
<circle cx="125.6" cy="248.6" r="5.7" fill="#5c984e"/>
<circle cx="129.7" cy="247.3" r="5.7" fill="#5c984e"/>
<circle cx="133.9" cy="248.6" r="5.7" fill="#5c984e"/>
<circle cx="136.0" cy="251.8" r="5.7" fill="#5c984e"/>
<circle cx="125.1" cy="248.4" r="3.3" fill="#82b45e" opacity=".7"/>
<circle cx="128.8" cy="245.9" r="3.3" fill="#82b45e" opacity=".7"/>
<circle cx="133.1" cy="247.0" r="3.3" fill="#82b45e" opacity=".7"/>
<ellipse cx="31" cy="255" rx="13.9" ry="12.3" fill="#376839"/>
<circle cx="24.6" cy="252.1" r="6.3" fill="#5c984e"/>
<circle cx="26.9" cy="248.6" r="6.3" fill="#5c984e"/>
<circle cx="31.4" cy="247.2" r="6.3" fill="#5c984e"/>
<circle cx="36.0" cy="248.6" r="6.3" fill="#5c984e"/>
<circle cx="38.3" cy="252.1" r="6.3" fill="#5c984e"/>
<circle cx="26.4" cy="248.4" r="3.6" fill="#82b45e" opacity=".7"/>
<circle cx="30.5" cy="245.6" r="3.6" fill="#82b45e" opacity=".7"/>
<circle cx="35.1" cy="246.9" r="3.6" fill="#82b45e" opacity=".7"/>
<ellipse cx="423" cy="255" rx="11.6" ry="10.2" fill="#376839"/>
<circle cx="417.0" cy="252.3" r="5.2" fill="#5c984e"/>
<circle cx="419.0" cy="249.3" r="5.2" fill="#5c984e"/>
<circle cx="422.8" cy="248.1" r="5.2" fill="#5c984e"/>
<circle cx="426.6" cy="249.3" r="5.2" fill="#5c984e"/>
<circle cx="428.5" cy="252.3" r="5.2" fill="#5c984e"/>
<circle cx="418.5" cy="249.1" r="3.0" fill="#82b45e" opacity=".7"/>
<circle cx="422.0" cy="246.8" r="3.0" fill="#82b45e" opacity=".7"/>
<circle cx="425.9" cy="247.8" r="3.0" fill="#82b45e" opacity=".7"/>
<ellipse cx="79" cy="255" rx="14.4" ry="12.7" fill="#376839"/>
<circle cx="71.4" cy="252.4" r="6.5" fill="#5c984e"/>
<circle cx="73.9" cy="248.7" r="6.5" fill="#5c984e"/>
<circle cx="78.5" cy="247.3" r="6.5" fill="#5c984e"/>
<circle cx="83.2" cy="248.7" r="6.5" fill="#5c984e"/>
<circle cx="85.7" cy="252.4" r="6.5" fill="#5c984e"/>
<circle cx="73.3" cy="248.6" r="3.7" fill="#82b45e" opacity=".7"/>
<circle cx="77.5" cy="245.7" r="3.7" fill="#82b45e" opacity=".7"/>
<circle cx="82.3" cy="247.0" r="3.7" fill="#82b45e" opacity=".7"/>
<ellipse cx="13" cy="256" rx="11.1" ry="9.8" fill="#3c6c3c"/>
<circle cx="7.9" cy="253.0" r="5.0" fill="#68a052"/>
<circle cx="9.8" cy="250.2" r="5.0" fill="#68a052"/>
<circle cx="13.4" cy="249.1" r="5.0" fill="#68a052"/>
<circle cx="17.1" cy="250.2" r="5.0" fill="#68a052"/>
<circle cx="18.9" cy="253.0" r="5.0" fill="#68a052"/>
<circle cx="9.4" cy="250.0" r="2.9" fill="#8cb862" opacity=".7"/>
<circle cx="12.7" cy="247.8" r="2.9" fill="#8cb862" opacity=".7"/>
<circle cx="16.4" cy="248.8" r="2.9" fill="#8cb862" opacity=".7"/>
<ellipse cx="67" cy="256" rx="15.1" ry="13.3" fill="#2f5b38"/>
<circle cx="59.2" cy="253.4" r="6.8" fill="#3f7a42"/>
<circle cx="61.7" cy="249.6" r="6.8" fill="#3f7a42"/>
<circle cx="66.6" cy="248.1" r="6.8" fill="#3f7a42"/>
<circle cx="71.5" cy="249.6" r="6.8" fill="#3f7a42"/>
<circle cx="74.1" cy="253.4" r="6.8" fill="#3f7a42"/>
<circle cx="61.2" cy="249.5" r="3.9" fill="#5a924e" opacity=".7"/>
<circle cx="65.6" cy="246.5" r="3.9" fill="#5a924e" opacity=".7"/>
<circle cx="70.6" cy="247.8" r="3.9" fill="#5a924e" opacity=".7"/>
<ellipse cx="115" cy="257" rx="15.0" ry="13.2" fill="#376839"/>
<circle cx="107.7" cy="253.5" r="6.7" fill="#5c984e"/>
<circle cx="110.3" cy="249.7" r="6.7" fill="#5c984e"/>
<circle cx="115.1" cy="248.2" r="6.7" fill="#5c984e"/>
<circle cx="120.0" cy="249.7" r="6.7" fill="#5c984e"/>
<circle cx="122.5" cy="253.5" r="6.7" fill="#5c984e"/>
<circle cx="109.7" cy="249.6" r="3.9" fill="#82b45e" opacity=".7"/>
<circle cx="114.1" cy="246.6" r="3.9" fill="#82b45e" opacity=".7"/>
<circle cx="119.1" cy="248.0" r="3.9" fill="#82b45e" opacity=".7"/>
<ellipse cx="48" cy="257" rx="14.9" ry="13.1" fill="#305c38"/>
<circle cx="40.5" cy="254.2" r="6.7" fill="#508c4a"/>
<circle cx="43.0" cy="250.4" r="6.7" fill="#508c4a"/>
<circle cx="47.8" cy="248.9" r="6.7" fill="#508c4a"/>
<circle cx="52.7" cy="250.4" r="6.7" fill="#508c4a"/>
<circle cx="55.2" cy="254.2" r="6.7" fill="#508c4a"/>
<circle cx="42.4" cy="250.3" r="3.9" fill="#72a85a" opacity=".7"/>
<circle cx="46.8" cy="247.3" r="3.9" fill="#72a85a" opacity=".7"/>
<circle cx="51.8" cy="248.6" r="3.9" fill="#72a85a" opacity=".7"/>
<ellipse cx="280" cy="258" rx="13.0" ry="11.5" fill="#2f5b38"/>
<circle cx="274.0" cy="254.8" r="5.9" fill="#3f7a42"/>
<circle cx="276.2" cy="251.5" r="5.9" fill="#3f7a42"/>
<circle cx="280.4" cy="250.2" r="5.9" fill="#3f7a42"/>
<circle cx="284.7" cy="251.5" r="5.9" fill="#3f7a42"/>
<circle cx="286.9" cy="254.8" r="5.9" fill="#3f7a42"/>
<circle cx="275.7" cy="251.3" r="3.4" fill="#5a924e" opacity=".7"/>
<circle cx="279.5" cy="248.7" r="3.4" fill="#5a924e" opacity=".7"/>
<circle cx="283.9" cy="249.9" r="3.4" fill="#5a924e" opacity=".7"/>
<ellipse cx="-2" cy="258" rx="10.9" ry="9.6" fill="#376839"/>
<circle cx="-7.9" cy="255.0" r="4.9" fill="#5c984e"/>
<circle cx="-6.0" cy="252.3" r="4.9" fill="#5c984e"/>
<circle cx="-2.5" cy="251.2" r="4.9" fill="#5c984e"/>
<circle cx="1.1" cy="252.3" r="4.9" fill="#5c984e"/>
<circle cx="2.9" cy="255.0" r="4.9" fill="#5c984e"/>
<circle cx="-6.5" cy="252.0" r="2.8" fill="#82b45e" opacity=".7"/>
<circle cx="-3.2" cy="249.9" r="2.8" fill="#82b45e" opacity=".7"/>
<circle cx="0.4" cy="250.8" r="2.8" fill="#82b45e" opacity=".7"/>
<ellipse cx="149" cy="258" rx="10.8" ry="9.5" fill="#2f5b38"/>
<circle cx="144.1" cy="255.1" r="4.8" fill="#3f7a42"/>
<circle cx="145.9" cy="252.4" r="4.8" fill="#3f7a42"/>
<circle cx="149.4" cy="251.3" r="4.8" fill="#3f7a42"/>
<circle cx="152.9" cy="252.4" r="4.8" fill="#3f7a42"/>
<circle cx="154.7" cy="255.1" r="4.8" fill="#3f7a42"/>
<circle cx="145.5" cy="252.2" r="2.8" fill="#5a924e" opacity=".7"/>
<circle cx="148.7" cy="250.0" r="2.8" fill="#5a924e" opacity=".7"/>
<circle cx="152.3" cy="251.0" r="2.8" fill="#5a924e" opacity=".7"/>
<ellipse cx="54" cy="264" rx="11.5" ry="10.1" fill="#335f3a"/>
<circle cx="48.2" cy="261.1" r="5.2" fill="#4c8a4a"/>
<circle cx="50.1" cy="258.2" r="5.2" fill="#4c8a4a"/>
<circle cx="53.8" cy="257.0" r="5.2" fill="#4c8a4a"/>
<circle cx="57.6" cy="258.2" r="5.2" fill="#4c8a4a"/>
<circle cx="59.5" cy="261.1" r="5.2" fill="#4c8a4a"/>
<circle cx="49.7" cy="257.9" r="3.0" fill="#6ea458" opacity=".7"/>
<circle cx="53.0" cy="255.6" r="3.0" fill="#6ea458" opacity=".7"/>
<circle cx="56.9" cy="256.7" r="3.0" fill="#6ea458" opacity=".7"/>
<ellipse cx="120" cy="264" rx="12.8" ry="11.2" fill="#3c6c3c"/>
<circle cx="113.9" cy="261.2" r="5.7" fill="#68a052"/>
<circle cx="116.0" cy="257.9" r="5.7" fill="#68a052"/>
<circle cx="120.2" cy="256.7" r="5.7" fill="#68a052"/>
<circle cx="124.3" cy="257.9" r="5.7" fill="#68a052"/>
<circle cx="126.5" cy="261.2" r="5.7" fill="#68a052"/>
<circle cx="115.5" cy="257.8" r="3.3" fill="#8cb862" opacity=".7"/>
<circle cx="119.3" cy="255.2" r="3.3" fill="#8cb862" opacity=".7"/>
<circle cx="123.6" cy="256.4" r="3.3" fill="#8cb862" opacity=".7"/>
<ellipse cx="169" cy="264" rx="12.7" ry="11.2" fill="#335f3a"/>
<circle cx="162.6" cy="261.4" r="5.7" fill="#4c8a4a"/>
<circle cx="164.8" cy="258.1" r="5.7" fill="#4c8a4a"/>
<circle cx="168.9" cy="256.9" r="5.7" fill="#4c8a4a"/>
<circle cx="173.0" cy="258.1" r="5.7" fill="#4c8a4a"/>
<circle cx="175.2" cy="261.4" r="5.7" fill="#4c8a4a"/>
<circle cx="164.3" cy="258.0" r="3.3" fill="#6ea458" opacity=".7"/>
<circle cx="168.0" cy="255.4" r="3.3" fill="#6ea458" opacity=".7"/>
<circle cx="172.3" cy="256.6" r="3.3" fill="#6ea458" opacity=".7"/>
<ellipse cx="69" cy="264" rx="12.1" ry="10.7" fill="#335f3a"/>
<circle cx="63.1" cy="261.6" r="5.5" fill="#4c8a4a"/>
<circle cx="65.2" cy="258.5" r="5.5" fill="#4c8a4a"/>
<circle cx="69.1" cy="257.3" r="5.5" fill="#4c8a4a"/>
<circle cx="73.1" cy="258.5" r="5.5" fill="#4c8a4a"/>
<circle cx="75.1" cy="261.6" r="5.5" fill="#4c8a4a"/>
<circle cx="64.7" cy="258.3" r="3.1" fill="#6ea458" opacity=".7"/>
<circle cx="68.3" cy="255.9" r="3.1" fill="#6ea458" opacity=".7"/>
<circle cx="72.3" cy="257.0" r="3.1" fill="#6ea458" opacity=".7"/>
<ellipse cx="-0" cy="265" rx="15.5" ry="13.6" fill="#305c38"/>
<circle cx="-7.7" cy="261.5" r="7.0" fill="#508c4a"/>
<circle cx="-5.1" cy="257.6" r="7.0" fill="#508c4a"/>
<circle cx="-0.0" cy="256.1" r="7.0" fill="#508c4a"/>
<circle cx="5.0" cy="257.6" r="7.0" fill="#508c4a"/>
<circle cx="7.6" cy="261.5" r="7.0" fill="#508c4a"/>
<circle cx="-5.7" cy="257.5" r="4.0" fill="#72a85a" opacity=".7"/>
<circle cx="-1.1" cy="254.4" r="4.0" fill="#72a85a" opacity=".7"/>
<circle cx="4.0" cy="255.8" r="4.0" fill="#72a85a" opacity=".7"/>
<ellipse cx="139" cy="265" rx="13.7" ry="12.0" fill="#335f3a"/>
<circle cx="132.1" cy="261.7" r="6.2" fill="#4c8a4a"/>
<circle cx="134.4" cy="258.2" r="6.2" fill="#4c8a4a"/>
<circle cx="138.8" cy="256.9" r="6.2" fill="#4c8a4a"/>
<circle cx="143.3" cy="258.2" r="6.2" fill="#4c8a4a"/>
<circle cx="145.6" cy="261.7" r="6.2" fill="#4c8a4a"/>
<circle cx="133.9" cy="258.1" r="3.6" fill="#6ea458" opacity=".7"/>
<circle cx="137.9" cy="255.3" r="3.6" fill="#6ea458" opacity=".7"/>
<circle cx="142.5" cy="256.6" r="3.6" fill="#6ea458" opacity=".7"/>
<ellipse cx="187" cy="265" rx="12.3" ry="10.9" fill="#305c38"/>
<circle cx="180.9" cy="262.4" r="5.6" fill="#508c4a"/>
<circle cx="183.0" cy="259.3" r="5.6" fill="#508c4a"/>
<circle cx="187.0" cy="258.0" r="5.6" fill="#508c4a"/>
<circle cx="191.0" cy="259.3" r="5.6" fill="#508c4a"/>
<circle cx="193.1" cy="262.4" r="5.6" fill="#508c4a"/>
<circle cx="182.5" cy="259.1" r="3.2" fill="#72a85a" opacity=".7"/>
<circle cx="186.2" cy="256.6" r="3.2" fill="#72a85a" opacity=".7"/>
<circle cx="190.3" cy="257.7" r="3.2" fill="#72a85a" opacity=".7"/>
<ellipse cx="422" cy="265" rx="13.9" ry="12.2" fill="#376839"/>
<circle cx="415.5" cy="262.4" r="6.3" fill="#5c984e"/>
<circle cx="417.9" cy="258.8" r="6.3" fill="#5c984e"/>
<circle cx="422.4" cy="257.4" r="6.3" fill="#5c984e"/>
<circle cx="426.9" cy="258.8" r="6.3" fill="#5c984e"/>
<circle cx="429.3" cy="262.4" r="6.3" fill="#5c984e"/>
<circle cx="417.3" cy="258.7" r="3.6" fill="#82b45e" opacity=".7"/>
<circle cx="421.4" cy="255.9" r="3.6" fill="#82b45e" opacity=".7"/>
<circle cx="426.1" cy="257.2" r="3.6" fill="#82b45e" opacity=".7"/>
<ellipse cx="153" cy="267" rx="11.6" ry="10.2" fill="#335f3a"/>
<circle cx="147.7" cy="264.3" r="5.2" fill="#4c8a4a"/>
<circle cx="149.6" cy="261.3" r="5.2" fill="#4c8a4a"/>
<circle cx="153.4" cy="260.2" r="5.2" fill="#4c8a4a"/>
<circle cx="157.2" cy="261.3" r="5.2" fill="#4c8a4a"/>
<circle cx="159.1" cy="264.3" r="5.2" fill="#4c8a4a"/>
<circle cx="149.2" cy="261.1" r="3.0" fill="#6ea458" opacity=".7"/>
<circle cx="152.6" cy="258.8" r="3.0" fill="#6ea458" opacity=".7"/>
<circle cx="156.5" cy="259.8" r="3.0" fill="#6ea458" opacity=".7"/>
<ellipse cx="254" cy="267" rx="12.0" ry="10.5" fill="#3c6c3c"/>
<circle cx="248.4" cy="264.6" r="5.4" fill="#68a052"/>
<circle cx="250.4" cy="261.5" r="5.4" fill="#68a052"/>
<circle cx="254.3" cy="260.3" r="5.4" fill="#68a052"/>
<circle cx="258.2" cy="261.5" r="5.4" fill="#68a052"/>
<circle cx="260.2" cy="264.6" r="5.4" fill="#68a052"/>
<circle cx="249.9" cy="261.3" r="3.1" fill="#8cb862" opacity=".7"/>
<circle cx="253.4" cy="258.9" r="3.1" fill="#8cb862" opacity=".7"/>
<circle cx="257.5" cy="260.0" r="3.1" fill="#8cb862" opacity=".7"/>
<ellipse cx="221" cy="268" rx="15.5" ry="13.6" fill="#335f3a"/>
<circle cx="213.1" cy="264.7" r="7.0" fill="#4c8a4a"/>
<circle cx="215.7" cy="260.8" r="7.0" fill="#4c8a4a"/>
<circle cx="220.8" cy="259.2" r="7.0" fill="#4c8a4a"/>
<circle cx="225.8" cy="260.8" r="7.0" fill="#4c8a4a"/>
<circle cx="228.4" cy="264.7" r="7.0" fill="#4c8a4a"/>
<circle cx="215.1" cy="260.7" r="4.0" fill="#6ea458" opacity=".7"/>
<circle cx="219.7" cy="257.6" r="4.0" fill="#6ea458" opacity=".7"/>
<circle cx="224.9" cy="258.9" r="4.0" fill="#6ea458" opacity=".7"/>
<ellipse cx="286" cy="268" rx="15.7" ry="13.8" fill="#2f5b38"/>
<circle cx="278.4" cy="264.9" r="7.1" fill="#3f7a42"/>
<circle cx="281.0" cy="260.9" r="7.1" fill="#3f7a42"/>
<circle cx="286.1" cy="259.3" r="7.1" fill="#3f7a42"/>
<circle cx="291.2" cy="260.9" r="7.1" fill="#3f7a42"/>
<circle cx="293.8" cy="264.9" r="7.1" fill="#3f7a42"/>
<circle cx="280.4" cy="260.8" r="4.1" fill="#5a924e" opacity=".7"/>
<circle cx="285.0" cy="257.7" r="4.1" fill="#5a924e" opacity=".7"/>
<circle cx="290.2" cy="259.1" r="4.1" fill="#5a924e" opacity=".7"/>
<ellipse cx="85" cy="268" rx="15.5" ry="13.6" fill="#2f5b38"/>
<circle cx="77.4" cy="264.9" r="7.0" fill="#3f7a42"/>
<circle cx="80.0" cy="261.0" r="7.0" fill="#3f7a42"/>
<circle cx="85.0" cy="259.5" r="7.0" fill="#3f7a42"/>
<circle cx="90.1" cy="261.0" r="7.0" fill="#3f7a42"/>
<circle cx="92.7" cy="264.9" r="7.0" fill="#3f7a42"/>
<circle cx="79.4" cy="260.9" r="4.0" fill="#5a924e" opacity=".7"/>
<circle cx="83.9" cy="257.8" r="4.0" fill="#5a924e" opacity=".7"/>
<circle cx="89.1" cy="259.2" r="4.0" fill="#5a924e" opacity=".7"/>
<ellipse cx="103" cy="268" rx="11.7" ry="10.3" fill="#335f3a"/>
<circle cx="97.6" cy="265.3" r="5.2" fill="#4c8a4a"/>
<circle cx="99.6" cy="262.4" r="5.2" fill="#4c8a4a"/>
<circle cx="103.4" cy="261.2" r="5.2" fill="#4c8a4a"/>
<circle cx="107.2" cy="262.4" r="5.2" fill="#4c8a4a"/>
<circle cx="109.1" cy="265.3" r="5.2" fill="#4c8a4a"/>
<circle cx="99.1" cy="262.2" r="3.0" fill="#6ea458" opacity=".7"/>
<circle cx="102.6" cy="259.8" r="3.0" fill="#6ea458" opacity=".7"/>
<circle cx="106.5" cy="260.9" r="3.0" fill="#6ea458" opacity=".7"/>
<ellipse cx="207" cy="268" rx="11.4" ry="10.0" fill="#305c38"/>
<circle cx="201.5" cy="265.6" r="5.1" fill="#508c4a"/>
<circle cx="203.4" cy="262.7" r="5.1" fill="#508c4a"/>
<circle cx="207.1" cy="261.6" r="5.1" fill="#508c4a"/>
<circle cx="210.8" cy="262.7" r="5.1" fill="#508c4a"/>
<circle cx="212.7" cy="265.6" r="5.1" fill="#508c4a"/>
<circle cx="203.0" cy="262.5" r="3.0" fill="#72a85a" opacity=".7"/>
<circle cx="206.3" cy="260.2" r="3.0" fill="#72a85a" opacity=".7"/>
<circle cx="210.1" cy="261.2" r="3.0" fill="#72a85a" opacity=".7"/>
<ellipse cx="269" cy="269" rx="13.8" ry="12.1" fill="#335f3a"/>
<circle cx="262.5" cy="265.7" r="6.2" fill="#4c8a4a"/>
<circle cx="264.8" cy="262.3" r="6.2" fill="#4c8a4a"/>
<circle cx="269.3" cy="260.9" r="6.2" fill="#4c8a4a"/>
<circle cx="273.7" cy="262.3" r="6.2" fill="#4c8a4a"/>
<circle cx="276.1" cy="265.7" r="6.2" fill="#4c8a4a"/>
<circle cx="264.3" cy="262.1" r="3.6" fill="#6ea458" opacity=".7"/>
<circle cx="268.3" cy="259.4" r="3.6" fill="#6ea458" opacity=".7"/>
<circle cx="272.9" cy="260.6" r="3.6" fill="#6ea458" opacity=".7"/>
<ellipse cx="257" cy="274" rx="16.3" ry="14.3" fill="#376839"/>
<circle cx="248.8" cy="271.4" r="7.3" fill="#5c984e"/>
<circle cx="251.6" cy="267.2" r="7.3" fill="#5c984e"/>
<circle cx="256.9" cy="265.6" r="7.3" fill="#5c984e"/>
<circle cx="262.2" cy="267.2" r="7.3" fill="#5c984e"/>
<circle cx="264.9" cy="271.4" r="7.3" fill="#5c984e"/>
<circle cx="250.9" cy="267.1" r="4.2" fill="#82b45e" opacity=".7"/>
<circle cx="255.7" cy="263.9" r="4.2" fill="#82b45e" opacity=".7"/>
<circle cx="261.2" cy="265.3" r="4.2" fill="#82b45e" opacity=".7"/>
<ellipse cx="132" cy="275" rx="13.9" ry="12.2" fill="#3c6c3c"/>
<circle cx="125.4" cy="271.7" r="6.3" fill="#68a052"/>
<circle cx="127.8" cy="268.2" r="6.3" fill="#68a052"/>
<circle cx="132.3" cy="266.8" r="6.3" fill="#68a052"/>
<circle cx="136.8" cy="268.2" r="6.3" fill="#68a052"/>
<circle cx="139.2" cy="271.7" r="6.3" fill="#68a052"/>
<circle cx="127.2" cy="268.1" r="3.6" fill="#8cb862" opacity=".7"/>
<circle cx="131.3" cy="265.3" r="3.6" fill="#8cb862" opacity=".7"/>
<circle cx="136.0" cy="266.5" r="3.6" fill="#8cb862" opacity=".7"/>
<ellipse cx="99" cy="275" rx="16.3" ry="14.3" fill="#376839"/>
<circle cx="90.7" cy="271.7" r="7.3" fill="#5c984e"/>
<circle cx="93.5" cy="267.6" r="7.3" fill="#5c984e"/>
<circle cx="98.8" cy="265.9" r="7.3" fill="#5c984e"/>
<circle cx="104.0" cy="267.6" r="7.3" fill="#5c984e"/>
<circle cx="106.8" cy="271.7" r="7.3" fill="#5c984e"/>
<circle cx="92.8" cy="267.5" r="4.2" fill="#82b45e" opacity=".7"/>
<circle cx="97.6" cy="264.2" r="4.2" fill="#82b45e" opacity=".7"/>
<circle cx="103.1" cy="265.7" r="4.2" fill="#82b45e" opacity=".7"/>
<ellipse cx="275" cy="275" rx="14.8" ry="13.0" fill="#305c38"/>
<circle cx="268.1" cy="272.0" r="6.7" fill="#508c4a"/>
<circle cx="270.6" cy="268.2" r="6.7" fill="#508c4a"/>
<circle cx="275.4" cy="266.7" r="6.7" fill="#508c4a"/>
<circle cx="280.2" cy="268.2" r="6.7" fill="#508c4a"/>
<circle cx="282.7" cy="272.0" r="6.7" fill="#508c4a"/>
<circle cx="270.0" cy="268.1" r="3.9" fill="#72a85a" opacity=".7"/>
<circle cx="274.4" cy="265.1" r="3.9" fill="#72a85a" opacity=".7"/>
<circle cx="279.3" cy="266.4" r="3.9" fill="#72a85a" opacity=".7"/>
<ellipse cx="115" cy="275" rx="13.2" ry="11.6" fill="#376839"/>
<circle cx="108.6" cy="272.4" r="5.9" fill="#5c984e"/>
<circle cx="110.8" cy="269.1" r="5.9" fill="#5c984e"/>
<circle cx="115.1" cy="267.7" r="5.9" fill="#5c984e"/>
<circle cx="119.4" cy="269.1" r="5.9" fill="#5c984e"/>
<circle cx="121.6" cy="272.4" r="5.9" fill="#5c984e"/>
<circle cx="110.3" cy="268.9" r="3.4" fill="#82b45e" opacity=".7"/>
<circle cx="114.2" cy="266.3" r="3.4" fill="#82b45e" opacity=".7"/>
<circle cx="118.6" cy="267.4" r="3.4" fill="#82b45e" opacity=".7"/>
<ellipse cx="413" cy="276" rx="13.5" ry="11.9" fill="#335f3a"/>
<circle cx="406.7" cy="273.0" r="6.1" fill="#4c8a4a"/>
<circle cx="408.9" cy="269.5" r="6.1" fill="#4c8a4a"/>
<circle cx="413.3" cy="268.2" r="6.1" fill="#4c8a4a"/>
<circle cx="417.7" cy="269.5" r="6.1" fill="#4c8a4a"/>
<circle cx="420.0" cy="273.0" r="6.1" fill="#4c8a4a"/>
<circle cx="408.4" cy="269.4" r="3.5" fill="#6ea458" opacity=".7"/>
<circle cx="412.4" cy="266.7" r="3.5" fill="#6ea458" opacity=".7"/>
<circle cx="416.9" cy="267.9" r="3.5" fill="#6ea458" opacity=".7"/>
<ellipse cx="83" cy="276" rx="12.2" ry="10.8" fill="#2f5b38"/>
<circle cx="76.5" cy="273.0" r="5.5" fill="#3f7a42"/>
<circle cx="78.6" cy="269.9" r="5.5" fill="#3f7a42"/>
<circle cx="82.6" cy="268.7" r="5.5" fill="#3f7a42"/>
<circle cx="86.5" cy="269.9" r="5.5" fill="#3f7a42"/>
<circle cx="88.6" cy="273.0" r="5.5" fill="#3f7a42"/>
<circle cx="78.1" cy="269.7" r="3.2" fill="#5a924e" opacity=".7"/>
<circle cx="81.7" cy="267.3" r="3.2" fill="#5a924e" opacity=".7"/>
<circle cx="85.8" cy="268.4" r="3.2" fill="#5a924e" opacity=".7"/>
<ellipse cx="167" cy="277" rx="15.6" ry="13.7" fill="#335f3a"/>
<circle cx="159.8" cy="273.7" r="7.0" fill="#4c8a4a"/>
<circle cx="162.4" cy="269.7" r="7.0" fill="#4c8a4a"/>
<circle cx="167.5" cy="268.2" r="7.0" fill="#4c8a4a"/>
<circle cx="172.5" cy="269.7" r="7.0" fill="#4c8a4a"/>
<circle cx="175.2" cy="273.7" r="7.0" fill="#4c8a4a"/>
<circle cx="161.8" cy="269.6" r="4.1" fill="#6ea458" opacity=".7"/>
<circle cx="166.4" cy="266.5" r="4.1" fill="#6ea458" opacity=".7"/>
<circle cx="171.6" cy="267.9" r="4.1" fill="#6ea458" opacity=".7"/>
<ellipse cx="-5" cy="277" rx="13.2" ry="11.6" fill="#335f3a"/>
<circle cx="-11.7" cy="274.4" r="5.9" fill="#4c8a4a"/>
<circle cx="-9.5" cy="271.0" r="5.9" fill="#4c8a4a"/>
<circle cx="-5.2" cy="269.7" r="5.9" fill="#4c8a4a"/>
<circle cx="-0.9" cy="271.0" r="5.9" fill="#4c8a4a"/>
<circle cx="1.3" cy="274.4" r="5.9" fill="#4c8a4a"/>
<circle cx="-10.0" cy="270.9" r="3.4" fill="#6ea458" opacity=".7"/>
<circle cx="-6.1" cy="268.2" r="3.4" fill="#6ea458" opacity=".7"/>
<circle cx="-1.7" cy="269.4" r="3.4" fill="#6ea458" opacity=".7"/>
<ellipse cx="186" cy="277" rx="15.6" ry="13.7" fill="#2f5b38"/>
<circle cx="178.0" cy="274.5" r="7.0" fill="#3f7a42"/>
<circle cx="180.6" cy="270.5" r="7.0" fill="#3f7a42"/>
<circle cx="185.7" cy="268.9" r="7.0" fill="#3f7a42"/>
<circle cx="190.7" cy="270.5" r="7.0" fill="#3f7a42"/>
<circle cx="193.4" cy="274.5" r="7.0" fill="#3f7a42"/>
<circle cx="180.0" cy="270.4" r="4.1" fill="#5a924e" opacity=".7"/>
<circle cx="184.6" cy="267.3" r="4.1" fill="#5a924e" opacity=".7"/>
<circle cx="189.8" cy="268.7" r="4.1" fill="#5a924e" opacity=".7"/>
<ellipse cx="219" cy="278" rx="15.3" ry="13.5" fill="#335f3a"/>
<circle cx="211.7" cy="274.7" r="6.9" fill="#4c8a4a"/>
<circle cx="214.3" cy="270.8" r="6.9" fill="#4c8a4a"/>
<circle cx="219.3" cy="269.3" r="6.9" fill="#4c8a4a"/>
<circle cx="224.3" cy="270.8" r="6.9" fill="#4c8a4a"/>
<circle cx="226.8" cy="274.7" r="6.9" fill="#4c8a4a"/>
<circle cx="213.7" cy="270.7" r="4.0" fill="#6ea458" opacity=".7"/>
<circle cx="218.2" cy="267.7" r="4.0" fill="#6ea458" opacity=".7"/>
<circle cx="223.3" cy="269.0" r="4.0" fill="#6ea458" opacity=".7"/>
<ellipse cx="202" cy="278" rx="12.2" ry="10.8" fill="#2f5b38"/>
<circle cx="196.3" cy="275.4" r="5.5" fill="#3f7a42"/>
<circle cx="198.4" cy="272.3" r="5.5" fill="#3f7a42"/>
<circle cx="202.4" cy="271.1" r="5.5" fill="#3f7a42"/>
<circle cx="206.3" cy="272.3" r="5.5" fill="#3f7a42"/>
<circle cx="208.4" cy="275.4" r="5.5" fill="#3f7a42"/>
<circle cx="197.9" cy="272.1" r="3.2" fill="#5a924e" opacity=".7"/>
<circle cx="201.5" cy="269.7" r="3.2" fill="#5a924e" opacity=".7"/>
<circle cx="205.6" cy="270.7" r="3.2" fill="#5a924e" opacity=".7"/>
<ellipse cx="154" cy="279" rx="12.8" ry="11.2" fill="#305c38"/>
<circle cx="147.3" cy="275.7" r="5.7" fill="#508c4a"/>
<circle cx="149.4" cy="272.5" r="5.7" fill="#508c4a"/>
<circle cx="153.6" cy="271.2" r="5.7" fill="#508c4a"/>
<circle cx="157.7" cy="272.5" r="5.7" fill="#508c4a"/>
<circle cx="159.9" cy="275.7" r="5.7" fill="#508c4a"/>
<circle cx="148.9" cy="272.3" r="3.3" fill="#72a85a" opacity=".7"/>
<circle cx="152.7" cy="269.7" r="3.3" fill="#72a85a" opacity=".7"/>
<circle cx="156.9" cy="270.9" r="3.3" fill="#72a85a" opacity=".7"/>
<ellipse cx="67" cy="279" rx="16.1" ry="14.1" fill="#3c6c3c"/>
<circle cx="59.3" cy="275.7" r="7.2" fill="#68a052"/>
<circle cx="62.0" cy="271.6" r="7.2" fill="#68a052"/>
<circle cx="67.2" cy="270.0" r="7.2" fill="#68a052"/>
<circle cx="72.4" cy="271.6" r="7.2" fill="#68a052"/>
<circle cx="75.1" cy="275.7" r="7.2" fill="#68a052"/>
<circle cx="61.3" cy="271.5" r="4.2" fill="#8cb862" opacity=".7"/>
<circle cx="66.1" cy="268.3" r="4.2" fill="#8cb862" opacity=".7"/>
<circle cx="71.4" cy="269.8" r="4.2" fill="#8cb862" opacity=".7"/>
<ellipse cx="429" cy="279" rx="15.4" ry="13.5" fill="#2f5b38"/>
<circle cx="421.0" cy="275.9" r="6.9" fill="#3f7a42"/>
<circle cx="423.6" cy="272.0" r="6.9" fill="#3f7a42"/>
<circle cx="428.6" cy="270.5" r="6.9" fill="#3f7a42"/>
<circle cx="433.6" cy="272.0" r="6.9" fill="#3f7a42"/>
<circle cx="436.2" cy="275.9" r="6.9" fill="#3f7a42"/>
<circle cx="423.0" cy="271.9" r="4.0" fill="#5a924e" opacity=".7"/>
<circle cx="427.5" cy="268.8" r="4.0" fill="#5a924e" opacity=".7"/>
<circle cx="432.6" cy="270.2" r="4.0" fill="#5a924e" opacity=".7"/>
<ellipse cx="289" cy="279" rx="14.2" ry="12.5" fill="#305c38"/>
<circle cx="282.0" cy="276.2" r="6.4" fill="#508c4a"/>
<circle cx="284.4" cy="272.6" r="6.4" fill="#508c4a"/>
<circle cx="289.0" cy="271.1" r="6.4" fill="#508c4a"/>
<circle cx="293.6" cy="272.6" r="6.4" fill="#508c4a"/>
<circle cx="296.0" cy="276.2" r="6.4" fill="#508c4a"/>
<circle cx="283.8" cy="272.4" r="3.7" fill="#72a85a" opacity=".7"/>
<circle cx="288.0" cy="269.6" r="3.7" fill="#72a85a" opacity=".7"/>
<circle cx="292.8" cy="270.9" r="3.7" fill="#72a85a" opacity=".7"/>
<ellipse cx="241" cy="279" rx="14.1" ry="12.5" fill="#335f3a"/>
<circle cx="233.9" cy="276.2" r="6.4" fill="#4c8a4a"/>
<circle cx="236.3" cy="272.6" r="6.4" fill="#4c8a4a"/>
<circle cx="240.8" cy="271.2" r="6.4" fill="#4c8a4a"/>
<circle cx="245.4" cy="272.6" r="6.4" fill="#4c8a4a"/>
<circle cx="247.8" cy="276.2" r="6.4" fill="#4c8a4a"/>
<circle cx="235.7" cy="272.4" r="3.7" fill="#6ea458" opacity=".7"/>
<circle cx="239.8" cy="269.6" r="3.7" fill="#6ea458" opacity=".7"/>
<circle cx="244.6" cy="270.9" r="3.7" fill="#6ea458" opacity=".7"/>
<ellipse cx="306" cy="279" rx="13.3" ry="11.7" fill="#305c38"/>
<circle cx="299.9" cy="276.4" r="6.0" fill="#508c4a"/>
<circle cx="302.1" cy="273.0" r="6.0" fill="#508c4a"/>
<circle cx="306.5" cy="271.7" r="6.0" fill="#508c4a"/>
<circle cx="310.8" cy="273.0" r="6.0" fill="#508c4a"/>
<circle cx="313.0" cy="276.4" r="6.0" fill="#508c4a"/>
<circle cx="301.6" cy="272.8" r="3.5" fill="#72a85a" opacity=".7"/>
<circle cx="305.5" cy="270.2" r="3.5" fill="#72a85a" opacity=".7"/>
<circle cx="310.0" cy="271.4" r="3.5" fill="#72a85a" opacity=".7"/>
<ellipse cx="160" cy="285" rx="15.7" ry="13.8" fill="#3c6c3c"/>
<circle cx="152.4" cy="282.1" r="7.1" fill="#68a052"/>
<circle cx="155.1" cy="278.2" r="7.1" fill="#68a052"/>
<circle cx="160.2" cy="276.6" r="7.1" fill="#68a052"/>
<circle cx="165.3" cy="278.2" r="7.1" fill="#68a052"/>
<circle cx="167.9" cy="282.1" r="7.1" fill="#68a052"/>
<circle cx="154.4" cy="278.1" r="4.1" fill="#8cb862" opacity=".7"/>
<circle cx="159.1" cy="274.9" r="4.1" fill="#8cb862" opacity=".7"/>
<circle cx="164.3" cy="276.3" r="4.1" fill="#8cb862" opacity=".7"/>
<ellipse cx="267" cy="285" rx="13.5" ry="11.9" fill="#2f5b38"/>
<circle cx="259.9" cy="282.3" r="6.1" fill="#3f7a42"/>
<circle cx="262.2" cy="278.9" r="6.1" fill="#3f7a42"/>
<circle cx="266.6" cy="277.6" r="6.1" fill="#3f7a42"/>
<circle cx="271.0" cy="278.9" r="6.1" fill="#3f7a42"/>
<circle cx="273.2" cy="282.3" r="6.1" fill="#3f7a42"/>
<circle cx="261.7" cy="278.8" r="3.5" fill="#5a924e" opacity=".7"/>
<circle cx="265.6" cy="276.1" r="3.5" fill="#5a924e" opacity=".7"/>
<circle cx="270.2" cy="277.3" r="3.5" fill="#5a924e" opacity=".7"/>
<ellipse cx="212" cy="286" rx="14.3" ry="12.6" fill="#2f5b38"/>
<circle cx="205.1" cy="282.6" r="6.5" fill="#3f7a42"/>
<circle cx="207.5" cy="279.0" r="6.5" fill="#3f7a42"/>
<circle cx="212.2" cy="277.6" r="6.5" fill="#3f7a42"/>
<circle cx="216.8" cy="279.0" r="6.5" fill="#3f7a42"/>
<circle cx="219.3" cy="282.6" r="6.5" fill="#3f7a42"/>
<circle cx="206.9" cy="278.9" r="3.7" fill="#5a924e" opacity=".7"/>
<circle cx="211.2" cy="276.0" r="3.7" fill="#5a924e" opacity=".7"/>
<circle cx="216.0" cy="277.3" r="3.7" fill="#5a924e" opacity=".7"/>
<ellipse cx="109" cy="286" rx="15.7" ry="13.8" fill="#335f3a"/>
<circle cx="101.3" cy="282.6" r="7.1" fill="#4c8a4a"/>
<circle cx="104.0" cy="278.6" r="7.1" fill="#4c8a4a"/>
<circle cx="109.1" cy="277.0" r="7.1" fill="#4c8a4a"/>
<circle cx="114.2" cy="278.6" r="7.1" fill="#4c8a4a"/>
<circle cx="116.8" cy="282.6" r="7.1" fill="#4c8a4a"/>
<circle cx="103.4" cy="278.5" r="4.1" fill="#6ea458" opacity=".7"/>
<circle cx="108.0" cy="275.4" r="4.1" fill="#6ea458" opacity=".7"/>
<circle cx="113.2" cy="276.8" r="4.1" fill="#6ea458" opacity=".7"/>
<ellipse cx="430" cy="286" rx="12.1" ry="10.7" fill="#2f5b38"/>
<circle cx="424.2" cy="282.9" r="5.5" fill="#3f7a42"/>
<circle cx="426.3" cy="279.8" r="5.5" fill="#3f7a42"/>
<circle cx="430.2" cy="278.6" r="5.5" fill="#3f7a42"/>
<circle cx="434.2" cy="279.8" r="5.5" fill="#3f7a42"/>
<circle cx="436.2" cy="282.9" r="5.5" fill="#3f7a42"/>
<circle cx="425.8" cy="279.6" r="3.2" fill="#5a924e" opacity=".7"/>
<circle cx="429.4" cy="277.2" r="3.2" fill="#5a924e" opacity=".7"/>
<circle cx="433.4" cy="278.3" r="3.2" fill="#5a924e" opacity=".7"/>
<ellipse cx="68" cy="286" rx="12.7" ry="11.2" fill="#376839"/>
<circle cx="61.6" cy="283.4" r="5.7" fill="#5c984e"/>
<circle cx="63.7" cy="280.2" r="5.7" fill="#5c984e"/>
<circle cx="67.9" cy="278.9" r="5.7" fill="#5c984e"/>
<circle cx="72.0" cy="280.2" r="5.7" fill="#5c984e"/>
<circle cx="74.2" cy="283.4" r="5.7" fill="#5c984e"/>
<circle cx="63.2" cy="280.0" r="3.3" fill="#82b45e" opacity=".7"/>
<circle cx="67.0" cy="277.5" r="3.3" fill="#82b45e" opacity=".7"/>
<circle cx="71.2" cy="278.6" r="3.3" fill="#82b45e" opacity=".7"/>
<ellipse cx="126" cy="286" rx="14.1" ry="12.4" fill="#305c38"/>
<circle cx="119.5" cy="283.3" r="6.3" fill="#508c4a"/>
<circle cx="121.9" cy="279.8" r="6.3" fill="#508c4a"/>
<circle cx="126.5" cy="278.4" r="6.3" fill="#508c4a"/>
<circle cx="131.0" cy="279.8" r="6.3" fill="#508c4a"/>
<circle cx="133.4" cy="283.3" r="6.3" fill="#508c4a"/>
<circle cx="121.3" cy="279.6" r="3.7" fill="#72a85a" opacity=".7"/>
<circle cx="125.5" cy="276.8" r="3.7" fill="#72a85a" opacity=".7"/>
<circle cx="130.2" cy="278.1" r="3.7" fill="#72a85a" opacity=".7"/>
<ellipse cx="302" cy="287" rx="15.6" ry="13.7" fill="#305c38"/>
<circle cx="294.0" cy="283.6" r="7.0" fill="#508c4a"/>
<circle cx="296.6" cy="279.7" r="7.0" fill="#508c4a"/>
<circle cx="301.7" cy="278.1" r="7.0" fill="#508c4a"/>
<circle cx="306.7" cy="279.7" r="7.0" fill="#508c4a"/>
<circle cx="309.4" cy="283.6" r="7.0" fill="#508c4a"/>
<circle cx="296.0" cy="279.6" r="4.0" fill="#72a85a" opacity=".7"/>
<circle cx="300.6" cy="276.4" r="4.0" fill="#72a85a" opacity=".7"/>
<circle cx="305.8" cy="277.8" r="4.0" fill="#72a85a" opacity=".7"/>
<ellipse cx="324" cy="287" rx="14.7" ry="12.9" fill="#2f5b38"/>
<circle cx="316.4" cy="283.9" r="6.6" fill="#3f7a42"/>
<circle cx="318.9" cy="280.2" r="6.6" fill="#3f7a42"/>
<circle cx="323.7" cy="278.7" r="6.6" fill="#3f7a42"/>
<circle cx="328.5" cy="280.2" r="6.6" fill="#3f7a42"/>
<circle cx="330.9" cy="283.9" r="6.6" fill="#3f7a42"/>
<circle cx="318.4" cy="280.1" r="3.8" fill="#5a924e" opacity=".7"/>
<circle cx="322.7" cy="277.1" r="3.8" fill="#5a924e" opacity=".7"/>
<circle cx="327.6" cy="278.4" r="3.8" fill="#5a924e" opacity=".7"/>
<ellipse cx="-2" cy="287" rx="15.9" ry="14.0" fill="#2f5b38"/>
<circle cx="-9.9" cy="284.2" r="7.2" fill="#3f7a42"/>
<circle cx="-7.2" cy="280.2" r="7.2" fill="#3f7a42"/>
<circle cx="-2.1" cy="278.6" r="7.2" fill="#3f7a42"/>
<circle cx="3.1" cy="280.2" r="7.2" fill="#3f7a42"/>
<circle cx="5.8" cy="284.2" r="7.2" fill="#3f7a42"/>
<circle cx="-7.9" cy="280.1" r="4.1" fill="#5a924e" opacity=".7"/>
<circle cx="-3.2" cy="276.9" r="4.1" fill="#5a924e" opacity=".7"/>
<circle cx="2.1" cy="278.3" r="4.1" fill="#5a924e" opacity=".7"/>
<ellipse cx="248" cy="288" rx="16.6" ry="14.6" fill="#3c6c3c"/>
<circle cx="240.1" cy="284.5" r="7.4" fill="#68a052"/>
<circle cx="242.9" cy="280.3" r="7.4" fill="#68a052"/>
<circle cx="248.3" cy="278.6" r="7.4" fill="#68a052"/>
<circle cx="253.7" cy="280.3" r="7.4" fill="#68a052"/>
<circle cx="256.5" cy="284.5" r="7.4" fill="#68a052"/>
<circle cx="242.3" cy="280.2" r="4.3" fill="#8cb862" opacity=".7"/>
<circle cx="247.1" cy="276.9" r="4.3" fill="#8cb862" opacity=".7"/>
<circle cx="252.7" cy="278.3" r="4.3" fill="#8cb862" opacity=".7"/>
<ellipse cx="233" cy="288" rx="15.8" ry="13.9" fill="#335f3a"/>
<circle cx="224.8" cy="284.6" r="7.1" fill="#4c8a4a"/>
<circle cx="227.5" cy="280.5" r="7.1" fill="#4c8a4a"/>
<circle cx="232.6" cy="278.9" r="7.1" fill="#4c8a4a"/>
<circle cx="237.8" cy="280.5" r="7.1" fill="#4c8a4a"/>
<circle cx="240.5" cy="284.6" r="7.1" fill="#4c8a4a"/>
<circle cx="226.9" cy="280.4" r="4.1" fill="#6ea458" opacity=".7"/>
<circle cx="231.5" cy="277.3" r="4.1" fill="#6ea458" opacity=".7"/>
<circle cx="236.8" cy="278.7" r="4.1" fill="#6ea458" opacity=".7"/>
<ellipse cx="144" cy="288" rx="15.9" ry="14.0" fill="#335f3a"/>
<circle cx="136.3" cy="284.9" r="7.2" fill="#4c8a4a"/>
<circle cx="139.0" cy="280.8" r="7.2" fill="#4c8a4a"/>
<circle cx="144.2" cy="279.2" r="7.2" fill="#4c8a4a"/>
<circle cx="149.4" cy="280.8" r="7.2" fill="#4c8a4a"/>
<circle cx="152.1" cy="284.9" r="7.2" fill="#4c8a4a"/>
<circle cx="138.4" cy="280.7" r="4.1" fill="#6ea458" opacity=".7"/>
<circle cx="143.1" cy="277.6" r="4.1" fill="#6ea458" opacity=".7"/>
<circle cx="148.4" cy="279.0" r="4.1" fill="#6ea458" opacity=".7"/>
<ellipse cx="17" cy="288" rx="14.7" ry="13.0" fill="#335f3a"/>
<circle cx="9.3" cy="285.0" r="6.6" fill="#4c8a4a"/>
<circle cx="11.8" cy="281.3" r="6.6" fill="#4c8a4a"/>
<circle cx="16.5" cy="279.8" r="6.6" fill="#4c8a4a"/>
<circle cx="21.3" cy="281.3" r="6.6" fill="#4c8a4a"/>
<circle cx="23.8" cy="285.0" r="6.6" fill="#4c8a4a"/>
<circle cx="11.2" cy="281.1" r="3.8" fill="#6ea458" opacity=".7"/>
<circle cx="15.5" cy="278.2" r="3.8" fill="#6ea458" opacity=".7"/>
<circle cx="20.4" cy="279.5" r="3.8" fill="#6ea458" opacity=".7"/>
<ellipse cx="412" cy="288" rx="13.6" ry="11.9" fill="#2f5b38"/>
<circle cx="405.4" cy="285.4" r="6.1" fill="#3f7a42"/>
<circle cx="407.7" cy="281.9" r="6.1" fill="#3f7a42"/>
<circle cx="412.1" cy="280.6" r="6.1" fill="#3f7a42"/>
<circle cx="416.5" cy="281.9" r="6.1" fill="#3f7a42"/>
<circle cx="418.8" cy="285.4" r="6.1" fill="#3f7a42"/>
<circle cx="407.2" cy="281.8" r="3.5" fill="#5a924e" opacity=".7"/>
<circle cx="411.2" cy="279.0" r="3.5" fill="#5a924e" opacity=".7"/>
<circle cx="415.7" cy="280.3" r="3.5" fill="#5a924e" opacity=".7"/>
<ellipse cx="181" cy="289" rx="14.7" ry="13.0" fill="#305c38"/>
<circle cx="173.6" cy="285.9" r="6.6" fill="#508c4a"/>
<circle cx="176.1" cy="282.2" r="6.6" fill="#508c4a"/>
<circle cx="180.9" cy="280.7" r="6.6" fill="#508c4a"/>
<circle cx="185.7" cy="282.2" r="6.6" fill="#508c4a"/>
<circle cx="188.1" cy="285.9" r="6.6" fill="#508c4a"/>
<circle cx="175.5" cy="282.0" r="3.8" fill="#72a85a" opacity=".7"/>
<circle cx="179.8" cy="279.1" r="3.8" fill="#72a85a" opacity=".7"/>
<circle cx="184.8" cy="280.4" r="3.8" fill="#72a85a" opacity=".7"/>
<ellipse cx="52" cy="289" rx="14.3" ry="12.6" fill="#305c38"/>
<circle cx="45.3" cy="286.2" r="6.4" fill="#508c4a"/>
<circle cx="47.7" cy="282.5" r="6.4" fill="#508c4a"/>
<circle cx="52.4" cy="281.1" r="6.4" fill="#508c4a"/>
<circle cx="57.0" cy="282.5" r="6.4" fill="#508c4a"/>
<circle cx="59.4" cy="286.2" r="6.4" fill="#508c4a"/>
<circle cx="47.2" cy="282.4" r="3.7" fill="#72a85a" opacity=".7"/>
<circle cx="51.4" cy="279.5" r="3.7" fill="#72a85a" opacity=".7"/>
<circle cx="56.2" cy="280.8" r="3.7" fill="#72a85a" opacity=".7"/>
<ellipse cx="339" cy="289" rx="12.4" ry="10.9" fill="#335f3a"/>
<circle cx="333.0" cy="286.5" r="5.6" fill="#4c8a4a"/>
<circle cx="335.1" cy="283.3" r="5.6" fill="#4c8a4a"/>
<circle cx="339.1" cy="282.1" r="5.6" fill="#4c8a4a"/>
<circle cx="343.1" cy="283.3" r="5.6" fill="#4c8a4a"/>
<circle cx="345.2" cy="286.5" r="5.6" fill="#4c8a4a"/>
<circle cx="334.6" cy="283.1" r="3.2" fill="#6ea458" opacity=".7"/>
<circle cx="338.2" cy="280.7" r="3.2" fill="#6ea458" opacity=".7"/>
<circle cx="342.4" cy="281.8" r="3.2" fill="#6ea458" opacity=".7"/>
<ellipse cx="392" cy="289" rx="13.3" ry="11.7" fill="#335f3a"/>
<circle cx="385.2" cy="286.5" r="6.0" fill="#4c8a4a"/>
<circle cx="387.5" cy="283.1" r="6.0" fill="#4c8a4a"/>
<circle cx="391.8" cy="281.8" r="6.0" fill="#4c8a4a"/>
<circle cx="396.1" cy="283.1" r="6.0" fill="#4c8a4a"/>
<circle cx="398.3" cy="286.5" r="6.0" fill="#4c8a4a"/>
<circle cx="386.9" cy="282.9" r="3.4" fill="#6ea458" opacity=".7"/>
<circle cx="390.8" cy="280.3" r="3.4" fill="#6ea458" opacity=".7"/>
<circle cx="395.3" cy="281.5" r="3.4" fill="#6ea458" opacity=".7"/>
<ellipse cx="86" cy="290" rx="12.8" ry="11.2" fill="#3c6c3c"/>
<circle cx="79.4" cy="286.7" r="5.7" fill="#68a052"/>
<circle cx="81.6" cy="283.5" r="5.7" fill="#68a052"/>
<circle cx="85.7" cy="282.2" r="5.7" fill="#68a052"/>
<circle cx="89.9" cy="283.5" r="5.7" fill="#68a052"/>
<circle cx="92.0" cy="286.7" r="5.7" fill="#68a052"/>
<circle cx="81.1" cy="283.3" r="3.3" fill="#8cb862" opacity=".7"/>
<circle cx="84.8" cy="280.8" r="3.3" fill="#8cb862" opacity=".7"/>
<circle cx="89.1" cy="281.9" r="3.3" fill="#8cb862" opacity=".7"/>
<ellipse cx="196" cy="290" rx="15.7" ry="13.8" fill="#335f3a"/>
<circle cx="188.0" cy="286.6" r="7.1" fill="#4c8a4a"/>
<circle cx="190.7" cy="282.6" r="7.1" fill="#4c8a4a"/>
<circle cx="195.8" cy="281.1" r="7.1" fill="#4c8a4a"/>
<circle cx="200.9" cy="282.6" r="7.1" fill="#4c8a4a"/>
<circle cx="203.6" cy="286.6" r="7.1" fill="#4c8a4a"/>
<circle cx="190.1" cy="282.5" r="4.1" fill="#6ea458" opacity=".7"/>
<circle cx="194.7" cy="279.4" r="4.1" fill="#6ea458" opacity=".7"/>
<circle cx="200.0" cy="280.8" r="4.1" fill="#6ea458" opacity=".7"/>
<ellipse cx="286" cy="290" rx="16.7" ry="14.7" fill="#3c6c3c"/>
<circle cx="277.7" cy="286.7" r="7.5" fill="#68a052"/>
<circle cx="280.6" cy="282.4" r="7.5" fill="#68a052"/>
<circle cx="286.0" cy="280.8" r="7.5" fill="#68a052"/>
<circle cx="291.4" cy="282.4" r="7.5" fill="#68a052"/>
<circle cx="294.3" cy="286.7" r="7.5" fill="#68a052"/>
<circle cx="279.9" cy="282.4" r="4.3" fill="#8cb862" opacity=".7"/>
<circle cx="284.8" cy="279.0" r="4.3" fill="#8cb862" opacity=".7"/>
<circle cx="290.4" cy="280.5" r="4.3" fill="#8cb862" opacity=".7"/>
<ellipse cx="262" cy="233" rx="9" ry="7.9" fill="#35683a"/><circle cx="259" cy="230" r="4.5" fill="#5c984e"/><circle cx="265" cy="230" r="4.5" fill="#5c984e"/><circle cx="262" cy="228" r="3.6" fill="#82b45e" opacity=".7"/>
<ellipse cx="318" cy="247" rx="8" ry="7.0" fill="#35683a"/><circle cx="315" cy="244" r="4.0" fill="#5c984e"/><circle cx="321" cy="244" r="4.0" fill="#5c984e"/><circle cx="318" cy="242" r="3.2" fill="#82b45e" opacity=".7"/>
<ellipse cx="300" cy="206" rx="8" ry="7.0" fill="#35683a"/><circle cx="297" cy="203" r="4.0" fill="#5c984e"/><circle cx="303" cy="203" r="4.0" fill="#5c984e"/><circle cx="300" cy="201" r="3.2" fill="#82b45e" opacity=".7"/>
<ellipse cx="382" cy="249" rx="9" ry="7.9" fill="#35683a"/><circle cx="379" cy="246" r="4.5" fill="#5c984e"/><circle cx="385" cy="246" r="4.5" fill="#5c984e"/><circle cx="382" cy="244" r="3.6" fill="#82b45e" opacity=".7"/>
<ellipse cx="404" cy="263" rx="8" ry="7.0" fill="#35683a"/><circle cx="401" cy="260" r="4.0" fill="#5c984e"/><circle cx="407" cy="260" r="4.0" fill="#5c984e"/><circle cx="404" cy="258" r="3.2" fill="#82b45e" opacity=".7"/>
</g>
<rect x="392" y="262" width="5" height="9" fill="#eee"/><circle cx="394.5" cy="259" r="2" fill="#6a4a30"/>
</svg>
<!-- cursor -->
<svg style="left:940px;top:783px" width="26" height="36" viewBox="0 0 26 36"><path d="M3 2 L3 26 L9 20 L14 32 L19 30 L14 18 L22 18 Z" fill="#0f2a6e" stroke="#2a6ae0" stroke-width="2" stroke-linejoin="round"/></svg>
<!-- save button -->
<div class="a" style="left:1014px;top:881px;width:88px;height:15px;background:#fff;border-radius:3px;box-shadow:0 0.5px 1.5px rgba(0,0,0,.3)"></div>
<div class="t" style="left:1014px;top:884px;width:88px;text-align:center;font-size:8.5px">Save result</div>
<!-- splitter -->
<div class="a" style="left:1107px;top:466px;width:4px;height:438px;background:#d8d8d8"></div>
<svg style="left:1105px;top:468px" width="6" height="8"><path d="M5 0 L1 4 L5 8 Z" fill="#999"/></svg>
<!-- right panel -->
<div id="rp">
<div class="t" style="left:1117px;top:473.5px">Prompt</div>
<svg style="left:1148px;top:473px" width="9" height="9"><circle cx="4.5" cy="4.5" r="3.6" fill="none" stroke="#333" stroke-width="0.8"/><rect x="4.1" y="3.6" width="0.9" height="3" fill="#333"/><rect x="4.1" y="2.2" width="0.9" height="0.9" fill="#333"/></svg>
<div class="a" style="left:1117px;top:485px;width:232px;height:77px;background:#fff;border:1px solid #e0e0e0"></div>
<div class="a" style="left:1338px;top:486px;width:10px;height:75px;background:#f3f3f3;border-left:1px solid #e6e6e6"></div>
<div class="t" style="left:1118px;top:487.5px;font-size:8.85px;color:#333">a house in akira toriyama style</div>

<div class="t" style="left:1117px;top:569.5px">Shape Fidelity</div>
<svg style="left:1174px;top:569.5px" width="9" height="9"><circle cx="4.5" cy="4.5" r="3.6" fill="none" stroke="#333" stroke-width="0.8"/><rect x="4.1" y="3.6" width="0.9" height="3" fill="#333"/><rect x="4.1" y="2.2" width="0.9" height="0.9" fill="#333"/></svg>
<svg style="left:1115px;top:583px" width="180" height="14">
<rect x="2" y="6" width="175" height="2" rx="1" fill="#d7d7d7"/>
<g fill="#b8b8b8"><rect x="2" y="4" width="0.8" height="6"/><rect x="38.5" y="4" width="0.8" height="6"/><rect x="72" y="4" width="0.8" height="6"/><rect x="107.5" y="4" width="0.8" height="6"/><rect x="177" y="4" width="0.8" height="6"/></g>
<rect x="138" y="2" width="6" height="10" rx="3" fill="#fff" stroke="#cfcfcf" stroke-width="0.6"/>
</svg>
<div class="a" style="left:1299px;top:585.5px;width:28px;height:11px;background:#fff;box-shadow:0 0 0 0.5px #e3e3e3"></div>
<div class="t" style="left:1301px;top:587px;font-size:8.6px">80</div>
<div class="t" style="left:1329.5px;top:585.5px;font-size:8.5px">%</div>
<div class="a" style="left:1340px;top:585px;width:13px;height:12px;background:#fff;border-radius:3px;box-shadow:0 0.5px 1px rgba(0,0,0,.3)"></div>
<svg style="left:1343px;top:587px" width="7" height="8"><path d="M2 1.5 L4.8 4 L2 6.5" stroke="#222" stroke-width="1.1" fill="none"/></svg>

<div class="t" style="left:1117px;top:604px">Image size</div>
<div class="a" style="left:1118px;top:621px;width:63px;height:14px;background:#fff;border-radius:3px;box-shadow:0 0.5px 1.5px rgba(0,0,0,.3)"></div>
<div class="t" style="left:1123.5px;top:623.5px;font-size:8.6px">1216x832</div>
<div class="a" style="left:1169px;top:622px;width:11.5px;height:12px;background:#2f7ff5;border-radius:2.5px"></div>
<svg style="left:1169px;top:622px" width="12" height="12"><path d="M3.5 4.8 L5.8 2.6 L8 4.8 M3.5 7.2 L5.8 9.4 L8 7.2" stroke="#fff" stroke-width="0.9" fill="none"/></svg>

<div class="a" style="left:1113px;top:647.3px;width:246px;height:15px;background:#d6d6d6"></div>
<svg style="left:1117px;top:651px" width="8" height="7"><path d="M0.5 1 L7 1 L3.75 6 Z" fill="#888"/></svg>
<div class="t" style="left:1129px;top:650.5px">Advanced Parameters</div>

<div class="t" style="left:1117px;top:671px">Iterations</div>
<svg style="left:1155.5px;top:670.5px" width="9" height="9"><circle cx="4.5" cy="4.5" r="3.6" fill="none" stroke="#333" stroke-width="0.8"/><rect x="4.1" y="3.6" width="0.9" height="3" fill="#333"/><rect x="4.1" y="2.2" width="0.9" height="0.9" fill="#333"/></svg>
<svg style="left:1115px;top:684px" width="180" height="14">
<rect x="2" y="6" width="175" height="2" rx="1" fill="#d7d7d7"/>
<g fill="#b8b8b8"><rect x="2" y="4" width="0.8" height="6"/><rect x="61" y="4" width="0.8" height="6"/><rect x="89.7" y="4" width="0.8" height="6"/><rect x="119" y="4" width="0.8" height="6"/><rect x="147" y="4" width="0.8" height="6"/><rect x="177" y="4" width="0.8" height="6"/></g>
<rect x="30" y="2" width="6" height="10" rx="3" fill="#fff" stroke="#cfcfcf" stroke-width="0.6"/>
</svg>
<div class="a" style="left:1299px;top:686.2px;width:28px;height:11px;background:#fff;box-shadow:0 0 0 0.5px #e3e3e3"></div>
<div class="t" style="left:1301px;top:688px;font-size:8.6px">25</div>

<div class="t" style="left:1117px;top:705.5px">Prompt Strength</div>
<svg style="left:1182.5px;top:705px" width="9" height="9"><circle cx="4.5" cy="4.5" r="3.6" fill="none" stroke="#333" stroke-width="0.8"/><rect x="4.1" y="3.6" width="0.9" height="3" fill="#333"/><rect x="4.1" y="2.2" width="0.9" height="0.9" fill="#333"/></svg>
<svg style="left:1115px;top:719px" width="180" height="14">
<rect x="2" y="6" width="175" height="2" rx="1" fill="#d7d7d7"/>
<g fill="#b8b8b8"><rect x="2.5" y="4" width="0.8" height="6"/><rect x="61" y="4" width="0.8" height="6"/><rect x="177.5" y="4" width="0.8" height="6"/></g>
<rect x="115.5" y="2" width="6" height="10" rx="3" fill="#fff" stroke="#cfcfcf" stroke-width="0.6"/>
</svg>
<div class="a" style="left:1299px;top:720.6px;width:28px;height:12px;background:#fff;box-shadow:0 0 0 0.5px #e3e3e3"></div>
<div class="t" style="left:1301px;top:722.5px;font-size:8.6px">75</div>
<div class="t" style="left:1329.5px;top:721px;font-size:8.5px">%</div>
<div class="a" style="left:1340px;top:720.5px;width:13px;height:12px;background:#fff;border-radius:3px;box-shadow:0 0.5px 1px rgba(0,0,0,.3)"></div>
<svg style="left:1343px;top:722.5px" width="7" height="8"><path d="M2 1.5 L4.8 4 L2 6.5" stroke="#222" stroke-width="1.1" fill="none"/></svg>

<div class="a" style="left:1113px;top:747px;width:246px;height:15.3px;background:#d6d6d6"></div>
<svg style="left:1117px;top:751px" width="8" height="7"><path d="M0.5 1 L7 1 L3.75 6 Z" fill="#888"/></svg>
<div class="t" style="left:1129px;top:750.5px">AI Engine Settings</div>

<div class="t" style="left:1117px;top:771px">AI Engine Address</div>
<svg style="left:1190px;top:770.5px" width="9" height="9"><circle cx="4.5" cy="4.5" r="3.6" fill="none" stroke="#333" stroke-width="0.8"/><rect x="4.1" y="3.6" width="0.9" height="3" fill="#333"/><rect x="4.1" y="2.2" width="0.9" height="0.9" fill="#333"/></svg>
<div class="a" style="left:1117.3px;top:785px;width:232px;height:14.6px;background:#fff;box-shadow:0 0 0 0.5px #e6e6e6"></div>
<div class="t" style="left:1119.5px;top:788px;font-size:9px">localhost:7860</div>

<div class="a" style="left:1116.7px;top:810.6px;width:10.8px;height:10.4px;background:#2f7ff5;border-radius:2.5px"></div>
<svg style="left:1116.7px;top:810.6px" width="11" height="11"><path d="M2.5 5.5 L4.6 7.8 L8.6 2.8" stroke="#fff" stroke-width="1.4" fill="none"/></svg>
<div class="t" style="left:1131.5px;top:811.5px;font-size:8.75px">Start in High VRAM mode</div>

<div class="a" style="left:1118px;top:828px;width:72.7px;height:13.8px;background:#fff;border-radius:3px;box-shadow:0 0.5px 1.5px rgba(0,0,0,.3)"></div>
<div class="t" style="left:1118px;top:830.5px;width:72.7px;text-align:center;font-size:8.5px">Start AI Engine</div>
<div class="a" style="left:1195.4px;top:828px;width:14.6px;height:13.8px;background:#fff;border-radius:3px;box-shadow:0 0.5px 1.5px rgba(0,0,0,.3)"></div>
<div class="a" style="left:1200.5px;top:832.8px;width:4.5px;height:4.5px;background:#111"></div>
<div class="a" style="left:1214.7px;top:828px;width:14.3px;height:13.8px;background:#fff;border-radius:3px;box-shadow:0 0.5px 1.5px rgba(0,0,0,.3)"></div>
<svg style="left:1214.7px;top:828px" width="15" height="14"><path d="M9.6 5 A3.2 3.2 0 1 0 10 8" stroke="#222" stroke-width="1" fill="none"/><path d="M8.2 3.6 L10.6 4.2 L9.6 6.4 Z" fill="#222"/></svg>

<div class="a" style="left:1116.7px;top:883.6px;width:10.8px;height:10.2px;background:#fff;border-radius:2.5px;box-shadow:0 0 0 0.6px #d5d5d5"></div>
<div class="t" style="left:1131.5px;top:884.5px;font-size:8.75px">Lock Result</div>
<div class="a" style="left:1261px;top:882px;width:88px;height:14.8px;background:#fff;border-radius:3px;box-shadow:0 0.5px 1.5px rgba(0,0,0,.3)"></div>
<div class="t" style="left:1261px;top:885px;width:88px;text-align:center;font-size:8.5px">Generate</div>
</div>
</div>

<!-- navigator -->
<div id="nav" style="font-size:13px;color:#1a1a1a">
<div class="a" style="left:1694px;top:169.8px;width:1px;height:882px;background:#e2e2e2"></div>
<div class="a" style="left:1764px;top:175px;width:87px;height:1px;background:#666"></div>
<div class="a" style="left:1750px;top:182px;width:38px;height:37px;background:#c5dff5;border:1px solid #99cbf3"></div>
<div class="a" style="left:1875px;top:186px;width:42px;height:26.6px;background:#dcdcdc;border:1px solid #c2c2c2"></div>
<svg style="left:1695px;top:180px" width="225" height="42" viewBox="1695 180 225 42">
<g fill="none" stroke="#353b40" stroke-width="1.5" stroke-linejoin="round">
<path d="M1705 209 V200 L1711 194 H1717 L1727 201 V209 Z M1711 194 L1716 201 V209 M1716 201 H1727"/>
<path d="M1741.5 188 V212" stroke="#888" stroke-width="1.2"/>
<rect x="1758" y="192.5" width="22" height="17" rx="1.5" stroke-width="1.7"/><path d="M1762 206 V200 L1767 195.5 H1772 L1778 200 V206 Z M1767 195.5 L1772 200 V206 M1772 200 H1778"/>
<path d="M1796 209 L1800 197 L1803 194 V203 H1817 V209 Z M1803 203 L1800 209 M1809 205 H1817"/>
<path d="M1835 195 H1849 V207 H1835 Z M1837 208 V210 H1851 V197 H1850 M1839 211 V212 H1853 V199" /><path d="M1835 198 H1849"/>
<path d="M1885 194 H1899 M1885 199.5 H1899 M1885 205 H1899" stroke-width="1.6"/>
</g>
<path d="M1906 195.5 L1910.5 199.5 L1906 203.5 Z" fill="#222"/>
</svg>
<div class="a" style="left:1698px;top:226.4px;width:218px;height:28px;background:#fff;border:1px solid #7a7a7a"></div>
<div class="t" style="left:1702px;top:234px;font-size:12.7px;color:#6e6e6e">Rechercher dans Plan de vues</div>
<div class="a" style="left:1695px;top:257px;width:204px;height:565px;background:#fff;overflow:hidden">
<div style="position:absolute;left:-1695px;top:-257px;width:1920px;height:1080px">
<svg style="left:1695px;top:257px" width="204" height="565" viewBox="1695 257 204 565"><g><path d="M1703 268 L1708.5 273.5 L1714 268" stroke="#333" stroke-width="1.6" fill="none"/><rect x="1722.1" y="261.8" width="19.8" height="15.8" rx="2" fill="#fff" stroke="#3a86f0" stroke-width="1.5"/><path d="M1725.3 274 V268 L1729.3 264 L1734.3 264 L1739.3 268 V274 Z M1729.3 264 L1733.3 268 V274 M1733.3 268 H1739.3" fill="none" stroke="#3a86f0" stroke-width="1.4"/><path d="M1716 296 L1721.5 301.5 L1727 296" stroke="#333" stroke-width="1.6" fill="none"/><path d="M1735 306 V290 Q1735 288 1737 288 H1742 L1744.5 291 H1754 Q1755 291 1755 292 V306 Z" fill="#e4e4e4" stroke="#3a4045" stroke-width="1.5"/><path d="M1735 293 H1755" stroke="#3a4045" stroke-width="1.2"/><path d="M1748.2 334 V317 H1757.2 V324 H1768.2 V334 Z" fill="#fff" stroke="#3a86f0" stroke-width="1.5"/><path d="M1751.2 318 V322 L1754.2 318" stroke="#3a86f0" stroke-width="1.2" fill="none"/><path d="M1749 347 L1762 345 L1767 349 V361 L1762 365 L1749 361 Z M1762 345 V365" fill="#fff" stroke="#3a86f0" stroke-width="1.5"/><path d="M1719 377.5 L1724.5 383 L1719 388.5" stroke="#8a8a8a" stroke-width="1.4" fill="none"/><path d="M1735 390 V374 Q1735 372 1737 372 H1742 L1744.5 375 H1754 Q1755 375 1755 376 V390 Z" fill="#e4e4e4" stroke="#3a4045" stroke-width="1.5"/><path d="M1735 377 H1755" stroke="#3a4045" stroke-width="1.2"/><path d="M1716 408 L1721.5 413.5 L1727 408" stroke="#333" stroke-width="1.6" fill="none"/><path d="M1735 418 V402 Q1735 400 1737 400 H1742 L1744.5 403 H1754 Q1755 403 1755 404 V418 Z" fill="#e4e4e4" stroke="#3a4045" stroke-width="1.5"/><path d="M1735 405 H1755" stroke="#3a4045" stroke-width="1.2"/><path d="M1732 433.5 L1737.5 439 L1732 444.5" stroke="#8a8a8a" stroke-width="1.4" fill="none"/><path d="M1748 446 V430 Q1748 428 1750 428 H1755 L1757.5 431 H1767 Q1768 431 1768 432 V446 Z" fill="#e4e4e4" stroke="#3a4045" stroke-width="1.5"/><path d="M1748 433 H1768" stroke="#3a4045" stroke-width="1.2"/><path d="M1732 461.5 L1737.5 467 L1732 472.5" stroke="#8a8a8a" stroke-width="1.4" fill="none"/><path d="M1748 474 V458 Q1748 456 1750 456 H1755 L1757.5 459 H1767 Q1768 459 1768 460 V474 Z" fill="#e4e4e4" stroke="#3a4045" stroke-width="1.5"/><path d="M1748 461 H1768" stroke="#3a4045" stroke-width="1.2"/><path d="M1732 489.5 L1737.5 495 L1732 500.5" stroke="#8a8a8a" stroke-width="1.4" fill="none"/><path d="M1748 502 V485 H1757 V492 H1768 V502 Z" fill="#fff" stroke="#3a86f0" stroke-width="1.5"/><path d="M1751 486 V490 L1754 486" stroke="#3a86f0" stroke-width="1.2" fill="none"/><path d="M1748 503 Q1748 496 1754 496" stroke="#222" stroke-width="2" fill="none"/><path d="M1752 493 L1756 496 L1752 499 Z" fill="#222"/><path d="M1729 520 L1734.5 525.5 L1740 520" stroke="#333" stroke-width="1.6" fill="none"/><path d="M1748 529 V519 L1758 514 L1768 519 V529 Z M1748 519 H1768" fill="#fff" stroke="#3a86f0" stroke-width="1.5"/><path d="M1748 531 Q1748 524 1754 524" stroke="#222" stroke-width="2" fill="none"/><path d="M1752 521 L1756 524 L1752 527 Z" fill="#222"/><path d="M1761 557 V547 L1771 542 L1781 547 V557 Z M1761 547 H1781" fill="#fff" stroke="#3a86f0" stroke-width="1.5"/><path d="M1761 585 V575 L1771 570 L1781 575 V585 Z M1761 575 H1781" fill="#fff" stroke="#3a86f0" stroke-width="1.5"/><path d="M1732 601.5 L1737.5 607 L1732 612.5" stroke="#8a8a8a" stroke-width="1.4" fill="none"/><path d="M1748 613 V603 L1758 598 L1768 603 V613 Z M1748 603 H1768" fill="#fff" stroke="#3a86f0" stroke-width="1.5"/><path d="M1748 615 Q1748 608 1754 608" stroke="#222" stroke-width="2" fill="none"/><path d="M1752 605 L1756 608 L1752 611 Z" fill="#222"/><path d="M1719 629.5 L1724.5 635 L1719 640.5" stroke="#8a8a8a" stroke-width="1.4" fill="none"/><path d="M1735 642 V626 Q1735 624 1737 624 H1742 L1744.5 627 H1754 Q1755 627 1755 628 V642 Z" fill="#e4e4e4" stroke="#3a4045" stroke-width="1.5"/><path d="M1735 629 H1755" stroke="#3a4045" stroke-width="1.2"/><path d="M1719 657.5 L1724.5 663 L1719 668.5" stroke="#8a8a8a" stroke-width="1.4" fill="none"/><path d="M1735 670 V654 Q1735 652 1737 652 H1742 L1744.5 655 H1754 Q1755 655 1755 656 V670 Z" fill="#e4e4e4" stroke="#3a4045" stroke-width="1.5"/><path d="M1735 657 H1755" stroke="#3a4045" stroke-width="1.2"/><path d="M1719 685.5 L1724.5 691 L1719 696.5" stroke="#8a8a8a" stroke-width="1.4" fill="none"/><path d="M1735 698 V682 Q1735 680 1737 680 H1742 L1744.5 683 H1754 Q1755 683 1755 684 V698 Z" fill="#e4e4e4" stroke="#3a4045" stroke-width="1.5"/><path d="M1735 685 H1755" stroke="#3a4045" stroke-width="1.2"/><path d="M1719 713.5 L1724.5 719 L1719 724.5" stroke="#8a8a8a" stroke-width="1.4" fill="none"/><path d="M1735 726 V710 Q1735 708 1737 708 H1742 L1744.5 711 H1754 Q1755 711 1755 712 V726 Z" fill="#e4e4e4" stroke="#3a4045" stroke-width="1.5"/><path d="M1735 713 H1755" stroke="#3a4045" stroke-width="1.2"/><path d="M1719 741.5 L1724.5 747 L1719 752.5" stroke="#8a8a8a" stroke-width="1.4" fill="none"/><path d="M1735 754 V738 Q1735 736 1737 736 H1742 L1744.5 739 H1754 Q1755 739 1755 740 V754 Z" fill="#e4e4e4" stroke="#3a4045" stroke-width="1.5"/><path d="M1735 741 H1755" stroke="#3a4045" stroke-width="1.2"/><path d="M1716 772 L1721.5 777.5 L1727 772" stroke="#333" stroke-width="1.6" fill="none"/><path d="M1735 782 V766 Q1735 764 1737 764 H1742 L1744.5 767 H1754 Q1755 767 1755 768 V782 Z" fill="#e4e4e4" stroke="#3a4045" stroke-width="1.5"/><path d="M1735 769 H1755" stroke="#3a4045" stroke-width="1.2"/><path d="M1748.2 810 V793 H1757.2 V800 H1768.2 V810 Z" fill="#fff" stroke="#3a86f0" stroke-width="1.5"/><path d="M1751.2 794 V798 L1754.2 794" stroke="#3a86f0" stroke-width="1.2" fill="none"/><path d="M1748.2 838 V821 H1757.2 V828 H1768.2 V838 Z" fill="#fff" stroke="#3a86f0" stroke-width="1.5"/><path d="M1751.2 822 V826 L1754.2 822" stroke="#3a86f0" stroke-width="1.2" fill="none"/></g></svg>
<div class="t" style="left:1749.4px;top:264.2px;">PROJET - G Maison Saison</div>
<div class="t" style="left:1762px;top:292.2px;letter-spacing:-0.45px;">DEPART</div>
<div class="t" style="left:1775px;top:320.2px;">DEP Rez-de-chaussée</div>
<div class="t" style="left:1775px;top:348.2px;">DEP Perspective 3D</div>
<div class="t" style="left:1762px;top:376.2px;letter-spacing:-0.45px;">CONTROLE DE LA MAQUETTE</div>
<div class="t" style="left:1762px;top:404.2px;letter-spacing:-0.45px;">PROJET / PERMIS (LOD 200)</div>
<div class="t" style="left:1775px;top:432.2px;">Relevés</div>
<div class="t" style="left:1775px;top:460.2px;">Etudes volumiques</div>
<div class="t" style="left:1775px;top:488.2px;">PRO Étages</div>
<div class="t" style="left:1775px;top:516.2px;">PRO Coupes</div>
<div class="t" style="left:1787.5px;top:544.2px;">A Coupe AA</div>
<div class="t" style="left:1787.5px;top:572.2px;">B Coupe BB</div>
<div class="t" style="left:1775px;top:600.2px;">PRO Façades</div>
<div class="t" style="left:1762px;top:628.2px;letter-spacing:-0.45px;">EXECUTION (LOD 300)</div>
<div class="t" style="left:1762px;top:656.2px;letter-spacing:-0.45px;">COORDINATION</div>
<div class="t" style="left:1762px;top:684.2px;letter-spacing:-0.45px;">NOMENCLATURES</div>
<div class="t" style="left:1762px;top:712.2px;letter-spacing:-0.45px;">PLANS CONFORMES</div>
<div class="t" style="left:1762px;top:740.2px;letter-spacing:-0.45px;">DOCUMENTS</div>
<div class="t" style="left:1762px;top:768.2px;letter-spacing:-0.45px;">MON PROJET</div>
<div class="t" style="left:1775px;top:796.2px;">0. RDC - Vue en plan</div>
<div class="t" style="left:1775px;top:824.2px;">1. R+1 - Vue en plan</div>
</div></div>
<div class="a" style="left:1899.4px;top:278px;width:18px;height:211.5px;background:#cdcdcd"></div>
<svg style="left:1895px;top:257px" width="25" height="600" viewBox="1895 257 25 600">
<path d="M1903 271.5 L1908 266.5 L1913 271.5 M1903 808.5 L1908 813.5 L1913 808.5" stroke="#333" stroke-width="1.4" fill="none"/>
</svg>
<div class="a" style="left:1716px;top:823.6px;width:99.6px;height:18px;background:#cdcdcd"></div>
<svg style="left:1695px;top:820px" width="225" height="100" viewBox="1695 820 225 100">
<path d="M1709 827.5 L1704 832.5 L1709 837.5 M1885 827.5 L1890 832.5 L1885 837.5" stroke="#333" stroke-width="1.4" fill="none"/>
<g fill="none" stroke="#353b40" stroke-width="1.5" stroke-linejoin="round">
<path d="M1706 873 V861 L1712 856 H1717 L1723 861 V873 Z M1712 856 L1717 861 V873 M1717 861 H1723"/><circle cx="1729" cy="855" r="5.5" stroke="#3a86f0" stroke-width="1.3"/><path d="M1729 852 V858 M1726 855 H1732" stroke="#3a86f0" stroke-width="1.3"/>
<path d="M1744 873 V863 L1749 858 H1754 L1760 863 V873 Z M1749 858 L1754 863 V873"/><path d="M1742 875 Q1742 868 1748 868" stroke="#222" stroke-width="2"/><circle cx="1766" cy="855" r="5.5" stroke="#3a86f0" stroke-width="1.3"/><path d="M1766 852 V858 M1763 855 H1769" stroke="#3a86f0" stroke-width="1.3"/>
<path d="M1782 873 V859 H1788 L1790 862 H1799 V873 Z"/><circle cx="1802" cy="855" r="5.5" stroke="#3a86f0" stroke-width="1.3"/><path d="M1802 852 V858 M1799 855 H1805" stroke="#3a86f0" stroke-width="1.3"/>
<rect x="1820" y="857" width="18" height="14" rx="1.5" stroke="#b6d3f3" stroke-width="1.3"/><path d="M1823 861 H1825 M1827 861 H1835 M1823 864.5 H1825 M1827 864.5 H1835 M1823 868 H1825 M1827 868 H1835" stroke="#b6d3f3" stroke-width="1.2"/>
<path d="M1858 856 L1874 872 M1874 856 L1858 872" stroke="#eeb36a" stroke-width="1.8"/>
</g>
</svg>
<div class="a" style="left:1698px;top:886.8px;width:218px;height:26.2px;background:#dcdcdc;border-radius:3px"></div>
<svg style="left:1706px;top:895px" width="12" height="8"><path d="M1.5 1 H10 L5.75 6 Z" fill="#333"/></svg>
<div class="t" style="left:1728px;top:893px">Propriétés</div>
<div class="t" style="left:1757.5px;top:920.5px">Pas de sélection.</div>
</div>

<!-- quick options + status -->
<div id="bottom" style="font-size:13px;color:#1a1a1a">
<div class="a" style="left:116px;top:1028px;width:1578px;height:23px;background:#f0f0f0"></div>
<div class="a" style="left:0;top:1051px;width:1920px;height:1px;background:#d4d4d4"></div>
<div class="a" style="left:0;top:1078px;width:1920px;height:2px;background:#2e2e2e"></div>
<div class="t" style="left:354.5px;top:1033px;color:#8a8a8a;transform:translateX(-50%)">n/d</div>
<div class="t" style="left:505px;top:1033px;color:#8a8a8a;transform:translateX(-50%)">n/d</div>
<div class="t" style="left:640.4px;top:1033px;font-size:12.5px">1:100</div>
<div class="t" style="left:768.7px;top:1033px;font-size:12.7px">Personnalisé</div>
<div class="t" style="left:914.2px;top:1033px;font-size:13.3px">Modèle entier</div>
<div class="t" style="left:1058px;top:1033px">00 - Par outils ...</div>
<div class="t" style="left:1229.4px;top:1033px;font-size:13.2px">00 - Tout</div>
<div class="t" style="left:1358.4px;top:1033px;font-size:12.6px">Pas de substit...</div>
<div class="t" style="left:1508px;top:1033px;font-size:13.1px">00 - Nouvelle ...</div>
<svg style="left:100px;top:1028px" width="1600" height="24" viewBox="100 1028 1600 24">
<g stroke="#bdbdbd" stroke-width="1"><path d="M116.5 1028 V1051 M206.5 1030 V1050 M270.5 1030 V1050 M420.5 1030 V1050 M570.5 1030 V1050 M720.5 1030 V1050 M870.5 1030 V1050 M1021.5 1030 V1050 M1170.5 1030 V1050 M1320.5 1030 V1050 M1470.5 1030 V1050 M1693.5 1028 V1051"/></g>
<path d="M409 1036 L413 1039.5 L409 1043 Z M559 1036 L563 1039.5 L559 1043 Z" fill="#aaa"/>
<path d="M707 1036 L711 1039.5 L707 1043 Z M857.5 1036 L861.5 1039.5 L857.5 1043 Z M1007 1036 L1011 1039.5 L1007 1043 Z M1158 1036 L1162 1039.5 L1158 1043 Z M1307.5 1036 L1311.5 1039.5 L1307.5 1043 Z M1458 1036 L1462 1039.5 L1458 1043 Z M1608 1036 L1612 1039.5 L1608 1043 Z" fill="#222"/>
<g fill="none" stroke-width="1.4" stroke-linejoin="round">
<g stroke="#a8a8a8"><circle cx="133" cy="1038" r="7"/><path d="M124 1037 L127 1034 M124 1037 L128 1040 M128 1044 L124 1048"/><circle cx="162" cy="1038" r="7"/><path d="M170 1037 L167 1034 M170 1037 L166 1040 M166 1044 L170 1048"/></g>
<g stroke="#222"><circle cx="188" cy="1037" r="6.5"/><path d="M193 1042 L199 1048 M185 1037 H191 M188 1034 V1040"/>
<path d="M216 1036 Q216 1031 224 1031 Q232 1031 232 1036 Q232 1040 225 1040 M223 1036 L226 1040 L222 1043"/>
<circle cx="286" cy="1037" r="7"/><path d="M292 1042 L297 1048"/></g>
<g fill="#222" stroke="none"><circle cx="286" cy="1032.5" r="1.2"/><circle cx="286" cy="1041.5" r="1.2"/><circle cx="281.5" cy="1037" r="1.2"/><circle cx="290.5" cy="1037" r="1.2"/></g>
<path d="M251 1033 V1040 L248 1046 M251 1040 L255 1046 M247 1037 L255 1036" stroke="#a8a8a8"/><circle cx="252" cy="1031" r="1.2" fill="#a8a8a8" stroke="none"/>
<path d="M430 1035 L437 1031 L444 1038 L437 1042 Z M440 1044 Q445 1044 445 1038" stroke="#a8a8a8"/>
<g stroke="#222"><rect x="578.5" y="1034.5" width="17" height="8" rx="1"/><path d="M582 1035 V1038 M586 1035 V1038 M590 1035 V1038"/>
<path d="M728 1038 L744 1033 M728 1042 L744 1037 M728 1046 L744 1041 M728 1038 V1046 H744 V1033"/>
<rect x="879" y="1034" width="19" height="11"/><path d="M882 1034 L879 1038 M887 1034 L883 1038 M892 1034 L888 1038 M897 1034 L893 1038 M879 1038 H898"/>
<path d="M1034 1031 V1040 L1037 1046 L1040 1040 V1031 M1037 1040 V1046"/>
<rect x="1179" y="1032" width="17" height="13"/><rect x="1182" y="1035" width="11" height="7"/>
<path d="M1330 1036 V1046 H1339 V1036 Z M1334 1036 V1032 H1343 V1042 H1339 M1343 1032 L1347 1035"/>
<path d="M1478 1046 L1487 1033 L1496 1046 Z M1487 1033 V1046" stroke="#888"/><path d="M1488 1046 V1040 H1494 V1046" stroke="#222"/></g>
</g>
</svg>
<div class="t" style="left:3px;top:1059px;font-size:14.8px;color:#111">Cliquez sur un élément ou dessinez une surface de sélection. Appuyez sur Ctrl+Maj pour faire alterner la sélection de l'élément et des sous-éléments.</div>
<div class="a" style="left:1694px;top:1052px;width:1px;height:26px;background:#e0e0e0"></div>
<div class="a" style="left:1727px;top:1053px;width:1px;height:24px;background:#d0d0d0"></div>
<div class="a" style="left:1890px;top:1053px;width:1px;height:24px;background:#d0d0d0"></div>
<svg style="left:1700px;top:1056px" width="24" height="20"><path d="M1.5 11 V1.5 H15 M4.5 5 H20 V14.5 H4.5 Z" fill="none" stroke="#333d44" stroke-width="1.8"/></svg>
<div class="a" style="left:1913px;top:1074px;width:9px;height:6px;background:#2b1331;border-radius:4px 0 0 0"></div>
<div class="t" style="left:1747.7px;top:1057.5px;font-size:16px;color:#979d9f;letter-spacing:-0.2px">GRAPHISOFT ID</div>
</div>

</body></html>
